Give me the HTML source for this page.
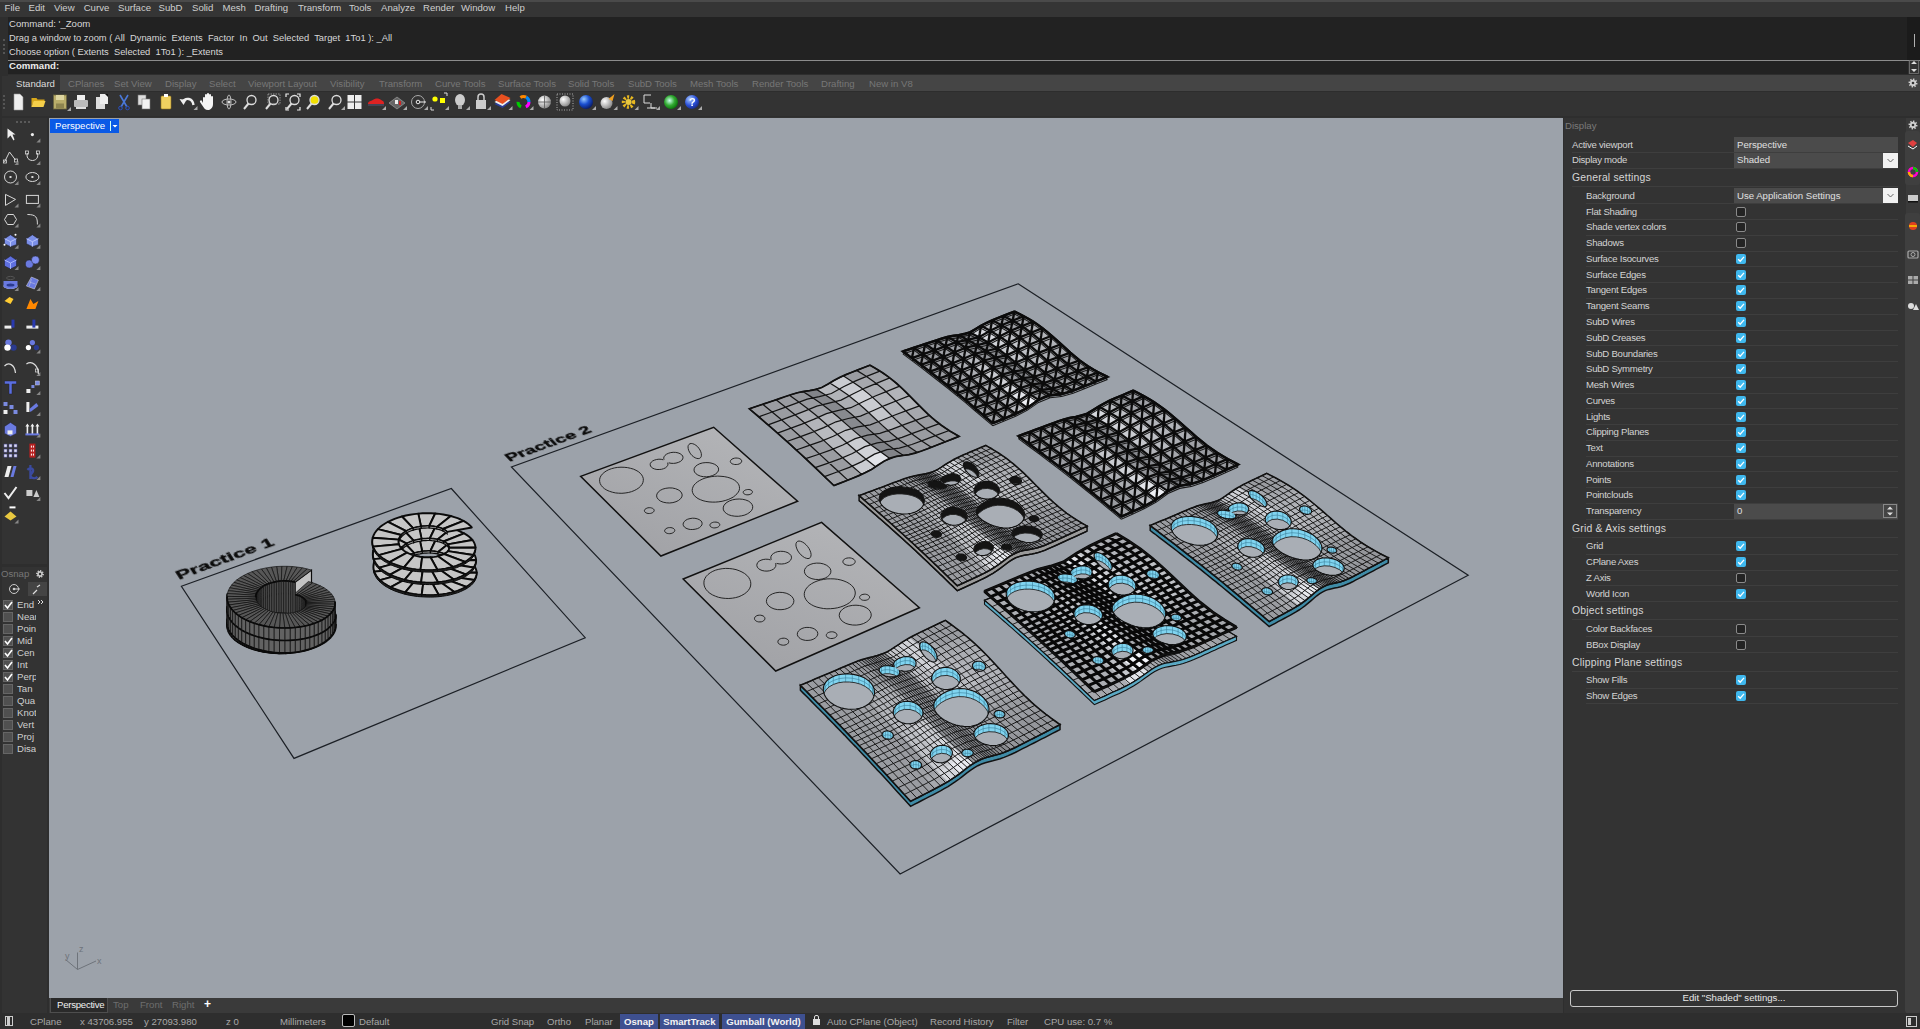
<!DOCTYPE html><html><head><meta charset="utf-8"><style>
*{margin:0;padding:0;box-sizing:border-box}
html,body{width:1920px;height:1029px;overflow:hidden;background:#333;font-family:"Liberation Sans",sans-serif;color:#d8d8d8}
.a{position:absolute}
.t{position:absolute;white-space:nowrap;font-size:9.6px;line-height:12px}
.pl{letter-spacing:-0.25px}
.r{position:absolute;left:1586px;width:312px;height:1px;background:#3e3e3e}
.cb{position:absolute;left:1736px;width:10px;height:10px;border-radius:2px}
.on{background:#3fb8ee}
.off{background:#232323;border:1px solid #8a8a8a}
.vb{position:absolute;left:1734px;width:164px;height:15px;background:#4b4b4b}
.dd{position:absolute;left:1883px;width:15px;height:15px;background:#f2f2f2}
.ock{position:absolute;left:3px;width:10px;height:10px;background:#505050;border:1px solid #666}
.st{position:absolute;top:1014px;height:15px;white-space:nowrap;font-size:9.6px;line-height:15px;color:#a8a8a8}
</style></head><body>
<div class="a" style="left:0;top:0;width:1920px;height:2px;background:#4a4a4a"></div>
<div class="a" style="left:0;top:2px;width:1920px;height:15px;background:#353535"></div>
<div class="t" style="left:4.6px;top:2px;color:#cfcfcf">File</div>
<div class="t" style="left:28.5px;top:2px;color:#cfcfcf">Edit</div>
<div class="t" style="left:54px;top:2px;color:#cfcfcf">View</div>
<div class="t" style="left:83.7px;top:2px;color:#cfcfcf">Curve</div>
<div class="t" style="left:118px;top:2px;color:#cfcfcf">Surface</div>
<div class="t" style="left:158.5px;top:2px;color:#cfcfcf">SubD</div>
<div class="t" style="left:192px;top:2px;color:#cfcfcf">Solid</div>
<div class="t" style="left:222.5px;top:2px;color:#cfcfcf">Mesh</div>
<div class="t" style="left:254.5px;top:2px;color:#cfcfcf">Drafting</div>
<div class="t" style="left:298px;top:2px;color:#cfcfcf">Transform</div>
<div class="t" style="left:349px;top:2px;color:#cfcfcf">Tools</div>
<div class="t" style="left:381px;top:2px;color:#cfcfcf">Analyze</div>
<div class="t" style="left:423px;top:2px;color:#cfcfcf">Render</div>
<div class="t" style="left:461px;top:2px;color:#cfcfcf">Window</div>
<div class="t" style="left:505px;top:2px;color:#cfcfcf">Help</div>
<div class="a" style="left:0;top:17px;width:8px;height:57px;background:#2e2e2e"></div>
<div class="a" style="left:8px;top:17px;width:1900px;height:57px;background:#222"></div>
<div class="a" style="left:1907px;top:17px;width:13px;height:43px;background:#1b1b1b"></div>
<div class="a" style="left:1914px;top:34px;width:1px;height:13px;background:#b0b0b0"></div>
<div class="a" style="left:8px;top:60px;width:1912px;height:1px;background:#8c8c8c"></div>
<div class="t" style="left:9px;top:18px">Command: '_Zoom</div>
<div class="t" style="left:9px;top:32px;font-size:9.35px">Drag a window to zoom ( All&nbsp; Dynamic&nbsp; Extents&nbsp; Factor&nbsp; In&nbsp; Out&nbsp; Selected&nbsp; Target&nbsp; 1To1 ): _All</div>
<div class="t" style="left:9px;top:46px;font-size:9.35px">Choose option ( Extents&nbsp; Selected&nbsp; 1To1 ): _Extents</div>
<div class="t" style="left:9px;top:60px;color:#ececec;font-weight:bold">Command:</div>
<div class="a" style="left:3px;top:39px;width:2px;height:2px;background:#555"></div>
<div class="a" style="left:3px;top:44px;width:2px;height:2px;background:#555"></div>
<div class="a" style="left:3px;top:48px;width:2px;height:2px;background:#555"></div>
<div class="a" style="left:3px;top:52px;width:2px;height:2px;background:#555"></div>
<div class="a" style="left:0;top:74px;width:1920px;height:43px;background:#2e2e2e"></div>
<div class="a" style="left:2px;top:76px;width:1918px;height:40px;background:#333"></div>
<div class="a" style="left:8px;top:75px;width:1912px;height:16px;background:#454545"></div>
<div class="a" style="left:8px;top:91px;width:1912px;height:1px;background:#2d2d2d"></div>
<div class="a" style="left:8px;top:75px;width:52px;height:17px;background:#333"></div>
<div class="t" style="left:16px;top:78px;color:#dcdcdc">Standard</div>
<div class="t" style="left:68px;top:78px;color:#777">CPlanes</div>
<div class="t" style="left:114px;top:78px;color:#777">Set View</div>
<div class="t" style="left:165px;top:78px;color:#777">Display</div>
<div class="t" style="left:209px;top:78px;color:#777">Select</div>
<div class="t" style="left:248px;top:78px;color:#777">Viewport Layout</div>
<div class="t" style="left:330px;top:78px;color:#777">Visibility</div>
<div class="t" style="left:379px;top:78px;color:#777">Transform</div>
<div class="t" style="left:435px;top:78px;color:#777">Curve Tools</div>
<div class="t" style="left:498px;top:78px;color:#777">Surface Tools</div>
<div class="t" style="left:568px;top:78px;color:#777">Solid Tools</div>
<div class="t" style="left:628px;top:78px;color:#777">SubD Tools</div>
<div class="t" style="left:690px;top:78px;color:#777">Mesh Tools</div>
<div class="t" style="left:752px;top:78px;color:#777">Render Tools</div>
<div class="t" style="left:821px;top:78px;color:#777">Drafting</div>
<div class="t" style="left:869px;top:78px;color:#777">New in V8</div>
<div class="a" style="left:3px;top:95px;width:2px;height:2px;background:#555"></div>
<div class="a" style="left:3px;top:99px;width:2px;height:2px;background:#555"></div>
<div class="a" style="left:3px;top:103px;width:2px;height:2px;background:#555"></div>
<div class="a" style="left:3px;top:107px;width:2px;height:2px;background:#555"></div>
<div class="a" style="left:0;top:117px;width:49px;height:896px;background:#2e2e2e"></div>
<div class="a" style="left:2px;top:118px;width:45px;height:446px;background:#333"></div>
<div class="a" style="left:16px;top:121px;width:2px;height:2px;background:#5a5a5a"></div>
<div class="a" style="left:20px;top:121px;width:2px;height:2px;background:#5a5a5a"></div>
<div class="a" style="left:24px;top:121px;width:2px;height:2px;background:#5a5a5a"></div>
<div class="a" style="left:28px;top:121px;width:2px;height:2px;background:#5a5a5a"></div>
<div class="a" style="left:2px;top:567px;width:45px;height:446px;background:#333"></div>
<div class="t" style="left:1px;top:568px;color:#777">Osnap</div>
<div class="a" style="left:28px;top:582px;width:19px;height:14px;background:#444"></div>
<div class="ock" style="top:600px"></div>
<div class="t" style="left:17px;top:599px;color:#d0d0d0;width:19px;overflow:hidden">End</div>
<div class="ock" style="top:612px"></div>
<div class="t" style="left:17px;top:611px;color:#d0d0d0;width:19px;overflow:hidden">Near</div>
<div class="ock" style="top:624px"></div>
<div class="t" style="left:17px;top:623px;color:#d0d0d0;width:19px;overflow:hidden">Poin</div>
<div class="ock" style="top:636px"></div>
<div class="t" style="left:17px;top:635px;color:#d0d0d0;width:19px;overflow:hidden">Mid</div>
<div class="ock" style="top:648px"></div>
<div class="t" style="left:17px;top:647px;color:#d0d0d0;width:19px;overflow:hidden">Cen</div>
<div class="ock" style="top:660px"></div>
<div class="t" style="left:17px;top:659px;color:#d0d0d0;width:19px;overflow:hidden">Int</div>
<div class="ock" style="top:672px"></div>
<div class="t" style="left:17px;top:671px;color:#d0d0d0;width:19px;overflow:hidden">Perp</div>
<div class="ock" style="top:684px"></div>
<div class="t" style="left:17px;top:683px;color:#d0d0d0;width:19px;overflow:hidden">Tan</div>
<div class="ock" style="top:696px"></div>
<div class="t" style="left:17px;top:695px;color:#d0d0d0;width:19px;overflow:hidden">Qua</div>
<div class="ock" style="top:708px"></div>
<div class="t" style="left:17px;top:707px;color:#d0d0d0;width:19px;overflow:hidden">Knot</div>
<div class="ock" style="top:720px"></div>
<div class="t" style="left:17px;top:719px;color:#d0d0d0;width:19px;overflow:hidden">Vert</div>
<div class="ock" style="top:732px"></div>
<div class="t" style="left:17px;top:731px;color:#d0d0d0;width:19px;overflow:hidden">Proj</div>
<div class="ock" style="top:744px"></div>
<div class="t" style="left:17px;top:743px;color:#d0d0d0;width:19px;overflow:hidden">Disa</div>
<div class="a" style="left:1562px;top:117px;width:358px;height:896px;background:#2e2e2e"></div>
<div class="a" style="left:1564px;top:118px;width:342px;height:895px;background:#333"></div>
<div class="a" style="left:1906px;top:118px;width:14px;height:895px;background:#3a3a3a"></div>
<div class="t" style="left:1565px;top:120px;color:#7a7a7a">Display</div>
<div class="t pl" style="left:1572px;top:138.6px;color:#d4d4d4">Active viewport</div>
<div class="r" style="left:1572px;width:326px;top:152.1px"></div>
<div class="vb" style="top:137.1px"></div>
<div class="t" style="left:1737px;top:138.6px;color:#e0e0e0">Perspective</div>
<div class="t pl" style="left:1572px;top:154.4px;color:#d4d4d4">Display mode</div>
<div class="r" style="left:1572px;width:326px;top:167.9px"></div>
<div class="vb" style="top:152.9px"></div>
<div class="t" style="left:1737px;top:154.4px;color:#e0e0e0">Shaded</div>
<div class="dd" style="top:152.9px"></div>
<svg class="a" style="left:1883px;top:152.9px" width="15" height="15"><path d="M4.5,6L7.5,9L10.5,6" stroke="#666" stroke-width="1" fill="none"/></svg>
<div class="t" style="left:1572px;top:171.4px;font-size:10.4px;line-height:14px;color:#d6d6d6;letter-spacing:0.2px">General settings</div>
<div class="r" style="left:1572px;width:326px;top:186.4px"></div>
<div class="t pl" style="left:1586px;top:189.5px;color:#d4d4d4">Background</div>
<div class="r" style="left:1586px;width:312px;top:203.0px"></div>
<div class="vb" style="top:188.0px"></div>
<div class="t" style="left:1737px;top:189.5px;color:#e0e0e0">Use Application Settings</div>
<div class="dd" style="top:188.0px"></div>
<svg class="a" style="left:1883px;top:188.0px" width="15" height="15"><path d="M4.5,6L7.5,9L10.5,6" stroke="#666" stroke-width="1" fill="none"/></svg>
<div class="t pl" style="left:1586px;top:205.5px;color:#d4d4d4">Flat Shading</div>
<div class="r" style="left:1586px;width:312px;top:219.0px"></div>
<div class="cb off" style="top:206.5px"></div>
<div class="t pl" style="left:1586px;top:221.3px;color:#d4d4d4">Shade vertex colors</div>
<div class="r" style="left:1586px;width:312px;top:234.8px"></div>
<div class="cb off" style="top:222.3px"></div>
<div class="t pl" style="left:1586px;top:237.1px;color:#d4d4d4">Shadows</div>
<div class="r" style="left:1586px;width:312px;top:250.6px"></div>
<div class="cb off" style="top:238.1px"></div>
<div class="t pl" style="left:1586px;top:252.9px;color:#d4d4d4">Surface Isocurves</div>
<div class="r" style="left:1586px;width:312px;top:266.4px"></div>
<div class="cb on" style="top:253.9px"></div>
<svg class="a" style="left:1736px;top:253.9px" width="10" height="10"><path d="M2.2,5.2L4.2,7.2L8,2.8" stroke="#fff" stroke-width="1.3" fill="none"/></svg>
<div class="t pl" style="left:1586px;top:268.7px;color:#d4d4d4">Surface Edges</div>
<div class="r" style="left:1586px;width:312px;top:282.2px"></div>
<div class="cb on" style="top:269.7px"></div>
<svg class="a" style="left:1736px;top:269.7px" width="10" height="10"><path d="M2.2,5.2L4.2,7.2L8,2.8" stroke="#fff" stroke-width="1.3" fill="none"/></svg>
<div class="t pl" style="left:1586px;top:284.4px;color:#d4d4d4">Tangent Edges</div>
<div class="r" style="left:1586px;width:312px;top:297.9px"></div>
<div class="cb on" style="top:285.4px"></div>
<svg class="a" style="left:1736px;top:285.4px" width="10" height="10"><path d="M2.2,5.2L4.2,7.2L8,2.8" stroke="#fff" stroke-width="1.3" fill="none"/></svg>
<div class="t pl" style="left:1586px;top:300.2px;color:#d4d4d4">Tangent Seams</div>
<div class="r" style="left:1586px;width:312px;top:313.7px"></div>
<div class="cb on" style="top:301.2px"></div>
<svg class="a" style="left:1736px;top:301.2px" width="10" height="10"><path d="M2.2,5.2L4.2,7.2L8,2.8" stroke="#fff" stroke-width="1.3" fill="none"/></svg>
<div class="t pl" style="left:1586px;top:316.0px;color:#d4d4d4">SubD Wires</div>
<div class="r" style="left:1586px;width:312px;top:329.5px"></div>
<div class="cb on" style="top:317.0px"></div>
<svg class="a" style="left:1736px;top:317.0px" width="10" height="10"><path d="M2.2,5.2L4.2,7.2L8,2.8" stroke="#fff" stroke-width="1.3" fill="none"/></svg>
<div class="t pl" style="left:1586px;top:331.7px;color:#d4d4d4">SubD Creases</div>
<div class="r" style="left:1586px;width:312px;top:345.2px"></div>
<div class="cb on" style="top:332.7px"></div>
<svg class="a" style="left:1736px;top:332.7px" width="10" height="10"><path d="M2.2,5.2L4.2,7.2L8,2.8" stroke="#fff" stroke-width="1.3" fill="none"/></svg>
<div class="t pl" style="left:1586px;top:347.5px;color:#d4d4d4">SubD Boundaries</div>
<div class="r" style="left:1586px;width:312px;top:361.0px"></div>
<div class="cb on" style="top:348.5px"></div>
<svg class="a" style="left:1736px;top:348.5px" width="10" height="10"><path d="M2.2,5.2L4.2,7.2L8,2.8" stroke="#fff" stroke-width="1.3" fill="none"/></svg>
<div class="t pl" style="left:1586px;top:363.3px;color:#d4d4d4">SubD Symmetry</div>
<div class="r" style="left:1586px;width:312px;top:376.8px"></div>
<div class="cb on" style="top:364.3px"></div>
<svg class="a" style="left:1736px;top:364.3px" width="10" height="10"><path d="M2.2,5.2L4.2,7.2L8,2.8" stroke="#fff" stroke-width="1.3" fill="none"/></svg>
<div class="t pl" style="left:1586px;top:379.0px;color:#d4d4d4">Mesh Wires</div>
<div class="r" style="left:1586px;width:312px;top:392.5px"></div>
<div class="cb on" style="top:380.0px"></div>
<svg class="a" style="left:1736px;top:380.0px" width="10" height="10"><path d="M2.2,5.2L4.2,7.2L8,2.8" stroke="#fff" stroke-width="1.3" fill="none"/></svg>
<div class="t pl" style="left:1586px;top:394.8px;color:#d4d4d4">Curves</div>
<div class="r" style="left:1586px;width:312px;top:408.3px"></div>
<div class="cb on" style="top:395.8px"></div>
<svg class="a" style="left:1736px;top:395.8px" width="10" height="10"><path d="M2.2,5.2L4.2,7.2L8,2.8" stroke="#fff" stroke-width="1.3" fill="none"/></svg>
<div class="t pl" style="left:1586px;top:410.6px;color:#d4d4d4">Lights</div>
<div class="r" style="left:1586px;width:312px;top:424.1px"></div>
<div class="cb on" style="top:411.6px"></div>
<svg class="a" style="left:1736px;top:411.6px" width="10" height="10"><path d="M2.2,5.2L4.2,7.2L8,2.8" stroke="#fff" stroke-width="1.3" fill="none"/></svg>
<div class="t pl" style="left:1586px;top:426.4px;color:#d4d4d4">Clipping Planes</div>
<div class="r" style="left:1586px;width:312px;top:439.9px"></div>
<div class="cb on" style="top:427.4px"></div>
<svg class="a" style="left:1736px;top:427.4px" width="10" height="10"><path d="M2.2,5.2L4.2,7.2L8,2.8" stroke="#fff" stroke-width="1.3" fill="none"/></svg>
<div class="t pl" style="left:1586px;top:442.1px;color:#d4d4d4">Text</div>
<div class="r" style="left:1586px;width:312px;top:455.6px"></div>
<div class="cb on" style="top:443.1px"></div>
<svg class="a" style="left:1736px;top:443.1px" width="10" height="10"><path d="M2.2,5.2L4.2,7.2L8,2.8" stroke="#fff" stroke-width="1.3" fill="none"/></svg>
<div class="t pl" style="left:1586px;top:457.9px;color:#d4d4d4">Annotations</div>
<div class="r" style="left:1586px;width:312px;top:471.4px"></div>
<div class="cb on" style="top:458.9px"></div>
<svg class="a" style="left:1736px;top:458.9px" width="10" height="10"><path d="M2.2,5.2L4.2,7.2L8,2.8" stroke="#fff" stroke-width="1.3" fill="none"/></svg>
<div class="t pl" style="left:1586px;top:473.7px;color:#d4d4d4">Points</div>
<div class="r" style="left:1586px;width:312px;top:487.2px"></div>
<div class="cb on" style="top:474.7px"></div>
<svg class="a" style="left:1736px;top:474.7px" width="10" height="10"><path d="M2.2,5.2L4.2,7.2L8,2.8" stroke="#fff" stroke-width="1.3" fill="none"/></svg>
<div class="t pl" style="left:1586px;top:489.4px;color:#d4d4d4">Pointclouds</div>
<div class="r" style="left:1586px;width:312px;top:502.9px"></div>
<div class="cb on" style="top:490.4px"></div>
<svg class="a" style="left:1736px;top:490.4px" width="10" height="10"><path d="M2.2,5.2L4.2,7.2L8,2.8" stroke="#fff" stroke-width="1.3" fill="none"/></svg>
<div class="t pl" style="left:1586px;top:505.2px;color:#d4d4d4">Transparency</div>
<div class="r" style="left:1586px;width:312px;top:518.7px"></div>
<div class="vb" style="top:503.7px"></div>
<div class="t" style="left:1737px;top:505.2px;color:#e0e0e0">0</div>
<div class="a" style="left:1883px;top:504.2px;width:14px;height:14px;border:1px solid #888;background:#444"></div>
<svg class="a" style="left:1883px;top:504.2px" width="14" height="14"><path d="M4,5.5L7,2.5L10,5.5ZM4,8.5L7,11.5L10,8.5Z" fill="#ddd"/></svg>
<div class="t" style="left:1572px;top:522.0px;font-size:10.4px;line-height:14px;color:#d6d6d6;letter-spacing:0.2px">Grid &amp; Axis settings</div>
<div class="r" style="left:1572px;width:326px;top:537.0px"></div>
<div class="t pl" style="left:1586px;top:540.3px;color:#d4d4d4">Grid</div>
<div class="r" style="left:1586px;width:312px;top:553.8px"></div>
<div class="cb on" style="top:541.3px"></div>
<svg class="a" style="left:1736px;top:541.3px" width="10" height="10"><path d="M2.2,5.2L4.2,7.2L8,2.8" stroke="#fff" stroke-width="1.3" fill="none"/></svg>
<div class="t pl" style="left:1586px;top:556.0px;color:#d4d4d4">CPlane Axes</div>
<div class="r" style="left:1586px;width:312px;top:569.5px"></div>
<div class="cb on" style="top:557.0px"></div>
<svg class="a" style="left:1736px;top:557.0px" width="10" height="10"><path d="M2.2,5.2L4.2,7.2L8,2.8" stroke="#fff" stroke-width="1.3" fill="none"/></svg>
<div class="t pl" style="left:1586px;top:571.8px;color:#d4d4d4">Z Axis</div>
<div class="r" style="left:1586px;width:312px;top:585.3px"></div>
<div class="cb off" style="top:572.8px"></div>
<div class="t pl" style="left:1586px;top:587.6px;color:#d4d4d4">World Icon</div>
<div class="r" style="left:1586px;width:312px;top:601.1px"></div>
<div class="cb on" style="top:588.6px"></div>
<svg class="a" style="left:1736px;top:588.6px" width="10" height="10"><path d="M2.2,5.2L4.2,7.2L8,2.8" stroke="#fff" stroke-width="1.3" fill="none"/></svg>
<div class="t" style="left:1572px;top:604.2px;font-size:10.4px;line-height:14px;color:#d6d6d6;letter-spacing:0.2px">Object settings</div>
<div class="r" style="left:1572px;width:326px;top:619.2px"></div>
<div class="t pl" style="left:1586px;top:622.8px;color:#d4d4d4">Color Backfaces</div>
<div class="r" style="left:1586px;width:312px;top:636.3px"></div>
<div class="cb off" style="top:623.8px"></div>
<div class="t pl" style="left:1586px;top:638.5px;color:#d4d4d4">BBox Display</div>
<div class="r" style="left:1586px;width:312px;top:652.0px"></div>
<div class="cb off" style="top:639.5px"></div>
<div class="t" style="left:1572px;top:655.5px;font-size:10.4px;line-height:14px;color:#d6d6d6;letter-spacing:0.2px">Clipping Plane settings</div>
<div class="r" style="left:1572px;width:326px;top:670.5px"></div>
<div class="t pl" style="left:1586px;top:674.0px;color:#d4d4d4">Show Fills</div>
<div class="r" style="left:1586px;width:312px;top:687.5px"></div>
<div class="cb on" style="top:675.0px"></div>
<svg class="a" style="left:1736px;top:675.0px" width="10" height="10"><path d="M2.2,5.2L4.2,7.2L8,2.8" stroke="#fff" stroke-width="1.3" fill="none"/></svg>
<div class="t pl" style="left:1586px;top:689.8px;color:#d4d4d4">Show Edges</div>
<div class="r" style="left:1586px;width:312px;top:703.3px"></div>
<div class="cb on" style="top:690.8px"></div>
<svg class="a" style="left:1736px;top:690.8px" width="10" height="10"><path d="M2.2,5.2L4.2,7.2L8,2.8" stroke="#fff" stroke-width="1.3" fill="none"/></svg>
<div class="a" style="left:1570px;top:990px;width:328px;height:17px;border:1.5px solid #c8c8c8;border-radius:3px"></div>
<div class="t" style="left:1570px;top:992px;width:328px;text-align:center;color:#e8e8e8">Edit "Shaded" settings...</div>
<div class="a" style="left:49px;top:118px;width:1514px;height:880px;background:#9ca2aa;overflow:hidden">
<svg width="1920" height="1029" style="position:absolute;left:-49px;top:-118px" viewBox="0 0 1920 1029"><polygon points="451.3,488.5 585.2,637.7 294.0,758.4 181.4,586.3" fill="none" stroke="#1c2026" stroke-width="1.2"/><polygon points="1018.1,283.8 1468.2,575.3 900.1,874.0 511.4,467.0" fill="none" stroke="#1c2026" stroke-width="1.2"/><linearGradient id="g1" gradientUnits="userSpaceOnUse" x1="660.9" y1="556.0" x2="713.7" y2="427.3"><stop offset="0" stop-color="#a2a3a7"/><stop offset="1" stop-color="#b2b3b6"/></linearGradient><polygon points="580.6,476.4 713.7,427.3 797.6,501.3 660.9,556" fill="url(#g1)" stroke="#111" stroke-width="1.5" stroke-linejoin="miter"/><path d="M640.2,473.2 641.7,474.9 642.7,476.7 643.3,478.6 643.3,480.5 642.9,482.5 642,484.4 640.7,486.1 638.9,487.8 636.7,489.3 634.2,490.6 631.4,491.7 628.3,492.5 625.1,493 621.9,493.3 618.6,493.2 615.4,492.9 612.3,492.2 609.5,491.3 606.9,490.2 604.6,488.8 602.7,487.2 601.3,485.5 600.2,483.6 599.7,481.7 599.6,479.7 600,477.8 600.9,475.9 602.3,474.1 604.1,472.5 606.2,471 608.7,469.7 611.5,468.7 614.5,467.9 617.7,467.4 621,467.2 624.2,467.3 627.4,467.6 630.5,468.3 633.4,469.1 636,470.3 638.3,471.6 640.2,473.2 M667.6,462.7 668,464.1 667.7,465.4 666.8,466.7 665.5,467.8 663.6,468.7 661.5,469.3 659.2,469.5 656.9,469.5 654.7,469 652.9,468.3 651.4,467.2 650.5,466 650.2,464.7 650.4,463.3 651.3,462.1 652.6,461 654.5,460.1 656.6,459.5 658.9,459.2 661.2,459.3 663.3,459.8 M681.7,454.8 682.7,456 683,457.4 682.7,458.9 681.8,460.3 680.3,461.5 678.3,462.4 676,463.1 673.5,463.4 671,463.3 668.7,462.8 M664.1,459.6 663.7,458.2 664,456.8 665,455.4 666.5,454.2 668.4,453.3 670.7,452.6 673.2,452.3 675.7,452.4 678.1,452.9 680.1,453.7 681.7,454.8 M700,450 700.8,451.8 701.3,453.6 701.4,455.2 701.2,456.6 700.5,457.7 699.5,458.4 698.2,458.6 696.8,458.4 695.2,457.8 693.6,456.8 692,455.5 690.6,453.9 689.5,452.1 688.6,450.2 688.2,448.5 688,446.8 688.3,445.4 689,444.4 690,443.7 691.2,443.5 692.7,443.7 694.3,444.3 695.9,445.3 697.5,446.6 698.8,448.2 700,450 M740.9,459.4 741.5,460.2 741.7,461 741.6,461.9 741.1,462.7 740.2,463.4 739.1,464 737.7,464.4 736.2,464.5 734.7,464.5 733.4,464.2 732.1,463.8 731.2,463.1 730.6,462.4 730.3,461.5 730.5,460.7 731,459.9 731.9,459.2 733,458.6 734.4,458.2 735.9,458 737.3,458.1 738.7,458.3 739.9,458.8 740.9,459.4 M716.8,465.7 718.1,467.3 718.6,469.1 718.3,471 717.1,472.7 715.2,474.3 712.7,475.5 709.8,476.4 706.6,476.8 703.4,476.7 700.4,476.1 697.8,475 695.8,473.6 694.5,472 694,470.1 694.3,468.3 695.4,466.5 697.3,465 699.8,463.7 702.7,462.9 705.9,462.6 709.1,462.7 712.1,463.3 714.7,464.3 716.8,465.7 M738.9,484.9 739.4,486.7 739.5,488.5 739.2,490.3 738.3,492.1 737,493.8 735.3,495.4 733.3,497 730.9,498.3 728.2,499.5 725.2,500.5 722.1,501.3 718.8,501.8 715.5,502.1 712.2,502.1 709,501.9 705.9,501.4 703,500.7 700.4,499.7 698,498.6 696.1,497.2 694.4,495.7 693.3,494.1 692.5,492.3 692.2,490.5 692.4,488.7 693,486.9 694,485.1 695.5,483.5 697.4,481.9 699.6,480.5 702.2,479.2 705,478.1 708,477.3 711.2,476.7 714.4,476.3 717.7,476.1 721,476.3 724.2,476.6 727.2,477.2 730,478 732.5,479.1 734.7,480.3 736.5,481.7 737.9,483.3 738.9,484.9 M680.3,491.2 681.6,493 682.2,494.9 681.8,496.9 680.6,498.7 678.6,500.4 676,501.7 672.9,502.6 669.6,503 666.3,502.8 663.2,502.2 660.5,501.1 658.5,499.6 657.1,497.8 656.6,495.9 657,493.9 658.2,492.1 660.2,490.4 662.8,489.1 665.8,488.3 669.1,487.9 672.4,488 675.5,488.7 678.2,489.8 680.3,491.2 M751.8,490.6 752.3,491.2 752.4,491.9 752.3,492.6 751.9,493.3 751.2,493.9 750.2,494.3 749.1,494.7 748,494.8 746.8,494.8 745.6,494.6 744.7,494.2 743.9,493.7 743.4,493.1 743.2,492.4 743.3,491.7 743.8,491 744.5,490.5 745.4,490 746.5,489.7 747.7,489.5 748.9,489.5 750,489.7 751,490.1 751.8,490.6 M750.6,502.6 752,504.4 752.7,506.3 752.6,508.3 751.7,510.3 750,512.1 747.7,513.7 744.9,515 741.7,515.8 738.3,516.3 734.8,516.2 731.6,515.7 728.7,514.8 726.3,513.4 724.5,511.8 723.4,509.9 723.2,507.9 723.7,505.9 725,504 727,502.3 729.5,500.9 732.6,499.8 735.9,499.2 739.3,499 742.7,499.3 745.8,500 748.5,501.1 750.6,502.6 M653.5,509 654,509.7 654.2,510.4 654,511.2 653.5,511.9 652.8,512.5 651.8,513 650.6,513.4 649.3,513.5 648.1,513.5 646.9,513.2 645.9,512.8 645.1,512.2 644.6,511.5 644.4,510.8 644.5,510 645,509.3 645.8,508.7 646.8,508.2 647.9,507.8 649.2,507.7 650.5,507.7 651.6,508 652.7,508.4 653.5,509 M700.8,520.7 701.8,522 702.1,523.4 701.9,524.9 700.9,526.3 699.5,527.6 697.5,528.6 695.2,529.2 692.8,529.5 690.3,529.5 688,529 686,528.2 684.5,527.1 683.5,525.8 683.1,524.3 683.4,522.9 684.3,521.5 685.8,520.2 687.7,519.2 690,518.6 692.5,518.2 694.9,518.3 697.2,518.8 699.2,519.6 700.8,520.7 M719.1,523.3 719.6,524 719.8,524.7 719.6,525.5 719.1,526.2 718.4,526.8 717.4,527.4 716.2,527.7 714.9,527.9 713.6,527.9 712.4,527.6 711.4,527.2 710.6,526.7 710.1,526 709.9,525.2 710,524.5 710.5,523.7 711.3,523.1 712.3,522.6 713.5,522.2 714.7,522.1 716,522.1 717.2,522.3 718.3,522.7 719.1,523.3 M674,528.9 674.6,529.6 674.8,530.4 674.6,531.2 674.1,531.9 673.3,532.6 672.3,533.1 671.1,533.5 669.8,533.7 668.4,533.6 667.2,533.4 666.2,532.9 665.3,532.3 664.8,531.6 664.6,530.8 664.8,530 665.3,529.3 666.1,528.6 667.1,528.1 668.3,527.7 669.6,527.6 670.9,527.6 672.2,527.9 673.2,528.3 674,528.9" fill="none" stroke="#1e1e1e" stroke-width="0.95"/><path d="M749.3,408.8 762.7,404.3 772.2,412 758.7,416.8ZM758.7,416.8 772.2,412 781.6,419.9 768.1,424.9ZM777.5,433.1 791.1,428.1 800.5,436.6 786.9,441.5ZM786.9,441.5 800.5,436.6 810,445.2 796.3,450ZM796.3,450 810,445.2 819.4,454 805.7,458.7ZM805.7,458.7 819.4,454 828.9,462.8 815.1,467.6ZM815.1,467.6 828.9,462.8 838.4,471.5 824.5,476.6ZM762.7,404.3 776.1,399.8 785.6,407.2 772.2,412ZM772.2,412 785.6,407.2 795.1,414.9 781.6,419.9ZM810,445.2 823.7,440.3 833.2,449.1 819.4,454ZM819.4,454 833.2,449.1 842.7,457.8 828.9,462.8ZM828.9,462.8 842.7,457.8 852.2,466.2 838.4,471.5ZM776.1,399.8 789.5,395.2 799.1,402.1 785.6,407.2ZM799.1,402.1 812.6,397.7 822.2,404.4 808.7,409.4ZM855.1,417.5 868.7,412.6 878.4,421.8 864.7,426ZM897.9,438.8 911.7,433.7 921.5,440.9 907.6,445.9ZM907.6,445.9 921.5,440.9 931.3,447.3 917.4,452.5ZM843.2,375.8 856.6,370.4 866.4,376.4 853,382ZM901.9,425.3 915.7,420.4 925.5,428.7 911.7,433.7ZM911.7,433.7 925.5,428.7 935.3,435.7 921.5,440.9ZM921.5,440.9 935.3,435.7 945.2,441.9 931.3,447.3ZM856.6,370.4 870,365.2 879.9,371.1 866.4,376.4ZM915.7,420.4 929.4,415.4 939.3,423.7 925.5,428.7ZM925.5,428.7 939.3,423.7 949.2,430.5 935.3,435.7ZM935.3,435.7 949.2,430.5 959.1,436.4 945.2,441.9Z" fill="#9a9ca1" stroke="#9a9ca1" stroke-width="0.8"/><path d="M768.1,424.9 781.6,419.9 791.1,428.1 777.5,433.1ZM824.5,476.6 838.4,471.5 847.8,480.1 833.9,485.6ZM781.6,419.9 795.1,414.9 804.7,423 791.1,428.1ZM791.1,428.1 804.7,423 814.2,431.5 800.5,436.6ZM800.5,436.6 814.2,431.5 823.7,440.3 810,445.2ZM838.4,471.5 852.2,466.2 861.7,474.4 847.8,480.1ZM785.6,407.2 799.1,402.1 808.7,409.4 795.1,414.9ZM808.7,409.4 822.2,404.4 831.8,411.8 818.2,417.3ZM888.2,430.7 901.9,425.3 911.7,433.7 897.9,438.8ZM866.4,376.4 879.9,371.1 889.8,377.9 876.3,383.4Z" fill="#a0a2a7" stroke="#a0a2a7" stroke-width="0.8"/><path d="M795.1,414.9 808.7,409.4 818.2,417.3 804.7,423ZM835.7,401.9 849.2,396 859,403.9 845.4,409.3ZM862.8,389 876.3,383.4 886.1,391.6 872.5,397.2ZM876.3,383.4 889.8,377.9 899.7,386.2 886.1,391.6Z" fill="#acaeb3" stroke="#acaeb3" stroke-width="0.8"/><path d="M804.7,423 818.2,417.3 827.8,425.6 814.2,431.5ZM818.2,417.3 831.8,411.8 841.4,419.9 827.8,425.6ZM826,395.4 839.5,389.2 849.2,396 835.7,401.9ZM878.4,421.8 892.1,416.1 901.9,425.3 888.2,430.7ZM872.5,397.2 886.1,391.6 896,401 882.3,406.4ZM882.3,406.4 896,401 905.8,410.9 892.1,416.1ZM886.1,391.6 899.7,386.2 909.6,395.7 896,401ZM896,401 909.6,395.7 919.5,405.9 905.8,410.9Z" fill="#b2b4b9" stroke="#b2b4b9" stroke-width="0.8"/><path d="M814.2,431.5 827.8,425.6 837.4,434.3 823.7,440.3ZM823.7,440.3 837.4,434.3 846.9,442.9 833.2,449.1ZM833.2,449.1 846.9,442.9 856.5,451.2 842.7,457.8ZM827.8,425.6 841.4,419.9 851.1,428.3 837.4,434.3ZM816.4,389.4 829.8,383 839.5,389.2 826,395.4Z" fill="#b8babf" stroke="#b8babf" stroke-width="0.8"/><path d="M842.7,457.8 856.5,451.2 866.1,459.1 852.2,466.2ZM837.4,434.3 851.1,428.3 860.7,436.5 846.9,442.9Z" fill="#bec0c5" stroke="#bec0c5" stroke-width="0.8"/><path d="M852.2,466.2 866.1,459.1 875.6,466.7 861.7,474.4ZM846.9,442.9 860.7,436.5 870.3,444.3 856.5,451.2ZM829.8,383 843.2,375.8 853,382 839.5,389.2ZM839.5,389.2 853,382 862.8,389 849.2,396ZM859,403.9 872.5,397.2 882.3,406.4 868.7,412.6Z" fill="#caccd1" stroke="#caccd1" stroke-width="0.8"/><path d="M789.5,395.2 802.9,391.5 812.6,397.7 799.1,402.1ZM864.7,426 878.4,421.8 888.2,430.7 874.4,434.4ZM874.4,434.4 888.2,430.7 897.9,438.8 884.1,442.1Z" fill="#94969b" stroke="#94969b" stroke-width="0.8"/><path d="M856.5,451.2 870.3,444.3 879.9,451.5 866.1,459.1ZM849.2,396 862.8,389 872.5,397.2 859,403.9Z" fill="#d0d2d7" stroke="#d0d2d7" stroke-width="0.8"/><path d="M866.1,459.1 879.9,451.5 889.5,458.2 875.6,466.7Z" fill="#e2e4e9" stroke="#e2e4e9" stroke-width="0.8"/><path d="M802.9,391.5 816.4,389.4 826,395.4 812.6,397.7ZM860.7,436.5 874.4,434.4 884.1,442.1 870.3,444.3ZM870.3,444.3 884.1,442.1 893.8,449 879.9,451.5ZM879.9,451.5 893.8,449 903.5,455.4 889.5,458.2Z" fill="#828489" stroke="#828489" stroke-width="0.8"/><path d="M812.6,397.7 826,395.4 835.7,401.9 822.2,404.4ZM822.2,404.4 835.7,401.9 845.4,409.3 831.8,411.8ZM831.8,411.8 845.4,409.3 855.1,417.5 841.4,419.9ZM841.4,419.9 855.1,417.5 864.7,426 851.1,428.3ZM851.1,428.3 864.7,426 874.4,434.4 860.7,436.5ZM893.8,449 907.6,445.9 917.4,452.5 903.5,455.4Z" fill="#888a8f" stroke="#888a8f" stroke-width="0.8"/><path d="M845.4,409.3 859,403.9 868.7,412.6 855.1,417.5ZM853,382 866.4,376.4 876.3,383.4 862.8,389ZM892.1,416.1 905.8,410.9 915.7,420.4 901.9,425.3ZM905.8,410.9 919.5,405.9 929.4,415.4 915.7,420.4Z" fill="#a6a8ad" stroke="#a6a8ad" stroke-width="0.8"/><path d="M884.1,442.1 897.9,438.8 907.6,445.9 893.8,449Z" fill="#8e9095" stroke="#8e9095" stroke-width="0.8"/><path d="M868.7,412.6 882.3,406.4 892.1,416.1 878.4,421.8Z" fill="#c4c6cb" stroke="#c4c6cb" stroke-width="0.8"/><path d="M749.3,408.8 757.8,416 766.2,423.3 774.7,430.6 783.1,438.1 791.6,445.7 800.1,453.5 808.5,461.3 817,469.4 825.4,477.5 833.9,485.6 M762.7,404.3 771.2,411.3 779.7,418.3 788.2,425.6 796.8,433.2 805.3,440.9 813.8,448.7 822.3,456.6 830.8,464.5 839.3,472.3 847.8,480.1 M776.1,399.8 784.7,406.4 793.2,413.3 801.8,420.5 810.4,428.1 818.9,435.9 827.5,443.9 836,451.7 844.6,459.5 853.2,467 861.7,474.4 M789.5,395.2 798.1,401.4 806.8,407.9 815.4,414.8 824,422.2 832.6,430 841.2,437.8 849.8,445.5 858.4,452.9 867,459.9 875.6,466.7 M802.9,391.5 811.6,397.1 820.3,403 828.9,409.5 837.6,416.6 846.2,424.1 854.9,431.6 863.6,438.9 872.2,445.8 880.9,452.1 889.5,458.2 M816.4,389.4 825.1,394.8 833.8,400.5 842.5,407 851.2,414.1 859.9,421.7 868.6,429.4 877.3,436.8 886,443.5 894.7,449.7 903.5,455.4 M829.8,383 838.5,388.5 847.3,394.5 856,401.4 864.8,409 873.6,417.2 882.3,425.4 891.1,433.2 899.8,440.3 908.6,446.6 917.4,452.5 M843.2,375.8 852,381.4 860.8,387.5 869.6,394.6 878.4,402.6 887.2,411.2 896,419.9 904.8,428 913.7,435.2 922.5,441.5 931.3,447.3 M856.6,370.4 865.4,375.8 874.3,381.9 883.2,389 892,397.2 900.9,406 909.7,414.8 918.6,423 927.5,430.2 936.3,436.3 945.2,441.9 M870,365.2 878.9,370.4 887.8,376.4 896.7,383.5 905.6,391.8 914.5,400.8 923.5,409.8 932.4,418.1 941.3,425.2 950.2,431.2 959.1,436.4 M749.3,408.8 761.4,404.7 773.4,400.7 785.5,396.5 797.6,392.7 809.6,390.6 821.7,387.5 833.8,380.6 845.9,374.6 857.9,369.9 870,365.2 M758.7,416.8 770.8,412.5 782.9,408.2 795.1,403.7 807.2,399.2 819.3,396.6 831.4,393.5 843.5,386.8 855.7,380.9 867.8,375.9 879.9,371.1 M768.1,424.9 780.3,420.4 792.4,415.9 804.6,411.1 816.8,406.1 829,403.1 841.1,400.1 853.3,393.7 865.5,387.8 877.6,382.8 889.8,377.9 M777.5,433.1 789.7,428.6 801.9,424.1 814.2,419.1 826.4,413.7 838.6,410.4 850.8,407.7 863,401.7 875.3,396 887.5,391.1 899.7,386.2 M786.9,441.5 799.2,437.1 811.4,432.6 823.7,427.6 836,421.8 848.2,418.5 860.5,416.1 872.8,410.7 885.1,405.3 897.3,400.5 909.6,395.7 M796.3,450 808.6,445.7 820.9,441.3 833.3,436.3 845.6,430.3 857.9,426.9 870.2,424.9 882.5,420 894.9,415 907.2,410.4 919.5,405.9 M805.7,458.7 818.1,454.5 830.4,450.2 842.8,445 855.2,438.7 867.5,435.1 879.9,433.4 892.3,429.1 904.7,424.3 917,419.9 929.4,415.4 M815.1,467.6 827.5,463.3 839.9,458.8 852.4,453.5 864.8,446.6 877.2,442.8 889.6,441.2 902,437.3 914.5,432.7 926.9,428.2 939.3,423.7 M824.5,476.6 837,472 849.4,467.3 861.9,461.6 874.4,454.1 886.9,449.7 899.3,448.2 911.8,444.5 924.3,439.8 936.7,435.2 949.2,430.5 M833.9,485.6 846.4,480.7 858.9,475.6 871.5,469.4 884,461.2 896.5,456.3 909,454.6 921.5,451 934.1,446.2 946.6,441.3 959.1,436.4" fill="none" stroke="#141414" stroke-width="1.25"/><path d="M749.3,408.8 755.3,406.8 761.4,404.7 767.4,402.7 773.4,400.7 779.5,398.6 785.5,396.5 791.5,394.5 797.6,392.7 803.6,391.4 809.6,390.6 815.7,389.6 821.7,387.5 827.8,384.2 833.8,380.6 839.8,377.3 845.9,374.6 851.9,372.2 857.9,369.9 864,367.5 870,365.2 874.5,367.8 878.9,370.4 883.4,373.3 887.8,376.4 892.3,379.8 896.7,383.5 901.2,387.5 905.6,391.8 910.1,396.3 914.5,400.8 919,405.3 923.5,409.8 927.9,414.1 932.4,418.1 936.8,421.8 941.3,425.2 945.7,428.3 950.2,431.2 954.6,433.8 959.1,436.4 952.8,438.9 946.6,441.3 940.3,443.8 934.1,446.2 927.8,448.7 921.5,451 915.3,453.1 909,454.6 902.8,455.5 896.5,456.3 890.2,458 884,461.2 877.7,465.3 871.5,469.4 865.2,472.8 858.9,475.6 852.7,478.2 846.4,480.7 840.2,483.1 833.9,485.6 829.7,481.5 825.4,477.5 821.2,473.4 817,469.4 812.8,465.3 808.5,461.3 804.3,457.4 800.1,453.5 795.8,449.6 791.6,445.7 787.4,441.9 783.1,438.1 778.9,434.3 774.7,430.6 770.4,426.9 766.2,423.3 762,419.6 757.8,416 753.5,412.4Z" fill="none" stroke="#111" stroke-width="1.7"/><path d="M902.9,351.4 914.1,347.7 923.1,354.2 911.9,358.1ZM911.9,358.1 923.1,354.2 932.1,360.8 920.9,364.9ZM920.9,364.9 932.1,360.8 941.1,367.6 929.8,371.7ZM929.8,371.7 941.1,367.6 950.1,374.6 938.8,378.7ZM938.8,378.7 950.1,374.6 959.1,381.8 947.8,385.8ZM947.8,385.8 959.1,381.8 968.1,389.1 956.8,393.1ZM956.8,393.1 968.1,389.1 977.1,396.5 965.8,400.4ZM965.8,400.4 977.1,396.5 986.2,403.9 974.7,408ZM974.7,408 986.2,403.9 995.2,411.3 983.7,415.6ZM914.1,347.7 925.2,344 934.3,350.3 923.1,354.2ZM923.1,354.2 934.3,350.3 943.3,356.7 932.1,360.8ZM959.1,381.8 970.4,377.7 979.5,385.1 968.1,389.1ZM968.1,389.1 979.5,385.1 988.5,392.5 977.1,396.5ZM977.1,396.5 988.5,392.5 997.6,399.8 986.2,403.9ZM986.2,403.9 997.6,399.8 1006.6,406.8 995.2,411.3ZM925.2,344 936.4,340.3 945.5,346.2 934.3,350.3ZM936.4,340.3 947.5,336.9 956.6,342.1 945.5,346.2ZM1029.5,394.1 1041,390 1050.1,395.3 1038.6,399.9ZM1034.1,376.8 1045.4,373 1054.7,379.6 1043.2,383.1ZM1045.4,373 1056.8,368.6 1066.1,375.2 1054.7,379.6ZM1054.7,379.6 1066.1,375.2 1075.3,381 1063.9,385.3ZM1063.9,385.3 1075.3,381 1084.5,386.2 1073.1,390.7ZM992.2,320.3 1003.3,315.9 1012.6,320.7 1001.4,325.3ZM1056.8,368.6 1068.2,364.5 1077.5,371.1 1066.1,375.2ZM1066.1,375.2 1077.5,371.1 1086.8,376.6 1075.3,381ZM1075.3,381 1086.8,376.6 1096,381.5 1084.5,386.2ZM1003.3,315.9 1014.5,311.6 1023.8,316.2 1012.6,320.7ZM1068.2,364.5 1079.6,360.4 1088.9,366.9 1077.5,371.1ZM1077.5,371.1 1088.9,366.9 1098.2,372.3 1086.8,376.6ZM1086.8,376.6 1098.2,372.3 1107.5,376.9 1096,381.5Z" fill="#9a9ca1" stroke="#9a9ca1" stroke-width="0.8"/><path d="M983.7,415.6 995.2,411.3 1004.2,418.6 992.7,423.2ZM932.1,360.8 943.3,356.7 952.4,363.4 941.1,367.6ZM941.1,367.6 952.4,363.4 961.4,370.4 950.1,374.6ZM950.1,374.6 961.4,370.4 970.4,377.7 959.1,381.8ZM995.2,411.3 1006.6,406.8 1015.7,413.8 1004.2,418.6ZM934.3,350.3 945.5,346.2 954.5,352.3 943.3,356.7ZM945.5,346.2 956.6,342.1 965.8,347.7 954.5,352.3ZM1024.9,369.9 1036.2,365.6 1045.4,373 1034.1,376.8ZM1001.4,325.3 1012.6,320.7 1021.9,326.2 1010.7,330.8ZM1047.6,361 1058.9,356.8 1068.2,364.5 1056.8,368.6ZM1012.6,320.7 1023.8,316.2 1033.1,321.6 1021.9,326.2ZM1058.9,356.8 1070.3,352.7 1079.6,360.4 1068.2,364.5Z" fill="#a0a2a7" stroke="#a0a2a7" stroke-width="0.8"/><path d="M943.3,356.7 954.5,352.3 963.6,358.8 952.4,363.4ZM1036.2,365.6 1047.6,361 1056.8,368.6 1045.4,373Z" fill="#a6a8ad" stroke="#a6a8ad" stroke-width="0.8"/><path d="M952.4,363.4 963.6,358.8 972.7,365.8 961.4,370.4ZM961.4,370.4 972.7,365.8 981.8,373 970.4,377.7ZM970.4,377.7 981.8,373 990.8,380.4 979.5,385.1ZM979.5,385.1 990.8,380.4 999.9,387.6 988.5,392.5ZM988.5,392.5 999.9,387.6 1009,394.6 997.6,399.8ZM954.5,352.3 965.8,347.7 974.9,353.8 963.6,358.8ZM1010.7,330.8 1021.9,326.2 1031.1,332.7 1019.9,337.4ZM1038.4,352.9 1049.7,348.6 1058.9,356.8 1047.6,361ZM1021.9,326.2 1033.1,321.6 1042.4,328.1 1031.1,332.7ZM1049.7,348.6 1061,344.2 1070.3,352.7 1058.9,356.8Z" fill="#acaeb3" stroke="#acaeb3" stroke-width="0.8"/><path d="M997.6,399.8 1009,394.6 1018.1,401.3 1006.6,406.8ZM1015.7,362.6 1027,357.8 1036.2,365.6 1024.9,369.9ZM1019.9,337.4 1031.1,332.7 1040.4,340.3 1029.1,344.8ZM1029.1,344.8 1040.4,340.3 1049.7,348.6 1038.4,352.9ZM1031.1,332.7 1042.4,328.1 1051.7,335.8 1040.4,340.3ZM1040.4,340.3 1051.7,335.8 1061,344.2 1049.7,348.6Z" fill="#b2b4b9" stroke="#b2b4b9" stroke-width="0.8"/><path d="M1006.6,406.8 1018.1,401.3 1027.1,407.9 1015.7,413.8ZM963.6,358.8 974.9,353.8 984,360.5 972.7,365.8ZM981,325.8 992.2,320.3 1001.4,325.3 990.2,330.8ZM1027,357.8 1038.4,352.9 1047.6,361 1036.2,365.6Z" fill="#b8babf" stroke="#b8babf" stroke-width="0.8"/><path d="M972.7,365.8 984,360.5 993.1,367.5 981.8,373ZM1006.5,355.3 1017.8,350 1027,357.8 1015.7,362.6ZM1008.6,342.8 1019.9,337.4 1029.1,344.8 1017.8,350Z" fill="#c4c6cb" stroke="#c4c6cb" stroke-width="0.8"/><path d="M981.8,373 993.1,367.5 1002.2,374.6 990.8,380.4ZM997.4,348.5 1008.6,342.8 1017.8,350 1006.5,355.3Z" fill="#caccd1" stroke="#caccd1" stroke-width="0.8"/><path d="M990.8,380.4 1002.2,374.6 1011.3,381.5 999.9,387.6ZM988.2,342.5 999.4,336.4 1008.6,342.8 997.4,348.5Z" fill="#d0d2d7" stroke="#d0d2d7" stroke-width="0.8"/><path d="M999.9,387.6 1011.3,381.5 1020.4,388 1009,394.6ZM969.9,332.4 981,325.8 990.2,330.8 979,337.2ZM979,337.2 990.2,330.8 999.4,336.4 988.2,342.5Z" fill="#d6d8dd" stroke="#d6d8dd" stroke-width="0.8"/><path d="M1009,394.6 1020.4,388 1029.5,394.1 1018.1,401.3Z" fill="#e2e4e9" stroke="#e2e4e9" stroke-width="0.8"/><path d="M1018.1,401.3 1029.5,394.1 1038.6,399.9 1027.1,407.9Z" fill="#eef0f5" stroke="#eef0f5" stroke-width="0.8"/><path d="M947.5,336.9 958.7,335.1 967.8,339.9 956.6,342.1ZM1004.4,364.4 1015.7,362.6 1024.9,369.9 1013.5,371.4ZM1013.5,371.4 1024.9,369.9 1034.1,376.8 1022.7,378.1Z" fill="#888a8f" stroke="#888a8f" stroke-width="0.8"/><path d="M956.6,342.1 967.8,339.9 977,345.2 965.8,347.7ZM965.8,347.7 977,345.2 986.1,351 974.9,353.8ZM958.7,335.1 969.9,332.4 979,337.2 967.8,339.9ZM967.8,339.9 979,337.2 988.2,342.5 977,345.2ZM977,345.2 988.2,342.5 997.4,348.5 986.1,351ZM986.1,351 997.4,348.5 1006.5,355.3 995.3,357.5ZM995.3,357.5 1006.5,355.3 1015.7,362.6 1004.4,364.4ZM1052.4,388.7 1063.9,385.3 1073.1,390.7 1061.6,394Z" fill="#8e9095" stroke="#8e9095" stroke-width="0.8"/><path d="M974.9,353.8 986.1,351 995.3,357.5 984,360.5ZM984,360.5 995.3,357.5 1004.4,364.4 993.1,367.5ZM993.1,367.5 1004.4,364.4 1013.5,371.4 1002.2,374.6ZM1002.2,374.6 1013.5,371.4 1022.7,378.1 1011.3,381.5ZM1011.3,381.5 1022.7,378.1 1031.8,384.3 1020.4,388ZM1020.4,388 1031.8,384.3 1041,390 1029.5,394.1ZM1043.2,383.1 1054.7,379.6 1063.9,385.3 1052.4,388.7Z" fill="#94969b" stroke="#94969b" stroke-width="0.8"/><path d="M1022.7,378.1 1034.1,376.8 1043.2,383.1 1031.8,384.3ZM1031.8,384.3 1043.2,383.1 1052.4,388.7 1041,390Z" fill="#828489" stroke="#828489" stroke-width="0.8"/><path d="M1041,390 1052.4,388.7 1061.6,394 1050.1,395.3Z" fill="#7c7e83" stroke="#7c7e83" stroke-width="0.8"/><path d="M990.2,330.8 1001.4,325.3 1010.7,330.8 999.4,336.4ZM999.4,336.4 1010.7,330.8 1019.9,337.4 1008.6,342.8ZM1017.8,350 1029.1,344.8 1038.4,352.9 1027,357.8Z" fill="#bec0c5" stroke="#bec0c5" stroke-width="0.8"/><path d="M902.9,353.9 911.9,360.6 920.9,367.4 929.8,374.2 938.8,381.2 947.8,388.3 956.8,395.6 965.8,402.9 974.7,410.5 983.7,418.1 992.7,425.7 M914.1,350.2 923.1,356.7 932.1,363.3 941.1,370.1 950.1,377.1 959.1,384.3 968.1,391.6 977.1,399 986.2,406.4 995.2,413.8 1004.2,421.1 M925.2,346.5 934.3,352.8 943.3,359.2 952.4,365.9 961.4,372.9 970.4,380.2 979.5,387.6 988.5,395 997.6,402.3 1006.6,409.3 1015.7,416.3 M936.4,342.8 945.5,348.7 954.5,354.8 963.6,361.3 972.7,368.3 981.8,375.5 990.8,382.9 999.9,390.1 1009,397.1 1018.1,403.8 1027.1,410.4 M947.5,339.4 956.6,344.6 965.8,350.2 974.9,356.3 984,363 993.1,370 1002.2,377.1 1011.3,384 1020.4,390.5 1029.5,396.6 1038.6,402.4 M958.7,337.6 967.8,342.4 977,347.7 986.1,353.5 995.3,360 1004.4,366.9 1013.5,373.9 1022.7,380.6 1031.8,386.8 1041,392.5 1050.1,397.8 M969.9,334.9 979,339.7 988.2,345 997.4,351 1006.5,357.8 1015.7,365.1 1024.9,372.4 1034.1,379.3 1043.2,385.6 1052.4,391.2 1061.6,396.5 M981,328.3 990.2,333.3 999.4,338.9 1008.6,345.3 1017.8,352.5 1027,360.3 1036.2,368.1 1045.4,375.5 1054.7,382.1 1063.9,387.8 1073.1,393.2 M992.2,322.8 1001.4,327.8 1010.7,333.3 1019.9,339.9 1029.1,347.3 1038.4,355.4 1047.6,363.5 1056.8,371.1 1066.1,377.7 1075.3,383.5 1084.5,388.7 M1003.3,318.4 1012.6,323.2 1021.9,328.7 1031.1,335.2 1040.4,342.8 1049.7,351.1 1058.9,359.3 1068.2,367 1077.5,373.6 1086.8,379.1 1096,384 M1014.5,314.1 1023.8,318.7 1033.1,324.1 1042.4,330.6 1051.7,338.3 1061,346.8 1070.3,355.2 1079.6,362.9 1088.9,369.4 1098.2,374.8 1107.5,379.4 M902.9,353.9 914.1,350.2 925.2,346.5 936.4,342.8 947.5,339.4 958.7,337.6 969.9,334.9 981,328.3 992.2,322.8 1003.3,318.4 1014.5,314.1 M911.9,360.6 923.1,356.7 934.3,352.8 945.5,348.7 956.6,344.6 967.8,342.4 979,339.7 990.2,333.3 1001.4,327.8 1012.6,323.2 1023.8,318.7 M920.9,367.4 932.1,363.3 943.3,359.2 954.5,354.8 965.8,350.2 977,347.7 988.2,345 999.4,338.9 1010.7,333.3 1021.9,328.7 1033.1,324.1 M929.8,374.2 941.1,370.1 952.4,365.9 963.6,361.3 974.9,356.3 986.1,353.5 997.4,351 1008.6,345.3 1019.9,339.9 1031.1,335.2 1042.4,330.6 M938.8,381.2 950.1,377.1 961.4,372.9 972.7,368.3 984,363 995.3,360 1006.5,357.8 1017.8,352.5 1029.1,347.3 1040.4,342.8 1051.7,338.3 M947.8,388.3 959.1,384.3 970.4,380.2 981.8,375.5 993.1,370 1004.4,366.9 1015.7,365.1 1027,360.3 1038.4,355.4 1049.7,351.1 1061,346.8 M956.8,395.6 968.1,391.6 979.5,387.6 990.8,382.9 1002.2,377.1 1013.5,373.9 1024.9,372.4 1036.2,368.1 1047.6,363.5 1058.9,359.3 1070.3,355.2 M965.8,402.9 977.1,399 988.5,395 999.9,390.1 1011.3,384 1022.7,380.6 1034.1,379.3 1045.4,375.5 1056.8,371.1 1068.2,367 1079.6,362.9 M974.7,410.5 986.2,406.4 997.6,402.3 1009,397.1 1020.4,390.5 1031.8,386.8 1043.2,385.6 1054.7,382.1 1066.1,377.7 1077.5,373.6 1088.9,369.4 M983.7,418.1 995.2,413.8 1006.6,409.3 1018.1,403.8 1029.5,396.6 1041,392.5 1052.4,391.2 1063.9,387.8 1075.3,383.5 1086.8,379.1 1098.2,374.8 M992.7,425.7 1004.2,421.1 1015.7,416.3 1027.1,410.4 1038.6,402.4 1050.1,397.8 1061.6,396.5 1073.1,393.2 1084.5,388.7 1096,384 1107.5,379.4" fill="none" stroke="#1a1a1a" stroke-width="1.1"/><path d="M902.9,351.4 911.9,358.1 920.9,364.9 929.8,371.7 938.8,378.7 947.8,385.8 956.8,393.1 965.8,400.4 974.7,408 983.7,415.6 992.7,423.2 M914.1,347.7 923.1,354.2 932.1,360.8 941.1,367.6 950.1,374.6 959.1,381.8 968.1,389.1 977.1,396.5 986.2,403.9 995.2,411.3 1004.2,418.6 M925.2,344 934.3,350.3 943.3,356.7 952.4,363.4 961.4,370.4 970.4,377.7 979.5,385.1 988.5,392.5 997.6,399.8 1006.6,406.8 1015.7,413.8 M936.4,340.3 945.5,346.2 954.5,352.3 963.6,358.8 972.7,365.8 981.8,373 990.8,380.4 999.9,387.6 1009,394.6 1018.1,401.3 1027.1,407.9 M947.5,336.9 956.6,342.1 965.8,347.7 974.9,353.8 984,360.5 993.1,367.5 1002.2,374.6 1011.3,381.5 1020.4,388 1029.5,394.1 1038.6,399.9 M958.7,335.1 967.8,339.9 977,345.2 986.1,351 995.3,357.5 1004.4,364.4 1013.5,371.4 1022.7,378.1 1031.8,384.3 1041,390 1050.1,395.3 M969.9,332.4 979,337.2 988.2,342.5 997.4,348.5 1006.5,355.3 1015.7,362.6 1024.9,369.9 1034.1,376.8 1043.2,383.1 1052.4,388.7 1061.6,394 M981,325.8 990.2,330.8 999.4,336.4 1008.6,342.8 1017.8,350 1027,357.8 1036.2,365.6 1045.4,373 1054.7,379.6 1063.9,385.3 1073.1,390.7 M992.2,320.3 1001.4,325.3 1010.7,330.8 1019.9,337.4 1029.1,344.8 1038.4,352.9 1047.6,361 1056.8,368.6 1066.1,375.2 1075.3,381 1084.5,386.2 M1003.3,315.9 1012.6,320.7 1021.9,326.2 1031.1,332.7 1040.4,340.3 1049.7,348.6 1058.9,356.8 1068.2,364.5 1077.5,371.1 1086.8,376.6 1096,381.5 M1014.5,311.6 1023.8,316.2 1033.1,321.6 1042.4,328.1 1051.7,335.8 1061,344.2 1070.3,352.7 1079.6,360.4 1088.9,366.9 1098.2,372.3 1107.5,376.9 M902.9,351.4 914.1,347.7 925.2,344 936.4,340.3 947.5,336.9 958.7,335.1 969.9,332.4 981,325.8 992.2,320.3 1003.3,315.9 1014.5,311.6 M911.9,358.1 923.1,354.2 934.3,350.3 945.5,346.2 956.6,342.1 967.8,339.9 979,337.2 990.2,330.8 1001.4,325.3 1012.6,320.7 1023.8,316.2 M920.9,364.9 932.1,360.8 943.3,356.7 954.5,352.3 965.8,347.7 977,345.2 988.2,342.5 999.4,336.4 1010.7,330.8 1021.9,326.2 1033.1,321.6 M929.8,371.7 941.1,367.6 952.4,363.4 963.6,358.8 974.9,353.8 986.1,351 997.4,348.5 1008.6,342.8 1019.9,337.4 1031.1,332.7 1042.4,328.1 M938.8,378.7 950.1,374.6 961.4,370.4 972.7,365.8 984,360.5 995.3,357.5 1006.5,355.3 1017.8,350 1029.1,344.8 1040.4,340.3 1051.7,335.8 M947.8,385.8 959.1,381.8 970.4,377.7 981.8,373 993.1,367.5 1004.4,364.4 1015.7,362.6 1027,357.8 1038.4,352.9 1049.7,348.6 1061,344.2 M956.8,393.1 968.1,389.1 979.5,385.1 990.8,380.4 1002.2,374.6 1013.5,371.4 1024.9,369.9 1036.2,365.6 1047.6,361 1058.9,356.8 1070.3,352.7 M965.8,400.4 977.1,396.5 988.5,392.5 999.9,387.6 1011.3,381.5 1022.7,378.1 1034.1,376.8 1045.4,373 1056.8,368.6 1068.2,364.5 1079.6,360.4 M974.7,408 986.2,403.9 997.6,399.8 1009,394.6 1020.4,388 1031.8,384.3 1043.2,383.1 1054.7,379.6 1066.1,375.2 1077.5,371.1 1088.9,366.9 M983.7,415.6 995.2,411.3 1006.6,406.8 1018.1,401.3 1029.5,394.1 1041,390 1052.4,388.7 1063.9,385.3 1075.3,381 1086.8,376.6 1098.2,372.3 M992.7,423.2 1004.2,418.6 1015.7,413.8 1027.1,407.9 1038.6,399.9 1050.1,395.3 1061.6,394 1073.1,390.7 1084.5,386.2 1096,381.5 1107.5,376.9 M911.9,358.1 912.2,356.8 912.4,355.5 912.7,354.2 913,352.9 913.2,351.6 913.5,350.3 913.8,349 914.1,347.7 M920.9,364.9 921.1,363.5 921.4,362.2 921.7,360.8 922,359.5 922.3,358.2 922.5,356.8 922.8,355.5 923.1,354.2 923.3,352.9 923.6,351.6 923.9,350.3 924.2,349.1 924.4,347.8 924.7,346.5 925,345.3 925.2,344 M929.8,371.7 930.1,370.3 930.4,369 930.7,367.6 931,366.2 931.2,364.9 931.5,363.5 931.8,362.1 932.1,360.8 932.4,359.5 932.6,358.1 932.9,356.8 933.2,355.5 933.5,354.2 933.7,352.8 934,351.5 934.3,350.3 934.5,349 934.8,347.7 935.1,346.4 935.3,345.2 935.6,343.9 935.9,342.7 936.1,341.5 936.4,340.3 M938.8,378.7 939.1,377.3 939.4,375.9 939.7,374.5 940,373.1 940.3,371.7 940.5,370.4 940.8,369 941.1,367.6 941.4,366.2 941.7,364.8 941.9,363.5 942.2,362.1 942.5,360.7 942.8,359.4 943,358 943.3,356.7 943.6,355.3 943.9,354 944.1,352.7 944.4,351.3 944.7,350 944.9,348.7 945.2,347.4 945.5,346.2 945.7,344.9 946,343.6 946.2,342.4 946.5,341.2 946.8,340.1 947,339 947.3,337.9 947.5,336.9 M947.8,385.8 948.1,384.4 948.4,383 948.7,381.6 949,380.2 949.2,378.8 949.5,377.4 949.8,376 950.1,374.6 950.4,373.2 950.7,371.8 951,370.4 951.2,369 951.5,367.6 951.8,366.2 952.1,364.8 952.4,363.4 952.6,362 952.9,360.6 953.2,359.2 953.4,357.8 953.7,356.4 954,355 954.3,353.6 954.5,352.3 954.8,350.9 955.1,349.6 955.3,348.2 955.6,346.9 955.9,345.7 956.1,344.4 956.4,343.3 956.6,342.1 956.9,341.1 957.2,340 957.4,339.1 957.7,338.2 957.9,337.4 958.2,336.6 958.4,335.8 958.7,335.1 M956.8,393.1 957.1,391.6 957.4,390.2 957.7,388.8 958,387.4 958.2,386 958.5,384.6 958.8,383.2 959.1,381.8 959.4,380.4 959.7,379 960,377.6 960.3,376.1 960.6,374.7 960.8,373.3 961.1,371.9 961.4,370.4 961.7,369 962,367.5 962.2,366.1 962.5,364.6 962.8,363.2 963.1,361.7 963.3,360.3 963.6,358.8 963.9,357.3 964.2,355.9 964.4,354.4 964.7,353 965,351.6 965.2,350.3 965.5,349 965.8,347.7 966,346.5 966.3,345.4 966.5,344.3 966.8,343.3 967.1,342.4 967.3,341.5 967.6,340.7 967.8,339.9 968.1,339.1 968.4,338.3 968.6,337.5 968.9,336.6 969.1,335.7 969.4,334.7 969.6,333.6 969.9,332.4 M965.8,400.4 966.1,399 966.4,397.6 966.7,396.2 967,394.8 967.2,393.4 967.5,392 967.8,390.5 968.1,389.1 968.4,387.7 968.7,386.3 969,384.9 969.3,383.5 969.6,382 969.9,380.6 970.2,379.2 970.4,377.7 970.7,376.3 971,374.8 971.3,373.3 971.6,371.8 971.9,370.3 972.1,368.8 972.4,367.3 972.7,365.8 973,364.2 973.2,362.7 973.5,361.1 973.8,359.6 974.1,358.1 974.3,356.6 974.6,355.2 974.9,353.8 975.1,352.5 975.4,351.3 975.7,350.1 975.9,349 976.2,347.9 976.5,347 976.7,346 977,345.2 977.2,344.3 977.5,343.4 977.8,342.5 978,341.6 978.3,340.6 978.5,339.5 978.8,338.4 979,337.2 979.3,335.9 979.5,334.6 979.8,333.2 980,331.7 980.3,330.2 980.5,328.8 980.8,327.3 981,325.8 M974.7,408 975,406.5 975.3,405.1 975.6,403.6 976,402.2 976.2,400.8 976.5,399.4 976.8,397.9 977.1,396.5 977.4,395.1 977.7,393.7 978,392.3 978.3,390.9 978.6,389.4 978.9,388 979.2,386.6 979.5,385.1 979.8,383.7 980.1,382.2 980.3,380.7 980.6,379.2 980.9,377.7 981.2,376.2 981.5,374.6 981.8,373 982,371.4 982.3,369.8 982.6,368.2 982.9,366.6 983.1,365 983.4,363.5 983.7,362 984,360.5 984.2,359.1 984.5,357.7 984.8,356.4 985.1,355.2 985.3,354.1 985.6,353 985.9,352 986.1,351 986.4,350.1 986.6,349.1 986.9,348.1 987.2,347.1 987.4,346.1 987.7,345 987.9,343.8 988.2,342.5 988.5,341.2 988.7,339.8 989,338.3 989.2,336.8 989.5,335.3 989.7,333.8 990,332.3 990.2,330.8 990.5,329.4 990.7,328 991,326.6 991.2,325.3 991.5,324 991.7,322.7 991.9,321.5 992.2,320.3 M983.7,415.6 984,414.1 984.3,412.6 984.6,411.1 984.9,409.7 985.2,408.2 985.6,406.8 985.9,405.3 986.2,403.9 986.5,402.5 986.8,401.1 987.1,399.6 987.4,398.2 987.6,396.8 987.9,395.4 988.2,393.9 988.5,392.5 988.8,391.1 989.1,389.6 989.4,388.1 989.7,386.6 990,385.1 990.3,383.6 990.6,382 990.8,380.4 991.1,378.8 991.4,377.1 991.7,375.5 992,373.9 992.2,372.2 992.5,370.6 992.8,369 993.1,367.5 993.4,366 993.6,364.6 993.9,363.2 994.2,362 994.4,360.8 994.7,359.6 995,358.5 995.3,357.5 995.5,356.5 995.8,355.5 996.1,354.4 996.3,353.4 996.6,352.3 996.9,351.1 997.1,349.8 997.4,348.5 997.6,347.1 997.9,345.7 998.2,344.2 998.4,342.6 998.7,341.1 998.9,339.5 999.2,337.9 999.4,336.4 999.7,334.9 999.9,333.4 1000.2,331.9 1000.4,330.5 1000.7,329.2 1000.9,327.8 1001.2,326.5 1001.4,325.3 1001.7,324 1001.9,322.8 1002.1,321.6 1002.4,320.5 1002.6,319.3 1002.9,318.2 1003.1,317 1003.3,315.9 M992.7,423.2 993,421.7 993.3,420.2 993.6,418.6 993.9,417.1 994.2,415.7 994.6,414.2 994.9,412.7 995.2,411.3 995.5,409.8 995.8,408.4 996.1,406.9 996.4,405.5 996.7,404.1 997,402.6 997.3,401.2 997.6,399.8 997.9,398.3 998.2,396.8 998.5,395.4 998.8,393.9 999,392.4 999.3,390.8 999.6,389.2 999.9,387.6 1000.2,386 1000.5,384.4 1000.8,382.7 1001.1,381.1 1001.3,379.4 1001.6,377.8 1001.9,376.2 1002.2,374.6 1002.5,373.1 1002.7,371.6 1003,370.3 1003.3,369 1003.6,367.8 1003.9,366.6 1004.1,365.5 1004.4,364.4 1004.7,363.4 1004.9,362.4 1005.2,361.3 1005.5,360.2 1005.8,359.1 1006,357.9 1006.3,356.6 1006.5,355.3 1006.8,353.9 1007.1,352.4 1007.3,350.9 1007.6,349.3 1007.9,347.7 1008.1,346 1008.4,344.4 1008.6,342.8 1008.9,341.2 1009.1,339.6 1009.4,338.1 1009.7,336.5 1009.9,335.1 1010.2,333.6 1010.4,332.2 1010.7,330.8 1010.9,329.5 1011.1,328.2 1011.4,326.9 1011.6,325.6 1011.9,324.4 1012.1,323.1 1012.4,321.9 1012.6,320.7 1012.8,319.5 1013.1,318.4 1013.3,317.2 1013.6,316.1 1013.8,314.9 1014,313.8 1014.3,312.7 1014.5,311.6 M1004.2,418.6 1004.5,417.1 1004.8,415.6 1005.1,414.1 1005.4,412.7 1005.7,411.2 1006,409.7 1006.3,408.3 1006.6,406.8 1006.9,405.4 1007.2,403.9 1007.5,402.4 1007.8,400.9 1008.1,399.4 1008.4,397.8 1008.7,396.2 1009,394.6 1009.3,393 1009.6,391.4 1009.9,389.7 1010.2,388 1010.4,386.3 1010.7,384.7 1011,383.1 1011.3,381.5 1011.6,380 1011.9,378.5 1012.1,377.2 1012.4,375.9 1012.7,374.7 1013,373.5 1013.3,372.5 1013.5,371.4 1013.8,370.4 1014.1,369.4 1014.4,368.4 1014.6,367.4 1014.9,366.3 1015.2,365.1 1015.5,363.9 1015.7,362.6 1016,361.2 1016.3,359.7 1016.5,358.2 1016.8,356.6 1017,355 1017.3,353.3 1017.6,351.7 1017.8,350 1018.1,348.4 1018.4,346.7 1018.6,345.1 1018.9,343.5 1019.1,341.9 1019.4,340.4 1019.6,338.9 1019.9,337.4 1020.1,335.9 1020.4,334.5 1020.6,333 1020.9,331.6 1021.1,330.2 1021.4,328.9 1021.6,327.5 1021.9,326.2 1022.1,324.9 1022.4,323.6 1022.6,322.3 1022.8,321.1 1023.1,319.8 1023.3,318.6 1023.6,317.4 1023.8,316.2 M1015.7,413.8 1016,412.3 1016.3,410.8 1016.6,409.3 1016.9,407.7 1017.2,406.2 1017.5,404.6 1017.8,403 1018.1,401.3 1018.4,399.7 1018.7,398 1018.9,396.3 1019.2,394.6 1019.5,392.9 1019.8,391.2 1020.1,389.6 1020.4,388 1020.7,386.5 1021,385.1 1021.3,383.7 1021.5,382.4 1021.8,381.3 1022.1,380.2 1022.4,379.1 1022.7,378.1 1023,377.2 1023.2,376.3 1023.5,375.3 1023.8,374.4 1024.1,373.3 1024.3,372.3 1024.6,371.1 1024.9,369.9 1025.2,368.6 1025.4,367.2 1025.7,365.7 1026,364.2 1026.2,362.7 1026.5,361.1 1026.8,359.4 1027,357.8 1027.3,356.1 1027.6,354.5 1027.8,352.9 1028.1,351.2 1028.3,349.6 1028.6,348 1028.9,346.4 1029.1,344.8 1029.4,343.3 1029.6,341.7 1029.9,340.2 1030.1,338.7 1030.4,337.2 1030.6,335.7 1030.9,334.2 1031.1,332.7 1031.4,331.3 1031.6,329.8 1031.9,328.4 1032.1,327 1032.4,325.6 1032.6,324.3 1032.9,322.9 1033.1,321.6 M1027.1,407.9 1027.4,406.1 1027.7,404.4 1028,402.6 1028.3,400.9 1028.6,399.1 1028.9,397.4 1029.2,395.7 1029.5,394.1 1029.8,392.6 1030.1,391.1 1030.4,389.7 1030.7,388.5 1031,387.3 1031.2,386.3 1031.5,385.3 1031.8,384.3 1032.1,383.5 1032.4,382.6 1032.7,381.7 1033,380.9 1033.2,379.9 1033.5,379 1033.8,377.9 1034.1,376.8 1034.3,375.6 1034.6,374.4 1034.9,373 1035.2,371.6 1035.4,370.2 1035.7,368.7 1036,367.2 1036.2,365.6 1036.5,364 1036.8,362.5 1037,360.9 1037.3,359.3 1037.6,357.7 1037.8,356.1 1038.1,354.5 1038.4,352.9 1038.6,351.3 1038.9,349.8 1039.1,348.2 1039.4,346.6 1039.7,345 1039.9,343.4 1040.2,341.9 1040.4,340.3 1040.7,338.8 1040.9,337.2 1041.2,335.7 1041.4,334.1 1041.7,332.6 1041.9,331.1 1042.2,329.6 1042.4,328.1 M1038.6,399.9 1038.9,398.3 1039.2,396.8 1039.5,395.4 1039.8,394.1 1040.1,392.9 1040.4,391.9 1040.7,390.9 1041,390 1041.2,389.1 1041.5,388.3 1041.8,387.5 1042.1,386.7 1042.4,385.9 1042.7,385 1043,384.1 1043.2,383.1 1043.5,382.1 1043.8,380.9 1044.1,379.7 1044.3,378.5 1044.6,377.2 1044.9,375.8 1045.2,374.4 1045.4,373 1045.7,371.5 1046,370.1 1046.3,368.6 1046.5,367.1 1046.8,365.6 1047.1,364.1 1047.3,362.6 1047.6,361 1047.9,359.5 1048.1,358 1048.4,356.4 1048.6,354.9 1048.9,353.3 1049.2,351.7 1049.4,350.1 1049.7,348.6 1049.9,347 1050.2,345.4 1050.4,343.8 1050.7,342.2 1051,340.6 1051.2,339 1051.5,337.4 1051.7,335.8 M1050.1,395.3 1050.4,394.5 1050.7,393.7 1051,392.9 1051.3,392.1 1051.6,391.3 1051.8,390.5 1052.1,389.7 1052.4,388.7 1052.7,387.8 1053,386.8 1053.3,385.7 1053.5,384.5 1053.8,383.3 1054.1,382.1 1054.4,380.8 1054.7,379.6 1054.9,378.2 1055.2,376.9 1055.5,375.5 1055.8,374.2 1056,372.8 1056.3,371.4 1056.6,370 1056.8,368.6 1057.1,367.2 1057.4,365.7 1057.6,364.3 1057.9,362.8 1058.2,361.3 1058.4,359.8 1058.7,358.3 1058.9,356.8 1059.2,355.3 1059.5,353.7 1059.7,352.2 1060,350.6 1060.2,349 1060.5,347.5 1060.7,345.9 1061,344.2 M1061.6,394 1061.9,393 1062.2,392.1 1062.4,391.1 1062.7,390 1063,388.9 1063.3,387.7 1063.6,386.6 1063.9,385.3 1064.1,384.1 1064.4,382.9 1064.7,381.6 1065,380.4 1065.2,379.1 1065.5,377.8 1065.8,376.5 1066.1,375.2 1066.3,373.9 1066.6,372.6 1066.9,371.3 1067.2,370 1067.4,368.6 1067.7,367.2 1068,365.9 1068.2,364.5 1068.5,363 1068.7,361.6 1069,360.2 1069.3,358.7 1069.5,357.2 1069.8,355.7 1070,354.2 1070.3,352.7 M1073.1,390.7 1073.3,389.5 1073.6,388.3 1073.9,387.1 1074.2,385.8 1074.5,384.6 1074.7,383.4 1075,382.2 1075.3,381 1075.6,379.8 1075.9,378.5 1076.1,377.3 1076.4,376.1 1076.7,374.8 1076.9,373.6 1077.2,372.3 1077.5,371.1 1077.8,369.8 1078,368.5 1078.3,367.2 1078.6,365.8 1078.8,364.5 1079.1,363.1 1079.3,361.8 1079.6,360.4 M1084.5,386.2 1084.8,384.9 1085.1,383.7 1085.4,382.6 1085.7,381.4 1085.9,380.2 1086.2,379 1086.5,377.8 1086.8,376.6 1087,375.4 1087.3,374.2 1087.6,373 1087.8,371.8 1088.1,370.6 1088.4,369.4 1088.6,368.1 1088.9,366.9 M1096,381.5 1096.3,380.4 1096.6,379.2 1096.8,378 1097.1,376.9 1097.4,375.7 1097.7,374.6 1097.9,373.4 1098.2,372.3" fill="none" stroke="#0b0b0b" stroke-width="2.3"/><path d="M902.9,351.4 908.5,349.6 914.1,347.7 919.6,345.9 925.2,344 930.8,342.2 936.4,340.3 942,338.5 947.5,336.9 953.1,335.7 958.7,335.1 964.3,334.3 969.9,332.4 975.4,329.3 981,325.8 986.6,322.8 992.2,320.3 997.8,318 1003.3,315.9 1008.9,313.7 1014.5,311.6 1019.1,313.9 1023.8,316.2 1028.4,318.8 1033.1,321.6 1037.8,324.7 1042.4,328.1 1047.1,331.9 1051.7,335.8 1056.3,340 1061,344.2 1065.7,348.5 1070.3,352.7 1075,356.6 1079.6,360.4 1084.2,363.8 1088.9,366.9 1093.5,369.7 1098.2,372.3 1102.9,374.6 1107.5,376.9 1101.8,379.2 1096,381.5 1090.3,383.8 1084.5,386.2 1078.8,388.4 1073.1,390.7 1067.3,392.6 1061.6,394 1055.8,394.7 1050.1,395.3 1044.4,396.9 1038.6,399.9 1032.9,404 1027.1,407.9 1021.4,411.1 1015.7,413.8 1009.9,416.2 1004.2,418.6 998.4,420.9 992.7,423.2 988.2,419.4 983.7,415.6 979.2,411.7 974.7,408 970.3,404.2 965.8,400.4 961.3,396.7 956.8,393.1 952.3,389.4 947.8,385.8 943.3,382.2 938.8,378.7 934.3,375.2 929.8,371.7 925.3,368.3 920.9,364.9 916.4,361.5 911.9,358.1 907.4,354.8Z" fill="none" stroke="#0b0b0b" stroke-width="2.4"/><linearGradient id="g2" gradientUnits="userSpaceOnUse" x1="775.7" y1="671.0" x2="821.6" y2="522.4"><stop offset="0" stop-color="#a2a3a7"/><stop offset="1" stop-color="#b2b3b6"/></linearGradient><polygon points="683.2,579 821.6,522.4 919.4,607.8 775.7,671" fill="url(#g2)" stroke="#111" stroke-width="1.5" stroke-linejoin="miter"/><path d="M746.8,575.3 748.6,577.3 749.8,579.4 750.6,581.6 750.8,583.8 750.6,586 749.8,588.2 748.4,590.3 746.7,592.2 744.4,593.9 741.8,595.4 738.9,596.7 735.7,597.6 732.3,598.2 728.8,598.5 725.3,598.4 721.9,598 718.5,597.3 715.4,596.2 712.5,594.9 709.9,593.3 707.8,591.5 706.1,589.5 704.8,587.3 704.1,585.1 703.9,582.9 704.1,580.6 704.9,578.5 706.2,576.4 708,574.5 710.2,572.8 712.8,571.3 715.7,570.1 718.8,569.3 722.2,568.7 725.7,568.4 729.2,568.5 732.6,568.9 736,569.6 739.1,570.7 742,572 744.6,573.5 746.8,575.3 M775.4,563.3 775.9,564.8 775.7,566.4 774.9,567.8 773.5,569.1 771.6,570.1 769.4,570.8 767,571.1 764.5,571 762.1,570.5 760,569.6 758.4,568.5 757.3,567.1 756.8,565.5 757,564 757.7,562.5 759.1,561.2 761,560.2 763.2,559.5 765.7,559.2 768.2,559.3 770.5,559.9 M789.8,554.1 791,555.5 791.5,557.2 791.3,558.8 790.4,560.4 788.9,561.8 786.9,562.9 784.4,563.7 781.8,564 779.1,563.9 776.5,563.4 M771.3,559.7 770.8,558.1 771,556.4 771.9,554.8 773.4,553.5 775.4,552.4 777.8,551.6 780.5,551.3 783.2,551.4 785.7,551.9 788,552.8 789.8,554.1 M809.1,548.6 810.1,550.7 810.8,552.7 811.1,554.6 810.9,556.2 810.3,557.5 809.3,558.3 808,558.6 806.4,558.3 804.6,557.6 802.8,556.4 801,554.9 799.3,553 797.9,551 796.9,548.9 796.2,546.8 795.9,544.9 796.1,543.3 796.7,542.1 797.7,541.3 799,541 800.6,541.3 802.4,542 804.2,543.1 806,544.7 807.6,546.5 809.1,548.6 M854.1,559.5 854.8,560.4 855.2,561.3 855.1,562.3 854.6,563.2 853.7,564.1 852.5,564.7 851.1,565.2 849.5,565.4 847.9,565.3 846.4,565 845,564.5 844,563.8 843.2,562.9 842.9,561.9 843,560.9 843.5,560 844.3,559.2 845.5,558.5 846.9,558.1 848.5,557.9 850.1,557.9 851.6,558.2 853,558.8 854.1,559.5 M828.6,566.7 830.2,568.6 830.9,570.7 830.7,572.8 829.6,574.8 827.7,576.6 825.2,578.1 822.1,579 818.7,579.5 815.2,579.4 811.9,578.7 809,577.5 806.7,575.9 805.1,573.9 804.4,571.8 804.6,569.7 805.7,567.7 807.6,565.9 810.1,564.5 813.2,563.5 816.6,563.1 820.1,563.2 823.4,563.9 826.3,565.1 828.6,566.7 M854.3,588.9 855,590.9 855.3,593 855,595.1 854.3,597.1 853,599.1 851.4,601 849.3,602.8 846.8,604.4 843.9,605.8 840.8,606.9 837.5,607.8 834.1,608.4 830.5,608.7 826.9,608.8 823.4,608.5 820.1,607.9 816.9,607.1 813.9,606 811.3,604.6 809,603.1 807.2,601.3 805.8,599.4 804.8,597.4 804.3,595.4 804.3,593.3 804.8,591.2 805.8,589.2 807.3,587.2 809.2,585.4 811.4,583.8 814.1,582.3 817,581.1 820.2,580.1 823.6,579.4 827.1,578.9 830.6,578.8 834.1,578.9 837.6,579.3 840.9,580 844,581 846.8,582.2 849.3,583.6 851.4,585.2 853.1,587 854.3,588.9 M791.5,596.2 793.1,598.2 793.9,600.4 793.6,602.7 792.5,604.9 790.5,606.8 787.8,608.3 784.6,609.3 781,609.7 777.4,609.6 774,608.9 771.1,607.6 768.7,605.9 767.1,603.8 766.4,601.6 766.7,599.3 767.8,597.1 769.8,595.3 772.5,593.8 775.7,592.8 779.2,592.3 782.8,592.5 786.2,593.2 789.2,594.5 791.5,596.2 M868.7,595.5 869.3,596.2 869.6,597 869.5,597.8 869.1,598.5 868.4,599.2 867.4,599.8 866.2,600.2 865,600.3 863.7,600.3 862.4,600.1 861.3,599.6 860.5,599 859.9,598.3 859.6,597.5 859.7,596.7 860.1,596 860.8,595.3 861.8,594.7 862.9,594.4 864.2,594.2 865.5,594.2 866.8,594.5 867.8,594.9 868.7,595.5 M868.5,609.3 870.2,611.4 871.1,613.6 871.2,615.9 870.3,618.2 868.7,620.3 866.3,622.1 863.4,623.6 860,624.6 856.3,625.1 852.6,625 849,624.4 845.8,623.4 843.1,621.8 841,619.9 839.7,617.7 839.2,615.4 839.6,613.1 840.9,610.9 842.9,608.9 845.5,607.3 848.7,606.1 852.3,605.4 856,605.2 859.6,605.5 863.1,606.3 866.1,607.6 868.5,609.3 M764.1,616.7 764.7,617.5 764.9,618.3 764.8,619.2 764.4,620 763.6,620.8 762.6,621.4 761.4,621.8 760,621.9 758.6,621.9 757.4,621.6 756.2,621.1 755.3,620.4 754.7,619.6 754.5,618.8 754.6,617.9 755,617 755.8,616.3 756.8,615.7 758,615.3 759.4,615.2 760.7,615.2 762,615.5 763.2,616 764.1,616.7 M816.1,630.2 817.3,631.7 817.8,633.4 817.6,635.1 816.7,636.7 815.2,638.1 813.2,639.3 810.8,640.1 808.1,640.4 805.5,640.4 802.9,639.8 800.7,638.9 799,637.6 797.8,636.1 797.3,634.4 797.5,632.7 798.4,631.1 799.9,629.7 801.9,628.5 804.3,627.7 806.9,627.4 809.6,627.5 812.1,628 814.3,628.9 816.1,630.2 M836.1,633.2 836.7,634 837,634.9 836.9,635.7 836.4,636.6 835.6,637.3 834.6,637.9 833.3,638.3 832,638.5 830.6,638.5 829.3,638.2 828.1,637.7 827.2,637.1 826.6,636.3 826.3,635.5 826.4,634.6 826.9,633.7 827.6,633 828.7,632.4 829.9,632 831.3,631.8 832.7,631.8 834,632.1 835.2,632.6 836.1,633.2 M787.9,639.7 788.5,640.5 788.7,641.4 788.6,642.3 788.2,643.2 787.4,644 786.3,644.6 785,645 783.6,645.2 782.2,645.1 780.8,644.8 779.7,644.3 778.7,643.7 778.1,642.8 777.9,641.9 778,641 778.4,640.1 779.2,639.4 780.3,638.8 781.6,638.4 783,638.2 784.4,638.2 785.8,638.5 786.9,639 787.9,639.7" fill="none" stroke="#1e1e1e" stroke-width="0.95"/><path d="M859.1,495.6 861.6,497.7 864,499.8 866.5,502 868.9,504.1 871.4,506.2 873.8,508.4 876.3,510.5 878.7,512.7 881.2,514.8 883.7,517 886.1,519.1 888.6,521.3 891,523.5 893.5,525.7 895.9,527.9 898.4,530.1 900.8,532.3 903.3,534.5 905.7,536.8 908.2,539 910.7,541.3 913.1,543.5 915.6,545.8 918,548.1 920.5,550.4 922.9,552.7 925.4,555 927.8,557.3 930.3,559.7 932.7,562 935.2,564.4 937.7,566.7 940.1,569.1 942.6,571.4 945,573.8 947.5,576.2 949.9,578.6 952.4,580.9 954.8,583.3 957.3,585.7 960.5,584.2 963.8,582.7 967,581.2 970.3,579.7 973.5,578.2 976.8,576.7 980,575.2 983.3,573.6 986.5,572 989.7,570.2 993,568.3 996.2,566.2 999.5,563.9 1002.7,561.5 1006,559 1009.2,556.6 1012.5,554.5 1015.7,552.8 1019,551.6 1022.2,550.7 1025.4,550.1 1028.7,549.6 1031.9,549 1035.2,548.3 1038.4,547.5 1041.7,546.4 1044.9,545.2 1048.2,543.8 1051.4,542.4 1054.6,541 1057.9,539.5 1061.1,538 1064.4,536.5 1067.6,535 1070.9,533.5 1074.1,532.1 1077.4,530.6 1080.6,529.1 1083.9,527.6 1087.1,526.1 1087.1,531.1 1083.9,532.6 1080.6,534.1 1077.4,535.6 1074.1,537.1 1070.9,538.5 1067.6,540 1064.4,541.5 1061.1,543 1057.9,544.5 1054.6,546 1051.4,547.4 1048.2,548.8 1044.9,550.2 1041.7,551.4 1038.4,552.5 1035.2,553.3 1031.9,554 1028.7,554.6 1025.4,555.1 1022.2,555.7 1019,556.6 1015.7,557.8 1012.5,559.5 1009.2,561.6 1006,564 1002.7,566.5 999.5,568.9 996.2,571.2 993,573.3 989.7,575.2 986.5,577 983.3,578.6 980,580.2 976.8,581.7 973.5,583.2 970.3,584.7 967,586.2 963.8,587.7 960.5,589.2 957.3,590.7 954.8,588.3 952.4,585.9 949.9,583.6 947.5,581.2 945,578.8 942.6,576.4 940.1,574.1 937.7,571.7 935.2,569.4 932.7,567 930.3,564.7 927.8,562.3 925.4,560 922.9,557.7 920.5,555.4 918,553.1 915.6,550.8 913.1,548.5 910.7,546.3 908.2,544 905.7,541.8 903.3,539.5 900.8,537.3 898.4,535.1 895.9,532.9 893.5,530.7 891,528.5 888.6,526.3 886.1,524.1 883.7,522 881.2,519.8 878.7,517.7 876.3,515.5 873.8,513.4 871.4,511.2 868.9,509.1 866.5,507 864,504.8 861.6,502.7 859.1,500.6Z" fill="#9a9a9a" stroke="#111" stroke-width="1.5"/><path d="M859.1,500.6 861.6,502.7 864,504.8 866.5,507 868.9,509.1 871.4,511.2 873.8,513.4 876.3,515.5 878.7,517.7 881.2,519.8 883.7,522 886.1,524.1 888.6,526.3 891,528.5 893.5,530.7 895.9,532.9 898.4,535.1 900.8,537.3 903.3,539.5 905.7,541.8 908.2,544 910.7,546.3 913.1,548.5 915.6,550.8 918,553.1 920.5,555.4 922.9,557.7 925.4,560 927.8,562.3 930.3,564.7 932.7,567 935.2,569.4 937.7,571.7 940.1,574.1 942.6,576.4 945,578.8 947.5,581.2 949.9,583.6 952.4,585.9 954.8,588.3 957.3,590.7 960.5,589.2 963.8,587.7 967,586.2 970.3,584.7 973.5,583.2 976.8,581.7 980,580.2 983.3,578.6 986.5,577 989.7,575.2 993,573.3 996.2,571.2 999.5,568.9 1002.7,566.5 1006,564 1009.2,561.6 1012.5,559.5 1015.7,557.8 1019,556.6 1022.2,555.7 1025.4,555.1 1028.7,554.6 1031.9,554 1035.2,553.3 1038.4,552.5 1041.7,551.4 1044.9,550.2 1048.2,548.8 1051.4,547.4 1054.6,546 1057.9,544.5 1061.1,543 1064.4,541.5 1067.6,540 1070.9,538.5 1074.1,537.1 1077.4,535.6 1080.6,534.1 1083.9,532.6 1087.1,531.1" fill="none" stroke="#111" stroke-width="1.2"/><clipPath id="c4"><path d="M919.6,492.3 922.2,494.9 923.8,497.9 924.3,501.1 923.7,504.3 922,507.2 919.2,509.8 915.6,511.9 911.3,513.2 906.5,513.9 901.4,513.9 896.4,513.1 891.7,511.7 887.5,509.8 883.9,507.3 881.3,504.5 879.7,501.5 879.2,498.5 879.9,495.5 881.6,492.9 884.3,490.6 887.9,488.8 892.2,487.6 897,486.9 902,486.9 907,487.4 911.8,488.5 916,490.1Z"/></clipPath><path d="M919.6,492.3 922.2,494.9 923.8,497.9 924.3,501.1 923.7,504.3 922,507.2 919.2,509.8 915.6,511.9 911.3,513.2 906.5,513.9 901.4,513.9 896.4,513.1 891.7,511.7 887.5,509.8 883.9,507.3 881.3,504.5 879.7,501.5 879.2,498.5 879.9,495.5 881.6,492.9 884.3,490.6 887.9,488.8 892.2,487.6 897,486.9 902,486.9 907,487.4 911.8,488.5 916,490.1Z" fill="#141414"/><path clip-path="url(#c4)" d="M919.6,499.3 922.2,501.9 923.8,504.9 924.3,508.1 923.7,511.3 922,514.2 919.2,516.8 915.6,518.9 911.3,520.2 906.5,520.9 901.4,520.9 896.4,520.1 891.7,518.7 887.5,516.8 883.9,514.3 881.3,511.5 879.7,508.5 879.2,505.5 879.9,502.5 881.6,499.9 884.3,497.6 887.9,495.8 892.2,494.6 897,493.9 902,493.9 907,494.4 911.8,495.5 916,497.1Z" fill="#a9aeb5" stroke="#222" stroke-width="0.9"/><clipPath id="c5"><path d="M944.4,483.3 946.2,485.2 946.1,487 944.3,488.3 941,488.9 937,488.8 933.1,488 929.9,486.5 928.2,484.6 928.3,482.7 930.1,481.4 933.4,480.9 937.3,481.1 941.3,481.9Z"/></clipPath><path d="M944.4,483.3 946.2,485.2 946.1,487 944.3,488.3 941,488.9 937,488.8 933.1,488 929.9,486.5 928.2,484.6 928.3,482.7 930.1,481.4 933.4,480.9 937.3,481.1 941.3,481.9Z" fill="#141414"/><path clip-path="url(#c5)" d="M944.4,490.3 946.2,492.2 946.1,494 944.3,495.3 941,495.9 937,495.8 933.1,495 929.9,493.5 928.2,491.6 928.3,489.7 930.1,488.4 933.4,487.9 937.3,488.1 941.3,488.9Z" fill="#a9aeb5" stroke="#222" stroke-width="0.9"/><clipPath id="c6"><path d="M958.5,475.2 960.3,477.5 960.2,480.4 958.2,483 954.7,484.8 950.4,485.1 946.1,484.3 942.7,482.8 940.9,480.8 941,478.8 943,476.8 946.5,475 950.8,473.9 955.1,473.9Z"/></clipPath><path d="M958.5,475.2 960.3,477.5 960.2,480.4 958.2,483 954.7,484.8 950.4,485.1 946.1,484.3 942.7,482.8 940.9,480.8 941,478.8 943,476.8 946.5,475 950.8,473.9 955.1,473.9Z" fill="#141414"/><path clip-path="url(#c6)" d="M958.5,482.2 960.3,484.5 960.2,487.4 958.2,490 954.7,491.8 950.4,492.1 946.1,491.3 942.7,489.8 940.9,487.8 941,485.8 943,483.8 946.5,482 950.8,480.9 955.1,480.9Z" fill="#a9aeb5" stroke="#222" stroke-width="0.9"/><clipPath id="c7"><path d="M976.3,467.7 978.1,470.5 978.9,473.3 978.7,475.5 977.4,476.9 975.3,477.3 972.7,476.5 969.8,474.8 967.1,472.3 965,469.5 963.7,466.8 963.4,464.4 964.1,462.7 965.8,461.9 968.3,462.1 971.1,463.2 973.9,465.1Z"/></clipPath><path d="M976.3,467.7 978.1,470.5 978.9,473.3 978.7,475.5 977.4,476.9 975.3,477.3 972.7,476.5 969.8,474.8 967.1,472.3 965,469.5 963.7,466.8 963.4,464.4 964.1,462.7 965.8,461.9 968.3,462.1 971.1,463.2 973.9,465.1Z" fill="#141414"/><path clip-path="url(#c7)" d="M976.3,474.7 978.1,477.5 978.9,480.3 978.7,482.5 977.4,483.9 975.3,484.3 972.7,483.5 969.8,481.8 967.1,479.3 965,476.5 963.7,473.8 963.4,471.4 964.1,469.7 965.8,468.9 968.3,469.1 971.1,470.2 973.9,472.1Z" fill="#a9aeb5" stroke="#222" stroke-width="0.9"/><clipPath id="c8"><path d="M1020.3,478.4 1021.4,480.2 1021.4,482 1020.2,483.5 1018.2,484.4 1015.6,484.5 1013.1,483.8 1011.1,482.5 1009.9,480.8 1010,479 1011.1,477.5 1013.2,476.6 1015.7,476.5 1018.2,477.1Z"/></clipPath><path d="M1020.3,478.4 1021.4,480.2 1021.4,482 1020.2,483.5 1018.2,484.4 1015.6,484.5 1013.1,483.8 1011.1,482.5 1009.9,480.8 1010,479 1011.1,477.5 1013.2,476.6 1015.7,476.5 1018.2,477.1Z" fill="#141414"/><path clip-path="url(#c8)" d="M1020.3,485.4 1021.4,487.2 1021.4,489 1020.2,490.5 1018.2,491.4 1015.6,491.5 1013.1,490.8 1011.1,489.5 1009.9,487.8 1010,486 1011.1,484.5 1013.2,483.6 1015.7,483.5 1018.2,484.1Z" fill="#a9aeb5" stroke="#222" stroke-width="0.9"/><clipPath id="c9"><path d="M996.7,485 999.1,488.4 999.3,492.1 997.3,495.4 993.5,497.9 988.6,499.1 983.3,498.7 978.6,496.9 975.4,494.1 974.1,490.6 975,487 977.9,483.8 982.4,481.8 987.6,481.4 992.7,482.5Z"/></clipPath><path d="M996.7,485 999.1,488.4 999.3,492.1 997.3,495.4 993.5,497.9 988.6,499.1 983.3,498.7 978.6,496.9 975.4,494.1 974.1,490.6 975,487 977.9,483.8 982.4,481.8 987.6,481.4 992.7,482.5Z" fill="#141414"/><path clip-path="url(#c9)" d="M996.7,492 999.1,495.4 999.3,499.1 997.3,502.4 993.5,504.9 988.6,506.1 983.3,505.7 978.6,503.9 975.4,501.1 974.1,497.6 975,494 977.9,490.8 982.4,488.8 987.6,488.4 992.7,489.5Z" fill="#a9aeb5" stroke="#222" stroke-width="0.9"/><clipPath id="c10"><path d="M1023.4,510 1024.6,513.4 1024.6,516.7 1023.5,519.9 1021.1,522.8 1017.7,525.2 1013.5,527 1008.6,528 1003.3,527.9 997.8,527 992.6,525.4 987.7,523.3 983.4,520.9 980,518.2 977.7,515.4 976.5,512.6 976.4,510 977.6,507.6 980,505.2 983.3,502.8 987.5,500.7 992.4,499 997.7,498.2 1003.1,498.4 1008.4,499.5 1013.3,501.3 1017.6,503.8 1021,506.8Z"/></clipPath><path d="M1023.4,510 1024.6,513.4 1024.6,516.7 1023.5,519.9 1021.1,522.8 1017.7,525.2 1013.5,527 1008.6,528 1003.3,527.9 997.8,527 992.6,525.4 987.7,523.3 983.4,520.9 980,518.2 977.7,515.4 976.5,512.6 976.4,510 977.6,507.6 980,505.2 983.3,502.8 987.5,500.7 992.4,499 997.7,498.2 1003.1,498.4 1008.4,499.5 1013.3,501.3 1017.6,503.8 1021,506.8Z" fill="#141414"/><path clip-path="url(#c10)" d="M1023.4,517 1024.6,520.4 1024.6,523.7 1023.5,526.9 1021.1,529.8 1017.7,532.2 1013.5,534 1008.6,535 1003.3,534.9 997.8,534 992.6,532.4 987.7,530.3 983.4,527.9 980,525.2 977.7,522.4 976.5,519.6 976.4,517 977.6,514.6 980,512.2 983.3,509.8 987.5,507.7 992.4,506 997.7,505.2 1003.1,505.4 1008.4,506.5 1013.3,508.3 1017.6,510.8 1021,513.8Z" fill="#a9aeb5" stroke="#222" stroke-width="0.9"/><clipPath id="c11"><path d="M964.4,511.5 966.7,514.4 967.1,517.5 965.4,520.6 962.1,523.2 957.5,524.9 952.4,525.2 947.5,524 943.6,521.5 941.4,518.3 941,514.8 942.6,511.5 946,508.9 950.6,507.5 955.7,507.5 960.5,509Z"/></clipPath><path d="M964.4,511.5 966.7,514.4 967.1,517.5 965.4,520.6 962.1,523.2 957.5,524.9 952.4,525.2 947.5,524 943.6,521.5 941.4,518.3 941,514.8 942.6,511.5 946,508.9 950.6,507.5 955.7,507.5 960.5,509Z" fill="#141414"/><path clip-path="url(#c11)" d="M964.4,518.5 966.7,521.4 967.1,524.5 965.4,527.6 962.1,530.2 957.5,531.9 952.4,532.2 947.5,531 943.6,528.5 941.4,525.3 941,521.8 942.6,518.5 946,515.9 950.6,514.5 955.7,514.5 960.5,516Z" fill="#a9aeb5" stroke="#222" stroke-width="0.9"/><clipPath id="c12"><path d="M1037.8,517.1 1038.7,518.3 1038.6,519.6 1037.7,520.7 1036,521.4 1034,521.6 1031.9,521.2 1030.3,520.3 1029.4,519.1 1029.4,517.7 1030.4,516.6 1032,515.9 1034.1,515.8 1036.1,516.2Z"/></clipPath><path d="M1037.8,517.1 1038.7,518.3 1038.6,519.6 1037.7,520.7 1036,521.4 1034,521.6 1031.9,521.2 1030.3,520.3 1029.4,519.1 1029.4,517.7 1030.4,516.6 1032,515.9 1034.1,515.8 1036.1,516.2Z" fill="#141414"/><path clip-path="url(#c12)" d="M1037.8,524.1 1038.7,525.3 1038.6,526.6 1037.7,527.7 1036,528.4 1034,528.6 1031.9,528.2 1030.3,527.3 1029.4,526.1 1029.4,524.7 1030.4,523.6 1032,522.9 1034.1,522.8 1036.1,523.2Z" fill="#a9aeb5" stroke="#222" stroke-width="0.9"/><clipPath id="c13"><path d="M1039,529.6 1041.5,532.3 1042.2,535.2 1041.1,538 1038.2,540.4 1034,542 1029,542.5 1023.7,541.9 1018.8,540.3 1014.9,538.2 1012.5,535.7 1011.8,533.2 1012.9,530.7 1015.7,528.5 1019.9,526.8 1024.9,526 1030.2,526.3 1035.1,527.6Z"/></clipPath><path d="M1039,529.6 1041.5,532.3 1042.2,535.2 1041.1,538 1038.2,540.4 1034,542 1029,542.5 1023.7,541.9 1018.8,540.3 1014.9,538.2 1012.5,535.7 1011.8,533.2 1012.9,530.7 1015.7,528.5 1019.9,526.8 1024.9,526 1030.2,526.3 1035.1,527.6Z" fill="#141414"/><path clip-path="url(#c13)" d="M1039,536.6 1041.5,539.3 1042.2,542.2 1041.1,545 1038.2,547.4 1034,549 1029,549.5 1023.7,548.9 1018.8,547.3 1014.9,545.2 1012.5,542.7 1011.8,540.2 1012.9,537.7 1015.7,535.5 1019.9,533.8 1024.9,533 1030.2,533.3 1035.1,534.6Z" fill="#a9aeb5" stroke="#222" stroke-width="0.9"/><clipPath id="c14"><path d="M940.4,532.4 941.3,533.8 941.3,535.3 940.3,536.5 938.5,537.2 936.3,537.3 934.1,536.8 932.4,535.7 931.5,534.3 931.5,532.9 932.5,531.7 934.3,530.9 936.5,530.8 938.6,531.3Z"/></clipPath><path d="M940.4,532.4 941.3,533.8 941.3,535.3 940.3,536.5 938.5,537.2 936.3,537.3 934.1,536.8 932.4,535.7 931.5,534.3 931.5,532.9 932.5,531.7 934.3,530.9 936.5,530.8 938.6,531.3Z" fill="#141414"/><path clip-path="url(#c14)" d="M940.4,539.4 941.3,540.8 941.3,542.3 940.3,543.5 938.5,544.2 936.3,544.3 934.1,543.8 932.4,542.7 931.5,541.3 931.5,539.9 932.5,538.7 934.3,537.9 936.5,537.8 938.6,538.3Z" fill="#a9aeb5" stroke="#222" stroke-width="0.9"/><clipPath id="c15"><path d="M991.3,543.6 993.2,546.1 993.1,549.2 991.1,552.2 987.7,554.6 983.4,555.6 979.2,555.1 975.8,553.3 974,550.7 974.1,547.7 976,544.8 979.5,542.7 983.7,541.6 988,542Z"/></clipPath><path d="M991.3,543.6 993.2,546.1 993.1,549.2 991.1,552.2 987.7,554.6 983.4,555.6 979.2,555.1 975.8,553.3 974,550.7 974.1,547.7 976,544.8 979.5,542.7 983.7,541.6 988,542Z" fill="#141414"/><path clip-path="url(#c15)" d="M991.3,550.6 993.2,553.1 993.1,556.2 991.1,559.2 987.7,561.6 983.4,562.6 979.2,562.1 975.8,560.3 974,557.7 974.1,554.7 976,551.8 979.5,549.7 983.7,548.6 988,549Z" fill="#a9aeb5" stroke="#222" stroke-width="0.9"/><clipPath id="c16"><path d="M1010.6,545.5 1011.6,546.6 1011.5,547.7 1010.5,548.7 1008.7,549.6 1006.5,550 1004.3,549.8 1002.6,549.1 1001.7,547.8 1001.7,546.4 1002.7,545.2 1004.5,544.4 1006.7,544.3 1008.9,544.7Z"/></clipPath><path d="M1010.6,545.5 1011.6,546.6 1011.5,547.7 1010.5,548.7 1008.7,549.6 1006.5,550 1004.3,549.8 1002.6,549.1 1001.7,547.8 1001.7,546.4 1002.7,545.2 1004.5,544.4 1006.7,544.3 1008.9,544.7Z" fill="#141414"/><path clip-path="url(#c16)" d="M1010.6,552.5 1011.6,553.6 1011.5,554.7 1010.5,555.7 1008.7,556.6 1006.5,557 1004.3,556.8 1002.6,556.1 1001.7,554.8 1001.7,553.4 1002.7,552.2 1004.5,551.4 1006.7,551.3 1008.9,551.7Z" fill="#a9aeb5" stroke="#222" stroke-width="0.9"/><clipPath id="c17"><path d="M965.5,555.6 966.4,557 966.4,558.5 965.3,559.8 963.5,560.6 961.2,560.7 959,560.2 957.2,559.1 956.2,557.7 956.3,556.2 957.3,554.9 959.2,554.2 961.4,554 963.7,554.5Z"/></clipPath><path d="M965.5,555.6 966.4,557 966.4,558.5 965.3,559.8 963.5,560.6 961.2,560.7 959,560.2 957.2,559.1 956.2,557.7 956.3,556.2 957.3,554.9 959.2,554.2 961.4,554 963.7,554.5Z" fill="#141414"/><path clip-path="url(#c17)" d="M965.5,562.6 966.4,564 966.4,565.5 965.3,566.8 963.5,567.6 961.2,567.7 959,567.2 957.2,566.1 956.2,564.7 956.3,563.2 957.3,561.9 959.2,561.2 961.4,561 963.7,561.5Z" fill="#a9aeb5" stroke="#222" stroke-width="0.9"/><mask id="m3" maskUnits="userSpaceOnUse" x="0" y="0" width="1920" height="1029"><rect x="0" y="0" width="1920" height="1029" fill="#fff"/><path d="M919.6,492.3 922.2,494.9 923.8,497.9 924.3,501.1 923.7,504.3 922,507.2 919.2,509.8 915.6,511.9 911.3,513.2 906.5,513.9 901.4,513.9 896.4,513.1 891.7,511.7 887.5,509.8 883.9,507.3 881.3,504.5 879.7,501.5 879.2,498.5 879.9,495.5 881.6,492.9 884.3,490.6 887.9,488.8 892.2,487.6 897,486.9 902,486.9 907,487.4 911.8,488.5 916,490.1ZM944.4,483.3 946.2,485.2 946.1,487 944.3,488.3 941,488.9 937,488.8 933.1,488 929.9,486.5 928.2,484.6 928.3,482.7 930.1,481.4 933.4,480.9 937.3,481.1 941.3,481.9ZM958.5,475.2 960.3,477.5 960.2,480.4 958.2,483 954.7,484.8 950.4,485.1 946.1,484.3 942.7,482.8 940.9,480.8 941,478.8 943,476.8 946.5,475 950.8,473.9 955.1,473.9ZM976.3,467.7 978.1,470.5 978.9,473.3 978.7,475.5 977.4,476.9 975.3,477.3 972.7,476.5 969.8,474.8 967.1,472.3 965,469.5 963.7,466.8 963.4,464.4 964.1,462.7 965.8,461.9 968.3,462.1 971.1,463.2 973.9,465.1ZM1020.3,478.4 1021.4,480.2 1021.4,482 1020.2,483.5 1018.2,484.4 1015.6,484.5 1013.1,483.8 1011.1,482.5 1009.9,480.8 1010,479 1011.1,477.5 1013.2,476.6 1015.7,476.5 1018.2,477.1ZM996.7,485 999.1,488.4 999.3,492.1 997.3,495.4 993.5,497.9 988.6,499.1 983.3,498.7 978.6,496.9 975.4,494.1 974.1,490.6 975,487 977.9,483.8 982.4,481.8 987.6,481.4 992.7,482.5ZM1023.4,510 1024.6,513.4 1024.6,516.7 1023.5,519.9 1021.1,522.8 1017.7,525.2 1013.5,527 1008.6,528 1003.3,527.9 997.8,527 992.6,525.4 987.7,523.3 983.4,520.9 980,518.2 977.7,515.4 976.5,512.6 976.4,510 977.6,507.6 980,505.2 983.3,502.8 987.5,500.7 992.4,499 997.7,498.2 1003.1,498.4 1008.4,499.5 1013.3,501.3 1017.6,503.8 1021,506.8ZM964.4,511.5 966.7,514.4 967.1,517.5 965.4,520.6 962.1,523.2 957.5,524.9 952.4,525.2 947.5,524 943.6,521.5 941.4,518.3 941,514.8 942.6,511.5 946,508.9 950.6,507.5 955.7,507.5 960.5,509ZM1037.8,517.1 1038.7,518.3 1038.6,519.6 1037.7,520.7 1036,521.4 1034,521.6 1031.9,521.2 1030.3,520.3 1029.4,519.1 1029.4,517.7 1030.4,516.6 1032,515.9 1034.1,515.8 1036.1,516.2ZM1039,529.6 1041.5,532.3 1042.2,535.2 1041.1,538 1038.2,540.4 1034,542 1029,542.5 1023.7,541.9 1018.8,540.3 1014.9,538.2 1012.5,535.7 1011.8,533.2 1012.9,530.7 1015.7,528.5 1019.9,526.8 1024.9,526 1030.2,526.3 1035.1,527.6ZM940.4,532.4 941.3,533.8 941.3,535.3 940.3,536.5 938.5,537.2 936.3,537.3 934.1,536.8 932.4,535.7 931.5,534.3 931.5,532.9 932.5,531.7 934.3,530.9 936.5,530.8 938.6,531.3ZM991.3,543.6 993.2,546.1 993.1,549.2 991.1,552.2 987.7,554.6 983.4,555.6 979.2,555.1 975.8,553.3 974,550.7 974.1,547.7 976,544.8 979.5,542.7 983.7,541.6 988,542ZM1010.6,545.5 1011.6,546.6 1011.5,547.7 1010.5,548.7 1008.7,549.6 1006.5,550 1004.3,549.8 1002.6,549.1 1001.7,547.8 1001.7,546.4 1002.7,545.2 1004.5,544.4 1006.7,544.3 1008.9,544.7ZM965.5,555.6 966.4,557 966.4,558.5 965.3,559.8 963.5,560.6 961.2,560.7 959,560.2 957.2,559.1 956.2,557.7 956.3,556.2 957.3,554.9 959.2,554.2 961.4,554 963.7,554.5Z" fill="#000"/></mask><g mask="url(#m3)"><path d="M859.1,495.6 869.7,491.7 877.9,498.6 867.3,502.7ZM867.3,502.7 877.9,498.6 886.1,505.5 875.5,509.8ZM875.5,509.8 886.1,505.5 894.3,512.6 883.7,517ZM883.7,517 894.3,512.6 902.5,519.8 891.8,524.2ZM891.8,524.2 902.5,519.8 910.7,527.2 900,531.5ZM900,531.5 910.7,527.2 918.9,534.7 908.2,539ZM908.2,539 918.9,534.7 927.1,542.3 916.4,546.6ZM916.4,546.6 927.1,542.3 935.3,550 924.6,554.2ZM924.6,554.2 935.3,550 943.5,557.7 932.7,562ZM932.7,562 943.5,557.7 951.7,565.4 940.9,569.9ZM940.9,569.9 951.7,565.4 959.9,573.1 949.1,577.8ZM949.1,577.8 959.9,573.1 968.1,580.7 957.3,585.7ZM869.7,491.7 880.2,487.8 888.4,494.5 877.9,498.6ZM877.9,498.6 888.4,494.5 896.7,501.2 886.1,505.5ZM886.1,505.5 896.7,501.2 904.9,508.2 894.3,512.6ZM894.3,512.6 904.9,508.2 913.1,515.4 902.5,519.8ZM902.5,519.8 913.1,515.4 921.3,522.8 910.7,527.2ZM910.7,527.2 921.3,522.8 929.6,530.4 918.9,534.7ZM918.9,534.7 929.6,530.4 937.8,538 927.1,542.3ZM927.1,542.3 937.8,538 946,545.7 935.3,550ZM935.3,550 946,545.7 954.3,553.3 943.5,557.7ZM943.5,557.7 954.3,553.3 962.5,560.9 951.7,565.4ZM951.7,565.4 962.5,560.9 970.7,568.3 959.9,573.1ZM959.9,573.1 970.7,568.3 978.9,575.7 968.1,580.7ZM880.2,487.8 890.8,483.8 899,490.3 888.4,494.5ZM888.4,494.5 899,490.3 907.3,496.8 896.7,501.2ZM896.7,501.2 907.3,496.8 915.5,503.7 904.9,508.2ZM937.8,538 948.5,533.5 956.8,541.1 946,545.7ZM946,545.7 956.8,541.1 965,548.6 954.3,553.3ZM954.3,553.3 965,548.6 973.3,556 962.5,560.9ZM890.8,483.8 901.3,479.9 909.6,485.9 899,490.3ZM899,490.3 909.6,485.9 917.9,492.2 907.3,496.8ZM909.6,485.9 920.2,482 928.5,487.8 917.9,492.2ZM917.9,492.2 928.5,487.8 936.8,494 926.1,498.7ZM991.3,517.1 1002.1,512.9 1010.4,520.5 999.7,524.3ZM1018.8,527.6 1029.5,522.9 1037.9,529.4 1027.1,534ZM1021.1,515.7 1031.9,511.1 1040.3,518.4 1029.5,522.9ZM1029.5,522.9 1040.3,518.4 1048.7,524.8 1037.9,529.4ZM1037.9,529.4 1048.7,524.8 1057.1,530.6 1046.3,535.4ZM964.7,454.4 975.2,449.9 983.7,455 973.1,459.6ZM973.1,459.6 983.7,455 992.1,460.5 981.5,465.3ZM1031.9,511.1 1042.6,506.7 1051,513.9 1040.3,518.4ZM1040.3,518.4 1051,513.9 1059.4,520.3 1048.7,524.8ZM975.2,449.9 985.8,445.4 994.2,450.4 983.7,455ZM983.7,455 994.2,450.4 1002.7,455.8 992.1,460.5ZM1042.6,506.7 1053.3,502.2 1061.8,509.4 1051,513.9ZM1051,513.9 1061.8,509.4 1070.2,515.7 1059.4,520.3Z" fill="#9a9ca1" stroke="#9a9ca1" stroke-width="0.8"/><path d="M904.9,508.2 915.5,503.7 923.8,510.8 913.1,515.4ZM913.1,515.4 923.8,510.8 932,518.2 921.3,522.8ZM921.3,522.8 932,518.2 940.3,525.8 929.6,530.4ZM929.6,530.4 940.3,525.8 948.5,533.5 937.8,538ZM962.5,560.9 973.3,556 981.5,563.2 970.7,568.3ZM983,509.6 993.7,505.1 1002.1,512.9 991.3,517.1ZM1010.4,520.5 1021.1,515.7 1029.5,522.9 1018.8,527.6ZM954.1,459.3 964.7,454.4 973.1,459.6 962.5,464.7ZM1023.5,503.2 1034.2,498.7 1042.6,506.7 1031.9,511.1Z" fill="#a0a2a7" stroke="#a0a2a7" stroke-width="0.8"/><path d="M970.7,568.3 981.5,563.2 989.7,570.2 978.9,575.7ZM907.3,496.8 917.9,492.2 926.1,498.7 915.5,503.7ZM962.5,464.7 973.1,459.6 981.5,465.3 970.9,470.4ZM1012.8,507.9 1023.5,503.2 1031.9,511.1 1021.1,515.7ZM981.5,465.3 992.1,460.5 1000.5,466.8 989.9,471.7ZM992.1,460.5 1002.7,455.8 1011.1,462.1 1000.5,466.8ZM1034.2,498.7 1044.9,494.2 1053.3,502.2 1042.6,506.7Z" fill="#a6a8ad" stroke="#a6a8ad" stroke-width="0.8"/><path d="M915.5,503.7 926.1,498.7 934.4,505.7 923.8,510.8ZM926.1,498.7 936.8,494 945.1,500.6 934.4,505.7ZM974.7,502.2 985.3,497.3 993.7,505.1 983,509.6ZM1002.1,512.9 1012.8,507.9 1021.1,515.7 1010.4,520.5ZM970.9,470.4 981.5,465.3 989.9,471.7 979.3,476.8ZM1004.4,499.7 1015.1,494.9 1023.5,503.2 1012.8,507.9ZM989.9,471.7 1000.5,466.8 1008.9,474 998.3,478.8ZM1015.1,494.9 1025.8,490.3 1034.2,498.7 1023.5,503.2ZM1000.5,466.8 1011.1,462.1 1019.6,469.3 1008.9,474ZM1025.8,490.3 1036.4,485.8 1044.9,494.2 1034.2,498.7Z" fill="#acaeb3" stroke="#acaeb3" stroke-width="0.8"/><path d="M923.8,510.8 934.4,505.7 942.7,512.9 932,518.2ZM934.4,505.7 945.1,500.6 953.3,507.6 942.7,512.9ZM979.3,476.8 989.9,471.7 998.3,478.8 987.6,483.9ZM998.3,478.8 1008.9,474 1017.3,482 1006.7,486.7ZM1006.7,486.7 1017.3,482 1025.8,490.3 1015.1,494.9ZM1008.9,474 1019.6,469.3 1028,477.3 1017.3,482ZM1017.3,482 1028,477.3 1036.4,485.8 1025.8,490.3Z" fill="#b2b4b9" stroke="#b2b4b9" stroke-width="0.8"/><path d="M932,518.2 942.7,512.9 951,520.4 940.3,525.8ZM940.3,525.8 951,520.4 959.2,528 948.5,533.5ZM966.3,495.1 977,489.8 985.3,497.3 974.7,502.2ZM987.6,483.9 998.3,478.8 1006.7,486.7 996,491.6ZM996,491.6 1006.7,486.7 1015.1,494.9 1004.4,499.7Z" fill="#b8babf" stroke="#b8babf" stroke-width="0.8"/><path d="M948.5,533.5 959.2,528 967.5,535.4 956.8,541.1ZM956.8,541.1 967.5,535.4 975.8,542.7 965,548.6ZM942.7,512.9 953.3,507.6 961.6,514.9 951,520.4ZM941.3,477 951.9,471 960.3,476.7 949.7,482.5ZM949.7,482.5 960.3,476.7 968.6,482.9 958,488.5ZM958,488.5 968.6,482.9 977,489.8 966.3,495.1ZM993.7,505.1 1004.4,499.7 1012.8,507.9 1002.1,512.9Z" fill="#bec0c5" stroke="#bec0c5" stroke-width="0.8"/><path d="M965,548.6 975.8,542.7 984,549.7 973.3,556ZM951,520.4 961.6,514.9 969.9,522.2 959.2,528ZM933,471.8 943.6,465.7 951.9,471 941.3,477Z" fill="#c4c6cb" stroke="#c4c6cb" stroke-width="0.8"/><path d="M973.3,556 984,549.7 992.3,556.5 981.5,563.2ZM959.2,528 969.9,522.2 978.2,529.4 967.5,535.4ZM967.5,535.4 978.2,529.4 986.5,536.3 975.8,542.7ZM985.3,497.3 996,491.6 1004.4,499.7 993.7,505.1Z" fill="#caccd1" stroke="#caccd1" stroke-width="0.8"/><path d="M981.5,563.2 992.3,556.5 1000.6,563.1 989.7,570.2ZM975.8,542.7 986.5,536.3 994.8,542.9 984,549.7Z" fill="#d6d8dd" stroke="#d6d8dd" stroke-width="0.8"/><path d="M901.3,479.9 911.9,476.4 920.2,482 909.6,485.9ZM1003.1,549.1 1013.9,545 1022.2,550.7 1011.4,555.2ZM999.7,524.3 1010.4,520.5 1018.8,527.6 1008,531.1ZM1027.1,534 1037.9,529.4 1046.3,535.4 1035.5,540ZM1035.5,540 1046.3,535.4 1054.6,541 1043.8,545.6ZM1046.3,535.4 1057.1,530.6 1065.5,536 1054.6,541ZM1048.7,524.8 1059.4,520.3 1067.9,525.9 1057.1,530.6ZM1057.1,530.6 1067.9,525.9 1076.3,531.1 1065.5,536ZM1059.4,520.3 1070.2,515.7 1078.7,521.1 1067.9,525.9ZM1067.9,525.9 1078.7,521.1 1087.1,526.1 1076.3,531.1Z" fill="#94969b" stroke="#94969b" stroke-width="0.8"/><path d="M984,549.7 994.8,542.9 1003.1,549.1 992.3,556.5Z" fill="#dcdee3" stroke="#dcdee3" stroke-width="0.8"/><path d="M992.3,556.5 1003.1,549.1 1011.4,555.2 1000.6,563.1Z" fill="#e8eaef" stroke="#e8eaef" stroke-width="0.8"/><path d="M911.9,476.4 922.5,474.4 930.8,479.7 920.2,482ZM980.6,519 991.3,517.1 999.7,524.3 988.9,526.1ZM988.9,526.1 999.7,524.3 1008,531.1 997.3,532.8Z" fill="#828489" stroke="#828489" stroke-width="0.8"/><path d="M920.2,482 930.8,479.7 939.1,485.2 928.5,487.8ZM928.5,487.8 939.1,485.2 947.4,491.1 936.8,494ZM922.5,474.4 933,471.8 941.3,477 930.8,479.7ZM930.8,479.7 941.3,477 949.7,482.5 939.1,485.2ZM939.1,485.2 949.7,482.5 958,488.5 947.4,491.1ZM947.4,491.1 958,488.5 966.3,495.1 955.7,497.6ZM955.7,497.6 966.3,495.1 974.7,502.2 964,504.5ZM964,504.5 974.7,502.2 983,509.6 972.3,511.7ZM972.3,511.7 983,509.6 991.3,517.1 980.6,519ZM1024.7,543.2 1035.5,540 1043.8,545.6 1033,548.8Z" fill="#888a8f" stroke="#888a8f" stroke-width="0.8"/><path d="M936.8,494 947.4,491.1 955.7,497.6 945.1,500.6ZM945.1,500.6 955.7,497.6 964,504.5 953.3,507.6ZM953.3,507.6 964,504.5 972.3,511.7 961.6,514.9ZM961.6,514.9 972.3,511.7 980.6,519 969.9,522.2ZM969.9,522.2 980.6,519 988.9,526.1 978.2,529.4ZM978.2,529.4 988.9,526.1 997.3,532.8 986.5,536.3ZM986.5,536.3 997.3,532.8 1005.6,539.1 994.8,542.9ZM994.8,542.9 1005.6,539.1 1013.9,545 1003.1,549.1ZM1008,531.1 1018.8,527.6 1027.1,534 1016.3,537.4ZM1016.3,537.4 1027.1,534 1035.5,540 1024.7,543.2Z" fill="#8e9095" stroke="#8e9095" stroke-width="0.8"/><path d="M997.3,532.8 1008,531.1 1016.3,537.4 1005.6,539.1ZM1005.6,539.1 1016.3,537.4 1024.7,543.2 1013.9,545ZM1013.9,545 1024.7,543.2 1033,548.8 1022.2,550.7Z" fill="#7c7e83" stroke="#7c7e83" stroke-width="0.8"/><path d="M943.6,465.7 954.1,459.3 962.5,464.7 951.9,471ZM951.9,471 962.5,464.7 970.9,470.4 960.3,476.7ZM960.3,476.7 970.9,470.4 979.3,476.8 968.6,482.9ZM968.6,482.9 979.3,476.8 987.6,483.9 977,489.8ZM977,489.8 987.6,483.9 996,491.6 985.3,497.3Z" fill="#d0d2d7" stroke="#d0d2d7" stroke-width="0.8"/><path d="M859.1,495.6 868.9,504.1 878.7,512.7 888.6,521.3 898.4,530.1 908.2,539 918,548.1 927.8,557.3 937.7,566.7 947.5,576.2 957.3,585.7 M864.1,493.8 873.9,502.1 883.8,510.6 893.6,519.2 903.4,528 913.3,537 923.1,546.1 932.9,555.3 942.8,564.6 952.6,574 962.4,583.4 M869,491.9 878.9,500.2 888.7,508.6 898.6,517.2 908.4,526 918.3,535 928.1,544.1 938,553.3 947.8,562.6 957.6,571.8 967.5,581 M873.9,490.1 883.8,498.3 893.6,506.6 903.5,515.1 913.3,523.9 923.2,533 933,542.1 942.9,551.4 952.8,560.5 962.6,569.7 972.5,578.7 M878.6,488.4 888.5,496.4 898.4,504.7 908.2,513.2 918.1,522 928,531 937.8,540.2 947.7,549.4 957.6,558.6 967.4,567.6 977.3,576.5 M883.2,486.7 893.1,494.6 902.9,502.8 912.8,511.2 922.7,520 932.6,529.1 942.5,538.3 952.3,547.5 962.2,556.6 972.1,565.5 982,574.3 M887.5,485 897.4,492.9 907.3,500.9 917.2,509.3 927.1,518.2 937,527.3 946.9,536.5 956.8,545.6 966.7,554.6 976.6,563.4 986.4,572 M891.7,483.5 901.6,491.2 911.5,499.2 921.4,507.5 931.3,516.3 941.2,525.4 951.1,534.6 961,543.7 970.9,552.6 980.8,561.2 990.7,569.7 M895.5,482 905.5,489.6 915.4,497.4 925.3,505.7 935.2,514.4 945.1,523.5 955,532.7 964.9,541.7 974.8,550.5 984.7,559 994.6,567.3 M899.2,480.7 909.1,488.1 919,495.8 928.9,503.9 938.8,512.6 948.7,521.6 958.7,530.7 968.6,539.7 978.5,548.3 988.4,556.7 998.3,564.8 M902.5,479.5 912.4,486.7 922.3,494.2 932.3,502.3 942.2,510.8 952.1,519.8 962,528.8 972,537.7 981.9,546.2 991.8,554.3 1001.8,562.2 M905.6,478.4 915.5,485.5 925.4,492.8 935.4,500.8 945.3,509.2 955.2,518.1 965.2,527 975.1,535.8 985,544.2 995,552.1 1004.9,559.8 M908.3,477.5 918.3,484.4 928.2,491.6 938.2,499.4 948.1,507.8 958,516.6 968,525.4 977.9,534.1 987.9,542.4 997.8,550.2 1007.7,557.7 M910.9,476.7 920.8,483.5 930.8,490.6 940.7,498.3 950.7,506.6 960.6,515.3 970.6,524.1 980.5,532.7 990.5,540.8 1000.4,548.5 1010.4,555.9 M913.2,476.1 923.1,482.8 933.1,489.8 943.1,497.4 953,505.6 963,514.3 972.9,523.1 982.9,531.6 992.8,539.6 1002.8,547.2 1012.7,554.4 M915.3,475.6 925.3,482.2 935.2,489.1 945.2,496.7 955.1,504.9 965.1,513.5 975.1,522.2 985,530.7 995,538.7 1004.9,546.1 1014.9,553.2 M917.2,475.2 927.2,481.7 937.2,488.6 947.1,496.1 957.1,504.3 967.1,512.9 977,521.6 987,530 996.9,537.9 1006.9,545.3 1016.9,552.3 M919.1,474.9 929,481.4 939,488.2 949,495.7 958.9,503.8 968.9,512.4 978.9,521.1 988.8,529.5 998.8,537.4 1008.8,544.7 1018.7,551.6 M920.8,474.7 930.7,481 940.7,487.8 950.7,495.3 960.7,503.4 970.6,512 980.6,520.7 990.6,529.1 1000.5,536.9 1010.5,544.2 1020.5,551.1 M922.5,474.4 932.4,480.8 942.4,487.5 952.4,495 962.4,503.1 972.3,511.7 982.3,520.4 992.3,528.8 1002.2,536.6 1012.2,543.8 1022.2,550.7 M924.1,474.2 934.1,480.5 944.1,487.2 954.1,494.6 964,502.8 974,511.4 984,520.2 994,528.6 1004,536.3 1013.9,543.5 1023.9,550.3 M925.8,473.9 935.8,480.2 945.8,486.9 955.8,494.3 965.8,502.5 975.8,511.2 985.7,519.9 995.7,528.3 1005.7,536.1 1015.7,543.3 1025.7,550 M927.7,473.5 937.6,479.8 947.6,486.5 957.6,493.9 967.6,502.2 977.6,510.9 987.6,519.6 997.6,528.1 1007.6,535.9 1017.5,543 1027.5,549.7 M929.6,473 939.6,479.3 949.6,486 959.6,493.5 969.6,501.7 979.6,510.5 989.5,519.3 999.5,527.8 1009.5,535.6 1019.5,542.7 1029.5,549.4 M931.7,472.3 941.7,478.6 951.7,485.3 961.7,492.8 971.7,501.1 981.7,510 991.7,518.9 1001.7,527.4 1011.7,535.2 1021.7,542.4 1031.7,549.1 M934,471.3 944,477.6 954,484.4 964,492 974,500.4 984,509.3 994,518.3 1004,526.9 1014,534.7 1024,541.9 1034,548.6 M936.6,470.1 946.6,476.4 956.6,483.2 966.6,490.9 976.6,499.3 986.6,508.4 996.6,517.5 1006.6,526.1 1016.6,534.1 1026.6,541.2 1036.7,548 M939.3,468.4 949.4,474.8 959.4,481.7 969.4,489.4 979.4,498 989.4,507.2 999.4,516.4 1009.5,525.1 1019.5,533.1 1029.5,540.4 1039.5,547.1 M942.4,466.5 952.4,472.9 962.5,479.8 972.5,487.7 982.5,496.4 992.5,505.7 1002.6,515 1012.6,523.9 1022.6,532 1032.6,539.3 1042.6,546 M945.7,464.3 955.8,470.7 965.8,477.8 975.8,485.7 985.9,494.5 995.9,504 1005.9,513.5 1016,522.4 1026,530.6 1036,537.9 1046.1,544.7 M949.4,462 959.4,468.5 969.4,475.6 979.5,483.6 989.5,492.5 999.6,502.1 1009.6,511.7 1019.6,520.8 1029.7,529 1039.7,536.4 1049.8,543.1 M953.2,459.8 963.3,466.3 973.3,473.4 983.4,481.4 993.4,490.5 1003.5,500.2 1013.5,509.9 1023.6,519.1 1033.6,527.3 1043.7,534.6 1053.7,541.4 M957.4,457.7 967.4,464.2 977.5,471.2 987.5,479.3 997.6,488.4 1007.7,498.2 1017.7,508 1027.8,517.2 1037.8,525.5 1047.9,532.8 1058,539.5 M961.7,455.7 971.8,462.1 981.9,469.1 991.9,477.2 1002,486.4 1012.1,496.2 1022.1,506.1 1032.2,515.4 1042.3,523.6 1052.4,530.8 1062.4,537.4 M966.3,453.7 976.4,460 986.4,467 996.5,475.1 1006.6,484.3 1016.7,494.2 1026.8,504.2 1036.8,513.4 1046.9,521.6 1057,528.8 1067.1,535.3 M971,451.7 981.1,457.9 991.2,464.9 1001.3,473 1011.4,482.2 1021.5,492.2 1031.6,502.1 1041.7,511.4 1051.7,519.6 1061.8,526.7 1071.9,533.1 M975.9,449.6 986,455.8 996.1,462.7 1006.2,470.8 1016.3,480 1026.4,490.1 1036.5,500.1 1046.6,509.4 1056.7,517.6 1066.8,524.5 1076.9,530.8 M980.8,447.5 990.9,453.6 1001,460.4 1011.2,468.5 1021.3,477.8 1031.4,487.9 1041.5,498 1051.6,507.3 1061.7,515.4 1071.9,522.3 1082,528.4 M985.8,445.4 995.9,451.4 1006.1,458.2 1016.2,466.3 1026.3,475.6 1036.4,485.8 1046.6,495.9 1056.7,505.2 1066.8,513.3 1077,520.1 1087.1,526.1 M859.1,495.6 871.8,490.9 884.4,486.2 897.1,481.4 909.8,477 922.5,474.4 935.1,470.8 947.8,463 960.5,456.2 973.1,450.8 985.8,445.4 M864.2,500 876.9,495.2 889.6,490.3 902.3,485.3 914.9,480.6 927.6,477.7 940.3,474.1 953,466.3 965.7,459.5 978.4,453.9 991.1,448.5 M869.2,504.4 881.9,499.4 894.6,494.4 907.3,489.2 920,484.1 932.7,481 945.4,477.3 958.2,469.7 970.9,462.9 983.6,457.2 996.3,451.6 M874.1,508.6 886.9,503.5 899.6,498.4 912.3,493 925,487.6 937.7,484.3 950.4,480.6 963.2,473.1 975.9,466.3 988.6,460.5 1001.3,454.9 M878.9,512.7 891.6,507.6 904.3,502.3 917,496.8 929.8,491.1 942.5,487.6 955.2,484 968,476.6 980.7,469.8 993.4,464 1006.2,458.3 M883.3,516.7 896.1,511.4 908.8,506.2 921.6,500.5 934.3,494.6 947.1,490.9 959.8,487.4 972.6,480.1 985.3,473.4 998.1,467.5 1010.8,461.8 M887.6,520.4 900.3,515.1 913.1,509.8 925.8,504.1 938.6,498 951.4,494.2 964.1,490.7 976.9,483.6 989.6,476.9 1002.4,471.1 1015.2,465.4 M891.5,523.9 904.3,518.7 917.1,513.3 929.8,507.5 942.6,501.2 955.4,497.3 968.1,494 980.9,487.1 993.7,480.5 1006.5,474.7 1019.2,469 M895.2,527.2 908,522 920.8,516.6 933.6,510.8 946.4,504.4 959.1,500.4 971.9,497.2 984.7,490.4 997.5,483.9 1010.3,478.2 1023.1,472.5 M898.7,530.3 911.5,525.1 924.3,519.8 937.1,513.9 949.9,507.4 962.7,503.4 975.5,500.2 988.3,493.7 1001,487.3 1013.8,481.6 1026.6,475.9 M902,533.3 914.8,528.1 927.6,522.8 940.4,516.9 953.2,510.3 966,506.2 978.8,503.2 991.6,496.8 1004.4,490.5 1017.2,484.9 1030,479.3 M905.1,536.2 917.9,531 930.8,525.7 943.6,519.8 956.4,513.1 969.2,509 982,506.1 994.8,499.9 1007.6,493.7 1020.5,488.1 1033.3,482.5 M908.2,539 921,533.8 933.9,528.6 946.7,522.7 959.5,515.8 972.3,511.7 985.1,508.9 998,502.9 1010.8,496.8 1023.6,491.2 1036.4,485.8 M911.3,541.8 924.1,536.7 936.9,531.5 949.8,525.6 962.6,518.6 975.5,514.5 988.3,511.8 1001.1,505.9 1014,499.9 1026.8,494.4 1039.6,489 M914.4,544.7 927.3,539.6 940.1,534.4 953,528.5 965.8,521.5 978.7,517.3 991.5,514.7 1004.3,509 1017.2,503.1 1030,497.6 1042.9,492.2 M917.7,547.8 930.6,542.7 943.4,537.5 956.3,531.5 969.1,524.4 982,520.2 994.8,517.7 1007.7,512.2 1020.6,506.3 1033.4,500.9 1046.3,495.6 M921.2,551.1 934,546 946.9,540.8 959.8,534.8 972.6,527.5 985.5,523.2 998.4,520.8 1011.2,515.5 1024.1,509.7 1037,504.3 1049.8,499 M924.9,554.5 937.8,549.4 950.6,544.3 963.5,538.2 976.4,530.7 989.3,526.3 1002.2,524 1015,518.9 1027.9,513.2 1040.8,507.9 1053.7,502.5 M928.8,558.3 941.7,553.2 954.6,547.9 967.5,541.8 980.4,534.2 993.3,529.6 1006.2,527.4 1019.1,522.4 1032,516.8 1044.9,511.4 1057.7,506.1 M933.1,562.3 946,557.1 958.9,551.8 971.8,545.6 984.7,537.7 997.6,533 1010.5,530.9 1023.4,526 1036.3,520.4 1049.2,515.1 1062.1,509.7 M937.5,566.6 950.5,561.3 963.4,555.9 976.3,549.5 989.2,541.4 1002.1,536.5 1015.1,534.4 1028,529.6 1040.9,524.1 1053.8,518.6 1066.7,513.2 M942.3,571.1 955.2,565.7 968.1,560.2 981.1,553.6 994,545.1 1006.9,540.1 1019.9,537.9 1032.8,533.2 1045.7,527.7 1058.7,522.1 1071.6,516.6 M947.2,575.9 960.1,570.3 973.1,564.6 986,557.7 999,549 1011.9,543.6 1024.9,541.4 1037.8,536.8 1050.7,531.2 1063.7,525.5 1076.6,519.9 M952.2,580.7 965.2,575 978.1,569.1 991.1,562 1004.1,552.8 1017,547.1 1030,544.9 1042.9,540.3 1055.9,534.6 1068.9,528.8 1081.8,523 M957.3,585.7 970.3,579.7 983.3,573.6 996.2,566.2 1009.2,556.6 1022.2,550.7 1035.2,548.3 1048.2,543.8 1061.1,538 1074.1,532.1 1087.1,526.1" fill="none" stroke="#141414" stroke-width="0.95"/></g><path d="M919.6,492.3 921.4,494 922.9,495.9 923.8,497.9 924.3,500 924.3,502.1 923.7,504.3 922.7,506.3 921.2,508.2 919.2,509.8 916.9,511.2 914.2,512.4 911.3,513.2 908.1,513.8 904.8,514 901.4,513.9 898.1,513.5 894.8,512.7 891.7,511.7 888.8,510.5 886.2,509 883.9,507.3 882.1,505.5 880.7,503.5 879.7,501.5 879.3,499.5 879.3,497.5 879.9,495.5 880.9,493.7 882.4,492.1 884.3,490.6 886.6,489.4 889.3,488.4 892.2,487.6 895.4,487.1 898.7,486.8 902,486.9 905.4,487.2 908.7,487.7 911.8,488.5 914.7,489.5 917.3,490.8 919.6,492.3 M945.6,484.4 946.3,485.5 946.3,486.6 945.7,487.5 944.5,488.2 942.8,488.7 940.7,488.9 938.4,488.9 936,488.7 933.7,488.1 931.6,487.4 929.9,486.5 928.7,485.4 928.1,484.2 928.1,483.2 928.7,482.2 929.9,481.5 931.6,481.1 933.7,480.9 936,480.9 938.4,481.2 940.7,481.7 M958.5,475.2 959.8,476.5 960.4,478 960.4,479.7 959.7,481.3 958.4,482.9 956.6,484.1 954.3,484.8 951.8,485.2 949.3,485 946.8,484.5 M941.4,481.7 940.8,480.5 940.8,479.3 941.5,478.2 942.8,477 944.6,475.9 946.8,474.9 949.3,474.2 951.9,473.8 954.4,473.8 956.6,474.3 958.5,475.2 M976.3,467.7 977.6,469.5 978.4,471.4 978.9,473.2 978.9,474.8 978.4,476 977.5,476.9 976.3,477.3 974.7,477.2 973,476.6 971.1,475.7 969.3,474.3 967.5,472.7 966,470.9 964.7,469.1 963.9,467.3 963.4,465.6 963.4,464.2 963.9,463 964.8,462.3 966,461.9 967.6,461.9 969.3,462.4 971.2,463.3 973,464.5 974.8,466 976.3,467.7 M1020.3,478.4 1021.1,479.4 1021.5,480.5 1021.5,481.5 1021.1,482.5 1020.4,483.4 1019.3,484 1018,484.4 1016.5,484.5 1015,484.4 1013.5,484 1012.2,483.3 1011.1,482.5 1010.3,481.5 1009.9,480.5 1009.8,479.4 1010.2,478.5 1011,477.6 1012,477 1013.4,476.6 1014.8,476.4 1016.4,476.6 1017.8,476.9 1019.2,477.6 1020.3,478.4 M996.7,485 998.4,487.1 999.3,489.3 999.4,491.7 998.5,493.9 996.9,495.8 994.6,497.4 991.7,498.5 988.6,499.1 985.2,499 982,498.4 979.2,497.2 976.8,495.6 975.1,493.6 974.2,491.5 974.2,489.2 975,487 976.6,484.9 978.9,483.2 981.8,482 985,481.4 988.3,481.4 991.5,482.1 994.4,483.3 996.7,485 M1023.4,510 1024.3,512.1 1024.7,514.2 1024.7,516.3 1024.2,518.3 1023.3,520.2 1021.8,522.1 1020,523.7 1017.8,525.2 1015.3,526.4 1012.4,527.3 1009.4,527.9 1006.1,528.1 1002.8,527.9 999.4,527.3 996.1,526.5 992.8,525.5 989.7,524.2 986.8,522.8 984.1,521.3 981.8,519.7 979.8,518 978.3,516.3 977.2,514.5 976.5,512.8 976.3,511.1 976.6,509.6 977.3,508 978.5,506.6 980.1,505.1 982.1,503.6 984.5,502.2 987.1,500.8 990.1,499.7 993.2,498.8 996.5,498.3 999.9,498.2 1003.2,498.4 1006.6,499 1009.8,499.9 1012.8,501.1 1015.6,502.5 1018.1,504.2 1020.3,506 1022,508 1023.4,510 M964.4,511.5 966.1,513.4 967,515.5 967.1,517.5 966.2,519.6 964.5,521.6 962.1,523.2 959.1,524.5 955.8,525.2 952.4,525.2 949,524.5 946.1,523.3 943.6,521.5 941.9,519.4 941,517.2 941,514.8 941.9,512.5 943.6,510.5 946,508.9 948.9,507.8 952.2,507.3 955.7,507.5 959,508.4 962,509.7 964.4,511.5 M1037.8,517.1 1038.4,517.8 1038.7,518.6 1038.7,519.3 1038.4,520 1037.8,520.6 1036.9,521.1 1035.9,521.4 1034.7,521.6 1033.4,521.5 1032.2,521.3 1031.2,520.9 1030.3,520.3 1029.7,519.6 1029.3,518.8 1029.3,518.1 1029.6,517.3 1030.2,516.7 1031.1,516.2 1032.2,515.9 1033.4,515.8 1034.6,515.8 1035.8,516.1 1036.9,516.6 1037.8,517.1 M1039,529.6 1040.8,531.3 1041.9,533.2 1042.2,535.2 1041.6,537.1 1040.3,538.8 1038.2,540.4 1035.6,541.5 1032.4,542.3 1029,542.5 1025.5,542.2 1022,541.4 1018.8,540.3 1016.1,539 1013.9,537.4 1012.5,535.7 1011.8,534.1 1011.9,532.4 1012.9,530.7 1014.6,529.2 1017,527.8 1019.9,526.8 1023.2,526.1 1026.6,526 1030.2,526.3 1033.5,527 1036.5,528.2 1039,529.6 M940.4,532.4 941,533.2 941.4,534.1 941.4,534.9 941,535.7 940.4,536.4 939.4,536.9 938.3,537.3 937,537.4 935.7,537.2 934.5,536.9 933.3,536.4 932.4,535.7 931.7,534.9 931.4,534.1 931.4,533.2 931.7,532.4 932.4,531.7 933.3,531.2 934.5,530.9 935.7,530.8 937,530.9 938.3,531.2 939.4,531.7 940.4,532.4 M991.3,543.6 992.6,545 993.3,546.6 993.3,548.4 992.6,550.2 991.3,552 989.5,553.5 987.3,554.7 984.8,555.4 982.3,555.6 979.8,555.3 977.6,554.5 975.8,553.3 974.5,551.9 973.9,550.2 973.9,548.4 974.5,546.7 975.8,545 977.6,543.6 979.8,542.5 982.3,541.8 984.8,541.6 987.3,541.9 989.5,542.5 991.3,543.6 M1010.6,545.5 1011.3,546.1 1011.6,546.8 1011.7,547.4 1011.3,548.1 1010.6,548.7 1009.7,549.2 1008.6,549.6 1007.3,549.9 1006,550 1004.7,549.9 1003.5,549.6 1002.6,549.1 1001.9,548.4 1001.6,547.6 1001.6,546.8 1001.9,546 1002.6,545.3 1003.5,544.7 1004.7,544.4 1006,544.3 1007.3,544.3 1008.6,544.6 1009.7,545 1010.6,545.5 M965.5,555.6 966.1,556.4 966.5,557.2 966.5,558.1 966.1,558.9 965.5,559.7 964.5,560.2 963.3,560.6 962,560.7 960.6,560.6 959.3,560.3 958.2,559.8 957.2,559.1 956.5,558.3 956.2,557.4 956.2,556.5 956.5,555.7 957.2,555 958.2,554.5 959.4,554.1 960.7,554 962,554.1 963.3,554.4 964.5,554.9 965.5,555.6" fill="none" stroke="#111" stroke-width="1.1"/><path d="M859.1,495.6 862.3,494.4 865.4,493.3 868.6,492.1 871.8,490.9 874.9,489.7 878.1,488.6 881.3,487.4 884.4,486.2 887.6,485 890.8,483.8 893.9,482.6 897.1,481.4 900.3,480.3 903.4,479.1 906.6,478 909.8,477 912.9,476.2 916.1,475.5 919.3,474.9 922.5,474.4 925.6,473.9 928.8,473.2 932,472.2 935.1,470.8 938.3,469.1 941.5,467.1 944.6,465 947.8,463 951,461.1 954.1,459.3 957.3,457.7 960.5,456.2 963.6,454.8 966.8,453.5 970,452.1 973.1,450.8 976.3,449.4 979.5,448.1 982.6,446.7 985.8,445.4 988.3,446.9 990.9,448.3 993.4,449.9 995.9,451.4 998.5,453 1001,454.7 1003.5,456.4 1006.1,458.2 1008.6,460.1 1011.1,462.1 1013.7,464.1 1016.2,466.3 1018.7,468.5 1021.3,470.8 1023.8,473.2 1026.3,475.6 1028.9,478.1 1031.4,480.6 1033.9,483.2 1036.4,485.8 1039,488.3 1041.5,490.9 1044,493.4 1046.6,495.9 1049.1,498.3 1051.6,500.7 1054.2,503 1056.7,505.2 1059.2,507.4 1061.8,509.4 1064.3,511.4 1066.8,513.3 1069.4,515.1 1071.9,516.8 1074.4,518.5 1077,520.1 1079.5,521.6 1082,523.2 1084.6,524.6 1087.1,526.1 1083.9,527.6 1080.6,529.1 1077.4,530.6 1074.1,532.1 1070.9,533.5 1067.6,535 1064.4,536.5 1061.1,538 1057.9,539.5 1054.6,541 1051.4,542.4 1048.2,543.8 1044.9,545.2 1041.7,546.4 1038.4,547.5 1035.2,548.3 1031.9,549 1028.7,549.6 1025.4,550.1 1022.2,550.7 1019,551.6 1015.7,552.8 1012.5,554.5 1009.2,556.6 1006,559 1002.7,561.5 999.5,563.9 996.2,566.2 993,568.3 989.7,570.2 986.5,572 983.3,573.6 980,575.2 976.8,576.7 973.5,578.2 970.3,579.7 967,581.2 963.8,582.7 960.5,584.2 957.3,585.7 954.8,583.3 952.4,580.9 949.9,578.6 947.5,576.2 945,573.8 942.6,571.4 940.1,569.1 937.7,566.7 935.2,564.4 932.7,562 930.3,559.7 927.8,557.3 925.4,555 922.9,552.7 920.5,550.4 918,548.1 915.6,545.8 913.1,543.5 910.7,541.3 908.2,539 905.7,536.8 903.3,534.5 900.8,532.3 898.4,530.1 895.9,527.9 893.5,525.7 891,523.5 888.6,521.3 886.1,519.1 883.7,517 881.2,514.8 878.7,512.7 876.3,510.5 873.8,508.4 871.4,506.2 868.9,504.1 866.5,502 864,499.8 861.6,497.7Z" fill="none" stroke="#111" stroke-width="1.6"/><path d="M1018.4,436.1 1029.9,431.9 1040.2,439.2 1028.7,443.7ZM1028.7,443.7 1040.2,439.2 1050.5,446.7 1039,451.3ZM1039,451.3 1050.5,446.7 1060.8,454.3 1049.2,459.1ZM1049.2,459.1 1060.8,454.3 1071.1,462.2 1059.5,466.9ZM1059.5,466.9 1071.1,462.2 1081.4,470.3 1069.8,474.9ZM1069.8,474.9 1081.4,470.3 1091.7,478.5 1080.1,483ZM1080.1,483 1091.7,478.5 1102,486.8 1090.4,491.3ZM1090.4,491.3 1102,486.8 1112.3,495.1 1100.6,499.7ZM1100.6,499.7 1112.3,495.1 1122.6,503.3 1110.9,508.2ZM1029.9,431.9 1041.4,427.6 1051.7,434.7 1040.2,439.2ZM1040.2,439.2 1051.7,434.7 1062,442 1050.5,446.7ZM1081.4,470.3 1093,465.7 1103.3,473.9 1091.7,478.5ZM1091.7,478.5 1103.3,473.9 1113.6,482.2 1102,486.8ZM1102,486.8 1113.6,482.2 1124,490.3 1112.3,495.1ZM1112.3,495.1 1124,490.3 1134.3,498.3 1122.6,503.3ZM1041.4,427.6 1052.8,423.3 1063.2,430 1051.7,434.7ZM1052.8,423.3 1064.3,419.3 1074.7,425.4 1063.2,430ZM1157.6,484.4 1169.3,479.7 1179.7,485.9 1168,491.1ZM1160.2,464.2 1171.8,459.7 1182.2,467.2 1170.6,471.3ZM1171.8,459.7 1183.4,454.8 1193.9,462.3 1182.2,467.2ZM1182.2,467.2 1193.9,462.3 1204.3,468.9 1192.7,473.9ZM1192.7,473.9 1204.3,468.9 1214.8,474.9 1203.1,480ZM1110.2,400.4 1121.7,395.5 1132.2,401.1 1120.7,406.3ZM1183.4,454.8 1195.1,450.1 1205.5,457.5 1193.9,462.3ZM1193.9,462.3 1205.5,457.5 1216,463.9 1204.3,468.9ZM1204.3,468.9 1216,463.9 1226.5,469.7 1214.8,474.9ZM1121.7,395.5 1133.2,390.6 1143.7,396.1 1132.2,401.1ZM1195.1,450.1 1206.7,445.4 1217.2,452.8 1205.5,457.5ZM1205.5,457.5 1217.2,452.8 1227.7,459 1216,463.9ZM1216,463.9 1227.7,459 1238.2,464.5 1226.5,469.7Z" fill="#9a9ca1" stroke="#9a9ca1" stroke-width="0.8"/><path d="M1110.9,508.2 1122.6,503.3 1132.9,511.5 1121.2,516.7ZM1050.5,446.7 1062,442 1072.3,449.6 1060.8,454.3ZM1060.8,454.3 1072.3,449.6 1082.7,457.5 1071.1,462.2ZM1071.1,462.2 1082.7,457.5 1093,465.7 1081.4,470.3ZM1122.6,503.3 1134.3,498.3 1144.6,506.1 1132.9,511.5ZM1051.7,434.7 1063.2,430 1073.5,437 1062,442ZM1063.2,430 1074.7,425.4 1085.1,431.9 1073.5,437ZM1149.8,456.4 1161.4,451.5 1171.8,459.7 1160.2,464.2ZM1120.7,406.3 1132.2,401.1 1142.7,407.5 1131.2,412.7ZM1173,446.4 1184.6,441.6 1195.1,450.1 1183.4,454.8ZM1132.2,401.1 1143.7,396.1 1154.2,402.3 1142.7,407.5ZM1184.6,441.6 1196.2,436.8 1206.7,445.4 1195.1,450.1Z" fill="#a0a2a7" stroke="#a0a2a7" stroke-width="0.8"/><path d="M1062,442 1073.5,437 1083.9,444.4 1072.3,449.6ZM1161.4,451.5 1173,446.4 1183.4,454.8 1171.8,459.7Z" fill="#a6a8ad" stroke="#a6a8ad" stroke-width="0.8"/><path d="M1072.3,449.6 1083.9,444.4 1094.2,452.2 1082.7,457.5ZM1082.7,457.5 1094.2,452.2 1104.6,460.4 1093,465.7ZM1093,465.7 1104.6,460.4 1114.9,468.6 1103.3,473.9ZM1103.3,473.9 1114.9,468.6 1125.3,476.8 1113.6,482.2ZM1113.6,482.2 1125.3,476.8 1135.6,484.6 1124,490.3ZM1073.5,437 1085.1,431.9 1095.4,438.9 1083.9,444.4ZM1131.2,412.7 1142.7,407.5 1153.2,414.9 1141.6,420.1ZM1162.5,437.4 1174.1,432.4 1184.6,441.6 1173,446.4ZM1142.7,407.5 1154.2,402.3 1164.7,409.7 1153.2,414.9ZM1174.1,432.4 1185.7,427.6 1196.2,436.8 1184.6,441.6Z" fill="#acaeb3" stroke="#acaeb3" stroke-width="0.8"/><path d="M1124,490.3 1135.6,484.6 1146,492.2 1134.3,498.3ZM1139.3,448.2 1150.9,442.8 1161.4,451.5 1149.8,456.4ZM1141.6,420.1 1153.2,414.9 1163.6,423.3 1152.1,428.4ZM1152.1,428.4 1163.6,423.3 1174.1,432.4 1162.5,437.4ZM1153.2,414.9 1164.7,409.7 1175.2,418.3 1163.6,423.3ZM1163.6,423.3 1175.2,418.3 1185.7,427.6 1174.1,432.4Z" fill="#b2b4b9" stroke="#b2b4b9" stroke-width="0.8"/><path d="M1134.3,498.3 1146,492.2 1156.3,499.6 1144.6,506.1ZM1083.9,444.4 1095.4,438.9 1105.8,446.4 1094.2,452.2ZM1098.8,406.5 1110.2,400.4 1120.7,406.3 1109.2,412.4ZM1150.9,442.8 1162.5,437.4 1173,446.4 1161.4,451.5Z" fill="#b8babf" stroke="#b8babf" stroke-width="0.8"/><path d="M1094.2,452.2 1105.8,446.4 1116.2,454.3 1104.6,460.4ZM1128.9,440.1 1140.5,434.2 1150.9,442.8 1139.3,448.2ZM1130.1,426.1 1141.6,420.1 1152.1,428.4 1140.5,434.2Z" fill="#c4c6cb" stroke="#c4c6cb" stroke-width="0.8"/><path d="M1104.6,460.4 1116.2,454.3 1126.5,462.3 1114.9,468.6ZM1118.5,432.4 1130.1,426.1 1140.5,434.2 1128.9,440.1Z" fill="#caccd1" stroke="#caccd1" stroke-width="0.8"/><path d="M1114.9,468.6 1126.5,462.3 1136.9,470 1125.3,476.8ZM1108.1,425.5 1119.6,418.8 1130.1,426.1 1118.5,432.4Z" fill="#d0d2d7" stroke="#d0d2d7" stroke-width="0.8"/><path d="M1125.3,476.8 1136.9,470 1147.3,477.4 1135.6,484.6ZM1087.3,413.6 1098.8,406.5 1109.2,412.4 1097.7,419.4ZM1097.7,419.4 1109.2,412.4 1119.6,418.8 1108.1,425.5Z" fill="#d6d8dd" stroke="#d6d8dd" stroke-width="0.8"/><path d="M1135.6,484.6 1147.3,477.4 1157.6,484.4 1146,492.2Z" fill="#e2e4e9" stroke="#e2e4e9" stroke-width="0.8"/><path d="M1146,492.2 1157.6,484.4 1168,491.1 1156.3,499.6Z" fill="#eef0f5" stroke="#eef0f5" stroke-width="0.8"/><path d="M1064.3,419.3 1075.8,416.9 1086.2,422.6 1074.7,425.4ZM1127.8,450.6 1139.3,448.2 1149.8,456.4 1138.1,458.5ZM1138.1,458.5 1149.8,456.4 1160.2,464.2 1148.5,466.1Z" fill="#888a8f" stroke="#888a8f" stroke-width="0.8"/><path d="M1074.7,425.4 1086.2,422.6 1096.6,428.7 1085.1,431.9ZM1085.1,431.9 1096.6,428.7 1107,435.5 1095.4,438.9ZM1075.8,416.9 1087.3,413.6 1097.7,419.4 1086.2,422.6ZM1086.2,422.6 1097.7,419.4 1108.1,425.5 1096.6,428.7ZM1096.6,428.7 1108.1,425.5 1118.5,432.4 1107,435.5ZM1107,435.5 1118.5,432.4 1128.9,440.1 1117.4,442.8ZM1117.4,442.8 1128.9,440.1 1139.3,448.2 1127.8,450.6ZM1181,477.8 1192.7,473.9 1203.1,480 1191.4,483.9Z" fill="#8e9095" stroke="#8e9095" stroke-width="0.8"/><path d="M1095.4,438.9 1107,435.5 1117.4,442.8 1105.8,446.4ZM1105.8,446.4 1117.4,442.8 1127.8,450.6 1116.2,454.3ZM1116.2,454.3 1127.8,450.6 1138.1,458.5 1126.5,462.3ZM1126.5,462.3 1138.1,458.5 1148.5,466.1 1136.9,470ZM1136.9,470 1148.5,466.1 1158.9,473.1 1147.3,477.4ZM1147.3,477.4 1158.9,473.1 1169.3,479.7 1157.6,484.4ZM1170.6,471.3 1182.2,467.2 1192.7,473.9 1181,477.8Z" fill="#94969b" stroke="#94969b" stroke-width="0.8"/><path d="M1148.5,466.1 1160.2,464.2 1170.6,471.3 1158.9,473.1ZM1158.9,473.1 1170.6,471.3 1181,477.8 1169.3,479.7Z" fill="#828489" stroke="#828489" stroke-width="0.8"/><path d="M1169.3,479.7 1181,477.8 1191.4,483.9 1179.7,485.9Z" fill="#7c7e83" stroke="#7c7e83" stroke-width="0.8"/><path d="M1109.2,412.4 1120.7,406.3 1131.2,412.7 1119.6,418.8ZM1119.6,418.8 1131.2,412.7 1141.6,420.1 1130.1,426.1ZM1140.5,434.2 1152.1,428.4 1162.5,437.4 1150.9,442.8Z" fill="#bec0c5" stroke="#bec0c5" stroke-width="0.8"/><path d="M1018.4,438.6 1028.7,446.2 1039,453.8 1049.2,461.6 1059.5,469.4 1069.8,477.4 1080.1,485.5 1090.4,493.8 1100.6,502.2 1110.9,510.7 1121.2,519.2 M1029.9,434.4 1040.2,441.7 1050.5,449.2 1060.8,456.8 1071.1,464.7 1081.4,472.8 1091.7,481 1102,489.3 1112.3,497.6 1122.6,505.8 1132.9,514 M1041.4,430.1 1051.7,437.2 1062,444.5 1072.3,452.1 1082.7,460 1093,468.2 1103.3,476.4 1113.6,484.7 1124,492.8 1134.3,500.8 1144.6,508.6 M1052.8,425.8 1063.2,432.5 1073.5,439.5 1083.9,446.9 1094.2,454.7 1104.6,462.9 1114.9,471.1 1125.3,479.3 1135.6,487.1 1146,494.7 1156.3,502.1 M1064.3,421.8 1074.7,427.9 1085.1,434.4 1095.4,441.4 1105.8,448.9 1116.2,456.8 1126.5,464.8 1136.9,472.5 1147.3,479.9 1157.6,486.9 1168,493.6 M1075.8,419.4 1086.2,425.1 1096.6,431.2 1107,438 1117.4,445.3 1127.8,453.1 1138.1,461 1148.5,468.6 1158.9,475.6 1169.3,482.2 1179.7,488.4 M1087.3,416.1 1097.7,421.9 1108.1,428 1118.5,434.9 1128.9,442.6 1139.3,450.7 1149.8,458.9 1160.2,466.7 1170.6,473.8 1181,480.3 1191.4,486.4 M1098.8,409 1109.2,414.9 1119.6,421.3 1130.1,428.6 1140.5,436.7 1150.9,445.3 1161.4,454 1171.8,462.2 1182.2,469.7 1192.7,476.4 1203.1,482.5 M1110.2,402.9 1120.7,408.8 1131.2,415.2 1141.6,422.6 1152.1,430.9 1162.5,439.9 1173,448.9 1183.4,457.3 1193.9,464.8 1204.3,471.4 1214.8,477.4 M1121.7,398 1132.2,403.6 1142.7,410 1153.2,417.4 1163.6,425.8 1174.1,434.9 1184.6,444.1 1195.1,452.6 1205.5,460 1216,466.4 1226.5,472.2 M1133.2,393.1 1143.7,398.6 1154.2,404.8 1164.7,412.2 1175.2,420.8 1185.7,430.1 1196.2,439.3 1206.7,447.9 1217.2,455.3 1227.7,461.5 1238.2,467 M1018.4,438.6 1029.9,434.4 1041.4,430.1 1052.8,425.8 1064.3,421.8 1075.8,419.4 1087.3,416.1 1098.8,409 1110.2,402.9 1121.7,398 1133.2,393.1 M1028.7,446.2 1040.2,441.7 1051.7,437.2 1063.2,432.5 1074.7,427.9 1086.2,425.1 1097.7,421.9 1109.2,414.9 1120.7,408.8 1132.2,403.6 1143.7,398.6 M1039,453.8 1050.5,449.2 1062,444.5 1073.5,439.5 1085.1,434.4 1096.6,431.2 1108.1,428 1119.6,421.3 1131.2,415.2 1142.7,410 1154.2,404.8 M1049.2,461.6 1060.8,456.8 1072.3,452.1 1083.9,446.9 1095.4,441.4 1107,438 1118.5,434.9 1130.1,428.6 1141.6,422.6 1153.2,417.4 1164.7,412.2 M1059.5,469.4 1071.1,464.7 1082.7,460 1094.2,454.7 1105.8,448.9 1117.4,445.3 1128.9,442.6 1140.5,436.7 1152.1,430.9 1163.6,425.8 1175.2,420.8 M1069.8,477.4 1081.4,472.8 1093,468.2 1104.6,462.9 1116.2,456.8 1127.8,453.1 1139.3,450.7 1150.9,445.3 1162.5,439.9 1174.1,434.9 1185.7,430.1 M1080.1,485.5 1091.7,481 1103.3,476.4 1114.9,471.1 1126.5,464.8 1138.1,461 1149.8,458.9 1161.4,454 1173,448.9 1184.6,444.1 1196.2,439.3 M1090.4,493.8 1102,489.3 1113.6,484.7 1125.3,479.3 1136.9,472.5 1148.5,468.6 1160.2,466.7 1171.8,462.2 1183.4,457.3 1195.1,452.6 1206.7,447.9 M1100.6,502.2 1112.3,497.6 1124,492.8 1135.6,487.1 1147.3,479.9 1158.9,475.6 1170.6,473.8 1182.2,469.7 1193.9,464.8 1205.5,460 1217.2,455.3 M1110.9,510.7 1122.6,505.8 1134.3,500.8 1146,494.7 1157.6,486.9 1169.3,482.2 1181,480.3 1192.7,476.4 1204.3,471.4 1216,466.4 1227.7,461.5 M1121.2,519.2 1132.9,514 1144.6,508.6 1156.3,502.1 1168,493.6 1179.7,488.4 1191.4,486.4 1203.1,482.5 1214.8,477.4 1226.5,472.2 1238.2,467" fill="none" stroke="#1a1a1a" stroke-width="1.1"/><path d="M1018.4,436.1 1028.7,443.7 1039,451.3 1049.2,459.1 1059.5,466.9 1069.8,474.9 1080.1,483 1090.4,491.3 1100.6,499.7 1110.9,508.2 1121.2,516.7 M1029.9,431.9 1040.2,439.2 1050.5,446.7 1060.8,454.3 1071.1,462.2 1081.4,470.3 1091.7,478.5 1102,486.8 1112.3,495.1 1122.6,503.3 1132.9,511.5 M1041.4,427.6 1051.7,434.7 1062,442 1072.3,449.6 1082.7,457.5 1093,465.7 1103.3,473.9 1113.6,482.2 1124,490.3 1134.3,498.3 1144.6,506.1 M1052.8,423.3 1063.2,430 1073.5,437 1083.9,444.4 1094.2,452.2 1104.6,460.4 1114.9,468.6 1125.3,476.8 1135.6,484.6 1146,492.2 1156.3,499.6 M1064.3,419.3 1074.7,425.4 1085.1,431.9 1095.4,438.9 1105.8,446.4 1116.2,454.3 1126.5,462.3 1136.9,470 1147.3,477.4 1157.6,484.4 1168,491.1 M1075.8,416.9 1086.2,422.6 1096.6,428.7 1107,435.5 1117.4,442.8 1127.8,450.6 1138.1,458.5 1148.5,466.1 1158.9,473.1 1169.3,479.7 1179.7,485.9 M1087.3,413.6 1097.7,419.4 1108.1,425.5 1118.5,432.4 1128.9,440.1 1139.3,448.2 1149.8,456.4 1160.2,464.2 1170.6,471.3 1181,477.8 1191.4,483.9 M1098.8,406.5 1109.2,412.4 1119.6,418.8 1130.1,426.1 1140.5,434.2 1150.9,442.8 1161.4,451.5 1171.8,459.7 1182.2,467.2 1192.7,473.9 1203.1,480 M1110.2,400.4 1120.7,406.3 1131.2,412.7 1141.6,420.1 1152.1,428.4 1162.5,437.4 1173,446.4 1183.4,454.8 1193.9,462.3 1204.3,468.9 1214.8,474.9 M1121.7,395.5 1132.2,401.1 1142.7,407.5 1153.2,414.9 1163.6,423.3 1174.1,432.4 1184.6,441.6 1195.1,450.1 1205.5,457.5 1216,463.9 1226.5,469.7 M1133.2,390.6 1143.7,396.1 1154.2,402.3 1164.7,409.7 1175.2,418.3 1185.7,427.6 1196.2,436.8 1206.7,445.4 1217.2,452.8 1227.7,459 1238.2,464.5 M1018.4,436.1 1029.9,431.9 1041.4,427.6 1052.8,423.3 1064.3,419.3 1075.8,416.9 1087.3,413.6 1098.8,406.5 1110.2,400.4 1121.7,395.5 1133.2,390.6 M1028.7,443.7 1040.2,439.2 1051.7,434.7 1063.2,430 1074.7,425.4 1086.2,422.6 1097.7,419.4 1109.2,412.4 1120.7,406.3 1132.2,401.1 1143.7,396.1 M1039,451.3 1050.5,446.7 1062,442 1073.5,437 1085.1,431.9 1096.6,428.7 1108.1,425.5 1119.6,418.8 1131.2,412.7 1142.7,407.5 1154.2,402.3 M1049.2,459.1 1060.8,454.3 1072.3,449.6 1083.9,444.4 1095.4,438.9 1107,435.5 1118.5,432.4 1130.1,426.1 1141.6,420.1 1153.2,414.9 1164.7,409.7 M1059.5,466.9 1071.1,462.2 1082.7,457.5 1094.2,452.2 1105.8,446.4 1117.4,442.8 1128.9,440.1 1140.5,434.2 1152.1,428.4 1163.6,423.3 1175.2,418.3 M1069.8,474.9 1081.4,470.3 1093,465.7 1104.6,460.4 1116.2,454.3 1127.8,450.6 1139.3,448.2 1150.9,442.8 1162.5,437.4 1174.1,432.4 1185.7,427.6 M1080.1,483 1091.7,478.5 1103.3,473.9 1114.9,468.6 1126.5,462.3 1138.1,458.5 1149.8,456.4 1161.4,451.5 1173,446.4 1184.6,441.6 1196.2,436.8 M1090.4,491.3 1102,486.8 1113.6,482.2 1125.3,476.8 1136.9,470 1148.5,466.1 1160.2,464.2 1171.8,459.7 1183.4,454.8 1195.1,450.1 1206.7,445.4 M1100.6,499.7 1112.3,495.1 1124,490.3 1135.6,484.6 1147.3,477.4 1158.9,473.1 1170.6,471.3 1182.2,467.2 1193.9,462.3 1205.5,457.5 1217.2,452.8 M1110.9,508.2 1122.6,503.3 1134.3,498.3 1146,492.2 1157.6,484.4 1169.3,479.7 1181,477.8 1192.7,473.9 1204.3,468.9 1216,463.9 1227.7,459 M1121.2,516.7 1132.9,511.5 1144.6,506.1 1156.3,499.6 1168,491.1 1179.7,485.9 1191.4,483.9 1203.1,480 1214.8,474.9 1226.5,469.7 1238.2,464.5 M1028.7,443.7 1028.8,442.2 1029,440.7 1029.1,439.2 1029.3,437.7 1029.4,436.2 1029.6,434.8 1029.7,433.3 1029.9,431.9 M1039,451.3 1039.1,449.8 1039.3,448.3 1039.4,446.7 1039.6,445.2 1039.7,443.7 1039.9,442.2 1040,440.7 1040.2,439.2 1040.3,437.7 1040.5,436.3 1040.6,434.8 1040.8,433.3 1040.9,431.9 1041.1,430.4 1041.2,429 1041.4,427.6 M1049.2,459.1 1049.4,457.5 1049.6,455.9 1049.7,454.4 1049.9,452.8 1050,451.3 1050.2,449.8 1050.3,448.2 1050.5,446.7 1050.6,445.2 1050.8,443.6 1050.9,442.1 1051.1,440.6 1051.2,439.1 1051.4,437.6 1051.5,436.2 1051.7,434.7 1051.8,433.2 1052,431.8 1052.1,430.3 1052.3,428.9 1052.4,427.5 1052.6,426.1 1052.7,424.7 1052.8,423.3 M1059.5,466.9 1059.7,465.3 1059.8,463.8 1060,462.2 1060.2,460.6 1060.3,459 1060.5,457.5 1060.6,455.9 1060.8,454.3 1060.9,452.8 1061.1,451.2 1061.2,449.7 1061.4,448.1 1061.6,446.6 1061.7,445 1061.9,443.5 1062,442 1062.2,440.5 1062.3,438.9 1062.5,437.4 1062.6,435.9 1062.7,434.4 1062.9,433 1063,431.5 1063.2,430 1063.3,428.6 1063.5,427.2 1063.6,425.8 1063.8,424.4 1063.9,423 1064,421.7 1064.2,420.5 1064.3,419.3 M1069.8,474.9 1070,473.3 1070.1,471.7 1070.3,470.2 1070.4,468.6 1070.6,467 1070.8,465.4 1070.9,463.8 1071.1,462.2 1071.2,460.6 1071.4,459.1 1071.6,457.5 1071.7,455.9 1071.9,454.3 1072,452.7 1072.2,451.1 1072.3,449.6 1072.5,448 1072.6,446.4 1072.8,444.8 1072.9,443.3 1073.1,441.7 1073.2,440.1 1073.4,438.6 1073.5,437 1073.7,435.5 1073.8,433.9 1074,432.4 1074.1,431 1074.3,429.5 1074.4,428.1 1074.5,426.7 1074.7,425.4 1074.8,424.2 1075,423 1075.1,421.8 1075.2,420.8 1075.4,419.7 1075.5,418.8 1075.7,417.8 1075.8,416.9 M1080.1,483 1080.2,481.4 1080.4,479.9 1080.6,478.3 1080.7,476.7 1080.9,475.1 1081.1,473.5 1081.2,471.9 1081.4,470.3 1081.6,468.7 1081.7,467.1 1081.9,465.5 1082,463.9 1082.2,462.3 1082.3,460.7 1082.5,459.1 1082.7,457.5 1082.8,455.9 1083,454.2 1083.1,452.6 1083.3,451 1083.4,449.3 1083.6,447.7 1083.7,446.1 1083.9,444.4 1084,442.8 1084.2,441.1 1084.3,439.5 1084.5,437.9 1084.6,436.3 1084.8,434.8 1084.9,433.3 1085.1,431.9 1085.2,430.5 1085.3,429.2 1085.5,428 1085.6,426.8 1085.8,425.7 1085.9,424.6 1086.1,423.6 1086.2,422.6 1086.3,421.7 1086.5,420.7 1086.6,419.7 1086.7,418.6 1086.9,417.5 1087,416.3 1087.1,415 1087.3,413.6 M1090.4,491.3 1090.5,489.7 1090.7,488.1 1090.9,486.5 1091,484.9 1091.2,483.3 1091.4,481.7 1091.5,480.1 1091.7,478.5 1091.9,476.9 1092,475.3 1092.2,473.7 1092.3,472.1 1092.5,470.5 1092.7,468.9 1092.8,467.3 1093,465.7 1093.1,464 1093.3,462.4 1093.5,460.7 1093.6,459 1093.8,457.4 1093.9,455.7 1094.1,454 1094.2,452.2 1094.4,450.5 1094.5,448.8 1094.7,447.1 1094.8,445.4 1095,443.7 1095.1,442 1095.3,440.4 1095.4,438.9 1095.6,437.4 1095.7,435.9 1095.9,434.6 1096,433.3 1096.2,432.1 1096.3,430.9 1096.4,429.8 1096.6,428.7 1096.7,427.7 1096.9,426.6 1097,425.6 1097.1,424.5 1097.3,423.3 1097.4,422.1 1097.6,420.7 1097.7,419.4 1097.8,417.9 1098,416.4 1098.1,414.8 1098.2,413.1 1098.4,411.5 1098.5,409.8 1098.6,408.2 1098.8,406.5 M1100.6,499.7 1100.8,498.1 1101,496.4 1101.2,494.8 1101.3,493.2 1101.5,491.6 1101.7,490 1101.8,488.4 1102,486.8 1102.2,485.2 1102.3,483.6 1102.5,482 1102.7,480.4 1102.8,478.8 1103,477.2 1103.1,475.6 1103.3,473.9 1103.5,472.3 1103.6,470.7 1103.8,469 1103.9,467.3 1104.1,465.6 1104.3,463.9 1104.4,462.1 1104.6,460.4 1104.7,458.6 1104.9,456.8 1105,455 1105.2,453.3 1105.3,451.5 1105.5,449.7 1105.6,448 1105.8,446.4 1105.9,444.8 1106.1,443.3 1106.2,441.8 1106.4,440.4 1106.5,439.1 1106.7,437.8 1106.8,436.6 1107,435.5 1107.1,434.3 1107.3,433.2 1107.4,432 1107.5,430.9 1107.7,429.6 1107.8,428.3 1108,427 1108.1,425.5 1108.2,424 1108.4,422.4 1108.5,420.8 1108.7,419.1 1108.8,417.5 1108.9,415.8 1109.1,414.1 1109.2,412.4 1109.3,410.8 1109.5,409.2 1109.6,407.6 1109.7,406.1 1109.9,404.7 1110,403.2 1110.1,401.8 1110.2,400.4 M1110.9,508.2 1111.1,506.5 1111.3,504.8 1111.4,503.2 1111.6,501.6 1111.8,499.9 1112,498.3 1112.1,496.7 1112.3,495.1 1112.5,493.5 1112.6,491.8 1112.8,490.2 1113,488.6 1113.1,487 1113.3,485.4 1113.5,483.8 1113.6,482.2 1113.8,480.6 1114,478.9 1114.1,477.3 1114.3,475.6 1114.4,473.9 1114.6,472.2 1114.8,470.4 1114.9,468.6 1115.1,466.8 1115.2,465 1115.4,463.2 1115.5,461.4 1115.7,459.6 1115.9,457.8 1116,456 1116.2,454.3 1116.3,452.6 1116.5,451 1116.6,449.5 1116.8,448 1116.9,446.6 1117.1,445.3 1117.2,444.1 1117.4,442.8 1117.5,441.6 1117.7,440.4 1117.8,439.2 1117.9,438 1118.1,436.7 1118.2,435.3 1118.4,433.9 1118.5,432.4 1118.7,430.8 1118.8,429.2 1118.9,427.5 1119.1,425.8 1119.2,424.1 1119.4,422.3 1119.5,420.6 1119.6,418.8 1119.8,417.1 1119.9,415.5 1120,413.8 1120.2,412.3 1120.3,410.7 1120.4,409.2 1120.6,407.7 1120.7,406.3 1120.8,404.9 1121,403.5 1121.1,402.1 1121.2,400.7 1121.3,399.4 1121.5,398.1 1121.6,396.8 1121.7,395.5 M1121.2,516.7 1121.4,515 1121.6,513.3 1121.7,511.6 1121.9,509.9 1122.1,508.2 1122.3,506.6 1122.4,504.9 1122.6,503.3 1122.8,501.7 1122.9,500 1123.1,498.4 1123.3,496.8 1123.4,495.2 1123.6,493.6 1123.8,491.9 1124,490.3 1124.1,488.7 1124.3,487 1124.4,485.4 1124.6,483.7 1124.8,482 1124.9,480.3 1125.1,478.5 1125.3,476.8 1125.4,475 1125.6,473.1 1125.7,471.3 1125.9,469.4 1126.1,467.6 1126.2,465.8 1126.4,464 1126.5,462.3 1126.7,460.6 1126.8,458.9 1127,457.4 1127.1,455.9 1127.3,454.5 1127.4,453.2 1127.6,451.9 1127.8,450.6 1127.9,449.4 1128,448.2 1128.2,447 1128.3,445.7 1128.5,444.4 1128.6,443 1128.8,441.6 1128.9,440.1 1129.1,438.5 1129.2,436.8 1129.4,435.1 1129.5,433.3 1129.6,431.5 1129.8,429.7 1129.9,427.9 1130.1,426.1 1130.2,424.3 1130.3,422.5 1130.5,420.8 1130.6,419.1 1130.7,417.5 1130.9,415.9 1131,414.3 1131.2,412.7 1131.3,411.2 1131.4,409.7 1131.5,408.2 1131.7,406.8 1131.8,405.3 1131.9,403.9 1132.1,402.5 1132.2,401.1 1132.3,399.8 1132.5,398.4 1132.6,397.1 1132.7,395.8 1132.8,394.5 1133,393.2 1133.1,391.9 1133.2,390.6 M1132.9,511.5 1133.1,509.8 1133.2,508.1 1133.4,506.5 1133.6,504.8 1133.8,503.2 1133.9,501.6 1134.1,499.9 1134.3,498.3 1134.4,496.6 1134.6,495 1134.8,493.3 1134.9,491.6 1135.1,489.9 1135.3,488.2 1135.4,486.4 1135.6,484.6 1135.8,482.8 1135.9,481 1136.1,479.1 1136.3,477.3 1136.4,475.4 1136.6,473.6 1136.7,471.8 1136.9,470 1137.1,468.3 1137.2,466.7 1137.4,465.2 1137.5,463.7 1137.7,462.3 1137.8,461 1138,459.7 1138.1,458.5 1138.3,457.3 1138.4,456.1 1138.6,454.9 1138.7,453.7 1138.9,452.4 1139,451.1 1139.2,449.7 1139.3,448.2 1139.5,446.6 1139.6,445 1139.8,443.3 1139.9,441.5 1140.1,439.7 1140.2,437.9 1140.4,436 1140.5,434.2 1140.6,432.3 1140.8,430.5 1140.9,428.7 1141.1,427 1141.2,425.2 1141.3,423.5 1141.5,421.8 1141.6,420.1 1141.7,418.5 1141.9,416.8 1142,415.2 1142.1,413.6 1142.3,412.1 1142.4,410.5 1142.5,409 1142.7,407.5 1142.8,406 1142.9,404.5 1143.1,403.1 1143.2,401.6 1143.3,400.2 1143.4,398.8 1143.6,397.5 1143.7,396.1 M1144.6,506.1 1144.8,504.4 1144.9,502.7 1145.1,501 1145.3,499.3 1145.5,497.6 1145.6,495.8 1145.8,494 1146,492.2 1146.1,490.4 1146.3,488.5 1146.5,486.6 1146.6,484.7 1146.8,482.8 1146.9,481 1147.1,479.2 1147.3,477.4 1147.4,475.7 1147.6,474.1 1147.7,472.5 1147.9,471.1 1148.1,469.7 1148.2,468.5 1148.4,467.2 1148.5,466.1 1148.7,465 1148.8,463.8 1149,462.7 1149.1,461.6 1149.3,460.4 1149.5,459.1 1149.6,457.8 1149.8,456.4 1149.9,454.9 1150.1,453.3 1150.2,451.7 1150.3,450 1150.5,448.2 1150.6,446.5 1150.8,444.6 1150.9,442.8 1151.1,441 1151.2,439.2 1151.4,437.4 1151.5,435.5 1151.6,433.7 1151.8,432 1151.9,430.2 1152.1,428.4 1152.2,426.7 1152.3,425 1152.5,423.3 1152.6,421.6 1152.8,419.9 1152.9,418.2 1153,416.5 1153.2,414.9 1153.3,413.2 1153.4,411.6 1153.6,410 1153.7,408.5 1153.8,406.9 1153.9,405.4 1154.1,403.8 1154.2,402.3 M1156.3,499.6 1156.5,497.7 1156.6,495.8 1156.8,493.8 1157,491.9 1157.1,489.9 1157.3,488 1157.5,486.2 1157.6,484.4 1157.8,482.6 1158,481 1158.1,479.5 1158.3,478 1158.4,476.7 1158.6,475.4 1158.8,474.3 1158.9,473.1 1159.1,472.1 1159.2,471 1159.4,470 1159.5,468.9 1159.7,467.8 1159.9,466.7 1160,465.5 1160.2,464.2 1160.3,462.8 1160.5,461.4 1160.6,459.9 1160.8,458.3 1160.9,456.6 1161.1,455 1161.2,453.3 1161.4,451.5 1161.5,449.8 1161.7,448 1161.8,446.2 1161.9,444.5 1162.1,442.7 1162.2,440.9 1162.4,439.1 1162.5,437.4 1162.7,435.6 1162.8,433.9 1162.9,432.1 1163.1,430.3 1163.2,428.6 1163.4,426.8 1163.5,425.1 1163.6,423.3 1163.8,421.6 1163.9,419.9 1164,418.1 1164.2,416.4 1164.3,414.7 1164.4,413.1 1164.6,411.4 1164.7,409.7 M1168,491.1 1168.2,489.3 1168.3,487.6 1168.5,486 1168.7,484.5 1168.8,483.2 1169,481.9 1169.1,480.8 1169.3,479.7 1169.5,478.6 1169.6,477.7 1169.8,476.7 1169.9,475.7 1170.1,474.7 1170.3,473.6 1170.4,472.5 1170.6,471.3 1170.7,470.1 1170.9,468.8 1171,467.4 1171.2,466 1171.3,464.5 1171.5,462.9 1171.6,461.4 1171.8,459.7 1171.9,458.1 1172.1,456.5 1172.2,454.8 1172.4,453.1 1172.5,451.4 1172.7,449.8 1172.8,448.1 1173,446.4 1173.1,444.6 1173.3,442.9 1173.4,441.2 1173.5,439.5 1173.7,437.7 1173.8,436 1174,434.2 1174.1,432.4 1174.2,430.7 1174.4,428.9 1174.5,427.1 1174.7,425.4 1174.8,423.6 1174.9,421.8 1175.1,420 1175.2,418.3 M1179.7,485.9 1179.9,484.8 1180,483.8 1180.2,482.9 1180.3,481.9 1180.5,481 1180.7,480 1180.8,478.9 1181,477.8 1181.1,476.7 1181.3,475.5 1181.5,474.2 1181.6,472.9 1181.8,471.5 1181.9,470.1 1182.1,468.7 1182.2,467.2 1182.4,465.7 1182.5,464.2 1182.7,462.6 1182.8,461.1 1183,459.5 1183.1,458 1183.3,456.4 1183.4,454.8 1183.6,453.2 1183.7,451.6 1183.9,449.9 1184,448.3 1184.2,446.6 1184.3,445 1184.4,443.3 1184.6,441.6 1184.7,439.9 1184.9,438.1 1185,436.4 1185.1,434.6 1185.3,432.9 1185.4,431.1 1185.6,429.3 1185.7,427.6 M1191.4,483.9 1191.6,482.8 1191.7,481.7 1191.9,480.5 1192,479.2 1192.2,477.9 1192.4,476.6 1192.5,475.2 1192.7,473.9 1192.8,472.4 1193,471 1193.1,469.6 1193.3,468.1 1193.4,466.7 1193.6,465.2 1193.7,463.8 1193.9,462.3 1194,460.8 1194.2,459.3 1194.3,457.8 1194.5,456.3 1194.6,454.8 1194.8,453.2 1194.9,451.6 1195.1,450.1 1195.2,448.5 1195.4,446.9 1195.5,445.2 1195.6,443.6 1195.8,441.9 1195.9,440.2 1196.1,438.5 1196.2,436.8 M1203.1,480 1203.3,478.7 1203.4,477.3 1203.6,475.9 1203.7,474.5 1203.9,473.1 1204,471.7 1204.2,470.3 1204.3,468.9 1204.5,467.5 1204.6,466.1 1204.8,464.7 1204.9,463.3 1205.1,461.8 1205.2,460.4 1205.4,459 1205.5,457.5 1205.7,456.1 1205.8,454.6 1206,453.1 1206.1,451.6 1206.3,450.1 1206.4,448.5 1206.6,447 1206.7,445.4 M1214.8,474.9 1215,473.5 1215.1,472.2 1215.3,470.8 1215.4,469.4 1215.6,468 1215.7,466.7 1215.9,465.3 1216,463.9 1216.2,462.6 1216.3,461.2 1216.5,459.8 1216.6,458.4 1216.8,457 1216.9,455.6 1217.1,454.2 1217.2,452.8 M1226.5,469.7 1226.7,468.4 1226.8,467 1227,465.7 1227.1,464.3 1227.3,463 1227.4,461.7 1227.6,460.3 1227.7,459" fill="none" stroke="#0b0b0b" stroke-width="2.3"/><path d="M1018.4,436.1 1024.1,434 1029.9,431.9 1035.6,429.7 1041.4,427.6 1047.1,425.4 1052.8,423.3 1058.6,421.2 1064.3,419.3 1070.1,417.8 1075.8,416.9 1081.5,415.8 1087.3,413.6 1093,410.3 1098.8,406.5 1104.5,403.2 1110.2,400.4 1116,397.9 1121.7,395.5 1127.5,393 1133.2,390.6 1138.5,393.3 1143.7,396.1 1149,399.1 1154.2,402.3 1159.5,405.9 1164.7,409.7 1170,413.9 1175.2,418.3 1180.5,422.9 1185.7,427.6 1191,432.2 1196.2,436.8 1201.5,441.2 1206.7,445.4 1212,449.2 1217.2,452.8 1222.5,456 1227.7,459 1233,461.8 1238.2,464.5 1232.3,467.1 1226.5,469.7 1220.7,472.3 1214.8,474.9 1209,477.5 1203.1,480 1197.2,482.3 1191.4,483.9 1185.6,484.9 1179.7,485.9 1173.8,487.7 1168,491.1 1162.2,495.4 1156.3,499.6 1150.5,503.1 1144.6,506.1 1138.8,508.8 1132.9,511.5 1127.1,514.1 1121.2,516.7 1116.1,512.4 1110.9,508.2 1105.8,503.9 1100.6,499.7 1095.5,495.5 1090.4,491.3 1085.2,487.2 1080.1,483 1074.9,478.9 1069.8,474.9 1064.7,470.9 1059.5,466.9 1054.4,463 1049.2,459.1 1044.1,455.2 1039,451.3 1033.8,447.5 1028.7,443.7 1023.5,439.9Z" fill="none" stroke="#0b0b0b" stroke-width="2.4"/><path d="M1150.2,525.5 1153.2,527.8 1156.2,530 1159.1,532.3 1162.1,534.6 1165.1,536.9 1168,539.2 1171,541.4 1174,543.7 1177,546 1180,548.3 1182.9,550.6 1185.9,553 1188.9,555.3 1191.9,557.6 1194.8,560 1197.8,562.3 1200.8,564.7 1203.8,567.1 1206.7,569.5 1209.7,571.9 1212.7,574.3 1215.7,576.7 1218.6,579.1 1221.6,581.5 1224.6,584 1227.5,586.4 1230.5,588.9 1233.5,591.4 1236.5,593.8 1239.5,596.3 1242.4,598.8 1245.4,601.3 1248.4,603.8 1251.3,606.4 1254.3,608.9 1257.3,611.4 1260.3,613.9 1263.2,616.4 1266.2,619 1269.2,621.5 1272.2,619.9 1275.2,618.3 1278.1,616.7 1281.1,615.1 1284.1,613.5 1287.1,611.9 1290,610.3 1293,608.6 1296,606.9 1299,605 1302,603 1304.9,600.8 1307.9,598.4 1310.9,595.9 1313.9,593.3 1316.8,590.8 1319.8,588.6 1322.8,586.8 1325.8,585.4 1328.8,584.4 1331.7,583.7 1334.7,583.1 1337.7,582.5 1340.7,581.7 1343.6,580.7 1346.6,579.5 1349.6,578.2 1352.6,576.8 1355.5,575.2 1358.5,573.7 1361.5,572.1 1364.5,570.5 1367.5,568.9 1370.4,567.4 1373.4,565.8 1376.4,564.2 1379.4,562.6 1382.3,561 1385.3,559.4 1388.3,557.8 1388.3,562.8 1385.3,564.4 1382.3,566 1379.4,567.6 1376.4,569.2 1373.4,570.8 1370.4,572.4 1367.5,573.9 1364.5,575.5 1361.5,577.1 1358.5,578.7 1355.5,580.2 1352.6,581.8 1349.6,583.2 1346.6,584.5 1343.6,585.7 1340.7,586.7 1337.7,587.5 1334.7,588.1 1331.7,588.7 1328.8,589.4 1325.8,590.4 1322.8,591.8 1319.8,593.6 1316.8,595.8 1313.9,598.3 1310.9,600.9 1307.9,603.4 1304.9,605.8 1302,608 1299,610 1296,611.9 1293,613.6 1290,615.3 1287.1,616.9 1284.1,618.5 1281.1,620.1 1278.1,621.7 1275.2,623.3 1272.2,624.9 1269.2,626.5 1266.2,624 1263.2,621.4 1260.3,618.9 1257.3,616.4 1254.3,613.9 1251.3,611.4 1248.4,608.8 1245.4,606.3 1242.4,603.8 1239.5,601.3 1236.5,598.8 1233.5,596.4 1230.5,593.9 1227.5,591.4 1224.6,589 1221.6,586.5 1218.6,584.1 1215.7,581.7 1212.7,579.3 1209.7,576.9 1206.7,574.5 1203.8,572.1 1200.8,569.7 1197.8,567.3 1194.8,565 1191.9,562.6 1188.9,560.3 1185.9,558 1182.9,555.6 1180,553.3 1177,551 1174,548.7 1171,546.4 1168,544.2 1165.1,541.9 1162.1,539.6 1159.1,537.3 1156.2,535 1153.2,532.8 1150.2,530.5Z" fill="#3f8ba6" stroke="#111" stroke-width="1.5"/><clipPath id="c19"><path d="M1210.8,522.4 1214.1,525.2 1216.4,528.4 1217.7,531.7 1217.7,535.1 1216.6,538.2 1214.4,540.9 1211.1,543.1 1207.1,544.5 1202.4,545.2 1197.3,545.2 1192,544.3 1186.9,542.8 1182.2,540.7 1178,538.1 1174.7,535.1 1172.4,531.9 1171.2,528.7 1171.1,525.6 1172.3,522.8 1174.5,520.4 1177.7,518.5 1181.7,517.2 1186.4,516.6 1191.5,516.5 1196.8,517.1 1201.9,518.3 1206.6,520.1Z"/></clipPath><path d="M1210.8,522.4 1214.1,525.2 1216.4,528.4 1217.7,531.7 1217.7,535.1 1216.6,538.2 1214.4,540.9 1211.1,543.1 1207.1,544.5 1202.4,545.2 1197.3,545.2 1192,544.3 1186.9,542.8 1182.2,540.7 1178,538.1 1174.7,535.1 1172.4,531.9 1171.2,528.7 1171.1,525.6 1172.3,522.8 1174.5,520.4 1177.7,518.5 1181.7,517.2 1186.4,516.6 1191.5,516.5 1196.8,517.1 1201.9,518.3 1206.6,520.1Z" fill="#80d4f0"/><path clip-path="url(#c19)" d="M1210.8,522.4L1210.8,530.4M1214.6,525.7L1214.6,533.7M1217,529.5L1217,537.5M1217.8,533.4L1217.8,541.4M1217.1,537.2L1217.1,545.2M1214.8,540.5L1214.8,548.5M1211.1,543.1L1211.1,551.1M1206.3,544.7L1206.3,552.7M1200.7,545.3L1200.7,553.3M1194.6,544.8L1194.6,552.8M1188.6,543.4L1188.6,551.4M1182.9,541.1L1182.9,549.1M1178,538.1L1178,546.1M1174.3,534.6L1174.3,542.6M1171.9,530.8L1171.9,538.8M1171,527.1L1171,535.1M1171.8,523.7L1171.8,531.7M1174,520.8L1174,528.8M1177.7,518.5L1177.7,526.5M1182.5,517.1L1182.5,525.1M1188.1,516.5L1188.1,524.5M1194.1,516.8L1194.1,524.8M1200.2,517.9L1200.2,525.9M1205.9,519.8L1205.9,527.8M1210.8,526.4 1214.6,529.7 1217,533.5 1217.8,537.4 1217.1,541.2 1214.8,544.5 1211.1,547.1 1206.3,548.7 1200.7,549.3 1194.6,548.8 1188.6,547.4 1182.9,545.1 1178,542.1 1174.3,538.6 1171.9,534.8 1171,531.1 1171.8,527.7 1174,524.8 1177.7,522.5 1182.5,521.1 1188.1,520.5 1194.1,520.8 1200.2,521.9 1205.9,523.8Z" fill="none" stroke="#3a7f9a" stroke-width="0.6"/><path clip-path="url(#c19)" d="M1210.8,530.4 1214.1,533.2 1216.4,536.4 1217.7,539.7 1217.7,543.1 1216.6,546.2 1214.4,548.9 1211.1,551.1 1207.1,552.5 1202.4,553.2 1197.3,553.2 1192,552.3 1186.9,550.8 1182.2,548.7 1178,546.1 1174.7,543.1 1172.4,539.9 1171.2,536.7 1171.1,533.6 1172.3,530.8 1174.5,528.4 1177.7,526.5 1181.7,525.2 1186.4,524.6 1191.5,524.5 1196.8,525.1 1201.9,526.3 1206.6,528.1Z" fill="#a9aeb5" stroke="#222" stroke-width="0.9"/><clipPath id="c20"><path d="M1233.2,512.9 1235.5,514.9 1235.9,516.8 1234.6,518.2 1231.6,518.9 1227.6,518.8 1223.4,517.9 1219.9,516.3 1217.6,514.2 1217.1,512.3 1218.5,510.9 1221.4,510.3 1225.4,510.4 1229.6,511.3Z"/></clipPath><path d="M1233.2,512.9 1235.5,514.9 1235.9,516.8 1234.6,518.2 1231.6,518.9 1227.6,518.8 1223.4,517.9 1219.9,516.3 1217.6,514.2 1217.1,512.3 1218.5,510.9 1221.4,510.3 1225.4,510.4 1229.6,511.3Z" fill="#80d4f0"/><path clip-path="url(#c20)" d="M1233.2,512.9L1233.2,520.9M1235.5,514.9L1235.5,522.9M1235.9,516.8L1235.9,524.8M1234.6,518.2L1234.6,526.2M1231.6,518.9L1231.6,526.9M1227.6,518.8L1227.6,526.8M1223.4,517.9L1223.4,525.9M1219.9,516.3L1219.9,524.3M1217.6,514.2L1217.6,522.2M1217.1,512.3L1217.1,520.3M1218.5,510.9L1218.5,518.9M1221.4,510.3L1221.4,518.3M1225.4,510.4L1225.4,518.4M1229.6,511.3L1229.6,519.3M1233.2,516.9 1235.5,518.9 1235.9,520.8 1234.6,522.2 1231.6,522.9 1227.6,522.8 1223.4,521.9 1219.9,520.3 1217.6,518.2 1217.1,516.3 1218.5,514.9 1221.4,514.3 1225.4,514.4 1229.6,515.3Z" fill="none" stroke="#3a7f9a" stroke-width="0.6"/><path clip-path="url(#c20)" d="M1233.2,520.9 1235.5,522.9 1235.9,524.8 1234.6,526.2 1231.6,526.9 1227.6,526.8 1223.4,525.9 1219.9,524.3 1217.6,522.2 1217.1,520.3 1218.5,518.9 1221.4,518.3 1225.4,518.4 1229.6,519.3Z" fill="#a9aeb5" stroke="#222" stroke-width="0.9"/><clipPath id="c21"><path d="M1245.8,504.4 1248.2,506.9 1248.7,509.9 1247.2,512.7 1244,514.4 1239.7,514.8 1235.1,513.9 1231.3,512.3 1228.9,510.2 1228.4,508.1 1229.9,506 1233.1,504.1 1237.4,503 1241.9,503.1Z"/></clipPath><path d="M1245.8,504.4 1248.2,506.9 1248.7,509.9 1247.2,512.7 1244,514.4 1239.7,514.8 1235.1,513.9 1231.3,512.3 1228.9,510.2 1228.4,508.1 1229.9,506 1233.1,504.1 1237.4,503 1241.9,503.1Z" fill="#80d4f0"/><path clip-path="url(#c21)" d="M1245.8,504.4L1245.8,512.4M1248.2,506.9L1248.2,514.9M1248.7,509.9L1248.7,517.9M1247.2,512.7L1247.2,520.7M1244,514.4L1244,522.4M1239.7,514.8L1239.7,522.8M1235.1,513.9L1235.1,521.9M1231.3,512.3L1231.3,520.3M1228.9,510.2L1228.9,518.2M1228.4,508.1L1228.4,516.1M1229.9,506L1229.9,514M1233.1,504.1L1233.1,512.1M1237.4,503L1237.4,511M1241.9,503.1L1241.9,511.1M1245.8,508.4 1248.2,510.9 1248.7,513.9 1247.2,516.7 1244,518.4 1239.7,518.8 1235.1,517.9 1231.3,516.3 1228.9,514.2 1228.4,512.1 1229.9,510 1233.1,508.1 1237.4,507 1241.9,507.1Z" fill="none" stroke="#3a7f9a" stroke-width="0.6"/><path clip-path="url(#c21)" d="M1245.8,512.4 1248.2,514.9 1248.7,517.9 1247.2,520.7 1244,522.4 1239.7,522.8 1235.1,521.9 1231.3,520.3 1228.9,518.2 1228.4,516.1 1229.9,514 1233.1,512.1 1237.4,511 1241.9,511.1Z" fill="#a9aeb5" stroke="#222" stroke-width="0.9"/><clipPath id="c22"><path d="M1262.8,496.7 1265.2,499.7 1266.7,502.6 1266.9,505 1265.9,506.4 1263.8,506.8 1260.9,505.9 1257.6,504.1 1254.2,501.5 1251.4,498.6 1249.4,495.6 1248.5,493.1 1248.9,491.4 1250.5,490.6 1253,490.8 1256.2,492 1259.6,494Z"/></clipPath><path d="M1262.8,496.7 1265.2,499.7 1266.7,502.6 1266.9,505 1265.9,506.4 1263.8,506.8 1260.9,505.9 1257.6,504.1 1254.2,501.5 1251.4,498.6 1249.4,495.6 1248.5,493.1 1248.9,491.4 1250.5,490.6 1253,490.8 1256.2,492 1259.6,494Z" fill="#80d4f0"/><path clip-path="url(#c22)" d="M1262.8,496.7L1262.8,504.7M1265.2,499.7L1265.2,507.7M1266.7,502.6L1266.7,510.6M1266.9,505L1266.9,513M1265.9,506.4L1265.9,514.4M1263.8,506.8L1263.8,514.8M1260.9,505.9L1260.9,513.9M1257.6,504.1L1257.6,512.1M1254.2,501.5L1254.2,509.5M1251.4,498.6L1251.4,506.6M1249.4,495.6L1249.4,503.6M1248.5,493.1L1248.5,501.1M1248.9,491.4L1248.9,499.4M1250.5,490.6L1250.5,498.6M1253,490.8L1253,498.8M1256.2,492L1256.2,500M1259.6,494L1259.6,502M1262.8,500.7 1265.2,503.7 1266.7,506.6 1266.9,509 1265.9,510.4 1263.8,510.8 1260.9,509.9 1257.6,508.1 1254.2,505.5 1251.4,502.6 1249.4,499.6 1248.5,497.1 1248.9,495.4 1250.5,494.6 1253,494.8 1256.2,496 1259.6,498Z" fill="none" stroke="#3a7f9a" stroke-width="0.6"/><path clip-path="url(#c22)" d="M1262.8,504.7 1265.2,507.7 1266.7,510.6 1266.9,513 1265.9,514.4 1263.8,514.8 1260.9,513.9 1257.6,512.1 1254.2,509.5 1251.4,506.6 1249.4,503.6 1248.5,501.1 1248.9,499.4 1250.5,498.6 1253,498.8 1256.2,500 1259.6,502Z" fill="#a9aeb5" stroke="#222" stroke-width="0.9"/><clipPath id="c23"><path d="M1309.8,508 1311.3,509.8 1311.6,511.7 1310.8,513.3 1308.9,514.2 1306.4,514.3 1303.7,513.6 1301.4,512.3 1299.9,510.5 1299.5,508.6 1300.4,507.1 1302.3,506.1 1304.8,506 1307.5,506.6Z"/></clipPath><path d="M1309.8,508 1311.3,509.8 1311.6,511.7 1310.8,513.3 1308.9,514.2 1306.4,514.3 1303.7,513.6 1301.4,512.3 1299.9,510.5 1299.5,508.6 1300.4,507.1 1302.3,506.1 1304.8,506 1307.5,506.6Z" fill="#80d4f0"/><path clip-path="url(#c23)" d="M1309.8,508L1309.8,516M1311.3,509.8L1311.3,517.8M1311.6,511.7L1311.6,519.7M1310.8,513.3L1310.8,521.3M1308.9,514.2L1308.9,522.2M1306.4,514.3L1306.4,522.3M1303.7,513.6L1303.7,521.6M1301.4,512.3L1301.4,520.3M1299.9,510.5L1299.9,518.5M1299.5,508.6L1299.5,516.6M1300.4,507.1L1300.4,515.1M1302.3,506.1L1302.3,514.1M1304.8,506L1304.8,514M1307.5,506.6L1307.5,514.6M1309.8,512 1311.3,513.8 1311.6,515.7 1310.8,517.3 1308.9,518.2 1306.4,518.3 1303.7,517.6 1301.4,516.3 1299.9,514.5 1299.5,512.6 1300.4,511.1 1302.3,510.1 1304.8,510 1307.5,510.6Z" fill="none" stroke="#3a7f9a" stroke-width="0.6"/><path clip-path="url(#c23)" d="M1309.8,516 1311.3,517.8 1311.6,519.7 1310.8,521.3 1308.9,522.2 1306.4,522.3 1303.7,521.6 1301.4,520.3 1299.9,518.5 1299.5,516.6 1300.4,515.1 1302.3,514.1 1304.8,514 1307.5,514.6Z" fill="#a9aeb5" stroke="#222" stroke-width="0.9"/><clipPath id="c24"><path d="M1287.4,514.9 1290.4,518.5 1291.4,522.3 1290,525.8 1286.6,528.4 1281.8,529.6 1276.3,529.2 1271.2,527.3 1267.3,524.3 1265.3,520.7 1265.5,516.9 1267.9,513.6 1272.1,511.5 1277.3,511.1 1282.8,512.3Z"/></clipPath><path d="M1287.4,514.9 1290.4,518.5 1291.4,522.3 1290,525.8 1286.6,528.4 1281.8,529.6 1276.3,529.2 1271.2,527.3 1267.3,524.3 1265.3,520.7 1265.5,516.9 1267.9,513.6 1272.1,511.5 1277.3,511.1 1282.8,512.3Z" fill="#80d4f0"/><path clip-path="url(#c24)" d="M1287.4,514.9L1287.4,522.9M1290.4,518.5L1290.4,526.5M1291.4,522.3L1291.4,530.3M1290,525.8L1290,533.8M1286.6,528.4L1286.6,536.4M1281.8,529.6L1281.8,537.6M1276.3,529.2L1276.3,537.2M1271.2,527.3L1271.2,535.3M1267.3,524.3L1267.3,532.3M1265.3,520.7L1265.3,528.7M1265.5,516.9L1265.5,524.9M1267.9,513.6L1267.9,521.6M1272.1,511.5L1272.1,519.5M1277.3,511.1L1277.3,519.1M1282.8,512.3L1282.8,520.3M1287.4,518.9 1290.4,522.5 1291.4,526.3 1290,529.8 1286.6,532.4 1281.8,533.6 1276.3,533.2 1271.2,531.3 1267.3,528.3 1265.3,524.7 1265.5,520.9 1267.9,517.6 1272.1,515.5 1277.3,515.1 1282.8,516.3Z" fill="none" stroke="#3a7f9a" stroke-width="0.6"/><path clip-path="url(#c24)" d="M1287.4,522.9 1290.4,526.5 1291.4,530.3 1290,533.8 1286.6,536.4 1281.8,537.6 1276.3,537.2 1271.2,535.3 1267.3,532.3 1265.3,528.7 1265.5,524.9 1267.9,521.6 1272.1,519.5 1277.3,519.1 1282.8,520.3Z" fill="#a9aeb5" stroke="#222" stroke-width="0.9"/><clipPath id="c25"><path d="M1319.3,541 1321.2,544.6 1322,548.1 1321.5,551.4 1319.7,554.4 1316.8,557 1312.9,559 1308.3,560 1303,560 1297.5,559.1 1291.9,557.4 1286.6,555.2 1281.8,552.7 1277.8,549.9 1274.8,546.9 1272.8,544 1272.1,541.2 1272.6,538.6 1274.3,536 1277.2,533.5 1281.1,531.3 1285.7,529.6 1291,528.7 1296.5,528.9 1302.1,530 1307.4,531.9 1312.2,534.5 1316.2,537.6Z"/></clipPath><path d="M1319.3,541 1321.2,544.6 1322,548.1 1321.5,551.4 1319.7,554.4 1316.8,557 1312.9,559 1308.3,560 1303,560 1297.5,559.1 1291.9,557.4 1286.6,555.2 1281.8,552.7 1277.8,549.9 1274.8,546.9 1272.8,544 1272.1,541.2 1272.6,538.6 1274.3,536 1277.2,533.5 1281.1,531.3 1285.7,529.6 1291,528.7 1296.5,528.9 1302.1,530 1307.4,531.9 1312.2,534.5 1316.2,537.6Z" fill="#80d4f0"/><path clip-path="url(#c25)" d="M1319.3,541L1319.3,549M1321.5,545.1L1321.5,553.1M1321.9,549.2L1321.9,557.2M1320.7,553L1320.7,561M1317.9,556.2L1317.9,564.2M1313.6,558.7L1313.6,566.7M1308.3,560L1308.3,568M1302.1,559.9L1302.1,567.9M1295.6,558.6L1295.6,566.6M1289.2,556.4L1289.2,564.4M1283.3,553.6L1283.3,561.6M1278.4,550.4L1278.4,558.4M1274.8,546.9L1274.8,554.9M1272.6,543.5L1272.6,551.5M1272.1,540.3L1272.1,548.3M1273.3,537.3L1273.3,545.3M1276.1,534.4L1276.1,542.4M1280.4,531.6L1280.4,539.6M1285.7,529.6L1285.7,537.6M1291.9,528.7L1291.9,536.7M1298.4,529.2L1298.4,537.2M1304.8,530.9L1304.8,538.9M1310.6,533.6L1310.6,541.6M1315.6,537.1L1315.6,545.1M1319.3,545 1321.5,549.1 1321.9,553.2 1320.7,557 1317.9,560.2 1313.6,562.7 1308.3,564 1302.1,563.9 1295.6,562.6 1289.2,560.4 1283.3,557.6 1278.4,554.4 1274.8,550.9 1272.6,547.5 1272.1,544.3 1273.3,541.3 1276.1,538.4 1280.4,535.6 1285.7,533.6 1291.9,532.7 1298.4,533.2 1304.8,534.9 1310.6,537.6 1315.6,541.1Z" fill="none" stroke="#3a7f9a" stroke-width="0.6"/><path clip-path="url(#c25)" d="M1319.3,549 1321.2,552.6 1322,556.1 1321.5,559.4 1319.7,562.4 1316.8,565 1312.9,567 1308.3,568 1303,568 1297.5,567.1 1291.9,565.4 1286.6,563.2 1281.8,560.7 1277.8,557.9 1274.8,554.9 1272.8,552 1272.1,549.2 1272.6,546.6 1274.3,544 1277.2,541.5 1281.1,539.3 1285.7,537.6 1291,536.7 1296.5,536.9 1302.1,538 1307.4,539.9 1312.2,542.5 1316.2,545.6Z" fill="#a9aeb5" stroke="#222" stroke-width="0.9"/><clipPath id="c26"><path d="M1260.8,542.8 1263.8,546 1264.9,549.3 1263.9,552.5 1261,555.3 1256.6,557 1251.4,557.3 1246.1,556 1241.7,553.4 1238.7,550 1237.6,546.3 1238.6,542.8 1241.5,540.1 1245.9,538.6 1251.1,538.7 1256.3,540.3Z"/></clipPath><path d="M1260.8,542.8 1263.8,546 1264.9,549.3 1263.9,552.5 1261,555.3 1256.6,557 1251.4,557.3 1246.1,556 1241.7,553.4 1238.7,550 1237.6,546.3 1238.6,542.8 1241.5,540.1 1245.9,538.6 1251.1,538.7 1256.3,540.3Z" fill="#80d4f0"/><path clip-path="url(#c26)" d="M1260.8,542.8L1260.8,550.8M1263.8,546L1263.8,554M1264.9,549.3L1264.9,557.3M1263.9,552.5L1263.9,560.5M1261,555.3L1261,563.3M1256.6,557L1256.6,565M1251.4,557.3L1251.4,565.3M1246.1,556L1246.1,564M1241.7,553.4L1241.7,561.4M1238.7,550L1238.7,558M1237.6,546.3L1237.6,554.3M1238.6,542.8L1238.6,550.8M1241.5,540.1L1241.5,548.1M1245.9,538.6L1245.9,546.6M1251.1,538.7L1251.1,546.7M1256.3,540.3L1256.3,548.3M1260.8,546.8 1263.8,550 1264.9,553.3 1263.9,556.5 1261,559.3 1256.6,561 1251.4,561.3 1246.1,560 1241.7,557.4 1238.7,554 1237.6,550.3 1238.6,546.8 1241.5,544.1 1245.9,542.6 1251.1,542.7 1256.3,544.3Z" fill="none" stroke="#3a7f9a" stroke-width="0.6"/><path clip-path="url(#c26)" d="M1260.8,550.8 1263.8,554 1264.9,557.3 1263.9,560.5 1261,563.3 1256.6,565 1251.4,565.3 1246.1,564 1241.7,561.4 1238.7,558 1237.6,554.3 1238.6,550.8 1241.5,548.1 1245.9,546.6 1251.1,546.7 1256.3,548.3Z" fill="#a9aeb5" stroke="#222" stroke-width="0.9"/><clipPath id="c27"><path d="M1335.3,548.4 1336.5,549.7 1336.8,551 1336.1,552.2 1334.6,552.9 1332.5,553.1 1330.3,552.7 1328.5,551.8 1327.3,550.5 1327,549.1 1327.7,547.9 1329.3,547.2 1331.3,547 1333.5,547.5Z"/></clipPath><path d="M1335.3,548.4 1336.5,549.7 1336.8,551 1336.1,552.2 1334.6,552.9 1332.5,553.1 1330.3,552.7 1328.5,551.8 1327.3,550.5 1327,549.1 1327.7,547.9 1329.3,547.2 1331.3,547 1333.5,547.5Z" fill="#80d4f0"/><path clip-path="url(#c27)" d="M1335.3,548.4L1335.3,556.4M1336.5,549.7L1336.5,557.7M1336.8,551L1336.8,559M1336.1,552.2L1336.1,560.2M1334.6,552.9L1334.6,560.9M1332.5,553.1L1332.5,561.1M1330.3,552.7L1330.3,560.7M1328.5,551.8L1328.5,559.8M1327.3,550.5L1327.3,558.5M1327,549.1L1327,557.1M1327.7,547.9L1327.7,555.9M1329.3,547.2L1329.3,555.2M1331.3,547L1331.3,555M1333.5,547.5L1333.5,555.5M1335.3,552.4 1336.5,553.7 1336.8,555 1336.1,556.2 1334.6,556.9 1332.5,557.1 1330.3,556.7 1328.5,555.8 1327.3,554.5 1327,553.1 1327.7,551.9 1329.3,551.2 1331.3,551 1333.5,551.5Z" fill="none" stroke="#3a7f9a" stroke-width="0.6"/><path clip-path="url(#c27)" d="M1335.3,556.4 1336.5,557.7 1336.8,559 1336.1,560.2 1334.6,560.9 1332.5,561.1 1330.3,560.7 1328.5,559.8 1327.3,558.5 1327,557.1 1327.7,555.9 1329.3,555.2 1331.3,555 1333.5,555.5Z" fill="#a9aeb5" stroke="#222" stroke-width="0.9"/><clipPath id="c28"><path d="M1339.5,561.7 1342.7,564.4 1344.2,567.5 1343.7,570.5 1341.5,573.1 1337.6,574.8 1332.7,575.4 1327.2,574.8 1322,573.2 1317.5,570.9 1314.3,568.3 1312.8,565.6 1313.3,562.9 1315.5,560.5 1319.3,558.7 1324.3,557.8 1329.7,558.1 1335,559.5Z"/></clipPath><path d="M1339.5,561.7 1342.7,564.4 1344.2,567.5 1343.7,570.5 1341.5,573.1 1337.6,574.8 1332.7,575.4 1327.2,574.8 1322,573.2 1317.5,570.9 1314.3,568.3 1312.8,565.6 1313.3,562.9 1315.5,560.5 1319.3,558.7 1324.3,557.8 1329.7,558.1 1335,559.5Z" fill="#80d4f0"/><path clip-path="url(#c28)" d="M1339.5,561.7L1339.5,569.7M1342.7,564.4L1342.7,572.4M1344.2,567.5L1344.2,575.5M1343.7,570.5L1343.7,578.5M1341.5,573.1L1341.5,581.1M1337.6,574.8L1337.6,582.8M1332.7,575.4L1332.7,583.4M1327.2,574.8L1327.2,582.8M1322,573.2L1322,581.2M1317.5,570.9L1317.5,578.9M1314.3,568.3L1314.3,576.3M1312.8,565.6L1312.8,573.6M1313.3,562.9L1313.3,570.9M1315.5,560.5L1315.5,568.5M1319.3,558.7L1319.3,566.7M1324.3,557.8L1324.3,565.8M1329.7,558.1L1329.7,566.1M1335,559.5L1335,567.5M1339.5,565.7 1342.7,568.4 1344.2,571.5 1343.7,574.5 1341.5,577.1 1337.6,578.8 1332.7,579.4 1327.2,578.8 1322,577.2 1317.5,574.9 1314.3,572.3 1312.8,569.6 1313.3,566.9 1315.5,564.5 1319.3,562.7 1324.3,561.8 1329.7,562.1 1335,563.5Z" fill="none" stroke="#3a7f9a" stroke-width="0.6"/><path clip-path="url(#c28)" d="M1339.5,569.7 1342.7,572.4 1344.2,575.5 1343.7,578.5 1341.5,581.1 1337.6,582.8 1332.7,583.4 1327.2,582.8 1322,581.2 1317.5,578.9 1314.3,576.3 1312.8,573.6 1313.3,570.9 1315.5,568.5 1319.3,566.7 1324.3,565.8 1329.7,566.1 1335,567.5Z" fill="#a9aeb5" stroke="#222" stroke-width="0.9"/><clipPath id="c29"><path d="M1240.6,564.9 1241.9,566.4 1242.2,567.9 1241.4,569.2 1239.8,570 1237.6,570.1 1235.3,569.5 1233.3,568.4 1232.1,566.9 1231.8,565.3 1232.6,564.1 1234.2,563.3 1236.4,563.2 1238.7,563.7Z"/></clipPath><path d="M1240.6,564.9 1241.9,566.4 1242.2,567.9 1241.4,569.2 1239.8,570 1237.6,570.1 1235.3,569.5 1233.3,568.4 1232.1,566.9 1231.8,565.3 1232.6,564.1 1234.2,563.3 1236.4,563.2 1238.7,563.7Z" fill="#80d4f0"/><path clip-path="url(#c29)" d="M1240.6,564.9L1240.6,572.9M1241.9,566.4L1241.9,574.4M1242.2,567.9L1242.2,575.9M1241.4,569.2L1241.4,577.2M1239.8,570L1239.8,578M1237.6,570.1L1237.6,578.1M1235.3,569.5L1235.3,577.5M1233.3,568.4L1233.3,576.4M1232.1,566.9L1232.1,574.9M1231.8,565.3L1231.8,573.3M1232.6,564.1L1232.6,572.1M1234.2,563.3L1234.2,571.3M1236.4,563.2L1236.4,571.2M1238.7,563.7L1238.7,571.7M1240.6,568.9 1241.9,570.4 1242.2,571.9 1241.4,573.2 1239.8,574 1237.6,574.1 1235.3,573.5 1233.3,572.4 1232.1,570.9 1231.8,569.3 1232.6,568.1 1234.2,567.3 1236.4,567.2 1238.7,567.7Z" fill="none" stroke="#3a7f9a" stroke-width="0.6"/><path clip-path="url(#c29)" d="M1240.6,572.9 1241.9,574.4 1242.2,575.9 1241.4,577.2 1239.8,578 1237.6,578.1 1235.3,577.5 1233.3,576.4 1232.1,574.9 1231.8,573.3 1232.6,572.1 1234.2,571.3 1236.4,571.2 1238.7,571.7Z" fill="#a9aeb5" stroke="#222" stroke-width="0.9"/><clipPath id="c30"><path d="M1295.4,576.9 1297.8,579.5 1298.3,582.8 1296.8,586 1293.7,588.4 1289.4,589.5 1284.9,589 1281.1,587.1 1278.7,584.2 1278.2,581 1279.6,578.1 1282.8,575.8 1287,574.8 1291.5,575.2Z"/></clipPath><path d="M1295.4,576.9 1297.8,579.5 1298.3,582.8 1296.8,586 1293.7,588.4 1289.4,589.5 1284.9,589 1281.1,587.1 1278.7,584.2 1278.2,581 1279.6,578.1 1282.8,575.8 1287,574.8 1291.5,575.2Z" fill="#80d4f0"/><path clip-path="url(#c30)" d="M1295.4,576.9L1295.4,584.9M1297.8,579.5L1297.8,587.5M1298.3,582.8L1298.3,590.8M1296.8,586L1296.8,594M1293.7,588.4L1293.7,596.4M1289.4,589.5L1289.4,597.5M1284.9,589L1284.9,597M1281.1,587.1L1281.1,595.1M1278.7,584.2L1278.7,592.2M1278.2,581L1278.2,589M1279.6,578.1L1279.6,586.1M1282.8,575.8L1282.8,583.8M1287,574.8L1287,582.8M1291.5,575.2L1291.5,583.2M1295.4,580.9 1297.8,583.5 1298.3,586.8 1296.8,590 1293.7,592.4 1289.4,593.5 1284.9,593 1281.1,591.1 1278.7,588.2 1278.2,585 1279.6,582.1 1282.8,579.8 1287,578.8 1291.5,579.2Z" fill="none" stroke="#3a7f9a" stroke-width="0.6"/><path clip-path="url(#c30)" d="M1295.4,584.9 1297.8,587.5 1298.3,590.8 1296.8,594 1293.7,596.4 1289.4,597.5 1284.9,597 1281.1,595.1 1278.7,592.2 1278.2,589 1279.6,586.1 1282.8,583.8 1287,582.8 1291.5,583.2Z" fill="#a9aeb5" stroke="#222" stroke-width="0.9"/><clipPath id="c31"><path d="M1315.7,578.9 1316.9,580.1 1317.2,581.3 1316.4,582.4 1314.8,583.3 1312.6,583.7 1310.3,583.5 1308.3,582.7 1307,581.4 1306.8,579.9 1307.5,578.6 1309.2,577.8 1311.4,577.6 1313.7,578.1Z"/></clipPath><path d="M1315.7,578.9 1316.9,580.1 1317.2,581.3 1316.4,582.4 1314.8,583.3 1312.6,583.7 1310.3,583.5 1308.3,582.7 1307,581.4 1306.8,579.9 1307.5,578.6 1309.2,577.8 1311.4,577.6 1313.7,578.1Z" fill="#80d4f0"/><path clip-path="url(#c31)" d="M1315.7,578.9L1315.7,586.9M1316.9,580.1L1316.9,588.1M1317.2,581.3L1317.2,589.3M1316.4,582.4L1316.4,590.4M1314.8,583.3L1314.8,591.3M1312.6,583.7L1312.6,591.7M1310.3,583.5L1310.3,591.5M1308.3,582.7L1308.3,590.7M1307,581.4L1307,589.4M1306.8,579.9L1306.8,587.9M1307.5,578.6L1307.5,586.6M1309.2,577.8L1309.2,585.8M1311.4,577.6L1311.4,585.6M1313.7,578.1L1313.7,586.1M1315.7,582.9 1316.9,584.1 1317.2,585.3 1316.4,586.4 1314.8,587.3 1312.6,587.7 1310.3,587.5 1308.3,586.7 1307,585.4 1306.8,583.9 1307.5,582.6 1309.2,581.8 1311.4,581.6 1313.7,582.1Z" fill="none" stroke="#3a7f9a" stroke-width="0.6"/><path clip-path="url(#c31)" d="M1315.7,586.9 1316.9,588.1 1317.2,589.3 1316.4,590.4 1314.8,591.3 1312.6,591.7 1310.3,591.5 1308.3,590.7 1307,589.4 1306.8,587.9 1307.5,586.6 1309.2,585.8 1311.4,585.6 1313.7,586.1Z" fill="#a9aeb5" stroke="#222" stroke-width="0.9"/><clipPath id="c32"><path d="M1271,589.4 1272.3,590.9 1272.6,592.5 1271.8,593.9 1270.1,594.7 1267.8,594.9 1265.5,594.3 1263.4,593.2 1262.1,591.7 1261.9,590.1 1262.7,588.8 1264.3,587.9 1266.6,587.8 1269,588.3Z"/></clipPath><path d="M1271,589.4 1272.3,590.9 1272.6,592.5 1271.8,593.9 1270.1,594.7 1267.8,594.9 1265.5,594.3 1263.4,593.2 1262.1,591.7 1261.9,590.1 1262.7,588.8 1264.3,587.9 1266.6,587.8 1269,588.3Z" fill="#80d4f0"/><path clip-path="url(#c32)" d="M1271,589.4L1271,597.4M1272.3,590.9L1272.3,598.9M1272.6,592.5L1272.6,600.5M1271.8,593.9L1271.8,601.9M1270.1,594.7L1270.1,602.7M1267.8,594.9L1267.8,602.9M1265.5,594.3L1265.5,602.3M1263.4,593.2L1263.4,601.2M1262.1,591.7L1262.1,599.7M1261.9,590.1L1261.9,598.1M1262.7,588.8L1262.7,596.8M1264.3,587.9L1264.3,595.9M1266.6,587.8L1266.6,595.8M1269,588.3L1269,596.3M1271,593.4 1272.3,594.9 1272.6,596.5 1271.8,597.9 1270.1,598.7 1267.8,598.9 1265.5,598.3 1263.4,597.2 1262.1,595.7 1261.9,594.1 1262.7,592.8 1264.3,591.9 1266.6,591.8 1269,592.3Z" fill="none" stroke="#3a7f9a" stroke-width="0.6"/><path clip-path="url(#c32)" d="M1271,597.4 1272.3,598.9 1272.6,600.5 1271.8,601.9 1270.1,602.7 1267.8,602.9 1265.5,602.3 1263.4,601.2 1262.1,599.7 1261.9,598.1 1262.7,596.8 1264.3,595.9 1266.6,595.8 1269,596.3Z" fill="#a9aeb5" stroke="#222" stroke-width="0.9"/><mask id="m18" maskUnits="userSpaceOnUse" x="0" y="0" width="1920" height="1029"><rect x="0" y="0" width="1920" height="1029" fill="#fff"/><path d="M1210.8,522.4 1214.1,525.2 1216.4,528.4 1217.7,531.7 1217.7,535.1 1216.6,538.2 1214.4,540.9 1211.1,543.1 1207.1,544.5 1202.4,545.2 1197.3,545.2 1192,544.3 1186.9,542.8 1182.2,540.7 1178,538.1 1174.7,535.1 1172.4,531.9 1171.2,528.7 1171.1,525.6 1172.3,522.8 1174.5,520.4 1177.7,518.5 1181.7,517.2 1186.4,516.6 1191.5,516.5 1196.8,517.1 1201.9,518.3 1206.6,520.1ZM1233.2,512.9 1235.5,514.9 1235.9,516.8 1234.6,518.2 1231.6,518.9 1227.6,518.8 1223.4,517.9 1219.9,516.3 1217.6,514.2 1217.1,512.3 1218.5,510.9 1221.4,510.3 1225.4,510.4 1229.6,511.3ZM1245.8,504.4 1248.2,506.9 1248.7,509.9 1247.2,512.7 1244,514.4 1239.7,514.8 1235.1,513.9 1231.3,512.3 1228.9,510.2 1228.4,508.1 1229.9,506 1233.1,504.1 1237.4,503 1241.9,503.1ZM1262.8,496.7 1265.2,499.7 1266.7,502.6 1266.9,505 1265.9,506.4 1263.8,506.8 1260.9,505.9 1257.6,504.1 1254.2,501.5 1251.4,498.6 1249.4,495.6 1248.5,493.1 1248.9,491.4 1250.5,490.6 1253,490.8 1256.2,492 1259.6,494ZM1309.8,508 1311.3,509.8 1311.6,511.7 1310.8,513.3 1308.9,514.2 1306.4,514.3 1303.7,513.6 1301.4,512.3 1299.9,510.5 1299.5,508.6 1300.4,507.1 1302.3,506.1 1304.8,506 1307.5,506.6ZM1287.4,514.9 1290.4,518.5 1291.4,522.3 1290,525.8 1286.6,528.4 1281.8,529.6 1276.3,529.2 1271.2,527.3 1267.3,524.3 1265.3,520.7 1265.5,516.9 1267.9,513.6 1272.1,511.5 1277.3,511.1 1282.8,512.3ZM1319.3,541 1321.2,544.6 1322,548.1 1321.5,551.4 1319.7,554.4 1316.8,557 1312.9,559 1308.3,560 1303,560 1297.5,559.1 1291.9,557.4 1286.6,555.2 1281.8,552.7 1277.8,549.9 1274.8,546.9 1272.8,544 1272.1,541.2 1272.6,538.6 1274.3,536 1277.2,533.5 1281.1,531.3 1285.7,529.6 1291,528.7 1296.5,528.9 1302.1,530 1307.4,531.9 1312.2,534.5 1316.2,537.6ZM1260.8,542.8 1263.8,546 1264.9,549.3 1263.9,552.5 1261,555.3 1256.6,557 1251.4,557.3 1246.1,556 1241.7,553.4 1238.7,550 1237.6,546.3 1238.6,542.8 1241.5,540.1 1245.9,538.6 1251.1,538.7 1256.3,540.3ZM1335.3,548.4 1336.5,549.7 1336.8,551 1336.1,552.2 1334.6,552.9 1332.5,553.1 1330.3,552.7 1328.5,551.8 1327.3,550.5 1327,549.1 1327.7,547.9 1329.3,547.2 1331.3,547 1333.5,547.5ZM1339.5,561.7 1342.7,564.4 1344.2,567.5 1343.7,570.5 1341.5,573.1 1337.6,574.8 1332.7,575.4 1327.2,574.8 1322,573.2 1317.5,570.9 1314.3,568.3 1312.8,565.6 1313.3,562.9 1315.5,560.5 1319.3,558.7 1324.3,557.8 1329.7,558.1 1335,559.5ZM1240.6,564.9 1241.9,566.4 1242.2,567.9 1241.4,569.2 1239.8,570 1237.6,570.1 1235.3,569.5 1233.3,568.4 1232.1,566.9 1231.8,565.3 1232.6,564.1 1234.2,563.3 1236.4,563.2 1238.7,563.7ZM1295.4,576.9 1297.8,579.5 1298.3,582.8 1296.8,586 1293.7,588.4 1289.4,589.5 1284.9,589 1281.1,587.1 1278.7,584.2 1278.2,581 1279.6,578.1 1282.8,575.8 1287,574.8 1291.5,575.2ZM1315.7,578.9 1316.9,580.1 1317.2,581.3 1316.4,582.4 1314.8,583.3 1312.6,583.7 1310.3,583.5 1308.3,582.7 1307,581.4 1306.8,579.9 1307.5,578.6 1309.2,577.8 1311.4,577.6 1313.7,578.1ZM1271,589.4 1272.3,590.9 1272.6,592.5 1271.8,593.9 1270.1,594.7 1267.8,594.9 1265.5,594.3 1263.4,593.2 1262.1,591.7 1261.9,590.1 1262.7,588.8 1264.3,587.9 1266.6,587.8 1269,588.3Z" fill="#000"/></mask><g mask="url(#m18)"><path d="M1150.2,525.5 1159.9,521.4 1169.8,528.8 1160.1,533.1ZM1160.1,533.1 1169.8,528.8 1179.8,536.2 1170,540.7ZM1170,540.7 1179.8,536.2 1189.7,543.8 1180,548.3ZM1180,548.3 1189.7,543.8 1199.6,551.5 1189.9,556.1ZM1189.9,556.1 1199.6,551.5 1209.6,559.3 1199.8,563.9ZM1199.8,563.9 1209.6,559.3 1219.5,567.3 1209.7,571.9ZM1209.7,571.9 1219.5,567.3 1229.5,575.4 1219.6,579.9ZM1219.6,579.9 1229.5,575.4 1239.4,583.5 1229.5,588.1ZM1229.5,588.1 1239.4,583.5 1249.3,591.7 1239.5,596.3ZM1239.5,596.3 1249.3,591.7 1259.3,599.9 1249.4,604.7ZM1249.4,604.7 1259.3,599.9 1269.2,608 1259.3,613.1ZM1259.3,613.1 1269.2,608 1279.1,616.2 1269.2,621.5ZM1159.9,521.4 1169.6,517.4 1179.6,524.5 1169.8,528.8ZM1169.8,528.8 1179.6,524.5 1189.5,531.7 1179.8,536.2ZM1179.8,536.2 1189.5,531.7 1199.5,539.2 1189.7,543.8ZM1189.7,543.8 1199.5,539.2 1209.4,546.8 1199.6,551.5ZM1199.6,551.5 1209.4,546.8 1219.4,554.7 1209.6,559.3ZM1209.6,559.3 1219.4,554.7 1229.3,562.7 1219.5,567.3ZM1219.5,567.3 1229.3,562.7 1239.3,570.8 1229.5,575.4ZM1229.5,575.4 1239.3,570.8 1249.2,579 1239.4,583.5ZM1239.4,583.5 1249.2,579 1259.2,587.1 1249.3,591.7ZM1249.3,591.7 1259.2,587.1 1269.1,595.1 1259.3,599.9ZM1259.3,599.9 1269.1,595.1 1279.1,603 1269.2,608ZM1269.2,608 1279.1,603 1289.1,610.8 1279.1,616.2ZM1169.6,517.4 1179.3,513.2 1189.3,520.1 1179.6,524.5ZM1179.6,524.5 1189.3,520.1 1199.3,527.1 1189.5,531.7ZM1189.5,531.7 1199.3,527.1 1209.2,534.4 1199.5,539.2ZM1239.3,570.8 1249.1,566 1259.1,574.1 1249.2,579ZM1249.2,579 1259.1,574.1 1269.1,582.1 1259.2,587.1ZM1259.2,587.1 1269.1,582.1 1279,589.9 1269.1,595.1ZM1179.3,513.2 1189,509.1 1199,515.6 1189.3,520.1ZM1189.3,520.1 1199,515.6 1209,522.3 1199.3,527.1ZM1199,515.6 1208.7,511.5 1218.8,517.7 1209,522.3ZM1209,522.3 1218.8,517.7 1228.8,524.3 1219,529.3ZM1288.5,548.5 1298.3,544.1 1308.4,552.1 1298.5,556.2ZM1318.4,559.5 1328.3,554.5 1338.4,561.4 1328.5,566.3ZM1318.2,547 1328.1,542.1 1338.2,549.7 1328.3,554.5ZM1328.3,554.5 1338.2,549.7 1348.3,556.5 1338.4,561.4ZM1338.4,561.4 1348.3,556.5 1358.4,562.7 1348.4,567.7ZM1247.3,482.6 1257,477.9 1267.1,483.4 1257.4,488.2ZM1257.4,488.2 1267.1,483.4 1277.2,489.3 1267.5,494.2ZM1328.1,542.1 1337.9,537.4 1348,544.9 1338.2,549.7ZM1338.2,549.7 1348,544.9 1358.1,551.6 1348.3,556.5ZM1257,477.9 1266.7,473.3 1276.8,478.6 1267.1,483.4ZM1267.1,483.4 1276.8,478.6 1287,484.3 1277.2,489.3ZM1337.9,537.4 1347.8,532.7 1357.9,540.2 1348,544.9ZM1348,544.9 1357.9,540.2 1368,546.8 1358.1,551.6Z" fill="#9a9ca1" stroke="#9a9ca1" stroke-width="0.8"/><path d="M1199.5,539.2 1209.2,534.4 1219.2,542 1209.4,546.8ZM1209.4,546.8 1219.2,542 1229.2,549.8 1219.4,554.7ZM1219.4,554.7 1229.2,549.8 1239.2,557.9 1229.3,562.7ZM1229.3,562.7 1239.2,557.9 1249.1,566 1239.3,570.8ZM1269.1,595.1 1279,589.9 1289,597.5 1279.1,603ZM1278.4,540.7 1288.2,535.9 1298.3,544.1 1288.5,548.5ZM1308.4,552.1 1318.2,547 1328.3,554.5 1318.4,559.5ZM1237.6,487.7 1247.3,482.6 1257.4,488.2 1247.7,493.5ZM1318,533.9 1327.8,529.1 1337.9,537.4 1328.1,542.1Z" fill="#a0a2a7" stroke="#a0a2a7" stroke-width="0.8"/><path d="M1279.1,603 1289,597.5 1299,605 1289.1,610.8ZM1199.3,527.1 1209,522.3 1219,529.3 1209.2,534.4ZM1247.7,493.5 1257.4,488.2 1267.5,494.2 1257.7,499.6ZM1308.1,538.8 1318,533.9 1328.1,542.1 1318.2,547ZM1267.5,494.2 1277.2,489.3 1287.3,495.9 1277.6,500.9ZM1277.2,489.3 1287,484.3 1297.1,490.9 1287.3,495.9ZM1327.8,529.1 1337.6,524.4 1347.8,532.7 1337.9,537.4Z" fill="#a6a8ad" stroke="#a6a8ad" stroke-width="0.8"/><path d="M1209.2,534.4 1219,529.3 1229,536.6 1219.2,542ZM1219,529.3 1228.8,524.3 1238.8,531.3 1229,536.6ZM1268.4,532.9 1278.2,527.7 1288.2,535.9 1278.4,540.7ZM1298.3,544.1 1308.1,538.8 1318.2,547 1308.4,552.1ZM1257.7,499.6 1267.5,494.2 1277.6,500.9 1267.8,506.3ZM1298,530.3 1307.9,525.2 1318,533.9 1308.1,538.8ZM1277.6,500.9 1287.3,495.9 1297.5,503.4 1287.7,508.4ZM1307.9,525.2 1317.7,520.4 1327.8,529.1 1318,533.9ZM1287.3,495.9 1297.1,490.9 1307.2,498.4 1297.5,503.4ZM1317.7,520.4 1327.5,515.5 1337.6,524.4 1327.8,529.1Z" fill="#acaeb3" stroke="#acaeb3" stroke-width="0.8"/><path d="M1219.2,542 1229,536.6 1239,544.3 1229.2,549.8ZM1229,536.6 1238.8,531.3 1248.8,538.8 1239,544.3ZM1267.8,506.3 1277.6,500.9 1287.7,508.4 1277.9,513.7ZM1287.7,508.4 1297.5,503.4 1307.6,511.7 1297.8,516.6ZM1297.8,516.6 1307.6,511.7 1317.7,520.4 1307.9,525.2ZM1297.5,503.4 1307.2,498.4 1317.4,506.7 1307.6,511.7ZM1307.6,511.7 1317.4,506.7 1327.5,515.5 1317.7,520.4Z" fill="#b2b4b9" stroke="#b2b4b9" stroke-width="0.8"/><path d="M1229.2,549.8 1239,544.3 1249,552.2 1239.2,557.9ZM1239.2,557.9 1249,552.2 1259,560.2 1249.1,566ZM1258.3,525.4 1268.1,519.9 1278.2,527.7 1268.4,532.9ZM1277.9,513.7 1287.7,508.4 1297.8,516.6 1288,521.8ZM1288,521.8 1297.8,516.6 1307.9,525.2 1298,530.3Z" fill="#b8babf" stroke="#b8babf" stroke-width="0.8"/><path d="M1249.1,566 1259,560.2 1268.9,568.1 1259.1,574.1ZM1259.1,574.1 1268.9,568.1 1278.9,575.8 1269.1,582.1ZM1239,544.3 1248.8,538.8 1258.8,546.4 1249,552.2ZM1228.2,506.1 1237.9,500 1248,506 1238.2,512ZM1238.2,512 1248,506 1258.1,512.6 1248.3,518.4ZM1248.3,518.4 1258.1,512.6 1268.1,519.9 1258.3,525.4ZM1288.2,535.9 1298,530.3 1308.1,538.8 1298.3,544.1Z" fill="#bec0c5" stroke="#bec0c5" stroke-width="0.8"/><path d="M1269.1,582.1 1278.9,575.8 1288.9,583.3 1279,589.9ZM1249,552.2 1258.8,546.4 1268.8,554.2 1259,560.2ZM1218.2,500.5 1227.9,494.3 1237.9,500 1228.2,506.1Z" fill="#c4c6cb" stroke="#c4c6cb" stroke-width="0.8"/><path d="M1279,589.9 1288.9,583.3 1298.9,590.5 1289,597.5ZM1259,560.2 1268.8,554.2 1278.8,561.8 1268.9,568.1ZM1268.9,568.1 1278.8,561.8 1288.8,569.1 1278.9,575.8ZM1278.2,527.7 1288,521.8 1298,530.3 1288.2,535.9Z" fill="#caccd1" stroke="#caccd1" stroke-width="0.8"/><path d="M1289,597.5 1298.9,590.5 1308.9,597.6 1299,605ZM1278.9,575.8 1288.8,569.1 1298.8,576.1 1288.9,583.3Z" fill="#d6d8dd" stroke="#d6d8dd" stroke-width="0.8"/><path d="M1189,509.1 1198.7,505.5 1208.7,511.5 1199,515.6ZM1308.8,582.8 1318.7,578.3 1328.8,584.4 1318.8,589.3ZM1298.5,556.2 1308.4,552.1 1318.4,559.5 1308.5,563.4ZM1328.5,566.3 1338.4,561.4 1348.4,567.7 1338.5,572.7ZM1338.5,572.7 1348.4,567.7 1358.5,573.7 1348.6,578.7ZM1348.4,567.7 1358.4,562.7 1368.5,568.4 1358.5,573.7ZM1348.3,556.5 1358.1,551.6 1368.3,557.6 1358.4,562.7ZM1358.4,562.7 1368.3,557.6 1378.4,563.1 1368.5,568.4ZM1358.1,551.6 1368,546.8 1378.2,552.5 1368.3,557.6ZM1368.3,557.6 1378.2,552.5 1388.3,557.8 1378.4,563.1Z" fill="#94969b" stroke="#94969b" stroke-width="0.8"/><path d="M1288.9,583.3 1298.8,576.1 1308.8,582.8 1298.9,590.5Z" fill="#dcdee3" stroke="#dcdee3" stroke-width="0.8"/><path d="M1298.9,590.5 1308.8,582.8 1318.8,589.3 1308.9,597.6Z" fill="#e8eaef" stroke="#e8eaef" stroke-width="0.8"/><path d="M1198.7,505.5 1208.5,503.3 1218.5,509 1208.7,511.5ZM1278.6,550.7 1288.5,548.5 1298.5,556.2 1288.7,558.2ZM1288.7,558.2 1298.5,556.2 1308.5,563.4 1298.7,565.3Z" fill="#828489" stroke="#828489" stroke-width="0.8"/><path d="M1208.7,511.5 1218.5,509 1228.5,514.9 1218.8,517.7ZM1218.8,517.7 1228.5,514.9 1238.5,521.3 1228.8,524.3ZM1208.5,503.3 1218.2,500.5 1228.2,506.1 1218.5,509ZM1218.5,509 1228.2,506.1 1238.2,512 1228.5,514.9ZM1228.5,514.9 1238.2,512 1248.3,518.4 1238.5,521.3ZM1238.5,521.3 1248.3,518.4 1258.3,525.4 1248.6,528.1ZM1248.6,528.1 1258.3,525.4 1268.4,532.9 1258.6,535.4ZM1258.6,535.4 1268.4,532.9 1278.4,540.7 1268.6,543.1ZM1268.6,543.1 1278.4,540.7 1288.5,548.5 1278.6,550.7ZM1328.6,576.3 1338.5,572.7 1348.6,578.7 1338.7,582.2Z" fill="#888a8f" stroke="#888a8f" stroke-width="0.8"/><path d="M1228.8,524.3 1238.5,521.3 1248.6,528.1 1238.8,531.3ZM1238.8,531.3 1248.6,528.1 1258.6,535.4 1248.8,538.8ZM1248.8,538.8 1258.6,535.4 1268.6,543.1 1258.8,546.4ZM1258.8,546.4 1268.6,543.1 1278.6,550.7 1268.8,554.2ZM1268.8,554.2 1278.6,550.7 1288.7,558.2 1278.8,561.8ZM1278.8,561.8 1288.7,558.2 1298.7,565.3 1288.8,569.1ZM1288.8,569.1 1298.7,565.3 1308.7,572 1298.8,576.1ZM1298.8,576.1 1308.7,572 1318.7,578.3 1308.8,582.8ZM1308.5,563.4 1318.4,559.5 1328.5,566.3 1318.6,570ZM1318.6,570 1328.5,566.3 1338.5,572.7 1328.6,576.3Z" fill="#8e9095" stroke="#8e9095" stroke-width="0.8"/><path d="M1298.7,565.3 1308.5,563.4 1318.6,570 1308.7,572ZM1308.7,572 1318.6,570 1328.6,576.3 1318.7,578.3ZM1318.7,578.3 1328.6,576.3 1338.7,582.2 1328.8,584.4Z" fill="#7c7e83" stroke="#7c7e83" stroke-width="0.8"/><path d="M1227.9,494.3 1237.6,487.7 1247.7,493.5 1237.9,500ZM1237.9,500 1247.7,493.5 1257.7,499.6 1248,506ZM1248,506 1257.7,499.6 1267.8,506.3 1258.1,512.6ZM1258.1,512.6 1267.8,506.3 1277.9,513.7 1268.1,519.9ZM1268.1,519.9 1277.9,513.7 1288,521.8 1278.2,527.7Z" fill="#d0d2d7" stroke="#d0d2d7" stroke-width="0.8"/><path d="M1150.2,525.5 1162.1,534.6 1174,543.7 1185.9,553 1197.8,562.3 1209.7,571.9 1221.6,581.5 1233.5,591.4 1245.4,601.3 1257.3,611.4 1269.2,621.5 M1155,523.5 1167,532.4 1178.9,541.5 1190.8,550.7 1202.7,560 1214.6,569.6 1226.5,579.3 1238.4,589.1 1250.3,599 1262.2,608.9 1274.2,618.9 M1159.8,521.5 1171.8,530.3 1183.7,539.2 1195.6,548.4 1207.5,557.8 1219.5,567.3 1231.4,577.1 1243.3,586.8 1255.2,596.7 1267.1,606.5 1279.1,616.2 M1164.5,519.5 1176.5,528.2 1188.4,537.1 1200.3,546.2 1212.3,555.5 1224.2,565.1 1236.1,574.9 1248.1,584.6 1260,594.4 1271.9,604 1283.9,613.6 M1169.1,517.6 1181,526.2 1193,534.9 1204.9,544 1216.9,553.3 1228.8,563 1240.8,572.7 1252.7,582.5 1264.6,592.1 1276.6,601.7 1288.5,611.1 M1173.5,515.7 1185.4,524.2 1197.4,532.9 1209.3,541.8 1221.3,551.2 1233.2,560.8 1245.2,570.6 1257.1,580.3 1269.1,589.9 1281.1,599.3 1293,608.6 M1177.6,513.9 1189.6,522.3 1201.6,530.8 1213.5,539.8 1225.5,549.1 1237.5,558.8 1249.4,568.5 1261.4,578.2 1273.3,587.7 1285.3,597 1297.3,606.1 M1181.6,512.3 1193.5,520.5 1205.5,528.9 1217.5,537.8 1229.4,547.1 1241.4,556.7 1253.4,566.4 1265.4,576 1277.3,585.4 1289.3,594.5 1301.3,603.5 M1185.2,510.7 1197.2,518.7 1209.2,527 1221.2,535.8 1233.1,545 1245.1,554.6 1257.1,564.3 1269.1,573.8 1281,583.1 1293,592 1305,600.7 M1188.6,509.3 1200.6,517.1 1212.6,525.3 1224.6,533.9 1236.5,543 1248.5,552.5 1260.5,562.1 1272.5,571.6 1284.5,580.7 1296.5,589.4 1308.5,597.9 M1191.7,508 1203.7,515.7 1215.7,523.7 1227.7,532.1 1239.7,541.2 1251.7,550.6 1263.6,560.1 1275.6,569.4 1287.6,578.4 1299.6,586.9 1311.6,595.2 M1194.5,506.9 1206.5,514.4 1218.5,522.2 1230.5,530.6 1242.5,539.5 1254.5,548.8 1266.5,558.2 1278.5,567.4 1290.5,576.2 1302.5,584.6 1314.5,592.7 M1197.1,506 1209.1,513.4 1221.1,521 1233.1,529.3 1245.1,538.1 1257.1,547.3 1269.1,556.7 1281.1,565.8 1293.1,574.4 1305.1,582.7 1317.1,590.6 M1199.4,505.3 1211.4,512.5 1223.4,520 1235.4,528.2 1247.4,536.9 1259.4,546.1 1271.4,555.4 1283.4,564.4 1295.4,573 1307.5,581.1 1319.5,588.8 M1201.5,504.7 1213.5,511.8 1225.5,519.3 1237.5,527.3 1249.5,536 1261.5,545.2 1273.6,554.4 1285.6,563.4 1297.6,571.8 1309.6,579.8 1321.6,587.5 M1203.4,504.3 1215.4,511.3 1227.4,518.7 1239.4,526.7 1251.5,535.3 1263.5,544.4 1275.5,553.6 1287.5,562.6 1299.5,571 1311.5,578.8 1323.6,586.4 M1205.1,503.9 1217.2,510.8 1229.2,518.2 1241.2,526.1 1253.2,534.8 1265.3,543.9 1277.3,553.1 1289.3,562 1301.3,570.3 1313.4,578.1 1325.4,585.6 M1206.8,503.6 1218.9,510.5 1230.9,517.8 1242.9,525.7 1254.9,534.3 1267,543.4 1279,552.6 1291,561.5 1303,569.8 1315.1,577.5 1327.1,584.9 M1208.5,503.3 1220.5,510.1 1232.5,517.4 1244.5,525.3 1256.6,533.9 1268.6,543.1 1280.6,552.2 1292.7,561.1 1304.7,569.4 1316.7,577.1 1328.8,584.4 M1210.1,503 1222.1,509.8 1234.1,517 1246.2,524.9 1258.2,533.6 1270.2,542.7 1282.3,551.9 1294.3,560.8 1306.3,569.1 1318.4,576.7 1330.4,584 M1211.8,502.7 1223.8,509.4 1235.8,516.6 1247.9,524.6 1259.9,533.2 1271.9,542.4 1284,551.6 1296,560.5 1308.1,568.8 1320.1,576.4 1332.1,583.6 M1213.5,502.2 1225.6,509 1237.6,516.2 1249.6,524.1 1261.7,532.8 1273.7,542 1285.8,551.3 1297.8,560.2 1309.9,568.4 1321.9,576.1 1333.9,583.3 M1215.4,501.6 1227.5,508.4 1239.5,515.6 1251.6,523.5 1263.6,532.3 1275.7,541.5 1287.7,550.8 1299.8,559.8 1311.8,568.1 1323.8,575.7 1335.9,582.9 M1217.5,500.8 1229.6,507.5 1241.6,514.8 1253.7,522.8 1265.7,531.6 1277.8,540.9 1289.8,550.3 1301.9,559.3 1313.9,567.6 1326,575.2 1338,582.4 M1219.8,499.7 1231.9,506.4 1243.9,513.7 1256,521.7 1268.1,530.6 1280.1,540 1292.2,549.5 1304.2,558.6 1316.3,566.9 1328.3,574.6 1340.4,581.8 M1222.4,498.1 1234.5,504.9 1246.5,512.2 1258.6,520.4 1270.6,529.4 1282.7,538.9 1294.8,548.5 1306.8,557.7 1318.9,566.1 1330.9,573.7 1343,580.9 M1225.2,496.2 1237.3,503 1249.3,510.4 1261.4,518.7 1273.5,527.8 1285.5,537.4 1297.6,547.2 1309.7,556.4 1321.7,564.9 1333.8,572.6 1345.9,579.8 M1228.3,493.9 1240.4,500.8 1252.5,508.3 1264.5,516.6 1276.6,525.8 1288.7,535.7 1300.8,545.5 1312.8,554.9 1324.9,563.5 1337,571.2 1349,578.5 M1231.7,491.5 1243.8,498.4 1255.8,505.9 1267.9,514.4 1280,523.7 1292.1,533.7 1304.2,543.7 1316.3,553.2 1328.3,561.8 1340.4,569.6 1352.5,576.8 M1235.3,489.1 1247.4,496 1259.5,503.5 1271.6,512 1283.7,521.5 1295.8,531.5 1307.9,541.7 1320,551.2 1332.1,559.9 1344.1,567.7 1356.2,574.9 M1239.3,486.8 1251.4,493.7 1263.5,501.2 1275.6,509.7 1287.6,519.2 1299.7,529.4 1311.8,539.6 1323.9,549.2 1336,557.9 1348.1,565.6 1360.2,572.8 M1243.4,484.5 1255.5,491.4 1267.6,498.9 1279.7,507.4 1291.8,517 1304,527.2 1316.1,537.5 1328.2,547.1 1340.3,555.8 1352.4,563.5 1364.5,570.5 M1247.8,482.4 1259.9,489.1 1272,496.5 1284.1,505.1 1296.3,514.7 1308.4,525 1320.5,535.3 1332.6,545 1344.7,553.6 1356.9,561.2 1369,568.1 M1252.4,480.2 1264.5,486.8 1276.6,494.2 1288.7,502.7 1300.9,512.3 1313,522.7 1325.1,533.1 1337.3,542.8 1349.4,551.4 1361.5,558.8 1373.6,565.6 M1257.1,477.9 1269.2,484.5 1281.3,491.8 1293.5,500.3 1305.6,509.9 1317.7,520.4 1329.9,530.8 1342,540.5 1354.2,549 1366.3,556.4 1378.4,563.1 M1261.9,475.6 1274,482.1 1286.2,489.3 1298.3,497.8 1310.5,507.5 1322.6,518 1334.7,528.4 1346.9,538.2 1359,546.7 1371.2,553.9 1383.3,560.4 M1266.7,473.3 1278.9,479.7 1291,486.9 1303.2,495.3 1315.3,505 1327.5,515.5 1339.7,526.1 1351.8,535.8 1364,544.2 1376.1,551.4 1388.3,557.8 M1150.2,525.5 1161.9,520.6 1173.5,515.7 1185.2,510.7 1196.8,506.1 1208.5,503.3 1220.1,499.5 1231.8,491.5 1243.4,484.5 1255,478.9 1266.7,473.3 M1156.9,530.6 1168.6,525.6 1180.3,520.5 1191.9,515.3 1203.6,510.3 1215.3,507.2 1226.9,503.3 1238.6,495.4 1250.3,488.4 1261.9,482.6 1273.6,476.9 M1163.6,535.7 1175.3,530.5 1186.9,525.2 1198.6,519.8 1210.3,514.4 1222,511 1233.7,507.1 1245.3,499.3 1257,492.3 1268.7,486.3 1280.4,480.5 M1170,540.7 1181.7,535.3 1193.4,529.9 1205.1,524.2 1216.8,518.5 1228.5,514.9 1240.2,511 1251.9,503.3 1263.6,496.3 1275.2,490.2 1286.9,484.3 M1176.1,545.4 1187.9,539.9 1199.6,534.4 1211.3,528.6 1223,522.6 1234.7,518.8 1246.4,514.9 1258.1,507.3 1269.8,500.3 1281.5,494.3 1293.2,488.3 M1181.9,549.9 1193.7,544.4 1205.4,538.8 1217.1,532.9 1228.8,526.6 1240.5,522.6 1252.2,518.8 1264,511.4 1275.7,504.4 1287.4,498.3 1299.1,492.3 M1187.3,554.1 1199.1,548.6 1210.8,543 1222.5,536.9 1234.3,530.4 1246,526.3 1257.7,522.7 1269.5,515.4 1281.2,508.5 1292.9,502.4 1304.7,496.4 M1192.4,558 1204.1,552.5 1215.9,546.9 1227.6,540.8 1239.3,534.1 1251.1,529.9 1262.8,526.4 1274.6,519.3 1286.3,512.5 1298,506.4 1309.8,500.5 M1197.1,561.7 1208.8,556.2 1220.6,550.6 1232.3,544.5 1244.1,537.7 1255.8,533.4 1267.6,529.9 1279.3,523.1 1291.1,516.3 1302.8,510.3 1314.6,504.4 M1201.4,565.2 1213.2,559.7 1225,554.1 1236.7,547.9 1248.5,541 1260.3,536.7 1272,533.4 1283.8,526.7 1295.5,520.1 1307.3,514.1 1319.1,508.2 M1205.6,568.6 1217.4,563.1 1229.2,557.5 1240.9,551.3 1252.7,544.3 1264.5,539.9 1276.3,536.7 1288,530.2 1299.8,523.7 1311.6,517.8 1323.3,511.9 M1209.7,571.9 1221.5,566.4 1233.3,560.8 1245,554.6 1256.8,547.5 1268.6,543.1 1280.4,539.9 1292.2,533.6 1303.9,527.2 1315.7,521.4 1327.5,515.5 M1213.8,575.1 1225.6,569.7 1237.4,564.2 1249.1,557.9 1260.9,550.7 1272.7,546.2 1284.5,543.2 1296.3,537.1 1308.1,530.8 1319.9,525 1331.7,519.2 M1218,578.6 1229.8,573.1 1241.6,567.6 1253.4,561.3 1265.2,554 1276.9,549.4 1288.7,546.5 1300.5,540.6 1312.3,534.4 1324.1,528.6 1335.9,522.9 M1222.3,582.1 1234.2,576.7 1246,571.2 1257.8,564.9 1269.6,557.4 1281.4,552.8 1293.2,550 1305,544.2 1316.8,538.1 1328.6,532.4 1340.4,526.7 M1227,586 1238.8,580.6 1250.7,575.1 1262.5,568.7 1274.3,561 1286.1,556.3 1297.9,553.6 1309.8,548 1321.6,542 1333.4,536.3 1345.2,530.6 M1232.1,590.2 1243.9,584.7 1255.7,579.2 1267.5,572.7 1279.4,564.9 1291.2,560.1 1303,557.4 1314.9,552 1326.7,546 1338.5,540.3 1350.3,534.7 M1237.5,594.7 1249.3,589.2 1261.1,583.6 1273,577 1284.8,568.9 1296.7,563.9 1308.5,561.4 1320.4,556.1 1332.2,550.2 1344,544.5 1355.9,538.8 M1243.3,599.5 1255.1,593.9 1267,588.2 1278.8,581.5 1290.7,573.1 1302.5,568 1314.4,565.4 1326.2,560.3 1338.1,554.3 1349.9,548.6 1361.8,542.8 M1249.4,604.7 1261.3,599 1273.1,593.1 1285,586.1 1296.9,577.4 1308.7,572 1320.6,569.5 1332.5,564.4 1344.3,558.5 1356.2,552.6 1368.1,546.8 M1255.8,610.1 1267.7,604.2 1279.6,598.2 1291.5,591 1303.3,581.9 1315.2,576.2 1327.1,573.6 1339,568.6 1350.9,562.6 1362.7,556.6 1374.6,550.6 M1262.5,615.8 1274.4,609.6 1286.2,603.4 1298.1,595.9 1310,586.3 1321.9,580.3 1333.8,577.6 1345.7,572.7 1357.6,566.6 1369.5,560.4 1381.4,554.2 M1269.2,621.5 1281.1,615.1 1293,608.6 1304.9,600.8 1316.8,590.8 1328.8,584.4 1340.7,581.7 1352.6,576.8 1364.5,570.5 1376.4,564.2 1388.3,557.8" fill="none" stroke="#141414" stroke-width="0.95"/></g><path d="M1210.8,522.4 1213.1,524.2 1215,526.2 1216.4,528.4 1217.4,530.6 1217.8,532.8 1217.7,535.1 1217.1,537.2 1216,539.2 1214.4,540.9 1212.3,542.4 1209.9,543.6 1207.1,544.5 1204,545.1 1200.7,545.3 1197.3,545.2 1193.8,544.7 1190.3,543.9 1186.9,542.8 1183.7,541.5 1180.7,539.9 1178,538.1 1175.7,536.1 1173.8,534 1172.4,531.9 1171.5,529.7 1171.1,527.6 1171.1,525.6 1171.8,523.7 1172.9,521.9 1174.5,520.4 1176.5,519.1 1178.9,518 1181.7,517.2 1184.8,516.7 1188.1,516.5 1191.5,516.5 1195,516.9 1198.5,517.5 1201.9,518.3 1205.1,519.5 1208.1,520.8 1210.8,522.4 M1234.7,514 1235.7,515.2 1236,516.3 1235.7,517.3 1234.8,518.1 1233.3,518.7 1231.3,518.9 1229,518.9 1226.6,518.6 1224.1,518.1 1221.8,517.3 1219.9,516.3 1218.3,515.1 1217.4,513.9 1217.1,512.7 1217.4,511.7 1218.3,511 1219.8,510.5 1221.7,510.3 1224,510.3 1226.5,510.6 1228.9,511.1 M1245.8,504.4 1247.4,505.8 1248.4,507.4 1248.8,509.1 1248.4,510.9 1247.4,512.5 1245.8,513.7 1243.6,514.5 1241.2,514.8 1238.5,514.7 1235.9,514.2 M1229.7,511.1 1228.6,509.8 1228.3,508.6 1228.6,507.4 1229.7,506.1 1231.3,505 1233.4,504 1235.9,503.2 1238.5,502.9 1241.2,502.9 1243.6,503.5 1245.8,504.4 M1262.8,496.7 1264.5,498.7 1265.8,500.6 1266.6,502.5 1267,504.1 1266.8,505.5 1266.1,506.3 1264.8,506.8 1263.2,506.7 1261.3,506.1 1259.1,505 1256.9,503.6 1254.7,501.9 1252.7,500 1251,498.1 1249.7,496.2 1248.8,494.4 1248.5,492.9 1248.7,491.7 1249.4,490.9 1250.6,490.5 1252.2,490.6 1254.2,491.1 1256.3,492 1258.6,493.3 1260.7,494.9 1262.8,496.7 M1309.8,508 1310.8,509 1311.4,510.1 1311.7,511.2 1311.5,512.3 1310.9,513.1 1310,513.8 1308.7,514.2 1307.3,514.4 1305.7,514.2 1304.1,513.8 1302.6,513.1 1301.4,512.3 1300.4,511.2 1299.7,510.2 1299.5,509.1 1299.7,508.1 1300.3,507.2 1301.2,506.5 1302.5,506.1 1303.9,505.9 1305.5,506 1307.1,506.4 1308.5,507.1 1309.8,508 M1287.4,514.9 1289.5,517.1 1290.9,519.4 1291.4,521.9 1291,524.2 1289.7,526.2 1287.7,527.9 1285,529 1281.8,529.6 1278.4,529.5 1275,528.9 1271.8,527.6 1269.1,525.9 1266.9,523.9 1265.6,521.6 1265.1,519.2 1265.5,516.9 1266.8,514.7 1268.8,513 1271.5,511.7 1274.6,511.1 1278,511.1 1281.4,511.8 1284.6,513.1 1287.4,514.9 M1319.3,541 1320.6,543.2 1321.5,545.4 1322,547.6 1321.9,549.7 1321.3,551.8 1320.3,553.7 1318.8,555.4 1316.9,557 1314.6,558.3 1312,559.3 1309,559.9 1305.9,560.1 1302.5,559.9 1299.1,559.4 1295.6,558.6 1292.1,557.5 1288.8,556.2 1285.6,554.8 1282.6,553.2 1279.9,551.5 1277.6,549.7 1275.6,547.8 1274,546 1272.9,544.1 1272.3,542.4 1272.1,540.7 1272.4,539.1 1273.2,537.5 1274.4,535.9 1276.1,534.4 1278.2,532.8 1280.7,531.4 1283.5,530.3 1286.5,529.4 1289.8,528.8 1293.2,528.7 1296.6,528.9 1300.1,529.5 1303.5,530.4 1306.8,531.7 1309.9,533.2 1312.8,534.9 1315.3,536.8 1317.5,538.9 1319.3,541 M1260.8,542.8 1263,544.9 1264.4,547.1 1264.9,549.3 1264.4,551.5 1263.1,553.5 1261,555.3 1258.2,556.6 1254.9,557.3 1251.4,557.3 1247.8,556.6 1244.5,555.2 1241.7,553.4 1239.5,551.2 1238.1,548.8 1237.6,546.3 1238.1,543.9 1239.4,541.8 1241.5,540.1 1244.3,538.9 1247.6,538.5 1251.1,538.7 1254.6,539.6 1257.9,541 1260.8,542.8 M1335.3,548.4 1336.1,549.1 1336.6,549.9 1336.8,550.7 1336.7,551.5 1336.2,552.1 1335.4,552.6 1334.4,553 1333.2,553.1 1332,553.1 1330.7,552.8 1329.5,552.4 1328.5,551.8 1327.7,551.1 1327.2,550.3 1327,549.4 1327.2,548.7 1327.6,548 1328.4,547.5 1329.4,547.1 1330.6,547 1331.9,547.1 1333.1,547.4 1334.3,547.8 1335.3,548.4 M1339.5,561.7 1341.8,563.5 1343.4,565.4 1344.2,567.5 1344.1,569.5 1343.2,571.4 1341.5,573.1 1339.1,574.4 1336.1,575.1 1332.7,575.4 1329.1,575.1 1325.4,574.3 1322,573.2 1318.8,571.7 1316.2,570.1 1314.3,568.3 1313.1,566.5 1312.8,564.7 1313.3,562.9 1314.6,561.3 1316.6,559.8 1319.3,558.7 1322.5,558 1326.1,557.8 1329.7,558.1 1333.3,558.9 1336.6,560.1 1339.5,561.7 M1240.6,564.9 1241.5,565.7 1242,566.6 1242.2,567.5 1242,568.4 1241.5,569.1 1240.7,569.7 1239.6,570 1238.4,570.1 1237,570 1235.7,569.6 1234.4,569.1 1233.3,568.4 1232.5,567.5 1232,566.6 1231.8,565.7 1232,564.9 1232.5,564.2 1233.3,563.6 1234.4,563.3 1235.6,563.1 1237,563.3 1238.3,563.6 1239.6,564.1 1240.6,564.9 M1295.4,576.9 1297,578.3 1298,580.1 1298.4,581.9 1298,583.9 1297,585.7 1295.4,587.4 1293.3,588.6 1290.9,589.3 1288.3,589.5 1285.7,589.2 1283.2,588.3 1281.1,587.1 1279.5,585.5 1278.5,583.7 1278.1,581.8 1278.5,580 1279.5,578.3 1281,576.8 1283.1,575.7 1285.6,575 1288.2,574.7 1290.8,575 1293.3,575.7 1295.4,576.9 M1315.7,578.9 1316.5,579.6 1317,580.3 1317.2,581 1317.1,581.7 1316.5,582.3 1315.7,582.9 1314.6,583.3 1313.4,583.6 1312,583.7 1310.7,583.6 1309.4,583.3 1308.3,582.7 1307.5,582 1306.9,581.2 1306.7,580.3 1306.9,579.4 1307.4,578.7 1308.3,578.1 1309.3,577.7 1310.6,577.6 1312,577.7 1313.3,577.9 1314.6,578.4 1315.7,578.9 M1271,589.4 1271.9,590.3 1272.4,591.2 1272.6,592.1 1272.4,593 1271.9,593.8 1271,594.4 1269.9,594.8 1268.6,594.9 1267.2,594.8 1265.8,594.5 1264.5,593.9 1263.4,593.2 1262.6,592.3 1262,591.4 1261.8,590.5 1262,589.6 1262.5,588.9 1263.4,588.3 1264.5,587.9 1265.8,587.8 1267.2,587.8 1268.6,588.2 1269.9,588.7 1271,589.4" fill="none" stroke="#111" stroke-width="1.1"/><path d="M1150.2,525.5 1153.1,524.3 1156,523.1 1158.9,521.8 1161.9,520.6 1164.8,519.4 1167.7,518.2 1170.6,516.9 1173.5,515.7 1176.4,514.5 1179.3,513.2 1182.2,512 1185.2,510.7 1188.1,509.5 1191,508.3 1193.9,507.2 1196.8,506.1 1199.7,505.2 1202.6,504.5 1205.5,503.8 1208.5,503.3 1211.4,502.8 1214.3,502 1217.2,500.9 1220.1,499.5 1223,497.7 1225.9,495.7 1228.8,493.6 1231.8,491.5 1234.7,489.5 1237.6,487.7 1240.5,486.1 1243.4,484.5 1246.3,483.1 1249.2,481.7 1252.1,480.3 1255,478.9 1258,477.5 1260.9,476.1 1263.8,474.7 1266.7,473.3 1269.7,474.9 1272.8,476.4 1275.8,478 1278.9,479.7 1281.9,481.4 1284.9,483.1 1288,485 1291,486.9 1294.1,488.8 1297.1,490.9 1300.1,493.1 1303.2,495.3 1306.2,497.6 1309.3,500 1312.3,502.5 1315.3,505 1318.4,507.6 1321.4,510.2 1324.5,512.9 1327.5,515.5 1330.5,518.2 1333.6,520.9 1336.6,523.5 1339.7,526.1 1342.7,528.6 1345.7,531.1 1348.8,533.5 1351.8,535.8 1354.9,538 1357.9,540.2 1360.9,542.3 1364,544.2 1367,546.1 1370.1,548 1373.1,549.7 1376.1,551.4 1379.2,553.1 1382.2,554.7 1385.3,556.2 1388.3,557.8 1385.3,559.4 1382.3,561 1379.4,562.6 1376.4,564.2 1373.4,565.8 1370.4,567.4 1367.5,568.9 1364.5,570.5 1361.5,572.1 1358.5,573.7 1355.5,575.2 1352.6,576.8 1349.6,578.2 1346.6,579.5 1343.6,580.7 1340.7,581.7 1337.7,582.5 1334.7,583.1 1331.7,583.7 1328.8,584.4 1325.8,585.4 1322.8,586.8 1319.8,588.6 1316.8,590.8 1313.9,593.3 1310.9,595.9 1307.9,598.4 1304.9,600.8 1302,603 1299,605 1296,606.9 1293,608.6 1290,610.3 1287.1,611.9 1284.1,613.5 1281.1,615.1 1278.1,616.7 1275.2,618.3 1272.2,619.9 1269.2,621.5 1266.2,619 1263.2,616.4 1260.3,613.9 1257.3,611.4 1254.3,608.9 1251.3,606.4 1248.4,603.8 1245.4,601.3 1242.4,598.8 1239.5,596.3 1236.5,593.8 1233.5,591.4 1230.5,588.9 1227.5,586.4 1224.6,584 1221.6,581.5 1218.6,579.1 1215.7,576.7 1212.7,574.3 1209.7,571.9 1206.7,569.5 1203.8,567.1 1200.8,564.7 1197.8,562.3 1194.8,560 1191.9,557.6 1188.9,555.3 1185.9,553 1182.9,550.6 1180,548.3 1177,546 1174,543.7 1171,541.4 1168,539.2 1165.1,536.9 1162.1,534.6 1159.1,532.3 1156.2,530 1153.2,527.8Z" fill="none" stroke="#111" stroke-width="1.6"/><path d="M984.5,600.3 1001,593.5 1014.9,605 998.2,612.2ZM998.2,612.2 1014.9,605 1028.8,616.8 1012,624.2ZM1012,624.2 1028.8,616.8 1042.7,629 1025.7,636.4ZM1025.7,636.4 1042.7,629 1056.6,641.6 1039.5,648.9ZM1039.5,648.9 1056.6,641.6 1070.5,654.4 1053.2,661.5ZM1053.2,661.5 1070.5,654.4 1084.4,667.3 1066.9,674.4ZM1066.9,674.4 1084.4,667.3 1098.3,680 1080.7,687.5ZM1080.7,687.5 1098.3,680 1112.2,692.6 1094.4,700.7ZM1001,593.5 1017.4,586.6 1031.5,597.7 1014.9,605ZM1014.9,605 1031.5,597.7 1045.6,609.2 1028.8,616.8ZM1028.8,616.8 1045.6,609.2 1059.6,621.4 1042.7,629ZM1042.7,629 1059.6,621.4 1073.7,634.1 1056.6,641.6ZM1056.6,641.6 1073.7,634.1 1087.7,647 1070.5,654.4ZM1070.5,654.4 1087.7,647 1101.8,659.7 1084.4,667.3ZM1084.4,667.3 1101.8,659.7 1115.9,672 1098.3,680ZM1017.4,586.6 1033.9,579.9 1048.1,590.1 1031.5,597.7ZM1090.8,625 1107.9,618.5 1122.3,630.8 1105,637.6ZM1105,637.6 1122.3,630.8 1136.7,642.5 1119.2,649.7ZM1119.2,649.7 1136.7,642.5 1151.1,653.2 1133.5,661.2ZM1133.5,661.2 1151.1,653.2 1165.5,663.3 1147.7,672.2ZM1154.1,638.6 1171.6,631.2 1186.3,642.3 1168.7,649.5ZM1083.3,558.3 1099.7,550.2 1114.6,559.7 1098,568.1ZM1156.8,618.6 1174.1,611 1189,623.7 1171.6,631.2ZM1171.6,631.2 1189,623.7 1203.9,634.7 1186.3,642.3ZM1186.3,642.3 1203.9,634.7 1218.7,644.3 1201,652.4ZM1099.7,550.2 1116.2,542.5 1131.2,551.7 1114.6,559.7ZM1174.1,611 1191.4,603.6 1206.4,616.4 1189,623.7ZM1189,623.7 1206.4,616.4 1221.5,627.1 1203.9,634.7Z" fill="#a6a8ad" stroke="#a6a8ad" stroke-width="0.8"/><path d="M1098.3,680 1115.9,672 1129.9,684 1112.2,692.6ZM1031.5,597.7 1048.1,590.1 1062.3,600.9 1045.6,609.2ZM1139.6,626.5 1156.8,618.6 1171.6,631.2 1154.1,638.6ZM1114.6,559.7 1131.2,551.7 1146.3,562.4 1129.5,570.5Z" fill="#acaeb3" stroke="#acaeb3" stroke-width="0.8"/><path d="M1045.6,609.2 1062.3,600.9 1076.6,612.6 1059.6,621.4ZM1127.4,591.3 1144.4,583.1 1159.2,597 1142.1,604.9ZM1144.4,583.1 1161.3,575.2 1176.3,589.4 1159.2,597Z" fill="#bec0c5" stroke="#bec0c5" stroke-width="0.8"/><path d="M1059.6,621.4 1076.6,612.6 1090.8,625 1073.7,634.1ZM1125,613.6 1142.1,604.9 1156.8,618.6 1139.6,626.5Z" fill="#c4c6cb" stroke="#c4c6cb" stroke-width="0.8"/><path d="M1073.7,634.1 1090.8,625 1105,637.6 1087.7,647Z" fill="#caccd1" stroke="#caccd1" stroke-width="0.8"/><path d="M1087.7,647 1105,637.6 1119.2,649.7 1101.8,659.7ZM1110.5,600.8 1127.4,591.3 1142.1,604.9 1125,613.6Z" fill="#d0d2d7" stroke="#d0d2d7" stroke-width="0.8"/><path d="M1101.8,659.7 1119.2,649.7 1133.5,661.2 1115.9,672Z" fill="#d6d8dd" stroke="#d6d8dd" stroke-width="0.8"/><path d="M1115.9,672 1133.5,661.2 1147.7,672.2 1129.9,684Z" fill="#e2e4e9" stroke="#e2e4e9" stroke-width="0.8"/><path d="M1033.9,579.9 1050.3,575.3 1064.7,584.8 1048.1,590.1ZM1048.1,590.1 1064.7,584.8 1079.1,595 1062.3,600.9ZM1050.3,575.3 1066.8,569 1081.4,578.5 1064.7,584.8ZM1064.7,584.8 1081.4,578.5 1095.9,589 1079.1,595ZM1079.1,595 1095.9,589 1110.5,600.8 1093.5,606.3ZM1093.5,606.3 1110.5,600.8 1125,613.6 1107.9,618.5ZM1107.9,618.5 1125,613.6 1139.6,626.5 1122.3,630.8Z" fill="#9a9ca1" stroke="#9a9ca1" stroke-width="0.8"/><path d="M1062.3,600.9 1079.1,595 1093.5,606.3 1076.6,612.6ZM1076.6,612.6 1093.5,606.3 1107.9,618.5 1090.8,625ZM1168.7,649.5 1186.3,642.3 1201,652.4 1183.2,659.5ZM1203.9,634.7 1221.5,627.1 1236.5,636.3 1218.7,644.3Z" fill="#a0a2a7" stroke="#a0a2a7" stroke-width="0.8"/><path d="M1122.3,630.8 1139.6,626.5 1154.1,638.6 1136.7,642.5Z" fill="#94969b" stroke="#94969b" stroke-width="0.8"/><path d="M1136.7,642.5 1154.1,638.6 1168.7,649.5 1151.1,653.2ZM1151.1,653.2 1168.7,649.5 1183.2,659.5 1165.5,663.3Z" fill="#8e9095" stroke="#8e9095" stroke-width="0.8"/><path d="M1066.8,569 1083.3,558.3 1098,568.1 1081.4,578.5ZM1081.4,578.5 1098,568.1 1112.7,578.9 1095.9,589ZM1095.9,589 1112.7,578.9 1127.4,591.3 1110.5,600.8Z" fill="#dcdee3" stroke="#dcdee3" stroke-width="0.8"/><path d="M1098,568.1 1114.6,559.7 1129.5,570.5 1112.7,578.9ZM1142.1,604.9 1159.2,597 1174.1,611 1156.8,618.6ZM1159.2,597 1176.3,589.4 1191.4,603.6 1174.1,611Z" fill="#b2b4b9" stroke="#b2b4b9" stroke-width="0.8"/><path d="M1112.7,578.9 1129.5,570.5 1144.4,583.1 1127.4,591.3ZM1129.5,570.5 1146.3,562.4 1161.3,575.2 1144.4,583.1Z" fill="#b8babf" stroke="#b8babf" stroke-width="0.8"/><path d="M984.5,600.3 998.2,612.2 1012,624.2 1025.7,636.4 1039.5,648.9 1053.2,661.5 1066.9,674.4 1080.7,687.5 1094.4,700.7 M990.4,597.9 1004.2,609.6 1018,621.6 1031.8,633.8 1045.6,646.3 1059.4,659 1073.2,671.9 1087,684.8 1100.8,697.8 M996.3,595.4 1010.1,607.1 1024,618.9 1037.8,631.1 1051.7,643.7 1065.5,656.5 1079.4,669.3 1093.2,682.2 1107.1,694.9 M1002,593.1 1015.9,604.6 1029.8,616.4 1043.7,628.6 1057.6,641.2 1071.5,654 1085.4,666.8 1099.4,679.5 1113.3,692.1 M1007.5,590.8 1021.5,602.1 1035.4,613.8 1049.4,626.1 1063.4,638.7 1077.3,651.6 1091.3,664.4 1105.3,677 1119.2,689.4 M1012.8,588.6 1026.8,599.8 1040.8,611.4 1054.9,623.6 1068.9,636.3 1082.9,649.2 1096.9,662 1110.9,674.4 1124.9,686.6 M1017.8,586.5 1031.9,597.5 1045.9,609 1060,621.2 1074.1,633.9 1088.1,646.8 1102.2,659.5 1116.3,671.8 1130.3,683.8 M1022.5,584.5 1036.6,595.4 1050.8,606.7 1064.9,618.8 1079,631.5 1093.1,644.3 1107.2,656.9 1121.3,669 1135.4,680.8 M1026.9,582.7 1041.1,593.3 1055.2,604.5 1069.4,616.5 1083.5,629 1097.7,641.8 1111.9,654.3 1126,666.2 1140.2,677.7 M1031,581 1045.2,591.4 1059.4,602.4 1073.6,614.2 1087.8,626.7 1102,639.3 1116.2,651.6 1130.4,663.3 1144.6,674.5 M1034.8,579.6 1049,589.7 1063.2,600.5 1077.5,612.2 1091.7,624.5 1105.9,637.1 1120.2,649.2 1134.4,660.6 1148.6,671.5 M1038.2,578.3 1052.5,588.3 1066.8,598.9 1081,610.4 1095.3,622.7 1109.6,635.1 1123.8,647.1 1138.1,658.3 1152.4,669 M1041.5,577.3 1055.8,587.1 1070.1,597.5 1084.4,609 1098.7,621.2 1113,633.5 1127.3,645.4 1141.6,656.4 1155.9,666.9 M1044.6,576.5 1058.9,586.2 1073.2,596.5 1087.5,607.9 1101.9,620 1116.2,632.3 1130.5,644.1 1144.9,655 1159.2,665.3 M1047.5,575.9 1061.8,585.4 1076.2,595.7 1090.6,607 1104.9,619.2 1119.3,631.4 1133.6,643.1 1148,654 1162.4,664.1 M1050.3,575.3 1064.7,584.8 1079.1,595 1093.5,606.3 1107.9,618.5 1122.3,630.8 1136.7,642.5 1151.1,653.2 1165.5,663.3 M1053.2,574.7 1067.6,584.1 1082,594.3 1096.5,605.7 1110.9,617.9 1125.3,630.2 1139.7,641.9 1154.1,652.6 1168.5,662.6 M1056.1,574 1070.6,583.3 1085,593.5 1099.5,605 1113.9,617.3 1128.4,629.7 1142.8,641.4 1157.3,652.1 1171.7,662.1 M1059.2,572.9 1073.7,582.3 1088.2,592.6 1102.6,604.1 1117.1,616.5 1131.6,629 1146.1,640.8 1160.5,651.6 1175,661.5 M1062.5,571.5 1077,580.9 1091.5,591.2 1106,602.9 1120.5,615.4 1135,628.1 1149.5,640 1164,650.8 1178.5,660.7 M1065.9,569.6 1080.5,579 1095,589.5 1109.6,601.3 1124.1,614 1138.7,626.9 1153.2,638.9 1167.7,649.8 1182.3,659.7 M1069.7,567.1 1084.3,576.7 1098.9,587.2 1113.4,599.2 1128,612.2 1142.6,625.3 1157.2,637.5 1171.8,648.4 1186.3,658.4 M1073.8,564.3 1088.4,574 1103,584.7 1117.6,596.8 1132.3,610 1146.9,623.3 1161.5,635.7 1176.1,646.7 1190.7,656.8 M1078.2,561.4 1092.8,571.1 1107.5,581.9 1122.2,594.2 1136.8,607.6 1151.5,621.1 1166.1,633.6 1180.8,644.7 1195.5,654.8 M1082.9,558.5 1097.6,568.3 1112.3,579.1 1127,591.6 1141.7,605.1 1156.4,618.8 1171.1,631.4 1185.8,642.5 1200.6,652.6 M1087.9,555.8 1102.7,565.5 1117.4,576.4 1132.2,588.9 1146.9,602.6 1161.7,616.4 1176.4,629.1 1191.2,640.2 1206,650.1 M1093.2,553.2 1108,562.9 1122.8,573.7 1137.6,586.3 1152.4,600.1 1167.2,614 1182.1,626.7 1196.9,637.7 1211.7,647.6 M1098.7,550.6 1113.6,560.2 1128.4,571 1143.3,583.6 1158.2,597.5 1173,611.5 1187.9,624.2 1202.8,635.1 1217.6,644.8 M1104.4,548 1119.4,557.4 1134.3,568.2 1149.2,580.8 1164.1,594.9 1179,608.9 1194,621.6 1208.9,632.5 1223.8,642.1 M1110.3,545.3 1125.3,554.6 1140.2,565.3 1155.2,578 1170.2,592.1 1185.2,606.3 1200.2,619 1215.1,629.8 1230.1,639.2 M1116.2,542.5 1131.2,551.7 1146.3,562.4 1161.3,575.2 1176.3,589.4 1191.4,603.6 1206.4,616.4 1221.5,627.1 1236.5,636.3 M984.5,600.3 1001,593.5 1017.4,586.6 1033.9,579.9 1050.3,575.3 1066.8,569 1083.3,558.3 1099.7,550.2 1116.2,542.5 M991.9,606.7 1008.4,599.7 1025,592.6 1041.5,585.3 1058.1,580.3 1074.6,574.1 1091.2,563.5 1107.7,555.2 1124.3,547.4 M999.1,613 1015.7,605.7 1032.4,598.4 1049,590.7 1065.6,585.4 1082.3,579.1 1098.9,568.7 1115.5,560.3 1132.2,552.3 M1005.9,618.9 1022.7,611.6 1039.4,604.1 1056.1,596.1 1072.8,590.3 1089.5,584.2 1106.2,573.9 1123,565.5 1139.7,557.5 M1012.3,624.5 1029.1,617.1 1045.9,609.5 1062.7,601.2 1079.5,595.2 1096.3,589.3 1113.1,579.2 1129.8,570.8 1146.6,562.7 M1018.1,629.6 1035,622.2 1051.8,614.6 1068.7,606 1085.5,599.9 1102.4,594.1 1119.3,584.3 1136.1,575.9 1153,567.9 M1023.3,634.3 1040.2,626.8 1057.1,619.2 1074.1,610.5 1091,604.2 1107.9,598.6 1124.8,589 1141.7,580.8 1158.7,572.8 M1027.9,638.4 1044.9,631 1061.9,623.4 1078.8,614.6 1095.8,608.2 1112.8,602.8 1129.8,593.5 1146.8,585.3 1163.7,577.4 M1032.1,642.1 1049.1,634.8 1066.1,627.2 1083.1,618.3 1100.2,611.9 1117.2,606.6 1134.2,597.5 1151.2,589.5 1168.3,581.6 M1035.8,645.6 1052.9,638.3 1070,630.7 1087.1,621.7 1104.1,615.2 1121.2,610.2 1138.3,601.3 1155.3,593.3 1172.4,585.6 M1039.5,648.9 1056.6,641.6 1073.7,634.1 1090.8,625 1107.9,618.5 1125,613.6 1142.1,604.9 1159.2,597 1176.3,589.4 M1043.1,652.2 1060.2,645 1077.4,637.5 1094.5,628.3 1111.7,621.7 1128.8,617 1146,608.6 1163.1,600.8 1180.3,593.2 M1046.8,655.6 1064,648.5 1081.2,641 1098.4,631.8 1115.6,625.1 1132.8,620.6 1150,612.3 1167.2,604.6 1184.4,597.2 M1051,659.5 1068.2,652.4 1085.5,644.9 1102.7,635.6 1120,628.8 1137.2,624.5 1154.5,616.4 1171.7,608.8 1189,601.4 M1055.6,663.8 1072.9,656.7 1090.2,649.2 1107.5,639.8 1124.8,632.9 1142.1,628.7 1159.4,620.9 1176.7,613.4 1194,606 M1060.8,668.7 1078.2,661.6 1095.5,654.1 1112.9,644.4 1130.3,637.4 1147.6,633.4 1165,625.8 1182.4,618.3 1199.7,610.9 M1066.6,674.1 1084,667 1101.5,659.4 1118.9,649.4 1136.3,642.2 1153.8,638.3 1171.2,630.9 1188.6,623.5 1206.1,616.1 M1073,680.2 1090.5,672.9 1108,665.1 1125.5,654.9 1143,647.3 1160.5,643.5 1178,636.3 1195.5,628.8 1213,621.3 M1079.8,686.7 1097.4,679.2 1115,671.3 1132.6,660.5 1150.2,652.6 1167.8,648.8 1185.4,641.7 1202.9,634 1220.5,626.5 M1087,693.6 1104.7,685.9 1122.4,677.6 1140,666.3 1157.7,657.9 1175.4,654.2 1193.1,647 1210.7,639.2 1228.4,631.4 M1094.4,700.7 1112.2,692.6 1129.9,684 1147.7,672.2 1165.5,663.3 1183.2,659.5 1201,652.4 1218.7,644.3 1236.5,636.3" fill="none" stroke="#151515" stroke-width="0.9"/><path d="M984.5,600.3 987.8,598.9 991.1,597.6 994.4,596.2 997.7,594.9 1001,593.5 1004.3,592.1 1007.5,590.8 1010.8,589.4 1014.1,588 1017.4,586.6 1020.7,585.2 1024,583.9 1027.3,582.5 1030.6,581.2 1033.9,579.9 1037.2,578.7 1040.5,577.6 1043.8,576.7 1047.1,576 1050.3,575.3 1053.6,574.6 1056.9,573.7 1060.2,572.5 1063.5,570.9 1066.8,569 1070.1,566.8 1073.4,564.6 1076.7,562.3 1080,560.3 1083.3,558.3 1086.6,556.5 1089.9,554.9 1093.2,553.3 1096.4,551.7 1099.7,550.2 1103,548.6 1106.3,547.1 1109.6,545.6 1112.9,544 1116.2,542.5 1119.2,544.3 1122.2,546.1 1125.2,547.9 1128.2,549.8 1131.2,551.7 1134.2,553.7 1137.3,555.8 1140.3,557.9 1143.3,560.1 1146.3,562.4 1149.3,564.8 1152.3,567.3 1155.3,569.8 1158.3,572.5 1161.3,575.2 1164.3,578 1167.3,580.8 1170.3,583.6 1173.3,586.5 1176.3,589.4 1179.4,592.3 1182.4,595.2 1185.4,598 1188.4,600.8 1191.4,603.6 1194.4,606.3 1197.4,609 1200.4,611.5 1203.4,614 1206.4,616.4 1209.4,618.7 1212.4,620.9 1215.4,623 1218.5,625.1 1221.5,627.1 1224.5,629 1227.5,630.9 1230.5,632.7 1233.5,634.5 1236.5,636.3 1232.9,637.9 1229.4,639.5 1225.8,641.1 1222.3,642.7 1218.7,644.3 1215.2,646 1211.6,647.6 1208.1,649.2 1204.5,650.8 1201,652.4 1197.4,653.9 1193.9,655.5 1190.3,656.9 1186.8,658.3 1183.2,659.5 1179.7,660.5 1176.1,661.3 1172.6,661.9 1169,662.6 1165.5,663.3 1161.9,664.3 1158.3,665.7 1154.8,667.5 1151.2,669.7 1147.7,672.2 1144.1,674.8 1140.6,677.4 1137,679.8 1133.5,682 1129.9,684 1126.4,685.9 1122.8,687.7 1119.3,689.4 1115.7,691 1112.2,692.6 1108.6,694.3 1105.1,695.9 1101.5,697.5 1098,699.1 1094.4,700.7 1091.7,698.1 1088.9,695.4 1086.2,692.8 1083.4,690.2 1080.7,687.5 1077.9,684.9 1075.2,682.3 1072.4,679.7 1069.7,677 1066.9,674.4 1064.2,671.8 1061.4,669.2 1058.7,666.7 1055.9,664.1 1053.2,661.5 1050.4,659 1047.7,656.4 1044.9,653.9 1042.2,651.4 1039.5,648.9 1036.7,646.3 1034,643.9 1031.2,641.4 1028.5,638.9 1025.7,636.4 1023,634 1020.2,631.5 1017.5,629.1 1014.7,626.7 1012,624.2 1009.2,621.8 1006.5,619.4 1003.7,617 1001,614.6 998.2,612.2 995.5,609.8 992.7,607.4 990,605.1 987.2,602.7Z" fill="none" stroke="#111" stroke-width="1.3"/><path d="M984.5,600.3 987.2,602.7 990,605.1 992.7,607.4 995.5,609.8 998.2,612.2 1001,614.6 1003.7,617 1006.5,619.4 1009.2,621.8 1012,624.2 1014.7,626.7 1017.5,629.1 1020.2,631.5 1023,634 1025.7,636.4 1028.5,638.9 1031.2,641.4 1034,643.9 1036.7,646.3 1039.5,648.9 1042.2,651.4 1044.9,653.9 1047.7,656.4 1050.4,659 1053.2,661.5 1055.9,664.1 1058.7,666.7 1061.4,669.2 1064.2,671.8 1066.9,674.4 1069.7,677 1072.4,679.7 1075.2,682.3 1077.9,684.9 1080.7,687.5 1083.4,690.2 1086.2,692.8 1088.9,695.4 1091.7,698.1 1094.4,700.7 1098,699.1 1101.5,697.5 1105.1,695.9 1108.6,694.3 1112.2,692.6 1115.7,691 1119.3,689.4 1122.8,687.7 1126.4,685.9 1129.9,684 1133.5,682 1137,679.8 1140.6,677.4 1144.1,674.8 1147.7,672.2 1151.2,669.7 1154.8,667.5 1158.3,665.7 1161.9,664.3 1165.5,663.3 1169,662.6 1172.6,661.9 1176.1,661.3 1179.7,660.5 1183.2,659.5 1186.8,658.3 1190.3,656.9 1193.9,655.5 1197.4,653.9 1201,652.4 1204.5,650.8 1208.1,649.2 1211.6,647.6 1215.2,646 1218.7,644.3 1222.3,642.7 1225.8,641.1 1229.4,639.5 1232.9,637.9 1236.5,636.3 1236.5,640.3 1232.9,641.9 1229.4,643.5 1225.8,645.1 1222.3,646.7 1218.7,648.3 1215.2,650 1211.6,651.6 1208.1,653.2 1204.5,654.8 1201,656.4 1197.4,657.9 1193.9,659.5 1190.3,660.9 1186.8,662.3 1183.2,663.5 1179.7,664.5 1176.1,665.3 1172.6,665.9 1169,666.6 1165.5,667.3 1161.9,668.3 1158.3,669.7 1154.8,671.5 1151.2,673.7 1147.7,676.2 1144.1,678.8 1140.6,681.4 1137,683.8 1133.5,686 1129.9,688 1126.4,689.9 1122.8,691.7 1119.3,693.4 1115.7,695 1112.2,696.6 1108.6,698.3 1105.1,699.9 1101.5,701.5 1098,703.1 1094.4,704.7 1091.7,702.1 1088.9,699.4 1086.2,696.8 1083.4,694.2 1080.7,691.5 1077.9,688.9 1075.2,686.3 1072.4,683.7 1069.7,681 1066.9,678.4 1064.2,675.8 1061.4,673.2 1058.7,670.7 1055.9,668.1 1053.2,665.5 1050.4,663 1047.7,660.4 1044.9,657.9 1042.2,655.4 1039.5,652.9 1036.7,650.3 1034,647.9 1031.2,645.4 1028.5,642.9 1025.7,640.4 1023,638 1020.2,635.5 1017.5,633.1 1014.7,630.7 1012,628.2 1009.2,625.8 1006.5,623.4 1003.7,621 1001,618.6 998.2,616.2 995.5,613.8 992.7,611.4 990,609.1 987.2,606.7 984.5,604.3Z" fill="#5aa9c4" stroke="#111" stroke-width="1.1"/><clipPath id="c34"><path d="M1049.1,587.4 1052.2,590.4 1054.2,593.7 1054.9,597.3 1054.5,600.9 1052.8,604.3 1049.9,607.2 1046.1,609.4 1041.5,611 1036.4,611.8 1031,611.7 1025.5,610.9 1020.3,609.3 1015.7,607.1 1011.8,604.4 1008.8,601.2 1006.9,597.8 1006.2,594.4 1006.6,591.1 1008.3,588 1011.1,585.4 1014.8,583.4 1019.3,581.9 1024.4,581.2 1029.8,581.1 1035.2,581.7 1040.4,583 1045.1,584.9Z"/></clipPath><path d="M1049.1,587.4 1052.2,590.4 1054.2,593.7 1054.9,597.3 1054.5,600.9 1052.8,604.3 1049.9,607.2 1046.1,609.4 1041.5,611 1036.4,611.8 1031,611.7 1025.5,610.9 1020.3,609.3 1015.7,607.1 1011.8,604.4 1008.8,601.2 1006.9,597.8 1006.2,594.4 1006.6,591.1 1008.3,588 1011.1,585.4 1014.8,583.4 1019.3,581.9 1024.4,581.2 1029.8,581.1 1035.2,581.7 1040.4,583 1045.1,584.9Z" fill="#80d4f0"/><path clip-path="url(#c34)" d="M1049.1,587.4L1049.1,595.4M1052.6,590.9L1052.6,598.9M1054.6,594.9L1054.6,602.9M1054.9,599.1L1054.9,607.1M1053.5,603.2L1053.5,611.2M1050.5,606.7L1050.5,614.7M1046.1,609.4L1046.1,617.4M1040.7,611.2L1040.7,619.2M1034.6,611.8L1034.6,619.8M1028.2,611.4L1028.2,619.4M1022,609.9L1022,617.9M1016.4,607.5L1016.4,615.5M1011.8,604.4L1011.8,612.4M1008.4,600.6L1008.4,608.6M1006.5,596.7L1006.5,604.7M1006.3,592.7L1006.3,600.7M1007.6,589L1007.6,597M1010.5,585.8L1010.5,593.8M1014.8,583.4L1014.8,591.4M1020.1,581.8L1020.1,589.8M1026.1,581.1L1026.1,589.1M1032.5,581.3L1032.5,589.3M1038.7,582.5L1038.7,590.5M1044.4,584.5L1044.4,592.5M1049.1,591.4 1052.6,594.9 1054.6,598.9 1054.9,603.1 1053.5,607.2 1050.5,610.7 1046.1,613.4 1040.7,615.2 1034.6,615.8 1028.2,615.4 1022,613.9 1016.4,611.5 1011.8,608.4 1008.4,604.6 1006.5,600.7 1006.3,596.7 1007.6,593 1010.5,589.8 1014.8,587.4 1020.1,585.8 1026.1,585.1 1032.5,585.3 1038.7,586.5 1044.4,588.5Z" fill="none" stroke="#3a7f9a" stroke-width="0.6"/><path clip-path="url(#c34)" d="M1049.1,595.4 1052.2,598.4 1054.2,601.7 1054.9,605.3 1054.5,608.9 1052.8,612.3 1049.9,615.2 1046.1,617.4 1041.5,619 1036.4,619.8 1031,619.7 1025.5,618.9 1020.3,617.3 1015.7,615.1 1011.8,612.4 1008.8,609.2 1006.9,605.8 1006.2,602.4 1006.6,599.1 1008.3,596 1011.1,593.4 1014.8,591.4 1019.3,589.9 1024.4,589.2 1029.8,589.1 1035.2,589.7 1040.4,591 1045.1,592.9Z" fill="#a9aeb5" stroke="#222" stroke-width="0.9"/><clipPath id="c35"><path d="M1075.1,576.7 1077.1,578.9 1077.3,581.1 1075.4,582.7 1072.1,583.5 1067.7,583.4 1063.4,582.4 1059.9,580.7 1057.8,578.5 1057.7,576.3 1059.5,574.7 1062.9,574 1067.2,574.1 1071.5,575Z"/></clipPath><path d="M1075.1,576.7 1077.1,578.9 1077.3,581.1 1075.4,582.7 1072.1,583.5 1067.7,583.4 1063.4,582.4 1059.9,580.7 1057.8,578.5 1057.7,576.3 1059.5,574.7 1062.9,574 1067.2,574.1 1071.5,575Z" fill="#80d4f0"/><path clip-path="url(#c35)" d="M1075.1,576.7L1075.1,584.7M1077.1,578.9L1077.1,586.9M1077.3,581.1L1077.3,589.1M1075.4,582.7L1075.4,590.7M1072.1,583.5L1072.1,591.5M1067.7,583.4L1067.7,591.4M1063.4,582.4L1063.4,590.4M1059.9,580.7L1059.9,588.7M1057.8,578.5L1057.8,586.5M1057.7,576.3L1057.7,584.3M1059.5,574.7L1059.5,582.7M1062.9,574L1062.9,582M1067.2,574.1L1067.2,582.1M1071.5,575L1071.5,583M1075.1,580.7 1077.1,582.9 1077.3,585.1 1075.4,586.7 1072.1,587.5 1067.7,587.4 1063.4,586.4 1059.9,584.7 1057.8,582.5 1057.7,580.3 1059.5,578.7 1062.9,578 1067.2,578.1 1071.5,579Z" fill="none" stroke="#3a7f9a" stroke-width="0.6"/><path clip-path="url(#c35)" d="M1075.1,584.7 1077.1,586.9 1077.3,589.1 1075.4,590.7 1072.1,591.5 1067.7,591.4 1063.4,590.4 1059.9,588.7 1057.8,586.5 1057.7,584.3 1059.5,582.7 1062.9,582 1067.2,582.1 1071.5,583Z" fill="#a9aeb5" stroke="#222" stroke-width="0.9"/><clipPath id="c36"><path d="M1089.7,567.6 1091.9,570.3 1092,573.5 1090,576.5 1086.3,578.4 1081.7,578.8 1077,577.9 1073.1,576.1 1070.9,573.8 1070.8,571.4 1072.8,569.1 1076.4,567.1 1081.1,565.9 1085.8,566.1Z"/></clipPath><path d="M1089.7,567.6 1091.9,570.3 1092,573.5 1090,576.5 1086.3,578.4 1081.7,578.8 1077,577.9 1073.1,576.1 1070.9,573.8 1070.8,571.4 1072.8,569.1 1076.4,567.1 1081.1,565.9 1085.8,566.1Z" fill="#80d4f0"/><path clip-path="url(#c36)" d="M1089.7,567.6L1089.7,575.6M1091.9,570.3L1091.9,578.3M1092,573.5L1092,581.5M1090,576.5L1090,584.5M1086.3,578.4L1086.3,586.4M1081.7,578.8L1081.7,586.8M1077,577.9L1077,585.9M1073.1,576.1L1073.1,584.1M1070.9,573.8L1070.9,581.8M1070.8,571.4L1070.8,579.4M1072.8,569.1L1072.8,577.1M1076.4,567.1L1076.4,575.1M1081.1,565.9L1081.1,573.9M1085.8,566.1L1085.8,574.1M1089.7,571.6 1091.9,574.3 1092,577.5 1090,580.5 1086.3,582.4 1081.7,582.8 1077,581.9 1073.1,580.1 1070.9,577.8 1070.8,575.4 1072.8,573.1 1076.4,571.1 1081.1,569.9 1085.8,570.1Z" fill="none" stroke="#3a7f9a" stroke-width="0.6"/><path clip-path="url(#c36)" d="M1089.7,575.6 1091.9,578.3 1092,581.5 1090,584.5 1086.3,586.4 1081.7,586.8 1077,585.9 1073.1,584.1 1070.9,581.8 1070.8,579.4 1072.8,577.1 1076.4,575.1 1081.1,573.9 1085.8,574.1Z" fill="#a9aeb5" stroke="#222" stroke-width="0.9"/><clipPath id="c37"><path d="M1108.6,559.5 1110.8,562.8 1112,565.9 1111.9,568.5 1110.7,570 1108.4,570.4 1105.4,569.4 1102.1,567.4 1098.9,564.6 1096.3,561.3 1094.6,558.1 1094,555.4 1094.7,553.5 1096.5,552.6 1099.1,552.8 1102.3,554.2 1105.7,556.5Z"/></clipPath><path d="M1108.6,559.5 1110.8,562.8 1112,565.9 1111.9,568.5 1110.7,570 1108.4,570.4 1105.4,569.4 1102.1,567.4 1098.9,564.6 1096.3,561.3 1094.6,558.1 1094,555.4 1094.7,553.5 1096.5,552.6 1099.1,552.8 1102.3,554.2 1105.7,556.5Z" fill="#80d4f0"/><path clip-path="url(#c37)" d="M1108.6,559.5L1108.6,567.5M1110.8,562.8L1110.8,570.8M1112,565.9L1112,573.9M1111.9,568.5L1111.9,576.5M1110.7,570L1110.7,578M1108.4,570.4L1108.4,578.4M1105.4,569.4L1105.4,577.4M1102.1,567.4L1102.1,575.4M1098.9,564.6L1098.9,572.6M1096.3,561.3L1096.3,569.3M1094.6,558.1L1094.6,566.1M1094,555.4L1094,563.4M1094.7,553.5L1094.7,561.5M1096.5,552.6L1096.5,560.6M1099.1,552.8L1099.1,560.8M1102.3,554.2L1102.3,562.2M1105.7,556.5L1105.7,564.5M1108.6,563.5 1110.8,566.8 1112,569.9 1111.9,572.5 1110.7,574 1108.4,574.4 1105.4,573.4 1102.1,571.4 1098.9,568.6 1096.3,565.3 1094.6,562.1 1094,559.4 1094.7,557.5 1096.5,556.6 1099.1,556.8 1102.3,558.2 1105.7,560.5Z" fill="none" stroke="#3a7f9a" stroke-width="0.6"/><path clip-path="url(#c37)" d="M1108.6,567.5 1110.8,570.8 1112,573.9 1111.9,576.5 1110.7,578 1108.4,578.4 1105.4,577.4 1102.1,575.4 1098.9,572.6 1096.3,569.3 1094.6,566.1 1094,563.4 1094.7,561.5 1096.5,560.6 1099.1,560.8 1102.3,562.2 1105.7,564.5Z" fill="#a9aeb5" stroke="#222" stroke-width="0.9"/><clipPath id="c38"><path d="M1157.9,572.1 1159.3,574.1 1159.4,576.1 1158.3,577.8 1156.1,578.8 1153.3,578.9 1150.5,578.1 1148.1,576.6 1146.8,574.7 1146.6,572.7 1147.8,571 1149.9,570 1152.7,569.9 1155.6,570.6Z"/></clipPath><path d="M1157.9,572.1 1159.3,574.1 1159.4,576.1 1158.3,577.8 1156.1,578.8 1153.3,578.9 1150.5,578.1 1148.1,576.6 1146.8,574.7 1146.6,572.7 1147.8,571 1149.9,570 1152.7,569.9 1155.6,570.6Z" fill="#80d4f0"/><path clip-path="url(#c38)" d="M1157.9,572.1L1157.9,580.1M1159.3,574.1L1159.3,582.1M1159.4,576.1L1159.4,584.1M1158.3,577.8L1158.3,585.8M1156.1,578.8L1156.1,586.8M1153.3,578.9L1153.3,586.9M1150.5,578.1L1150.5,586.1M1148.1,576.6L1148.1,584.6M1146.8,574.7L1146.8,582.7M1146.6,572.7L1146.6,580.7M1147.8,571L1147.8,579M1149.9,570L1149.9,578M1152.7,569.9L1152.7,577.9M1155.6,570.6L1155.6,578.6M1157.9,576.1 1159.3,578.1 1159.4,580.1 1158.3,581.8 1156.1,582.8 1153.3,582.9 1150.5,582.1 1148.1,580.6 1146.8,578.7 1146.6,576.7 1147.8,575 1149.9,574 1152.7,573.9 1155.6,574.6Z" fill="none" stroke="#3a7f9a" stroke-width="0.6"/><path clip-path="url(#c38)" d="M1157.9,580.1 1159.3,582.1 1159.4,584.1 1158.3,585.8 1156.1,586.8 1153.3,586.9 1150.5,586.1 1148.1,584.6 1146.8,582.7 1146.6,580.7 1147.8,579 1149.9,578 1152.7,577.9 1155.6,578.6Z" fill="#a9aeb5" stroke="#222" stroke-width="0.9"/><clipPath id="c39"><path d="M1132.6,579.4 1135.4,583.2 1135.9,587.4 1134,591.1 1130,593.8 1124.6,595 1118.8,594.5 1113.6,592.5 1109.8,589.2 1108.1,585.3 1108.8,581.3 1111.8,577.8 1116.6,575.6 1122.3,575.2 1127.9,576.5Z"/></clipPath><path d="M1132.6,579.4 1135.4,583.2 1135.9,587.4 1134,591.1 1130,593.8 1124.6,595 1118.8,594.5 1113.6,592.5 1109.8,589.2 1108.1,585.3 1108.8,581.3 1111.8,577.8 1116.6,575.6 1122.3,575.2 1127.9,576.5Z" fill="#80d4f0"/><path clip-path="url(#c39)" d="M1132.6,579.4L1132.6,587.4M1135.4,583.2L1135.4,591.2M1135.9,587.4L1135.9,595.4M1134,591.1L1134,599.1M1130,593.8L1130,601.8M1124.6,595L1124.6,603M1118.8,594.5L1118.8,602.5M1113.6,592.5L1113.6,600.5M1109.8,589.2L1109.8,597.2M1108.1,585.3L1108.1,593.3M1108.8,581.3L1108.8,589.3M1111.8,577.8L1111.8,585.8M1116.6,575.6L1116.6,583.6M1122.3,575.2L1122.3,583.2M1127.9,576.5L1127.9,584.5M1132.6,583.4 1135.4,587.2 1135.9,591.4 1134,595.1 1130,597.8 1124.6,599 1118.8,598.5 1113.6,596.5 1109.8,593.2 1108.1,589.3 1108.8,585.3 1111.8,581.8 1116.6,579.6 1122.3,579.2 1127.9,580.5Z" fill="none" stroke="#3a7f9a" stroke-width="0.6"/><path clip-path="url(#c39)" d="M1132.6,587.4 1135.4,591.2 1135.9,595.4 1134,599.1 1130,601.8 1124.6,603 1118.8,602.5 1113.6,600.5 1109.8,597.2 1108.1,593.3 1108.8,589.3 1111.8,585.8 1116.6,583.6 1122.3,583.2 1127.9,584.5Z" fill="#a9aeb5" stroke="#222" stroke-width="0.9"/><clipPath id="c40"><path d="M1163.8,607.6 1165.4,611.4 1165.7,615.2 1164.6,618.7 1162.2,622 1158.6,624.7 1154,626.7 1148.7,627.7 1142.9,627.7 1136.8,626.7 1130.9,624.9 1125.5,622.6 1120.7,619.8 1116.8,616.8 1114,613.6 1112.4,610.4 1112.2,607.4 1113.3,604.6 1115.6,601.8 1119.1,599.2 1123.6,596.8 1128.9,595 1134.6,594.2 1140.6,594.4 1146.5,595.7 1152.1,597.8 1157,600.6 1161,604Z"/></clipPath><path d="M1163.8,607.6 1165.4,611.4 1165.7,615.2 1164.6,618.7 1162.2,622 1158.6,624.7 1154,626.7 1148.7,627.7 1142.9,627.7 1136.8,626.7 1130.9,624.9 1125.5,622.6 1120.7,619.8 1116.8,616.8 1114,613.6 1112.4,610.4 1112.2,607.4 1113.3,604.6 1115.6,601.8 1119.1,599.2 1123.6,596.8 1128.9,595 1134.6,594.2 1140.6,594.4 1146.5,595.7 1152.1,597.8 1157,600.6 1161,604Z" fill="#80d4f0"/><path clip-path="url(#c40)" d="M1163.8,607.6L1163.8,615.6M1165.6,612.1L1165.6,620.1M1165.5,616.4L1165.5,624.4M1163.6,620.4L1163.6,628.4M1159.9,623.8L1159.9,631.8M1154.8,626.4L1154.8,634.4M1148.7,627.7L1148.7,635.7M1141.9,627.6L1141.9,635.6M1134.8,626.2L1134.8,634.2M1128.1,623.8L1128.1,631.8M1122.2,620.8L1122.2,628.8M1117.3,617.3L1117.3,625.3M1114,613.6L1114,621.6M1112.3,609.9L1112.3,617.9M1112.4,606.4L1112.4,614.4M1114.3,603.2L1114.3,611.2M1117.9,600L1117.9,608M1122.8,597.1L1122.8,605.1M1128.9,595L1128.9,603M1135.6,594.2L1135.6,602.2M1142.6,594.7L1142.6,602.7M1149.4,596.6L1149.4,604.6M1155.4,599.6L1155.4,607.6M1160.4,603.4L1160.4,611.4M1163.8,611.6 1165.6,616.1 1165.5,620.4 1163.6,624.4 1159.9,627.8 1154.8,630.4 1148.7,631.7 1141.9,631.6 1134.8,630.2 1128.1,627.8 1122.2,624.8 1117.3,621.3 1114,617.6 1112.3,613.9 1112.4,610.4 1114.3,607.2 1117.9,604 1122.8,601.1 1128.9,599 1135.6,598.2 1142.6,598.7 1149.4,600.6 1155.4,603.6 1160.4,607.4Z" fill="none" stroke="#3a7f9a" stroke-width="0.6"/><path clip-path="url(#c40)" d="M1163.8,615.6 1165.4,619.4 1165.7,623.2 1164.6,626.7 1162.2,630 1158.6,632.7 1154,634.7 1148.7,635.7 1142.9,635.7 1136.8,634.7 1130.9,632.9 1125.5,630.6 1120.7,627.8 1116.8,624.8 1114,621.6 1112.4,618.4 1112.2,615.4 1113.3,612.6 1115.6,609.8 1119.1,607.2 1123.6,604.8 1128.9,603 1134.6,602.2 1140.6,602.4 1146.5,603.7 1152.1,605.8 1157,608.6 1161,612Z" fill="#a9aeb5" stroke="#222" stroke-width="0.9"/><clipPath id="c41"><path d="M1099.3,609.3 1102,612.6 1102.6,616.2 1101,619.6 1097.4,622.5 1092.5,624.3 1086.9,624.5 1081.5,623.1 1077.1,620.4 1074.5,616.8 1073.9,612.8 1075.5,609.2 1079,606.3 1083.9,604.7 1089.5,604.9 1094.9,606.5Z"/></clipPath><path d="M1099.3,609.3 1102,612.6 1102.6,616.2 1101,619.6 1097.4,622.5 1092.5,624.3 1086.9,624.5 1081.5,623.1 1077.1,620.4 1074.5,616.8 1073.9,612.8 1075.5,609.2 1079,606.3 1083.9,604.7 1089.5,604.9 1094.9,606.5Z" fill="#80d4f0"/><path clip-path="url(#c41)" d="M1099.3,609.3L1099.3,617.3M1102,612.6L1102,620.6M1102.6,616.2L1102.6,624.2M1101,619.6L1101,627.6M1097.4,622.5L1097.4,630.5M1092.5,624.3L1092.5,632.3M1086.9,624.5L1086.9,632.5M1081.5,623.1L1081.5,631.1M1077.1,620.4L1077.1,628.4M1074.5,616.8L1074.5,624.8M1073.9,612.8L1073.9,620.8M1075.5,609.2L1075.5,617.2M1079,606.3L1079,614.3M1083.9,604.7L1083.9,612.7M1089.5,604.9L1089.5,612.9M1094.9,606.5L1094.9,614.5M1099.3,613.3 1102,616.6 1102.6,620.2 1101,623.6 1097.4,626.5 1092.5,628.3 1086.9,628.5 1081.5,627.1 1077.1,624.4 1074.5,620.8 1073.9,616.8 1075.5,613.2 1079,610.3 1083.9,608.7 1089.5,608.9 1094.9,610.5Z" fill="none" stroke="#3a7f9a" stroke-width="0.6"/><path clip-path="url(#c41)" d="M1099.3,617.3 1102,620.6 1102.6,624.2 1101,627.6 1097.4,630.5 1092.5,632.3 1086.9,632.5 1081.5,631.1 1077.1,628.4 1074.5,624.8 1073.9,620.8 1075.5,617.2 1079,614.3 1083.9,612.7 1089.5,612.9 1094.9,614.5Z" fill="#a9aeb5" stroke="#222" stroke-width="0.9"/><clipPath id="c42"><path d="M1180.3,615.8 1181.4,617.2 1181.5,618.6 1180.5,619.8 1178.7,620.6 1176.4,620.8 1174.1,620.3 1172.2,619.3 1171.1,617.9 1171.1,616.4 1172,615.1 1173.8,614.3 1176.1,614.2 1178.4,614.7Z"/></clipPath><path d="M1180.3,615.8 1181.4,617.2 1181.5,618.6 1180.5,619.8 1178.7,620.6 1176.4,620.8 1174.1,620.3 1172.2,619.3 1171.1,617.9 1171.1,616.4 1172,615.1 1173.8,614.3 1176.1,614.2 1178.4,614.7Z" fill="#80d4f0"/><path clip-path="url(#c42)" d="M1180.3,615.8L1180.3,623.8M1181.4,617.2L1181.4,625.2M1181.5,618.6L1181.5,626.6M1180.5,619.8L1180.5,627.8M1178.7,620.6L1178.7,628.6M1176.4,620.8L1176.4,628.8M1174.1,620.3L1174.1,628.3M1172.2,619.3L1172.2,627.3M1171.1,617.9L1171.1,625.9M1171.1,616.4L1171.1,624.4M1172,615.1L1172,623.1M1173.8,614.3L1173.8,622.3M1176.1,614.2L1176.1,622.2M1178.4,614.7L1178.4,622.7M1180.3,619.8 1181.4,621.2 1181.5,622.6 1180.5,623.8 1178.7,624.6 1176.4,624.8 1174.1,624.3 1172.2,623.3 1171.1,621.9 1171.1,620.4 1172,619.1 1173.8,618.3 1176.1,618.2 1178.4,618.7Z" fill="none" stroke="#3a7f9a" stroke-width="0.6"/><path clip-path="url(#c42)" d="M1180.3,623.8 1181.4,625.2 1181.5,626.6 1180.5,627.8 1178.7,628.6 1176.4,628.8 1174.1,628.3 1172.2,627.3 1171.1,625.9 1171.1,624.4 1172,623.1 1173.8,622.3 1176.1,622.2 1178.4,622.7Z" fill="#a9aeb5" stroke="#222" stroke-width="0.9"/><clipPath id="c43"><path d="M1182.6,630 1185.5,633.1 1186.6,636.4 1185.5,639.6 1182.5,642.3 1177.9,644 1172.4,644.5 1166.5,643.8 1160.9,642 1156.5,639.6 1153.6,636.7 1152.6,633.7 1153.6,630.9 1156.6,628.3 1161.1,626.5 1166.6,625.6 1172.5,626 1178.1,627.6Z"/></clipPath><path d="M1182.6,630 1185.5,633.1 1186.6,636.4 1185.5,639.6 1182.5,642.3 1177.9,644 1172.4,644.5 1166.5,643.8 1160.9,642 1156.5,639.6 1153.6,636.7 1152.6,633.7 1153.6,630.9 1156.6,628.3 1161.1,626.5 1166.6,625.6 1172.5,626 1178.1,627.6Z" fill="#80d4f0"/><path clip-path="url(#c43)" d="M1182.6,630L1182.6,638M1185.5,633.1L1185.5,641.1M1186.6,636.4L1186.6,644.4M1185.5,639.6L1185.5,647.6M1182.5,642.3L1182.5,650.3M1177.9,644L1177.9,652M1172.4,644.5L1172.4,652.5M1166.5,643.8L1166.5,651.8M1160.9,642L1160.9,650M1156.5,639.6L1156.5,647.6M1153.6,636.7L1153.6,644.7M1152.6,633.7L1152.6,641.7M1153.6,630.9L1153.6,638.9M1156.6,628.3L1156.6,636.3M1161.1,626.5L1161.1,634.5M1166.6,625.6L1166.6,633.6M1172.5,626L1172.5,634M1178.1,627.6L1178.1,635.6M1182.6,634 1185.5,637.1 1186.6,640.4 1185.5,643.6 1182.5,646.3 1177.9,648 1172.4,648.5 1166.5,647.8 1160.9,646 1156.5,643.6 1153.6,640.7 1152.6,637.7 1153.6,634.9 1156.6,632.3 1161.1,630.5 1166.6,629.6 1172.5,630 1178.1,631.6Z" fill="none" stroke="#3a7f9a" stroke-width="0.6"/><path clip-path="url(#c43)" d="M1182.6,638 1185.5,641.1 1186.6,644.4 1185.5,647.6 1182.5,650.3 1177.9,652 1172.4,652.5 1166.5,651.8 1160.9,650 1156.5,647.6 1153.6,644.7 1152.6,641.7 1153.6,638.9 1156.6,636.3 1161.1,634.5 1166.6,633.6 1172.5,634 1178.1,635.6Z" fill="#a9aeb5" stroke="#222" stroke-width="0.9"/><clipPath id="c44"><path d="M1074.1,632.5 1075.2,634 1075.2,635.7 1074.2,637 1072.3,637.8 1069.9,637.9 1067.5,637.3 1065.6,636.1 1064.5,634.6 1064.5,633 1065.5,631.6 1067.4,630.8 1069.8,630.7 1072.2,631.3Z"/></clipPath><path d="M1074.1,632.5 1075.2,634 1075.2,635.7 1074.2,637 1072.3,637.8 1069.9,637.9 1067.5,637.3 1065.6,636.1 1064.5,634.6 1064.5,633 1065.5,631.6 1067.4,630.8 1069.8,630.7 1072.2,631.3Z" fill="#80d4f0"/><path clip-path="url(#c44)" d="M1074.1,632.5L1074.1,640.5M1075.2,634L1075.2,642M1075.2,635.7L1075.2,643.7M1074.2,637L1074.2,645M1072.3,637.8L1072.3,645.8M1069.9,637.9L1069.9,645.9M1067.5,637.3L1067.5,645.3M1065.6,636.1L1065.6,644.1M1064.5,634.6L1064.5,642.6M1064.5,633L1064.5,641M1065.5,631.6L1065.5,639.6M1067.4,630.8L1067.4,638.8M1069.8,630.7L1069.8,638.7M1072.2,631.3L1072.2,639.3M1074.1,636.5 1075.2,638 1075.2,639.7 1074.2,641 1072.3,641.8 1069.9,641.9 1067.5,641.3 1065.6,640.1 1064.5,638.6 1064.5,637 1065.5,635.6 1067.4,634.8 1069.8,634.7 1072.2,635.3Z" fill="none" stroke="#3a7f9a" stroke-width="0.6"/><path clip-path="url(#c44)" d="M1074.1,640.5 1075.2,642 1075.2,643.7 1074.2,645 1072.3,645.8 1069.9,645.9 1067.5,645.3 1065.6,644.1 1064.5,642.6 1064.5,641 1065.5,639.6 1067.4,638.8 1069.8,638.7 1072.2,639.3Z" fill="#a9aeb5" stroke="#222" stroke-width="0.9"/><clipPath id="c45"><path d="M1130.7,645.7 1132.9,648.5 1132.9,651.9 1130.8,655.2 1127.1,657.7 1122.4,658.7 1117.7,658.1 1113.9,656.1 1111.8,653.1 1111.8,649.7 1113.8,646.6 1117.6,644.3 1122.2,643.3 1126.9,643.8Z"/></clipPath><path d="M1130.7,645.7 1132.9,648.5 1132.9,651.9 1130.8,655.2 1127.1,657.7 1122.4,658.7 1117.7,658.1 1113.9,656.1 1111.8,653.1 1111.8,649.7 1113.8,646.6 1117.6,644.3 1122.2,643.3 1126.9,643.8Z" fill="#80d4f0"/><path clip-path="url(#c45)" d="M1130.7,645.7L1130.7,653.7M1132.9,648.5L1132.9,656.5M1132.9,651.9L1132.9,659.9M1130.8,655.2L1130.8,663.2M1127.1,657.7L1127.1,665.7M1122.4,658.7L1122.4,666.7M1117.7,658.1L1117.7,666.1M1113.9,656.1L1113.9,664.1M1111.8,653.1L1111.8,661.1M1111.8,649.7L1111.8,657.7M1113.8,646.6L1113.8,654.6M1117.6,644.3L1117.6,652.3M1122.2,643.3L1122.2,651.3M1126.9,643.8L1126.9,651.8M1130.7,649.7 1132.9,652.5 1132.9,655.9 1130.8,659.2 1127.1,661.7 1122.4,662.7 1117.7,662.1 1113.9,660.1 1111.8,657.1 1111.8,653.7 1113.8,650.6 1117.6,648.3 1122.2,647.3 1126.9,647.8Z" fill="none" stroke="#3a7f9a" stroke-width="0.6"/><path clip-path="url(#c45)" d="M1130.7,653.7 1132.9,656.5 1132.9,659.9 1130.8,663.2 1127.1,665.7 1122.4,666.7 1117.7,666.1 1113.9,664.1 1111.8,661.1 1111.8,657.7 1113.8,654.6 1117.6,652.3 1122.2,651.3 1126.9,651.8Z" fill="#a9aeb5" stroke="#222" stroke-width="0.9"/><clipPath id="c46"><path d="M1152.3,648.2 1153.4,649.5 1153.4,650.7 1152.4,651.9 1150.4,652.8 1148,653.2 1145.5,653 1143.5,652.1 1142.4,650.7 1142.4,649.1 1143.5,647.7 1145.4,646.9 1147.9,646.8 1150.3,647.3Z"/></clipPath><path d="M1152.3,648.2 1153.4,649.5 1153.4,650.7 1152.4,651.9 1150.4,652.8 1148,653.2 1145.5,653 1143.5,652.1 1142.4,650.7 1142.4,649.1 1143.5,647.7 1145.4,646.9 1147.9,646.8 1150.3,647.3Z" fill="#80d4f0"/><path clip-path="url(#c46)" d="M1152.3,648.2L1152.3,656.2M1153.4,649.5L1153.4,657.5M1153.4,650.7L1153.4,658.7M1152.4,651.9L1152.4,659.9M1150.4,652.8L1150.4,660.8M1148,653.2L1148,661.2M1145.5,653L1145.5,661M1143.5,652.1L1143.5,660.1M1142.4,650.7L1142.4,658.7M1142.4,649.1L1142.4,657.1M1143.5,647.7L1143.5,655.7M1145.4,646.9L1145.4,654.9M1147.9,646.8L1147.9,654.8M1150.3,647.3L1150.3,655.3M1152.3,652.2 1153.4,653.5 1153.4,654.7 1152.4,655.9 1150.4,656.8 1148,657.2 1145.5,657 1143.5,656.1 1142.4,654.7 1142.4,653.1 1143.5,651.7 1145.4,650.9 1147.9,650.8 1150.3,651.3Z" fill="none" stroke="#3a7f9a" stroke-width="0.6"/><path clip-path="url(#c46)" d="M1152.3,656.2 1153.4,657.5 1153.4,658.7 1152.4,659.9 1150.4,660.8 1148,661.2 1145.5,661 1143.5,660.1 1142.4,658.7 1142.4,657.1 1143.5,655.7 1145.4,654.9 1147.9,654.8 1150.3,655.3Z" fill="#a9aeb5" stroke="#222" stroke-width="0.9"/><clipPath id="c47"><path d="M1102.6,658.4 1103.7,660 1103.7,661.6 1102.6,663.1 1100.6,663.9 1098.1,664.1 1095.6,663.5 1093.6,662.3 1092.5,660.7 1092.5,659 1093.6,657.6 1095.6,656.8 1098.1,656.6 1100.6,657.2Z"/></clipPath><path d="M1102.6,658.4 1103.7,660 1103.7,661.6 1102.6,663.1 1100.6,663.9 1098.1,664.1 1095.6,663.5 1093.6,662.3 1092.5,660.7 1092.5,659 1093.6,657.6 1095.6,656.8 1098.1,656.6 1100.6,657.2Z" fill="#80d4f0"/><path clip-path="url(#c47)" d="M1102.6,658.4L1102.6,666.4M1103.7,660L1103.7,668M1103.7,661.6L1103.7,669.6M1102.6,663.1L1102.6,671.1M1100.6,663.9L1100.6,671.9M1098.1,664.1L1098.1,672.1M1095.6,663.5L1095.6,671.5M1093.6,662.3L1093.6,670.3M1092.5,660.7L1092.5,668.7M1092.5,659L1092.5,667M1093.6,657.6L1093.6,665.6M1095.6,656.8L1095.6,664.8M1098.1,656.6L1098.1,664.6M1100.6,657.2L1100.6,665.2M1102.6,662.4 1103.7,664 1103.7,665.6 1102.6,667.1 1100.6,667.9 1098.1,668.1 1095.6,667.5 1093.6,666.3 1092.5,664.7 1092.5,663 1093.6,661.6 1095.6,660.8 1098.1,660.6 1100.6,661.2Z" fill="none" stroke="#3a7f9a" stroke-width="0.6"/><path clip-path="url(#c47)" d="M1102.6,666.4 1103.7,668 1103.7,669.6 1102.6,671.1 1100.6,671.9 1098.1,672.1 1095.6,671.5 1093.6,670.3 1092.5,668.7 1092.5,667 1093.6,665.6 1095.6,664.8 1098.1,664.6 1100.6,665.2Z" fill="#a9aeb5" stroke="#222" stroke-width="0.9"/><mask id="m33" maskUnits="userSpaceOnUse" x="0" y="0" width="1920" height="1029"><rect x="0" y="0" width="1920" height="1029" fill="#fff"/><path d="M1049.1,587.4 1052.2,590.4 1054.2,593.7 1054.9,597.3 1054.5,600.9 1052.8,604.3 1049.9,607.2 1046.1,609.4 1041.5,611 1036.4,611.8 1031,611.7 1025.5,610.9 1020.3,609.3 1015.7,607.1 1011.8,604.4 1008.8,601.2 1006.9,597.8 1006.2,594.4 1006.6,591.1 1008.3,588 1011.1,585.4 1014.8,583.4 1019.3,581.9 1024.4,581.2 1029.8,581.1 1035.2,581.7 1040.4,583 1045.1,584.9ZM1075.1,576.7 1077.1,578.9 1077.3,581.1 1075.4,582.7 1072.1,583.5 1067.7,583.4 1063.4,582.4 1059.9,580.7 1057.8,578.5 1057.7,576.3 1059.5,574.7 1062.9,574 1067.2,574.1 1071.5,575ZM1089.7,567.6 1091.9,570.3 1092,573.5 1090,576.5 1086.3,578.4 1081.7,578.8 1077,577.9 1073.1,576.1 1070.9,573.8 1070.8,571.4 1072.8,569.1 1076.4,567.1 1081.1,565.9 1085.8,566.1ZM1108.6,559.5 1110.8,562.8 1112,565.9 1111.9,568.5 1110.7,570 1108.4,570.4 1105.4,569.4 1102.1,567.4 1098.9,564.6 1096.3,561.3 1094.6,558.1 1094,555.4 1094.7,553.5 1096.5,552.6 1099.1,552.8 1102.3,554.2 1105.7,556.5ZM1157.9,572.1 1159.3,574.1 1159.4,576.1 1158.3,577.8 1156.1,578.8 1153.3,578.9 1150.5,578.1 1148.1,576.6 1146.8,574.7 1146.6,572.7 1147.8,571 1149.9,570 1152.7,569.9 1155.6,570.6ZM1132.6,579.4 1135.4,583.2 1135.9,587.4 1134,591.1 1130,593.8 1124.6,595 1118.8,594.5 1113.6,592.5 1109.8,589.2 1108.1,585.3 1108.8,581.3 1111.8,577.8 1116.6,575.6 1122.3,575.2 1127.9,576.5ZM1163.8,607.6 1165.4,611.4 1165.7,615.2 1164.6,618.7 1162.2,622 1158.6,624.7 1154,626.7 1148.7,627.7 1142.9,627.7 1136.8,626.7 1130.9,624.9 1125.5,622.6 1120.7,619.8 1116.8,616.8 1114,613.6 1112.4,610.4 1112.2,607.4 1113.3,604.6 1115.6,601.8 1119.1,599.2 1123.6,596.8 1128.9,595 1134.6,594.2 1140.6,594.4 1146.5,595.7 1152.1,597.8 1157,600.6 1161,604ZM1099.3,609.3 1102,612.6 1102.6,616.2 1101,619.6 1097.4,622.5 1092.5,624.3 1086.9,624.5 1081.5,623.1 1077.1,620.4 1074.5,616.8 1073.9,612.8 1075.5,609.2 1079,606.3 1083.9,604.7 1089.5,604.9 1094.9,606.5ZM1180.3,615.8 1181.4,617.2 1181.5,618.6 1180.5,619.8 1178.7,620.6 1176.4,620.8 1174.1,620.3 1172.2,619.3 1171.1,617.9 1171.1,616.4 1172,615.1 1173.8,614.3 1176.1,614.2 1178.4,614.7ZM1182.6,630 1185.5,633.1 1186.6,636.4 1185.5,639.6 1182.5,642.3 1177.9,644 1172.4,644.5 1166.5,643.8 1160.9,642 1156.5,639.6 1153.6,636.7 1152.6,633.7 1153.6,630.9 1156.6,628.3 1161.1,626.5 1166.6,625.6 1172.5,626 1178.1,627.6ZM1074.1,632.5 1075.2,634 1075.2,635.7 1074.2,637 1072.3,637.8 1069.9,637.9 1067.5,637.3 1065.6,636.1 1064.5,634.6 1064.5,633 1065.5,631.6 1067.4,630.8 1069.8,630.7 1072.2,631.3ZM1130.7,645.7 1132.9,648.5 1132.9,651.9 1130.8,655.2 1127.1,657.7 1122.4,658.7 1117.7,658.1 1113.9,656.1 1111.8,653.1 1111.8,649.7 1113.8,646.6 1117.6,644.3 1122.2,643.3 1126.9,643.8ZM1152.3,648.2 1153.4,649.5 1153.4,650.7 1152.4,651.9 1150.4,652.8 1148,653.2 1145.5,653 1143.5,652.1 1142.4,650.7 1142.4,649.1 1143.5,647.7 1145.4,646.9 1147.9,646.8 1150.3,647.3ZM1102.6,658.4 1103.7,660 1103.7,661.6 1102.6,663.1 1100.6,663.9 1098.1,664.1 1095.6,663.5 1093.6,662.3 1092.5,660.7 1092.5,659 1093.6,657.6 1095.6,656.8 1098.1,656.6 1100.6,657.2Z" fill="#000"/></mask><g mask="url(#m33)"><path d="M984.5,591.3 997.7,585.9 1008.8,595.1 995.5,600.8ZM995.5,600.8 1008.8,595.1 1019.9,604.5 1006.5,610.4ZM1006.5,610.4 1019.9,604.5 1031,614.1 1017.5,620.1ZM1017.5,620.1 1031,614.1 1042,624 1028.5,629.9ZM1028.5,629.9 1042,624 1053.1,634.1 1039.5,639.9ZM1039.5,639.9 1053.1,634.1 1064.2,644.3 1050.4,650ZM1050.4,650 1064.2,644.3 1075.3,654.6 1061.4,660.2ZM1061.4,660.2 1075.3,654.6 1086.4,664.8 1072.4,670.7ZM1072.4,670.7 1086.4,664.8 1097.5,675.1 1083.4,681.2ZM1083.4,681.2 1097.5,675.1 1108.6,685.3 1094.4,691.7ZM997.7,585.9 1010.8,580.4 1022,589.4 1008.8,595.1ZM1008.8,595.1 1022,589.4 1033.2,598.6 1019.9,604.5ZM1019.9,604.5 1033.2,598.6 1044.4,608.1 1031,614.1ZM1031,614.1 1044.4,608.1 1055.6,618 1042,624ZM1042,624 1055.6,618 1066.8,628.2 1053.1,634.1ZM1053.1,634.1 1066.8,628.2 1078,638.5 1064.2,644.3ZM1064.2,644.3 1078,638.5 1089.2,648.8 1075.3,654.6ZM1075.3,654.6 1089.2,648.8 1100.4,658.9 1086.4,664.8ZM1086.4,664.8 1100.4,658.9 1111.6,668.8 1097.5,675.1ZM1097.5,675.1 1111.6,668.8 1122.8,678.7 1108.6,685.3ZM1010.8,580.4 1024,574.9 1035.3,583.5 1022,589.4ZM1022,589.4 1035.3,583.5 1046.6,592.4 1033.2,598.6ZM1035.3,583.5 1048.6,577.7 1060,586 1046.6,592.4ZM1133.2,616.3 1147,610.2 1158.7,620.5 1144.8,626.1ZM1158.7,620.5 1172.6,614.3 1184.4,623.8 1170.4,629.9ZM1170.4,629.9 1184.4,623.8 1196.3,632.3 1182.2,638.5ZM1089.9,545.9 1103,539.6 1115,547.1 1101.7,553.5ZM1172.6,614.3 1186.5,608.4 1198.4,617.8 1184.4,623.8ZM1103,539.6 1116.2,533.5 1128.2,540.8 1115,547.1ZM1115,547.1 1128.2,540.8 1140.3,548.9 1126.9,555.3ZM1186.5,608.4 1200.4,602.5 1212.4,611.9 1198.4,617.8Z" fill="#acaeb3" stroke="#acaeb3" stroke-width="0.8"/><path d="M1033.2,598.6 1046.6,592.4 1057.9,601.7 1044.4,608.1ZM1101.7,553.5 1115,547.1 1126.9,555.3 1113.5,561.9ZM1160.8,603.8 1174.6,597.8 1186.5,608.4 1172.6,614.3ZM1174.6,597.8 1188.4,591.8 1200.4,602.5 1186.5,608.4Z" fill="#b2b4b9" stroke="#b2b4b9" stroke-width="0.8"/><path d="M1044.4,608.1 1057.9,601.7 1069.2,611.5 1055.6,618ZM1055.6,618 1069.2,611.5 1080.5,621.7 1066.8,628.2ZM1066.8,628.2 1080.5,621.7 1091.8,631.9 1078,638.5ZM1078,638.5 1091.8,631.9 1103.1,642.1 1089.2,648.8ZM1089.2,648.8 1103.1,642.1 1114.4,651.9 1100.4,658.9ZM1046.6,592.4 1060,586 1071.4,594.9 1057.9,601.7ZM1147,610.2 1160.8,603.8 1172.6,614.3 1158.7,620.5ZM1113.5,561.9 1126.9,555.3 1138.8,564.7 1125.3,571.2ZM1149,592.7 1162.7,586.5 1174.6,597.8 1160.8,603.8ZM1126.9,555.3 1140.3,548.9 1152.3,558.3 1138.8,564.7Z" fill="#b8babf" stroke="#b8babf" stroke-width="0.8"/><path d="M1100.4,658.9 1114.4,651.9 1125.7,661.5 1111.6,668.8ZM1121.6,606 1135.3,599.4 1147,610.2 1133.2,616.3ZM1125.3,571.2 1138.8,564.7 1150.7,575.3 1137.1,581.6ZM1137.1,581.6 1150.7,575.3 1162.7,586.5 1149,592.7ZM1138.8,564.7 1152.3,558.3 1164.3,569 1150.7,575.3ZM1150.7,575.3 1164.3,569 1176.3,580.4 1162.7,586.5ZM1162.7,586.5 1176.3,580.4 1188.4,591.8 1174.6,597.8Z" fill="#bec0c5" stroke="#bec0c5" stroke-width="0.8"/><path d="M1111.6,668.8 1125.7,661.5 1137,670.8 1122.8,678.7ZM1057.9,601.7 1071.4,594.9 1082.8,604.3 1069.2,611.5ZM1076.7,553.3 1089.9,545.9 1101.7,553.5 1088.4,561.1ZM1088.4,561.1 1101.7,553.5 1113.5,561.9 1100.1,569.3ZM1135.3,599.4 1149,592.7 1160.8,603.8 1147,610.2Z" fill="#c4c6cb" stroke="#c4c6cb" stroke-width="0.8"/><path d="M1024,574.9 1037.2,569.7 1048.6,577.7 1035.3,583.5ZM1071.4,594.9 1084.9,590.4 1096.4,599.7 1082.8,604.3ZM1082.8,604.3 1096.4,599.7 1107.9,609.5 1094.2,614.2ZM1094.2,614.2 1107.9,609.5 1119.4,619.3 1105.6,624.2ZM1105.6,624.2 1119.4,619.3 1130.9,628.9 1117,634ZM1117,634 1130.9,628.9 1142.4,637.9 1128.4,643.3ZM1128.4,643.3 1142.4,637.9 1153.9,646.3 1139.8,652.1ZM1139.8,652.1 1153.9,646.3 1165.5,654.3 1151.2,660.7ZM1144.8,626.1 1158.7,620.5 1170.4,629.9 1156.4,635.2ZM1156.4,635.2 1170.4,629.9 1182.2,638.5 1168,643.5ZM1182.2,638.5 1196.3,632.3 1208.1,640.2 1193.9,646.5ZM1184.4,623.8 1198.4,617.8 1210.4,626.1 1196.3,632.3ZM1196.3,632.3 1210.4,626.1 1222.3,633.7 1208.1,640.2ZM1198.4,617.8 1212.4,611.9 1224.5,620 1210.4,626.1ZM1210.4,626.1 1224.5,620 1236.5,627.3 1222.3,633.7Z" fill="#a6a8ad" stroke="#a6a8ad" stroke-width="0.8"/><path d="M1069.2,611.5 1082.8,604.3 1094.2,614.2 1080.5,621.7ZM1111.8,578.5 1125.3,571.2 1137.1,581.6 1123.6,588.7Z" fill="#d0d2d7" stroke="#d0d2d7" stroke-width="0.8"/><path d="M1080.5,621.7 1094.2,614.2 1105.6,624.2 1091.8,631.9ZM1098.4,586.3 1111.8,578.5 1123.6,588.7 1110,595.9Z" fill="#d6d8dd" stroke="#d6d8dd" stroke-width="0.8"/><path d="M1091.8,631.9 1105.6,624.2 1117,634 1103.1,642.1ZM1075.1,569.5 1088.4,561.1 1100.1,569.3 1086.7,577.5ZM1086.7,577.5 1100.1,569.3 1111.8,578.5 1098.4,586.3Z" fill="#dcdee3" stroke="#dcdee3" stroke-width="0.8"/><path d="M1103.1,642.1 1117,634 1128.4,643.3 1114.4,651.9ZM1063.5,561.9 1076.7,553.3 1088.4,561.1 1075.1,569.5Z" fill="#e2e4e9" stroke="#e2e4e9" stroke-width="0.8"/><path d="M1114.4,651.9 1128.4,643.3 1139.8,652.1 1125.7,661.5Z" fill="#e8eaef" stroke="#e8eaef" stroke-width="0.8"/><path d="M1125.7,661.5 1139.8,652.1 1151.2,660.7 1137,670.8Z" fill="#f4f6fb" stroke="#f4f6fb" stroke-width="0.8"/><path d="M1037.2,569.7 1050.3,566.3 1061.9,573.8 1048.6,577.7ZM1107.9,609.5 1121.6,606 1133.2,616.3 1119.4,619.3ZM1119.4,619.3 1133.2,616.3 1144.8,626.1 1130.9,628.9Z" fill="#9a9ca1" stroke="#9a9ca1" stroke-width="0.8"/><path d="M1048.6,577.7 1061.9,573.8 1073.4,581.8 1060,586ZM1060,586 1073.4,581.8 1084.9,590.4 1071.4,594.9ZM1050.3,566.3 1063.5,561.9 1075.1,569.5 1061.9,573.8ZM1061.9,573.8 1075.1,569.5 1086.7,577.5 1073.4,581.8ZM1073.4,581.8 1086.7,577.5 1098.4,586.3 1084.9,590.4ZM1084.9,590.4 1098.4,586.3 1110,595.9 1096.4,599.7ZM1096.4,599.7 1110,595.9 1121.6,606 1107.9,609.5ZM1168,643.5 1182.2,638.5 1193.9,646.5 1179.7,651.5Z" fill="#a0a2a7" stroke="#a0a2a7" stroke-width="0.8"/><path d="M1130.9,628.9 1144.8,626.1 1156.4,635.2 1142.4,637.9ZM1142.4,637.9 1156.4,635.2 1168,643.5 1153.9,646.3Z" fill="#94969b" stroke="#94969b" stroke-width="0.8"/><path d="M1153.9,646.3 1168,643.5 1179.7,651.5 1165.5,654.3Z" fill="#8e9095" stroke="#8e9095" stroke-width="0.8"/><path d="M1110,595.9 1123.6,588.7 1135.3,599.4 1121.6,606ZM1100.1,569.3 1113.5,561.9 1125.3,571.2 1111.8,578.5ZM1123.6,588.7 1137.1,581.6 1149,592.7 1135.3,599.4Z" fill="#caccd1" stroke="#caccd1" stroke-width="0.8"/><path d="M984.5,591.3 995.5,600.8 1006.5,610.4 1017.5,620.1 1028.5,629.9 1039.5,639.9 1050.4,650 1061.4,660.2 1072.4,670.7 1083.4,681.2 1094.4,691.7 M992,588.2 1003.1,597.6 1014.1,607.1 1025.2,616.7 1036.2,626.5 1047.3,636.6 1058.3,646.7 1069.4,657 1080.4,667.3 1091.5,677.7 1102.5,688 M999.4,585.1 1010.5,594.4 1021.6,603.8 1032.7,613.4 1043.8,623.2 1054.9,633.3 1066.1,643.5 1077.2,653.8 1088.3,664.1 1099.4,674.3 1110.5,684.4 M1006.6,582.2 1017.8,591.3 1028.9,600.5 1040.1,610.1 1051.2,620 1062.4,630.1 1073.6,640.4 1084.7,650.7 1095.9,660.9 1107.1,670.9 1118.2,680.8 M1013.5,579.3 1024.7,588.2 1035.9,597.4 1047.1,606.9 1058.4,616.8 1069.6,627 1080.8,637.3 1092,647.6 1103.2,657.6 1114.5,667.5 1125.7,677.3 M1020,576.5 1031.3,585.3 1042.6,594.3 1053.8,603.7 1065.1,613.6 1076.4,623.8 1087.7,634.1 1098.9,644.3 1110.2,654.3 1121.5,663.9 1132.7,673.4 M1026.2,574 1037.5,582.5 1048.9,591.3 1060.2,600.5 1071.5,610.3 1082.8,620.4 1094.1,630.7 1105.5,640.8 1116.8,650.5 1128.1,660 1139.4,669.2 M1032,571.6 1043.4,579.8 1054.8,588.4 1066.1,597.5 1077.5,607.1 1088.9,617.1 1100.2,627.2 1111.6,637.1 1123,646.6 1134.3,655.8 1145.7,664.7 M1037.5,569.6 1048.9,577.5 1060.3,585.8 1071.7,594.7 1083.2,604.2 1094.6,614 1106,624 1117.4,633.8 1128.8,643.1 1140.2,651.9 1151.6,660.5 M1042.8,568 1054.2,575.7 1065.7,583.8 1077.1,592.5 1088.6,601.9 1100,611.7 1111.5,621.5 1122.9,631.2 1134.4,640.3 1145.8,648.9 1157.3,657.2 M1047.8,566.8 1059.3,574.4 1070.8,582.3 1082.3,591 1093.8,600.3 1105.3,610.1 1116.8,619.9 1128.3,629.5 1139.8,638.5 1151.3,646.9 1162.7,655 M1052.9,565.8 1064.4,573.3 1075.9,581.2 1087.5,589.8 1099,599.1 1110.5,609 1122,618.9 1133.6,628.4 1145.1,637.4 1156.6,645.7 1168.2,653.7 M1057.9,564.4 1069.5,571.9 1081.1,579.8 1092.6,588.4 1104.2,597.9 1115.8,607.8 1127.4,617.9 1138.9,627.5 1150.5,636.5 1162.1,644.8 1173.6,652.7 M1063.2,562.1 1074.8,569.6 1086.4,577.6 1098,586.4 1109.6,596 1121.2,606.2 1132.8,616.4 1144.5,626.2 1156.1,635.3 1167.7,643.6 1179.3,651.6 M1068.7,558.8 1080.3,566.4 1092,574.5 1103.6,583.5 1115.3,593.3 1126.9,603.7 1138.6,614.2 1150.3,624.2 1161.9,633.4 1173.6,641.9 1185.2,649.8 M1074.5,554.8 1086.2,562.5 1097.9,570.8 1109.6,579.9 1121.3,590 1133,600.6 1144.7,611.3 1156.4,621.5 1168.1,630.9 1179.8,639.4 1191.5,647.5 M1080.7,550.8 1092.4,558.6 1104.2,566.9 1115.9,576.2 1127.7,586.4 1139.4,597.3 1151.2,608.2 1162.9,618.6 1174.7,628 1186.4,636.6 1198.2,644.6 M1087.2,547.2 1099,554.9 1110.8,563.2 1122.6,572.6 1134.4,582.9 1146.2,594 1158,605 1169.8,615.5 1181.6,625 1193.4,633.5 1205.2,641.5 M1094.1,543.8 1106,551.4 1117.8,559.7 1129.7,569.1 1141.5,579.5 1153.4,590.7 1165.2,601.8 1177.1,612.4 1189,621.9 1200.8,630.3 1212.7,638.1 M1101.3,540.4 1113.2,548 1125.1,556.2 1137,565.6 1148.9,576.1 1160.9,587.3 1172.8,598.6 1184.7,609.2 1196.6,618.6 1208.5,626.9 1220.4,634.6 M1108.7,537 1120.7,544.4 1132.6,552.6 1144.6,562 1156.6,572.5 1168.5,583.9 1180.5,595.2 1192.5,605.9 1204.5,615.3 1216.4,623.5 1228.4,631 M1116.2,533.5 1128.2,540.8 1140.3,548.9 1152.3,558.3 1164.3,569 1176.3,580.4 1188.4,591.8 1200.4,602.5 1212.4,611.9 1224.5,620 1236.5,627.3 M984.5,591.3 997.7,585.9 1010.8,580.4 1024,574.9 1037.2,569.7 1050.3,566.3 1063.5,561.9 1076.7,553.3 1089.9,545.9 1103,539.6 1116.2,533.5 M990.8,596.7 1004,591.1 1017.2,585.5 1030.5,579.8 1043.7,574.2 1056.9,570.6 1070.1,566.2 1083.4,557.7 1096.6,550.2 1109.8,543.8 1123.1,537.6 M996.9,602.1 1010.2,596.4 1023.5,590.6 1036.8,584.6 1050.1,578.7 1063.4,574.8 1076.7,570.5 1090,562.1 1103.2,554.6 1116.5,548.1 1129.8,541.8 M1002.9,607.3 1016.3,601.5 1029.6,595.6 1043,589.5 1056.3,583.2 1069.7,579.1 1083,574.8 1096.3,566.6 1109.7,559.1 1123,552.6 1136.4,546.2 M1008.7,612.3 1022.1,606.4 1035.5,600.5 1048.9,594.2 1062.3,587.7 1075.7,583.4 1089.1,579.2 1102.5,571.1 1115.9,563.6 1129.3,557.1 1142.7,550.7 M1014.2,617.2 1027.6,611.2 1041.1,605.2 1054.5,598.8 1068,592.1 1081.4,587.7 1094.9,583.5 1108.3,575.7 1121.8,568.3 1135.2,561.8 1148.7,555.3 M1019.3,621.7 1032.8,615.8 1046.3,609.8 1059.8,603.3 1073.3,596.4 1086.8,591.9 1100.3,587.8 1113.8,580.2 1127.3,572.9 1140.8,566.4 1154.3,560 M1024.2,626 1037.7,620.1 1051.3,614.1 1064.8,607.6 1078.3,600.6 1091.9,596 1105.4,592 1119,584.6 1132.5,577.4 1146.1,571 1159.6,564.7 M1028.7,630.1 1042.3,624.3 1055.9,618.3 1069.5,611.8 1083.1,604.6 1096.7,599.9 1110.3,596.1 1123.9,589 1137.5,581.9 1151,575.5 1164.6,569.2 M1033.1,634.1 1046.7,628.2 1060.4,622.3 1074,615.8 1087.6,608.5 1101.3,603.8 1114.9,600.1 1128.5,593.2 1142.2,586.3 1155.8,580 1169.4,573.7 M1037.4,637.9 1051,632.1 1064.7,626.3 1078.4,619.7 1092,612.3 1105.7,607.6 1119.4,604.1 1133,597.3 1146.7,590.6 1160.4,584.3 1174.1,578.2 M1041.5,641.8 1055.3,636 1069,630.2 1082.7,623.6 1096.4,616.1 1110.1,611.4 1123.8,608 1137.5,601.5 1151.2,594.8 1164.9,588.7 1178.6,582.6 M1045.8,645.7 1059.5,639.9 1073.3,634.1 1087,627.6 1100.8,620 1114.5,615.2 1128.3,612 1142,605.7 1155.8,599.1 1169.5,593.1 1183.3,587.1 M1050.2,649.7 1063.9,644 1077.7,638.2 1091.5,631.7 1105.3,623.9 1119.1,619.1 1132.9,616 1146.7,609.9 1160.5,603.5 1174.3,597.5 1188.1,591.6 M1054.7,654 1068.6,648.3 1082.4,642.5 1096.2,635.9 1110.1,628.1 1123.9,623.1 1137.7,620.2 1151.6,614.3 1165.4,608 1179.2,602.1 1193.1,596.1 M1059.6,658.5 1073.5,652.8 1087.4,647.1 1101.2,640.4 1115.1,632.3 1129,627.3 1142.9,624.5 1156.8,618.8 1170.6,612.6 1184.5,606.7 1198.4,600.8 M1064.7,663.4 1078.7,657.7 1092.6,651.9 1106.5,645.1 1120.5,636.8 1134.4,631.7 1148.3,628.9 1162.3,623.4 1176.2,617.3 1190.1,611.4 1204,605.5 M1070.2,668.5 1084.2,662.8 1098.2,656.9 1112.2,650 1126.1,641.4 1140.1,636.1 1154.1,633.4 1168.1,628.1 1182.1,622 1196,616 1210,610.1 M1076,674 1090,668.1 1104,662.1 1118.1,655 1132.1,646.2 1146.1,640.6 1160.2,638 1174.2,632.7 1188.2,626.6 1202.3,620.6 1216.3,614.6 M1082,679.8 1096.1,673.7 1110.1,667.5 1124.2,660.2 1138.3,651 1152.4,645.2 1166.5,642.5 1180.6,637.4 1194.7,631.2 1208.8,625.1 1222.9,619 M1088.1,685.7 1102.3,679.4 1116.4,673.1 1130.6,665.5 1144.7,655.9 1158.9,649.7 1173,647 1187.2,641.9 1201.3,635.7 1215.5,629.5 1229.6,623.2 M1094.4,691.7 1108.6,685.3 1122.8,678.7 1137,670.8 1151.2,660.7 1165.5,654.3 1179.7,651.5 1193.9,646.5 1208.1,640.2 1222.3,633.7 1236.5,627.3" fill="none" stroke="#080808" stroke-width="3.0"/></g><path d="M1049.1,587.4 1051.3,589.3 1053,591.5 1054.2,593.7 1054.8,596.1 1054.9,598.5 1054.5,600.9 1053.5,603.2 1052,605.3 1049.9,607.2 1047.5,608.8 1044.7,610 1041.5,611 1038.2,611.6 1034.6,611.8 1031,611.7 1027.3,611.3 1023.8,610.5 1020.3,609.3 1017.2,607.9 1014.3,606.2 1011.8,604.4 1009.7,602.3 1008,600.1 1006.9,597.8 1006.3,595.5 1006.2,593.3 1006.6,591.1 1007.6,589 1009.1,587.1 1011.1,585.4 1013.4,584 1016.2,582.8 1019.3,581.9 1022.6,581.4 1026.1,581.1 1029.8,581.1 1033.4,581.4 1037,582.1 1040.4,583 1043.6,584.2 1046.6,585.7 1049.1,587.4 M1076.5,578 1077.3,579.3 1077.4,580.5 1076.9,581.7 1075.7,582.6 1073.9,583.2 1071.7,583.5 1069.2,583.5 1066.6,583.2 1064.1,582.6 1061.8,581.8 1059.9,580.7 1058.5,579.4 1057.7,578.1 1057.6,576.8 1058.1,575.7 1059.3,574.8 1061,574.2 1063.2,573.9 1065.7,574 1068.3,574.3 1070.8,574.8 M1089.7,567.6 1091.2,569.1 1092,570.8 1092.2,572.7 1091.6,574.6 1090.3,576.3 1088.4,577.6 1086,578.5 1083.3,578.9 1080.5,578.7 1077.7,578.1 M1071.6,574.8 1070.8,573.4 1070.6,572 1071.2,570.6 1072.5,569.3 1074.4,568 1076.8,567 1079.5,566.2 1082.3,565.8 1085,565.9 1087.6,566.6 1089.7,567.6 M1108.6,559.5 1110.2,561.6 1111.3,563.8 1112,565.8 1112.1,567.6 1111.7,569 1110.8,570 1109.5,570.4 1107.8,570.3 1105.8,569.6 1103.6,568.5 1101.5,566.9 1099.4,565 1097.5,563 1096,560.8 1094.9,558.7 1094.2,556.8 1094,555.1 1094.4,553.8 1095.3,553 1096.6,552.6 1098.3,552.6 1100.3,553.2 1102.5,554.2 1104.6,555.7 1106.7,557.4 1108.6,559.5 M1157.9,572.1 1158.9,573.2 1159.4,574.4 1159.5,575.6 1159.2,576.7 1158.4,577.7 1157.3,578.4 1155.9,578.8 1154.3,579 1152.6,578.8 1150.9,578.3 1149.4,577.6 1148.1,576.6 1147.2,575.5 1146.6,574.4 1146.5,573.2 1146.9,572.1 1147.6,571.2 1148.7,570.4 1150.1,570 1151.7,569.8 1153.4,570 1155.1,570.4 1156.6,571.1 1157.9,572.1 M1132.6,579.4 1134.6,581.7 1135.8,584.3 1136,586.9 1135.3,589.3 1133.6,591.5 1131.2,593.2 1128.1,594.4 1124.6,595 1121,594.9 1117.4,594.2 1114.2,592.8 1111.4,591 1109.5,588.8 1108.3,586.3 1108.1,583.8 1108.8,581.3 1110.5,579 1112.9,577.1 1115.9,575.8 1119.4,575.2 1123,575.2 1126.6,576 1129.9,577.4 1132.6,579.4 M1163.8,607.6 1165,610 1165.6,612.3 1165.7,614.7 1165.3,616.9 1164.4,619.1 1163,621.1 1161,623 1158.7,624.6 1156,626 1152.9,627 1149.6,627.6 1146,627.8 1142.3,627.6 1138.6,627 1134.8,626.2 1131.2,625 1127.7,623.6 1124.4,622.1 1121.4,620.4 1118.8,618.5 1116.5,616.6 1114.7,614.6 1113.4,612.6 1112.5,610.6 1112.1,608.7 1112.3,606.9 1113,605.1 1114.1,603.4 1115.8,601.7 1117.9,600 1120.3,598.4 1123.2,597 1126.3,595.7 1129.7,594.8 1133.3,594.3 1137,594.2 1140.8,594.5 1144.5,595.1 1148.1,596.2 1151.5,597.5 1154.7,599.1 1157.6,601 1160.1,603.1 1162.2,605.3 1163.8,607.6 M1099.3,609.3 1101.3,611.5 1102.4,613.8 1102.6,616.2 1101.8,618.5 1100,620.6 1097.4,622.5 1094.2,623.8 1090.6,624.5 1086.9,624.5 1083.2,623.7 1079.9,622.3 1077.1,620.4 1075.2,618 1074,615.5 1073.9,612.8 1074.7,610.3 1076.5,608.1 1079,606.3 1082.2,605.1 1085.7,604.6 1089.5,604.9 1093.2,605.8 1096.5,607.3 1099.3,609.3 M1180.3,615.8 1181,616.6 1181.5,617.4 1181.5,618.3 1181.3,619 1180.6,619.7 1179.7,620.3 1178.5,620.6 1177.2,620.8 1175.8,620.7 1174.5,620.4 1173.2,619.9 1172.2,619.3 1171.5,618.5 1171,617.6 1171,616.7 1171.3,615.9 1171.9,615.2 1172.8,614.7 1174,614.3 1175.3,614.2 1176.7,614.3 1178,614.6 1179.3,615.1 1180.3,615.8 M1182.6,630 1184.8,632 1186.1,634.2 1186.6,636.4 1186.1,638.6 1184.7,640.6 1182.5,642.3 1179.6,643.6 1176.2,644.3 1172.4,644.5 1168.4,644.2 1164.5,643.3 1160.9,642 1157.8,640.4 1155.3,638.6 1153.6,636.7 1152.7,634.7 1152.7,632.8 1153.6,630.9 1155.4,629.1 1157.9,627.6 1161.1,626.5 1164.7,625.8 1168.6,625.6 1172.5,626 1176.3,626.9 1179.7,628.3 1182.6,630 M1074.1,632.5 1074.9,633.4 1075.3,634.3 1075.3,635.3 1075,636.2 1074.3,636.9 1073.3,637.5 1072.1,637.9 1070.7,638 1069.3,637.9 1067.9,637.5 1066.6,636.9 1065.6,636.1 1064.8,635.2 1064.4,634.3 1064.4,633.4 1064.7,632.5 1065.4,631.7 1066.4,631.1 1067.6,630.8 1069,630.6 1070.4,630.8 1071.8,631.1 1073.1,631.7 1074.1,632.5 M1130.7,645.7 1132.2,647.3 1133,649.1 1133.1,651 1132.4,653 1131.1,655 1129.1,656.6 1126.7,657.9 1124,658.6 1121.2,658.7 1118.4,658.3 1116,657.4 1113.9,656.1 1112.4,654.4 1111.7,652.5 1111.6,650.6 1112.2,648.6 1113.6,646.9 1115.5,645.3 1117.9,644.2 1120.6,643.5 1123.4,643.3 1126.2,643.6 1128.7,644.5 1130.7,645.7 M1152.3,648.2 1153.1,648.9 1153.5,649.7 1153.5,650.4 1153.2,651.2 1152.5,651.8 1151.5,652.4 1150.2,652.9 1148.8,653.1 1147.3,653.2 1145.9,653.1 1144.6,652.7 1143.5,652.1 1142.8,651.3 1142.4,650.4 1142.3,649.5 1142.7,648.6 1143.4,647.8 1144.4,647.2 1145.6,646.9 1147,646.7 1148.5,646.8 1149.9,647.1 1151.2,647.6 1152.3,648.2 M1102.6,658.4 1103.4,659.3 1103.8,660.3 1103.8,661.2 1103.4,662.2 1102.7,663 1101.7,663.6 1100.4,664 1099,664.1 1097.5,664 1096,663.6 1094.7,663.1 1093.6,662.3 1092.8,661.4 1092.4,660.4 1092.4,659.4 1092.8,658.5 1093.5,657.7 1094.5,657.1 1095.8,656.8 1097.2,656.6 1098.7,656.7 1100.2,657.1 1101.5,657.6 1102.6,658.4" fill="none" stroke="#111" stroke-width="1.1"/><path d="M984.5,591.3 987.8,589.9 991.1,588.6 994.4,587.2 997.7,585.9 1001,584.5 1004.3,583.1 1007.5,581.8 1010.8,580.4 1014.1,579 1017.4,577.6 1020.7,576.2 1024,574.9 1027.3,573.5 1030.6,572.2 1033.9,570.9 1037.2,569.7 1040.5,568.6 1043.8,567.7 1047.1,567 1050.3,566.3 1053.6,565.6 1056.9,564.7 1060.2,563.5 1063.5,561.9 1066.8,560 1070.1,557.8 1073.4,555.6 1076.7,553.3 1080,551.3 1083.3,549.3 1086.6,547.5 1089.9,545.9 1093.2,544.3 1096.4,542.7 1099.7,541.2 1103,539.6 1106.3,538.1 1109.6,536.6 1112.9,535 1116.2,533.5 1119.2,535.3 1122.2,537.1 1125.2,538.9 1128.2,540.8 1131.2,542.7 1134.2,544.7 1137.3,546.8 1140.3,548.9 1143.3,551.1 1146.3,553.4 1149.3,555.8 1152.3,558.3 1155.3,560.8 1158.3,563.5 1161.3,566.2 1164.3,569 1167.3,571.8 1170.3,574.6 1173.3,577.5 1176.3,580.4 1179.4,583.3 1182.4,586.2 1185.4,589 1188.4,591.8 1191.4,594.6 1194.4,597.3 1197.4,600 1200.4,602.5 1203.4,605 1206.4,607.4 1209.4,609.7 1212.4,611.9 1215.4,614 1218.5,616.1 1221.5,618.1 1224.5,620 1227.5,621.9 1230.5,623.7 1233.5,625.5 1236.5,627.3 1232.9,628.9 1229.4,630.5 1225.8,632.1 1222.3,633.7 1218.7,635.3 1215.2,637 1211.6,638.6 1208.1,640.2 1204.5,641.8 1201,643.4 1197.4,644.9 1193.9,646.5 1190.3,647.9 1186.8,649.3 1183.2,650.5 1179.7,651.5 1176.1,652.3 1172.6,652.9 1169,653.6 1165.5,654.3 1161.9,655.3 1158.3,656.7 1154.8,658.5 1151.2,660.7 1147.7,663.2 1144.1,665.8 1140.6,668.4 1137,670.8 1133.5,673 1129.9,675 1126.4,676.9 1122.8,678.7 1119.3,680.4 1115.7,682 1112.2,683.6 1108.6,685.3 1105.1,686.9 1101.5,688.5 1098,690.1 1094.4,691.7 1091.7,689.1 1088.9,686.4 1086.2,683.8 1083.4,681.2 1080.7,678.5 1077.9,675.9 1075.2,673.3 1072.4,670.7 1069.7,668 1066.9,665.4 1064.2,662.8 1061.4,660.2 1058.7,657.7 1055.9,655.1 1053.2,652.5 1050.4,650 1047.7,647.4 1044.9,644.9 1042.2,642.4 1039.5,639.9 1036.7,637.3 1034,634.9 1031.2,632.4 1028.5,629.9 1025.7,627.4 1023,625 1020.2,622.5 1017.5,620.1 1014.7,617.7 1012,615.2 1009.2,612.8 1006.5,610.4 1003.7,608 1001,605.6 998.2,603.2 995.5,600.8 992.7,598.4 990,596.1 987.2,593.7Z" fill="none" stroke="#111" stroke-width="1.6"/><path d="M800.4,685.3 803.2,688.1 805.9,690.8 808.7,693.6 811.4,696.4 814.2,699.2 816.9,702 819.7,704.7 822.4,707.5 825.2,710.3 827.9,713.1 830.7,715.9 833.5,718.8 836.2,721.6 839,724.4 841.7,727.3 844.5,730.1 847.2,733 850,735.9 852.7,738.8 855.5,741.6 858.3,744.6 861,747.5 863.8,750.4 866.5,753.3 869.3,756.3 872,759.2 874.8,762.2 877.5,765.2 880.3,768.1 883.1,771.1 885.8,774.1 888.6,777.1 891.3,780.1 894.1,783.2 896.8,786.2 899.6,789.2 902.3,792.2 905.1,795.2 907.8,798.3 910.6,801.3 914.3,799.4 918.1,797.5 921.8,795.5 925.5,793.6 929.3,791.7 933,789.8 936.7,787.8 940.5,785.8 944.2,783.7 948,781.6 951.7,779.2 955.4,776.7 959.2,774 962.9,771.1 966.6,768.2 970.4,765.4 974.1,762.9 977.8,760.7 981.6,759 985.3,757.7 989,756.7 992.8,755.8 996.5,754.8 1000.2,753.7 1004,752.4 1007.7,750.9 1011.4,749.2 1015.2,747.5 1018.9,745.6 1022.6,743.7 1026.4,741.8 1030.1,739.9 1033.9,738 1037.6,736.1 1041.3,734.2 1045.1,732.3 1048.8,730.4 1052.5,728.4 1056.3,726.5 1060,724.6 1060,729.6 1056.3,731.5 1052.5,733.4 1048.8,735.4 1045.1,737.3 1041.3,739.2 1037.6,741.1 1033.9,743 1030.1,744.9 1026.4,746.8 1022.6,748.7 1018.9,750.6 1015.2,752.5 1011.4,754.2 1007.7,755.9 1004,757.4 1000.2,758.7 996.5,759.8 992.8,760.8 989,761.7 985.3,762.7 981.6,764 977.8,765.7 974.1,767.9 970.4,770.4 966.6,773.2 962.9,776.1 959.2,779 955.4,781.7 951.7,784.2 948,786.6 944.2,788.7 940.5,790.8 936.7,792.8 933,794.8 929.3,796.7 925.5,798.6 921.8,800.5 918.1,802.5 914.3,804.4 910.6,806.3 907.8,803.3 905.1,800.2 902.3,797.2 899.6,794.2 896.8,791.2 894.1,788.2 891.3,785.1 888.6,782.1 885.8,779.1 883.1,776.1 880.3,773.1 877.5,770.2 874.8,767.2 872,764.2 869.3,761.3 866.5,758.3 863.8,755.4 861,752.5 858.3,749.6 855.5,746.6 852.7,743.8 850,740.9 847.2,738 844.5,735.1 841.7,732.3 839,729.4 836.2,726.6 833.5,723.8 830.7,720.9 827.9,718.1 825.2,715.3 822.4,712.5 819.7,709.7 816.9,707 814.2,704.2 811.4,701.4 808.7,698.6 805.9,695.8 803.2,693.1 800.4,690.3Z" fill="#3f8ba6" stroke="#111" stroke-width="1.5"/><clipPath id="c49"><path d="M869.3,681.4 872.2,684.8 874,688.7 874.6,692.8 873.8,696.9 871.8,700.7 868.6,704 864.4,706.6 859.5,708.3 854,709.2 848.3,709.2 842.6,708.2 837.2,706.4 832.4,703.8 828.5,700.6 825.5,696.9 823.8,693 823.3,689 824,685.2 826,681.8 829.2,678.8 833.3,676.5 838.2,674.8 843.7,674 849.4,674 855.1,674.7 860.5,676.2 865.3,678.5Z"/></clipPath><path d="M869.3,681.4 872.2,684.8 874,688.7 874.6,692.8 873.8,696.9 871.8,700.7 868.6,704 864.4,706.6 859.5,708.3 854,709.2 848.3,709.2 842.6,708.2 837.2,706.4 832.4,703.8 828.5,700.6 825.5,696.9 823.8,693 823.3,689 824,685.2 826,681.8 829.2,678.8 833.3,676.5 838.2,674.8 843.7,674 849.4,674 855.1,674.7 860.5,676.2 865.3,678.5Z" fill="#80d4f0"/><path clip-path="url(#c49)" d="M869.3,681.4L869.3,689.4M872.6,685.4L872.6,693.4M874.4,690L874.4,698M874.3,694.8L874.3,702.8M872.6,699.5L872.6,707.5M869.2,703.5L869.2,711.5M864.4,706.6L864.4,714.6M858.6,708.6L858.6,716.6M852.1,709.3L852.1,717.3M845.4,708.8L845.4,716.8M838.9,707.1L838.9,715.1M833.2,704.3L833.2,712.3M828.5,700.6L828.5,708.6M825.2,696.3L825.2,704.3M823.5,691.7L823.5,699.7M823.5,687.1L823.5,695.1M825.2,682.9L825.2,690.9M828.6,679.2L828.6,687.2M833.3,676.5L833.3,684.5M839.1,674.6L839.1,682.6M845.6,673.9L845.6,681.9M852.3,674.2L852.3,682.2M858.7,675.6L858.7,683.6M864.5,678.1L864.5,686.1M869.3,685.4 872.6,689.4 874.4,694 874.3,698.8 872.6,703.5 869.2,707.5 864.4,710.6 858.6,712.6 852.1,713.3 845.4,712.8 838.9,711.1 833.2,708.3 828.5,704.6 825.2,700.3 823.5,695.7 823.5,691.1 825.2,686.9 828.6,683.2 833.3,680.5 839.1,678.6 845.6,677.9 852.3,678.2 858.7,679.6 864.5,682.1Z" fill="none" stroke="#3a7f9a" stroke-width="0.6"/><path clip-path="url(#c49)" d="M869.3,689.4 872.2,692.8 874,696.7 874.6,700.8 873.8,704.9 871.8,708.7 868.6,712 864.4,714.6 859.5,716.3 854,717.2 848.3,717.2 842.6,716.2 837.2,714.4 832.4,711.8 828.5,708.6 825.5,704.9 823.8,701 823.3,697 824,693.2 826,689.8 829.2,686.8 833.3,684.5 838.2,682.8 843.7,682 849.4,682 855.1,682.7 860.5,684.2 865.3,686.5Z" fill="#a9aeb5" stroke="#222" stroke-width="0.9"/><clipPath id="c50"><path d="M897.8,668.8 899.7,671.4 899.6,673.9 897.5,675.8 893.8,676.8 889.2,676.8 884.7,675.7 881.2,673.7 879.3,671.1 879.4,668.6 881.5,666.6 885.2,665.7 889.7,665.8 894.2,666.9Z"/></clipPath><path d="M897.8,668.8 899.7,671.4 899.6,673.9 897.5,675.8 893.8,676.8 889.2,676.8 884.7,675.7 881.2,673.7 879.3,671.1 879.4,668.6 881.5,666.6 885.2,665.7 889.7,665.8 894.2,666.9Z" fill="#80d4f0"/><path clip-path="url(#c50)" d="M897.8,668.8L897.8,676.8M899.7,671.4L899.7,679.4M899.6,673.9L899.6,681.9M897.5,675.8L897.5,683.8M893.8,676.8L893.8,684.8M889.2,676.8L889.2,684.8M884.7,675.7L884.7,683.7M881.2,673.7L881.2,681.7M879.3,671.1L879.3,679.1M879.4,668.6L879.4,676.6M881.5,666.6L881.5,674.6M885.2,665.7L885.2,673.7M889.7,665.8L889.7,673.8M894.2,666.9L894.2,674.9M897.8,672.8 899.7,675.4 899.6,677.9 897.5,679.8 893.8,680.8 889.2,680.8 884.7,679.7 881.2,677.7 879.3,675.1 879.4,672.6 881.5,670.6 885.2,669.7 889.7,669.8 894.2,670.9Z" fill="none" stroke="#3a7f9a" stroke-width="0.6"/><path clip-path="url(#c50)" d="M897.8,676.8 899.7,679.4 899.6,681.9 897.5,683.8 893.8,684.8 889.2,684.8 884.7,683.7 881.2,681.7 879.3,679.1 879.4,676.6 881.5,674.6 885.2,673.7 889.7,673.8 894.2,674.9Z" fill="#a9aeb5" stroke="#222" stroke-width="0.9"/><clipPath id="c51"><path d="M913.9,658.7 915.9,661.7 915.8,665.3 913.5,668.7 909.5,670.8 904.5,671.2 899.7,670.2 895.8,668.1 893.8,665.4 893.9,662.6 896.3,660 900.3,657.8 905.2,656.6 910.1,656.8Z"/></clipPath><path d="M913.9,658.7 915.9,661.7 915.8,665.3 913.5,668.7 909.5,670.8 904.5,671.2 899.7,670.2 895.8,668.1 893.8,665.4 893.9,662.6 896.3,660 900.3,657.8 905.2,656.6 910.1,656.8Z" fill="#80d4f0"/><path clip-path="url(#c51)" d="M913.9,658.7L913.9,666.7M915.9,661.7L915.9,669.7M915.8,665.3L915.8,673.3M913.5,668.7L913.5,676.7M909.5,670.8L909.5,678.8M904.5,671.2L904.5,679.2M899.7,670.2L899.7,678.2M895.8,668.1L895.8,676.1M893.8,665.4L893.8,673.4M893.9,662.6L893.9,670.6M896.3,660L896.3,668M900.3,657.8L900.3,665.8M905.2,656.6L905.2,664.6M910.1,656.8L910.1,664.8M913.9,662.7 915.9,665.7 915.8,669.3 913.5,672.7 909.5,674.8 904.5,675.2 899.7,674.2 895.8,672.1 893.8,669.4 893.9,666.6 896.3,664 900.3,661.8 905.2,660.6 910.1,660.8Z" fill="none" stroke="#3a7f9a" stroke-width="0.6"/><path clip-path="url(#c51)" d="M913.9,666.7 915.9,669.7 915.8,673.3 913.5,676.7 909.5,678.8 904.5,679.2 899.7,678.2 895.8,676.1 893.8,673.4 893.9,670.6 896.3,668 900.3,665.8 905.2,664.6 910.1,664.8Z" fill="#a9aeb5" stroke="#222" stroke-width="0.9"/><clipPath id="c52"><path d="M934.3,649.7 936.3,653.5 937.2,657 936.9,659.9 935.4,661.6 933,662 930,660.9 926.8,658.6 923.8,655.4 921.4,651.7 919.9,648.1 919.6,645 920.5,642.9 922.5,641.9 925.2,642.2 928.4,643.7 931.6,646.3Z"/></clipPath><path d="M934.3,649.7 936.3,653.5 937.2,657 936.9,659.9 935.4,661.6 933,662 930,660.9 926.8,658.6 923.8,655.4 921.4,651.7 919.9,648.1 919.6,645 920.5,642.9 922.5,641.9 925.2,642.2 928.4,643.7 931.6,646.3Z" fill="#80d4f0"/><path clip-path="url(#c52)" d="M934.3,649.7L934.3,657.7M936.3,653.5L936.3,661.5M937.2,657L937.2,665M936.9,659.9L936.9,667.9M935.4,661.6L935.4,669.6M933,662L933,670M930,660.9L930,668.9M926.8,658.6L926.8,666.6M923.8,655.4L923.8,663.4M921.4,651.7L921.4,659.7M919.9,648.1L919.9,656.1M919.6,645L919.6,653M920.5,642.9L920.5,650.9M922.5,641.9L922.5,649.9M925.2,642.2L925.2,650.2M928.4,643.7L928.4,651.7M931.6,646.3L931.6,654.3M934.3,653.7 936.3,657.5 937.2,661 936.9,663.9 935.4,665.6 933,666 930,664.9 926.8,662.6 923.8,659.4 921.4,655.7 919.9,652.1 919.6,649 920.5,646.9 922.5,645.9 925.2,646.2 928.4,647.7 931.6,650.3Z" fill="none" stroke="#3a7f9a" stroke-width="0.6"/><path clip-path="url(#c52)" d="M934.3,657.7 936.3,661.5 937.2,665 936.9,667.9 935.4,669.6 933,670 930,668.9 926.8,666.6 923.8,663.4 921.4,659.7 919.9,656.1 919.6,653 920.5,650.9 922.5,649.9 925.2,650.2 928.4,651.7 931.6,654.3Z" fill="#a9aeb5" stroke="#222" stroke-width="0.9"/><clipPath id="c53"><path d="M984.3,663.6 985.6,665.8 985.5,668 984.2,669.9 981.9,671.1 978.9,671.2 976,670.4 973.7,668.8 972.5,666.7 972.5,664.4 973.8,662.6 976.2,661.4 979.1,661.2 982,662Z"/></clipPath><path d="M984.3,663.6 985.6,665.8 985.5,668 984.2,669.9 981.9,671.1 978.9,671.2 976,670.4 973.7,668.8 972.5,666.7 972.5,664.4 973.8,662.6 976.2,661.4 979.1,661.2 982,662Z" fill="#80d4f0"/><path clip-path="url(#c53)" d="M984.3,663.6L984.3,671.6M985.6,665.8L985.6,673.8M985.5,668L985.5,676M984.2,669.9L984.2,677.9M981.9,671.1L981.9,679.1M978.9,671.2L978.9,679.2M976,670.4L976,678.4M973.7,668.8L973.7,676.8M972.5,666.7L972.5,674.7M972.5,664.4L972.5,672.4M973.8,662.6L973.8,670.6M976.2,661.4L976.2,669.4M979.1,661.2L979.1,669.2M982,662L982,670M984.3,667.6 985.6,669.8 985.5,672 984.2,673.9 981.9,675.1 978.9,675.2 976,674.4 973.7,672.8 972.5,670.7 972.5,668.4 973.8,666.6 976.2,665.4 979.1,665.2 982,666Z" fill="none" stroke="#3a7f9a" stroke-width="0.6"/><path clip-path="url(#c53)" d="M984.3,671.6 985.6,673.8 985.5,676 984.2,677.9 981.9,679.1 978.9,679.2 976,678.4 973.7,676.8 972.5,674.7 972.5,672.4 973.8,670.6 976.2,669.4 979.1,669.2 982,670Z" fill="#a9aeb5" stroke="#222" stroke-width="0.9"/><clipPath id="c54"><path d="M957.4,672.1 960,676.3 960.1,681 957.9,685.1 953.5,688.2 947.8,689.6 941.8,689.1 936.6,686.7 932.9,683.1 931.5,678.7 932.6,674.2 935.9,670.3 941,667.9 947,667.4 952.8,668.9Z"/></clipPath><path d="M957.4,672.1 960,676.3 960.1,681 957.9,685.1 953.5,688.2 947.8,689.6 941.8,689.1 936.6,686.7 932.9,683.1 931.5,678.7 932.6,674.2 935.9,670.3 941,667.9 947,667.4 952.8,668.9Z" fill="#80d4f0"/><path clip-path="url(#c54)" d="M957.4,672.1L957.4,680.1M960,676.3L960,684.3M960.1,681L960.1,689M957.9,685.1L957.9,693.1M953.5,688.2L953.5,696.2M947.8,689.6L947.8,697.6M941.8,689.1L941.8,697.1M936.6,686.7L936.6,694.7M932.9,683.1L932.9,691.1M931.5,678.7L931.5,686.7M932.6,674.2L932.6,682.2M935.9,670.3L935.9,678.3M941,667.9L941,675.9M947,667.4L947,675.4M952.8,668.9L952.8,676.9M957.4,676.1 960,680.3 960.1,685 957.9,689.1 953.5,692.2 947.8,693.6 941.8,693.1 936.6,690.7 932.9,687.1 931.5,682.7 932.6,678.2 935.9,674.3 941,671.9 947,671.4 952.8,672.9Z" fill="none" stroke="#3a7f9a" stroke-width="0.6"/><path clip-path="url(#c54)" d="M957.4,680.1 960,684.3 960.1,689 957.9,693.1 953.5,696.2 947.8,697.6 941.8,697.1 936.6,694.7 932.9,691.1 931.5,686.7 932.6,682.2 935.9,678.3 941,675.9 947,675.4 952.8,676.9Z" fill="#a9aeb5" stroke="#222" stroke-width="0.9"/><clipPath id="c55"><path d="M987.5,703.2 988.8,707.5 988.8,711.7 987.4,715.8 984.7,719.5 980.8,722.7 975.9,725 970.3,726.4 964.2,726.5 958,725.5 952,723.7 946.4,721.2 941.6,718.1 937.8,714.7 935.1,711 933.8,707.4 933.8,703.8 935.2,700.5 937.9,697.3 941.8,694.3 946.7,691.6 952.2,689.6 958.3,688.6 964.5,688.8 970.5,690.1 976.1,692.4 980.9,695.5 984.8,699.2Z"/></clipPath><path d="M987.5,703.2 988.8,707.5 988.8,711.7 987.4,715.8 984.7,719.5 980.8,722.7 975.9,725 970.3,726.4 964.2,726.5 958,725.5 952,723.7 946.4,721.2 941.6,718.1 937.8,714.7 935.1,711 933.8,707.4 933.8,703.8 935.2,700.5 937.9,697.3 941.8,694.3 946.7,691.6 952.2,689.6 958.3,688.6 964.5,688.8 970.5,690.1 976.1,692.4 980.9,695.5 984.8,699.2Z" fill="#80d4f0"/><path clip-path="url(#c55)" d="M987.5,703.2L987.5,711.2M988.9,708.2L988.9,716.2M988.5,713.1L988.5,721.1M986.2,717.7L986.2,725.7M982.2,721.7L982.2,729.7M976.8,724.7L976.8,732.7M970.3,726.4L970.3,734.4M963.2,726.4L963.2,734.4M956,725L956,733M949.1,722.5L949.1,730.5M943.1,719.2L943.1,727.2M938.3,715.3L938.3,723.3M935.1,711L935.1,719M933.7,706.8L933.7,714.8M934.2,702.7L934.2,710.7M936.4,698.9L936.4,706.9M940.4,695.3L940.4,703.3M945.8,692L945.8,700M952.2,689.6L952.2,697.6M959.3,688.6L959.3,696.6M966.5,689.1L966.5,697.1M973.4,691.1L973.4,699.1M979.4,694.4L979.4,702.4M984.2,698.5L984.2,706.5M987.5,707.2 988.9,712.2 988.5,717.1 986.2,721.7 982.2,725.7 976.8,728.7 970.3,730.4 963.2,730.4 956,729 949.1,726.5 943.1,723.2 938.3,719.3 935.1,715 933.7,710.8 934.2,706.7 936.4,702.9 940.4,699.3 945.8,696 952.2,693.6 959.3,692.6 966.5,693.1 973.4,695.1 979.4,698.4 984.2,702.5Z" fill="none" stroke="#3a7f9a" stroke-width="0.6"/><path clip-path="url(#c55)" d="M987.5,711.2 988.8,715.5 988.8,719.7 987.4,723.8 984.7,727.5 980.8,730.7 975.9,733 970.3,734.4 964.2,734.5 958,733.5 952,731.7 946.4,729.2 941.6,726.1 937.8,722.7 935.1,719 933.8,715.4 933.8,711.8 935.2,708.5 937.9,705.3 941.8,702.3 946.7,699.6 952.2,697.6 958.3,696.6 964.5,696.8 970.5,698.1 976.1,700.4 980.9,703.5 984.8,707.2Z" fill="#a9aeb5" stroke="#222" stroke-width="0.9"/><clipPath id="c56"><path d="M920,706.4 922.6,710.3 923,714.3 921.1,718.2 917.2,721.5 911.9,723.6 906.1,723.8 900.6,722.2 896.2,719.1 893.7,715 893.3,710.5 895.2,706.3 899.1,703.1 904.3,701.4 910.1,701.5 915.7,703.3Z"/></clipPath><path d="M920,706.4 922.6,710.3 923,714.3 921.1,718.2 917.2,721.5 911.9,723.6 906.1,723.8 900.6,722.2 896.2,719.1 893.7,715 893.3,710.5 895.2,706.3 899.1,703.1 904.3,701.4 910.1,701.5 915.7,703.3Z" fill="#80d4f0"/><path clip-path="url(#c56)" d="M920,706.4L920,714.4M922.6,710.3L922.6,718.3M923,714.3L923,722.3M921.1,718.2L921.1,726.2M917.2,721.5L917.2,729.5M911.9,723.6L911.9,731.6M906.1,723.8L906.1,731.8M900.6,722.2L900.6,730.2M896.2,719.1L896.2,727.1M893.7,715L893.7,723M893.3,710.5L893.3,718.5M895.2,706.3L895.2,714.3M899.1,703.1L899.1,711.1M904.3,701.4L904.3,709.4M910.1,701.5L910.1,709.5M915.7,703.3L915.7,711.3M920,710.4 922.6,714.3 923,718.3 921.1,722.2 917.2,725.5 911.9,727.6 906.1,727.8 900.6,726.2 896.2,723.1 893.7,719 893.3,714.5 895.2,710.3 899.1,707.1 904.3,705.4 910.1,705.5 915.7,707.3Z" fill="none" stroke="#3a7f9a" stroke-width="0.6"/><path clip-path="url(#c56)" d="M920,714.4 922.6,718.3 923,722.3 921.1,726.2 917.2,729.5 911.9,731.6 906.1,731.8 900.6,730.2 896.2,727.1 893.7,723 893.3,718.5 895.2,714.3 899.1,711.1 904.3,709.4 910.1,709.5 915.7,711.3Z" fill="#a9aeb5" stroke="#222" stroke-width="0.9"/><clipPath id="c57"><path d="M1003.8,712.2 1004.8,713.7 1004.8,715.4 1003.7,716.8 1001.8,717.7 999.4,717.9 997.1,717.4 995.2,716.3 994.2,714.7 994.2,713 995.3,711.6 997.2,710.7 999.6,710.5 1001.9,711Z"/></clipPath><path d="M1003.8,712.2 1004.8,713.7 1004.8,715.4 1003.7,716.8 1001.8,717.7 999.4,717.9 997.1,717.4 995.2,716.3 994.2,714.7 994.2,713 995.3,711.6 997.2,710.7 999.6,710.5 1001.9,711Z" fill="#80d4f0"/><path clip-path="url(#c57)" d="M1003.8,712.2L1003.8,720.2M1004.8,713.7L1004.8,721.7M1004.8,715.4L1004.8,723.4M1003.7,716.8L1003.7,724.8M1001.8,717.7L1001.8,725.7M999.4,717.9L999.4,725.9M997.1,717.4L997.1,725.4M995.2,716.3L995.2,724.3M994.2,714.7L994.2,722.7M994.2,713L994.2,721M995.3,711.6L995.3,719.6M997.2,710.7L997.2,718.7M999.6,710.5L999.6,718.5M1001.9,711L1001.9,719M1003.8,716.2 1004.8,717.7 1004.8,719.4 1003.7,720.8 1001.8,721.7 999.4,721.9 997.1,721.4 995.2,720.3 994.2,718.7 994.2,717 995.3,715.6 997.2,714.7 999.6,714.5 1001.9,715Z" fill="none" stroke="#3a7f9a" stroke-width="0.6"/><path clip-path="url(#c57)" d="M1003.8,720.2 1004.8,721.7 1004.8,723.4 1003.7,724.8 1001.8,725.7 999.4,725.9 997.1,725.4 995.2,724.3 994.2,722.7 994.2,721 995.3,719.6 997.2,718.7 999.6,718.5 1001.9,719Z" fill="#a9aeb5" stroke="#222" stroke-width="0.9"/><clipPath id="c58"><path d="M1005,728.5 1007.7,732 1008.5,735.8 1007.2,739.5 1003.9,742.7 999.1,744.8 993.3,745.6 987.3,744.9 981.7,743 977.3,740.1 974.6,736.8 973.8,733.3 975.1,729.9 978.4,726.9 983.2,724.7 988.9,723.7 995,724 1000.5,725.7Z"/></clipPath><path d="M1005,728.5 1007.7,732 1008.5,735.8 1007.2,739.5 1003.9,742.7 999.1,744.8 993.3,745.6 987.3,744.9 981.7,743 977.3,740.1 974.6,736.8 973.8,733.3 975.1,729.9 978.4,726.9 983.2,724.7 988.9,723.7 995,724 1000.5,725.7Z" fill="#80d4f0"/><path clip-path="url(#c58)" d="M1005,728.5L1005,736.5M1007.7,732L1007.7,740M1008.5,735.8L1008.5,743.8M1007.2,739.5L1007.2,747.5M1003.9,742.7L1003.9,750.7M999.1,744.8L999.1,752.8M993.3,745.6L993.3,753.6M987.3,744.9L987.3,752.9M981.7,743L981.7,751M977.3,740.1L977.3,748.1M974.6,736.8L974.6,744.8M973.8,733.3L973.8,741.3M975.1,729.9L975.1,737.9M978.4,726.9L978.4,734.9M983.2,724.7L983.2,732.7M988.9,723.7L988.9,731.7M995,724L995,732M1000.5,725.7L1000.5,733.7M1005,732.5 1007.7,736 1008.5,739.8 1007.2,743.5 1003.9,746.7 999.1,748.8 993.3,749.6 987.3,748.9 981.7,747 977.3,744.1 974.6,740.8 973.8,737.3 975.1,733.9 978.4,730.9 983.2,728.7 988.9,727.7 995,728 1000.5,729.7Z" fill="none" stroke="#3a7f9a" stroke-width="0.6"/><path clip-path="url(#c58)" d="M1005,736.5 1007.7,740 1008.5,743.8 1007.2,747.5 1003.9,750.7 999.1,752.8 993.3,753.6 987.3,752.9 981.7,751 977.3,748.1 974.6,744.8 973.8,741.3 975.1,737.9 978.4,734.9 983.2,732.7 988.9,731.7 995,732 1000.5,733.7Z" fill="#a9aeb5" stroke="#222" stroke-width="0.9"/><clipPath id="c59"><path d="M892.3,732.9 893.3,734.7 893.3,736.6 892.1,738.2 890.1,739.1 887.6,739.3 885.1,738.6 883.2,737.2 882.1,735.4 882.2,733.6 883.4,732 885.4,731 887.9,730.9 890.4,731.5Z"/></clipPath><path d="M892.3,732.9 893.3,734.7 893.3,736.6 892.1,738.2 890.1,739.1 887.6,739.3 885.1,738.6 883.2,737.2 882.1,735.4 882.2,733.6 883.4,732 885.4,731 887.9,730.9 890.4,731.5Z" fill="#80d4f0"/><path clip-path="url(#c59)" d="M892.3,732.9L892.3,740.9M893.3,734.7L893.3,742.7M893.3,736.6L893.3,744.6M892.1,738.2L892.1,746.2M890.1,739.1L890.1,747.1M887.6,739.3L887.6,747.3M885.1,738.6L885.1,746.6M883.2,737.2L883.2,745.2M882.1,735.4L882.1,743.4M882.2,733.6L882.2,741.6M883.4,732L883.4,740M885.4,731L885.4,739M887.9,730.9L887.9,738.9M890.4,731.5L890.4,739.5M892.3,736.9 893.3,738.7 893.3,740.6 892.1,742.2 890.1,743.1 887.6,743.3 885.1,742.6 883.2,741.2 882.1,739.4 882.2,737.6 883.4,736 885.4,735 887.9,734.9 890.4,735.5Z" fill="none" stroke="#3a7f9a" stroke-width="0.6"/><path clip-path="url(#c59)" d="M892.3,740.9 893.3,742.7 893.3,744.6 892.1,746.2 890.1,747.1 887.6,747.3 885.1,746.6 883.2,745.2 882.1,743.4 882.2,741.6 883.4,740 885.4,739 887.9,738.9 890.4,739.5Z" fill="#a9aeb5" stroke="#222" stroke-width="0.9"/><clipPath id="c60"><path d="M950.2,748 952.2,751.3 952.1,755.1 949.8,758.9 945.8,761.7 941,762.8 936.2,762.1 932.4,759.8 930.4,756.3 930.5,752.5 932.8,749 936.7,746.4 941.6,745.3 946.4,745.9Z"/></clipPath><path d="M950.2,748 952.2,751.3 952.1,755.1 949.8,758.9 945.8,761.7 941,762.8 936.2,762.1 932.4,759.8 930.4,756.3 930.5,752.5 932.8,749 936.7,746.4 941.6,745.3 946.4,745.9Z" fill="#80d4f0"/><path clip-path="url(#c60)" d="M950.2,748L950.2,756M952.2,751.3L952.2,759.3M952.1,755.1L952.1,763.1M949.8,758.9L949.8,766.9M945.8,761.7L945.8,769.7M941,762.8L941,770.8M936.2,762.1L936.2,770.1M932.4,759.8L932.4,767.8M930.4,756.3L930.4,764.3M930.5,752.5L930.5,760.5M932.8,749L932.8,757M936.7,746.4L936.7,754.4M941.6,745.3L941.6,753.3M946.4,745.9L946.4,753.9M950.2,752 952.2,755.3 952.1,759.1 949.8,762.9 945.8,765.7 941,766.8 936.2,766.1 932.4,763.8 930.4,760.3 930.5,756.5 932.8,753 936.7,750.4 941.6,749.3 946.4,749.9Z" fill="none" stroke="#3a7f9a" stroke-width="0.6"/><path clip-path="url(#c60)" d="M950.2,756 952.2,759.3 952.1,763.1 949.8,766.9 945.8,769.7 941,770.8 936.2,770.1 932.4,767.8 930.4,764.3 930.5,760.5 932.8,757 936.7,754.4 941.6,753.3 946.4,753.9Z" fill="#a9aeb5" stroke="#222" stroke-width="0.9"/><clipPath id="c61"><path d="M972.2,750.8 973.3,752.3 973.2,753.8 972,755.2 969.9,756.3 967.4,756.7 964.9,756.5 963,755.4 961.9,753.8 962,752 963.2,750.4 965.2,749.4 967.7,749.2 970.2,749.7Z"/></clipPath><path d="M972.2,750.8 973.3,752.3 973.2,753.8 972,755.2 969.9,756.3 967.4,756.7 964.9,756.5 963,755.4 961.9,753.8 962,752 963.2,750.4 965.2,749.4 967.7,749.2 970.2,749.7Z" fill="#80d4f0"/><path clip-path="url(#c61)" d="M972.2,750.8L972.2,758.8M973.3,752.3L973.3,760.3M973.2,753.8L973.2,761.8M972,755.2L972,763.2M969.9,756.3L969.9,764.3M967.4,756.7L967.4,764.7M964.9,756.5L964.9,764.5M963,755.4L963,763.4M961.9,753.8L961.9,761.8M962,752L962,760M963.2,750.4L963.2,758.4M965.2,749.4L965.2,757.4M967.7,749.2L967.7,757.2M970.2,749.7L970.2,757.7M972.2,754.8 973.3,756.3 973.2,757.8 972,759.2 969.9,760.3 967.4,760.7 964.9,760.5 963,759.4 961.9,757.8 962,756 963.2,754.4 965.2,753.4 967.7,753.2 970.2,753.7Z" fill="none" stroke="#3a7f9a" stroke-width="0.6"/><path clip-path="url(#c61)" d="M972.2,758.8 973.3,760.3 973.2,761.8 972,763.2 969.9,764.3 967.4,764.7 964.9,764.5 963,763.4 961.9,761.8 962,760 963.2,758.4 965.2,757.4 967.7,757.2 970.2,757.7Z" fill="#a9aeb5" stroke="#222" stroke-width="0.9"/><clipPath id="c62"><path d="M920.5,762.5 921.6,764.3 921.5,766.3 920.3,767.9 918.2,769 915.6,769.2 913,768.5 911,767.1 910,765.3 910,763.4 911.3,761.8 913.4,760.7 916,760.5 918.5,761.2Z"/></clipPath><path d="M920.5,762.5 921.6,764.3 921.5,766.3 920.3,767.9 918.2,769 915.6,769.2 913,768.5 911,767.1 910,765.3 910,763.4 911.3,761.8 913.4,760.7 916,760.5 918.5,761.2Z" fill="#80d4f0"/><path clip-path="url(#c62)" d="M920.5,762.5L920.5,770.5M921.6,764.3L921.6,772.3M921.5,766.3L921.5,774.3M920.3,767.9L920.3,775.9M918.2,769L918.2,777M915.6,769.2L915.6,777.2M913,768.5L913,776.5M911,767.1L911,775.1M910,765.3L910,773.3M910,763.4L910,771.4M911.3,761.8L911.3,769.8M913.4,760.7L913.4,768.7M916,760.5L916,768.5M918.5,761.2L918.5,769.2M920.5,766.5 921.6,768.3 921.5,770.3 920.3,771.9 918.2,773 915.6,773.2 913,772.5 911,771.1 910,769.3 910,767.4 911.3,765.8 913.4,764.7 916,764.5 918.5,765.2Z" fill="none" stroke="#3a7f9a" stroke-width="0.6"/><path clip-path="url(#c62)" d="M920.5,770.5 921.6,772.3 921.5,774.3 920.3,775.9 918.2,777 915.6,777.2 913,776.5 911,775.1 910,773.3 910,771.4 911.3,769.8 913.4,768.7 916,768.5 918.5,769.2Z" fill="#a9aeb5" stroke="#222" stroke-width="0.9"/><mask id="m48" maskUnits="userSpaceOnUse" x="0" y="0" width="1920" height="1029"><rect x="0" y="0" width="1920" height="1029" fill="#fff"/><path d="M869.3,681.4 872.2,684.8 874,688.7 874.6,692.8 873.8,696.9 871.8,700.7 868.6,704 864.4,706.6 859.5,708.3 854,709.2 848.3,709.2 842.6,708.2 837.2,706.4 832.4,703.8 828.5,700.6 825.5,696.9 823.8,693 823.3,689 824,685.2 826,681.8 829.2,678.8 833.3,676.5 838.2,674.8 843.7,674 849.4,674 855.1,674.7 860.5,676.2 865.3,678.5ZM897.8,668.8 899.7,671.4 899.6,673.9 897.5,675.8 893.8,676.8 889.2,676.8 884.7,675.7 881.2,673.7 879.3,671.1 879.4,668.6 881.5,666.6 885.2,665.7 889.7,665.8 894.2,666.9ZM913.9,658.7 915.9,661.7 915.8,665.3 913.5,668.7 909.5,670.8 904.5,671.2 899.7,670.2 895.8,668.1 893.8,665.4 893.9,662.6 896.3,660 900.3,657.8 905.2,656.6 910.1,656.8ZM934.3,649.7 936.3,653.5 937.2,657 936.9,659.9 935.4,661.6 933,662 930,660.9 926.8,658.6 923.8,655.4 921.4,651.7 919.9,648.1 919.6,645 920.5,642.9 922.5,641.9 925.2,642.2 928.4,643.7 931.6,646.3ZM984.3,663.6 985.6,665.8 985.5,668 984.2,669.9 981.9,671.1 978.9,671.2 976,670.4 973.7,668.8 972.5,666.7 972.5,664.4 973.8,662.6 976.2,661.4 979.1,661.2 982,662ZM957.4,672.1 960,676.3 960.1,681 957.9,685.1 953.5,688.2 947.8,689.6 941.8,689.1 936.6,686.7 932.9,683.1 931.5,678.7 932.6,674.2 935.9,670.3 941,667.9 947,667.4 952.8,668.9ZM987.5,703.2 988.8,707.5 988.8,711.7 987.4,715.8 984.7,719.5 980.8,722.7 975.9,725 970.3,726.4 964.2,726.5 958,725.5 952,723.7 946.4,721.2 941.6,718.1 937.8,714.7 935.1,711 933.8,707.4 933.8,703.8 935.2,700.5 937.9,697.3 941.8,694.3 946.7,691.6 952.2,689.6 958.3,688.6 964.5,688.8 970.5,690.1 976.1,692.4 980.9,695.5 984.8,699.2ZM920,706.4 922.6,710.3 923,714.3 921.1,718.2 917.2,721.5 911.9,723.6 906.1,723.8 900.6,722.2 896.2,719.1 893.7,715 893.3,710.5 895.2,706.3 899.1,703.1 904.3,701.4 910.1,701.5 915.7,703.3ZM1003.8,712.2 1004.8,713.7 1004.8,715.4 1003.7,716.8 1001.8,717.7 999.4,717.9 997.1,717.4 995.2,716.3 994.2,714.7 994.2,713 995.3,711.6 997.2,710.7 999.6,710.5 1001.9,711ZM1005,728.5 1007.7,732 1008.5,735.8 1007.2,739.5 1003.9,742.7 999.1,744.8 993.3,745.6 987.3,744.9 981.7,743 977.3,740.1 974.6,736.8 973.8,733.3 975.1,729.9 978.4,726.9 983.2,724.7 988.9,723.7 995,724 1000.5,725.7ZM892.3,732.9 893.3,734.7 893.3,736.6 892.1,738.2 890.1,739.1 887.6,739.3 885.1,738.6 883.2,737.2 882.1,735.4 882.2,733.6 883.4,732 885.4,731 887.9,730.9 890.4,731.5ZM950.2,748 952.2,751.3 952.1,755.1 949.8,758.9 945.8,761.7 941,762.8 936.2,762.1 932.4,759.8 930.4,756.3 930.5,752.5 932.8,749 936.7,746.4 941.6,745.3 946.4,745.9ZM972.2,750.8 973.3,752.3 973.2,753.8 972,755.2 969.9,756.3 967.4,756.7 964.9,756.5 963,755.4 961.9,753.8 962,752 963.2,750.4 965.2,749.4 967.7,749.2 970.2,749.7ZM920.5,762.5 921.6,764.3 921.5,766.3 920.3,767.9 918.2,769 915.6,769.2 913,768.5 911,767.1 910,765.3 910,763.4 911.3,761.8 913.4,760.7 916,760.5 918.5,761.2Z" fill="#000"/></mask><g mask="url(#m48)"><path d="M800.4,685.3 812.5,680.2 821.7,689.2 809.6,694.5ZM809.6,694.5 821.7,689.2 830.9,698.3 818.8,703.8ZM818.8,703.8 830.9,698.3 840.1,707.5 827.9,713.1ZM827.9,713.1 840.1,707.5 849.3,716.9 837.1,722.5ZM837.1,722.5 849.3,716.9 858.6,726.4 846.3,732ZM846.3,732 858.6,726.4 867.8,736 855.5,741.6ZM855.5,741.6 867.8,736 877,745.8 864.7,751.4ZM864.7,751.4 877,745.8 886.2,755.6 873.9,761.2ZM873.9,761.2 886.2,755.6 895.4,765.4 883.1,771.1ZM883.1,771.1 895.4,765.4 904.6,775.3 892.2,781.1ZM892.2,781.1 904.6,775.3 913.8,785.1 901.4,791.2ZM901.4,791.2 913.8,785.1 923.1,794.9 910.6,801.3ZM812.5,680.2 824.6,675 833.8,683.8 821.7,689.2ZM821.7,689.2 833.8,683.8 843.1,692.7 830.9,698.3ZM830.9,698.3 843.1,692.7 852.3,701.8 840.1,707.5ZM840.1,707.5 852.3,701.8 861.5,711.1 849.3,716.9ZM849.3,716.9 861.5,711.1 870.8,720.7 858.6,726.4ZM858.6,726.4 870.8,720.7 880,730.4 867.8,736ZM867.8,736 880,730.4 889.3,740.2 877,745.8ZM877,745.8 889.3,740.2 898.5,750 886.2,755.6ZM886.2,755.6 898.5,750 907.8,759.7 895.4,765.4ZM895.4,765.4 907.8,759.7 917,769.4 904.6,775.3ZM904.6,775.3 917,769.4 926.3,778.9 913.8,785.1ZM913.8,785.1 926.3,778.9 935.5,788.5 923.1,794.9ZM824.6,675 836.6,669.9 845.9,678.4 833.8,683.8ZM833.8,683.8 845.9,678.4 855.2,687.1 843.1,692.7ZM843.1,692.7 855.2,687.1 864.5,696 852.3,701.8ZM889.3,740.2 901.6,734.3 910.9,744 898.5,750ZM898.5,750 910.9,744 920.1,753.6 907.8,759.7ZM907.8,759.7 920.1,753.6 929.4,763.1 917,769.4ZM836.6,669.9 848.7,664.7 858,672.8 845.9,678.4ZM845.9,678.4 858,672.8 867.3,681.2 855.2,687.1ZM858,672.8 870.2,667.7 879.5,675.5 867.3,681.2ZM867.3,681.2 879.5,675.5 888.8,683.8 876.7,689.8ZM950.8,712.5 963.1,707 972.5,716.6 960.2,721.8ZM981.9,725.7 994.3,719.7 1003.7,728.2 991.3,734.2ZM984.8,710.4 997.1,704.5 1006.6,713.7 994.3,719.7ZM994.3,719.7 1006.6,713.7 1016.1,722.2 1003.7,728.2ZM1003.7,728.2 1016.1,722.2 1025.6,730 1013.2,736.1ZM921.2,631.8 933.3,626.1 942.8,633.2 930.7,639.1ZM930.7,639.1 942.8,633.2 952.4,640.7 940.2,646.7ZM997.1,704.5 1009.5,698.7 1019,707.9 1006.6,713.7ZM1006.6,713.7 1019,707.9 1028.5,716.2 1016.1,722.2ZM933.3,626.1 945.4,620.4 954.9,627.3 942.8,633.2ZM942.8,633.2 954.9,627.3 964.5,634.7 952.4,640.7ZM1009.5,698.7 1021.8,692.9 1031.3,702.1 1019,707.9ZM1019,707.9 1031.3,702.1 1040.9,710.3 1028.5,716.2Z" fill="#9a9ca1" stroke="#9a9ca1" stroke-width="0.8"/><path d="M852.3,701.8 864.5,696 873.8,705.3 861.5,711.1ZM861.5,711.1 873.8,705.3 883,714.8 870.8,720.7ZM870.8,720.7 883,714.8 892.3,724.5 880,730.4ZM880,730.4 892.3,724.5 901.6,734.3 889.3,740.2ZM917,769.4 929.4,763.1 938.7,772.4 926.3,778.9ZM941.4,703 953.6,697.1 963.1,707 950.8,712.5ZM972.5,716.6 984.8,710.4 994.3,719.7 981.9,725.7ZM909.1,638 921.2,631.8 930.7,639.1 918.6,645.4ZM987.7,694.6 1000,688.8 1009.5,698.7 997.1,704.5Z" fill="#a0a2a7" stroke="#a0a2a7" stroke-width="0.8"/><path d="M926.3,778.9 938.7,772.4 948,781.6 935.5,788.5ZM855.2,687.1 867.3,681.2 876.7,689.8 864.5,696ZM918.6,645.4 930.7,639.1 940.2,646.7 928.1,653.1ZM975.4,700.6 987.7,694.6 997.1,704.5 984.8,710.4ZM940.2,646.7 952.4,640.7 961.9,649 949.7,655.1ZM952.4,640.7 964.5,634.7 974,642.9 961.9,649ZM1000,688.8 1012.2,682.9 1021.8,692.9 1009.5,698.7Z" fill="#a6a8ad" stroke="#a6a8ad" stroke-width="0.8"/><path d="M864.5,696 876.7,689.8 886,698.8 873.8,705.3ZM876.7,689.8 888.8,683.8 898.2,692.5 886,698.8ZM932,693.5 944.2,687.3 953.6,697.1 941.4,703ZM963.1,707 975.4,700.6 984.8,710.4 972.5,716.6ZM928.1,653.1 940.2,646.7 949.7,655.1 937.5,661.5ZM965.9,690.5 978.2,684.3 987.7,694.6 975.4,700.6ZM949.7,655.1 961.9,649 971.4,658.1 959.2,664.2ZM978.2,684.3 990.4,678.4 1000,688.8 987.7,694.6ZM961.9,649 974,642.9 983.6,652.1 971.4,658.1ZM990.4,678.4 1002.7,672.5 1012.2,682.9 1000,688.8Z" fill="#acaeb3" stroke="#acaeb3" stroke-width="0.8"/><path d="M873.8,705.3 886,698.8 895.3,708.2 883,714.8ZM886,698.8 898.2,692.5 907.5,701.5 895.3,708.2ZM937.5,661.5 949.7,655.1 959.2,664.2 947,670.6ZM959.2,664.2 971.4,658.1 980.9,668.1 968.7,674.1ZM968.7,674.1 980.9,668.1 990.4,678.4 978.2,684.3ZM971.4,658.1 983.6,652.1 993.1,662.1 980.9,668.1ZM980.9,668.1 993.1,662.1 1002.7,672.5 990.4,678.4Z" fill="#b2b4b9" stroke="#b2b4b9" stroke-width="0.8"/><path d="M883,714.8 895.3,708.2 904.6,717.8 892.3,724.5ZM892.3,724.5 904.6,717.8 913.9,727.4 901.6,734.3ZM922.6,684.4 934.8,677.8 944.2,687.3 932,693.5ZM947,670.6 959.2,664.2 968.7,674.1 956.4,680.3ZM956.4,680.3 968.7,674.1 978.2,684.3 965.9,690.5Z" fill="#b8babf" stroke="#b8babf" stroke-width="0.8"/><path d="M901.6,734.3 913.9,727.4 923.2,737 910.9,744ZM910.9,744 923.2,737 932.5,746.3 920.1,753.6ZM895.3,708.2 907.5,701.5 916.8,710.9 904.6,717.8ZM894.4,660.2 906.5,653 915.9,660.7 903.8,667.7ZM903.8,667.7 915.9,660.7 925.3,668.9 913.2,675.7ZM913.2,675.7 925.3,668.9 934.8,677.8 922.6,684.4ZM953.6,697.1 965.9,690.5 975.4,700.6 963.1,707Z" fill="#bec0c5" stroke="#bec0c5" stroke-width="0.8"/><path d="M920.1,753.6 932.5,746.3 941.8,755.4 929.4,763.1ZM904.6,717.8 916.8,710.9 926.2,720.3 913.9,727.4ZM885,652.9 897.1,645.6 906.5,653 894.4,660.2Z" fill="#c4c6cb" stroke="#c4c6cb" stroke-width="0.8"/><path d="M929.4,763.1 941.8,755.4 951.1,764.3 938.7,772.4ZM913.9,727.4 926.2,720.3 935.5,729.6 923.2,737ZM923.2,737 935.5,729.6 944.8,738.5 932.5,746.3ZM944.2,687.3 956.4,680.3 965.9,690.5 953.6,697.1Z" fill="#caccd1" stroke="#caccd1" stroke-width="0.8"/><path d="M938.7,772.4 951.1,764.3 960.4,773 948,781.6ZM932.5,746.3 944.8,738.5 954.2,747.2 941.8,755.4Z" fill="#d6d8dd" stroke="#d6d8dd" stroke-width="0.8"/><path d="M848.7,664.7 860.8,660 870.2,667.7 858,672.8ZM963.5,755.5 975.9,750 985.3,757.7 972.8,763.7ZM960.2,721.8 972.5,716.6 981.9,725.7 969.6,730.6ZM991.3,734.2 1003.7,728.2 1013.2,736.1 1000.8,742.1ZM1000.8,742.1 1013.2,736.1 1022.6,743.7 1010.2,749.8ZM1013.2,736.1 1025.6,730 1035.1,737.4 1022.6,743.7ZM1016.1,722.2 1028.5,716.2 1038,723.8 1025.6,730ZM1025.6,730 1038,723.8 1047.5,731 1035.1,737.4ZM1028.5,716.2 1040.9,710.3 1050.5,717.7 1038,723.8ZM1038,723.8 1050.5,717.7 1060,724.6 1047.5,731Z" fill="#94969b" stroke="#94969b" stroke-width="0.8"/><path d="M941.8,755.4 954.2,747.2 963.5,755.5 951.1,764.3Z" fill="#dcdee3" stroke="#dcdee3" stroke-width="0.8"/><path d="M951.1,764.3 963.5,755.5 972.8,763.7 960.4,773Z" fill="#e8eaef" stroke="#e8eaef" stroke-width="0.8"/><path d="M860.8,660 872.9,656.8 882.3,664.1 870.2,667.7ZM938.5,715.7 950.8,712.5 960.2,721.8 947.8,724.9ZM947.8,724.9 960.2,721.8 969.6,730.6 957.2,733.7Z" fill="#828489" stroke="#828489" stroke-width="0.8"/><path d="M870.2,667.7 882.3,664.1 891.6,671.7 879.5,675.5ZM879.5,675.5 891.6,671.7 901,679.7 888.8,683.8ZM872.9,656.8 885,652.9 894.4,660.2 882.3,664.1ZM882.3,664.1 894.4,660.2 903.8,667.7 891.6,671.7ZM891.6,671.7 903.8,667.7 913.2,675.7 901,679.7ZM901,679.7 913.2,675.7 922.6,684.4 910.4,688.2ZM910.4,688.2 922.6,684.4 932,693.5 919.7,697.2ZM919.7,697.2 932,693.5 941.4,703 929.1,706.4ZM929.1,706.4 941.4,703 950.8,712.5 938.5,715.7ZM988.4,746.8 1000.8,742.1 1010.2,749.8 997.8,754.4Z" fill="#888a8f" stroke="#888a8f" stroke-width="0.8"/><path d="M888.8,683.8 901,679.7 910.4,688.2 898.2,692.5ZM898.2,692.5 910.4,688.2 919.7,697.2 907.5,701.5ZM907.5,701.5 919.7,697.2 929.1,706.4 916.8,710.9ZM916.8,710.9 929.1,706.4 938.5,715.7 926.2,720.3ZM926.2,720.3 938.5,715.7 947.8,724.9 935.5,729.6ZM935.5,729.6 947.8,724.9 957.2,733.7 944.8,738.5ZM944.8,738.5 957.2,733.7 966.6,742 954.2,747.2ZM954.2,747.2 966.6,742 975.9,750 963.5,755.5ZM969.6,730.6 981.9,725.7 991.3,734.2 979,739ZM979,739 991.3,734.2 1000.8,742.1 988.4,746.8Z" fill="#8e9095" stroke="#8e9095" stroke-width="0.8"/><path d="M957.2,733.7 969.6,730.6 979,739 966.6,742ZM966.6,742 979,739 988.4,746.8 975.9,750ZM975.9,750 988.4,746.8 997.8,754.4 985.3,757.7Z" fill="#7c7e83" stroke="#7c7e83" stroke-width="0.8"/><path d="M897.1,645.6 909.1,638 918.6,645.4 906.5,653ZM906.5,653 918.6,645.4 928.1,653.1 915.9,660.7ZM915.9,660.7 928.1,653.1 937.5,661.5 925.3,668.9ZM925.3,668.9 937.5,661.5 947,670.6 934.8,677.8ZM934.8,677.8 947,670.6 956.4,680.3 944.2,687.3Z" fill="#d0d2d7" stroke="#d0d2d7" stroke-width="0.8"/><path d="M800.4,685.3 811.4,696.4 822.4,707.5 833.5,718.8 844.5,730.1 855.5,741.6 866.5,753.3 877.5,765.2 888.6,777.1 899.6,789.2 910.6,801.3 M806.4,682.7 817.5,693.7 828.5,704.7 839.5,715.9 850.6,727.3 861.6,738.8 872.7,750.5 883.7,762.4 894.7,774.2 905.8,786.2 916.8,798.1 M812.4,680.2 823.5,691 834.5,702 845.6,713.1 856.6,724.5 867.7,736.1 878.7,747.8 889.8,759.6 900.9,771.4 911.9,783.2 923,794.9 M818.3,677.7 829.3,688.4 840.4,699.3 851.5,710.4 862.5,721.7 873.6,733.3 884.7,745.1 895.8,756.9 906.8,768.6 917.9,780.2 929,791.8 M823.9,675.3 835,685.9 846.1,696.7 857.2,707.7 868.3,719.1 879.4,730.7 890.5,742.4 901.6,754.2 912.7,765.8 923.8,777.4 934.8,788.8 M829.4,673 840.5,683.4 851.6,694.1 862.7,705.1 873.8,716.4 884.9,728.1 896,739.8 907.1,751.6 918.2,763.1 929.3,774.5 940.5,785.8 M834.6,670.8 845.7,681.1 856.8,691.6 867.9,702.6 879.1,713.9 890.2,725.5 901.3,737.3 912.4,749 923.5,760.5 934.7,771.7 945.8,782.8 M839.4,668.7 850.6,678.8 861.7,689.3 872.9,700.1 884,711.4 895.1,723 906.3,734.7 917.4,746.4 928.5,757.7 939.7,768.8 950.8,779.8 M844,666.7 855.1,676.7 866.3,687 877.4,697.7 888.6,709 899.7,720.5 910.9,732.2 922.1,743.7 933.2,755 944.4,765.9 955.5,776.6 M848.2,664.9 859.4,674.7 870.5,684.9 881.7,695.5 892.8,706.6 904,718.1 915.2,729.7 926.3,741.1 937.5,752.2 948.7,762.9 959.8,773.5 M852,663.3 863.2,673 874.4,682.9 885.6,693.4 896.7,704.4 907.9,715.8 919.1,727.3 930.3,738.6 941.5,749.5 952.6,760.1 963.8,770.4 M855.5,661.9 866.7,671.4 877.9,681.2 889.1,691.5 900.3,702.4 911.5,713.7 922.7,725.1 933.9,736.3 945,747.1 956.2,757.5 967.4,767.6 M858.7,660.7 869.9,670 881.1,679.7 892.3,689.9 903.5,700.7 914.7,712 925.9,723.3 937.1,734.4 948.3,745 959.5,755.2 970.7,765.2 M861.6,659.8 872.8,668.9 884,678.5 895.2,688.6 906.4,699.3 917.6,710.5 928.8,721.8 940,732.8 951.2,743.3 962.5,753.4 973.7,763.2 M864.2,659 875.4,668 886.6,677.5 897.8,687.5 909.1,698.2 920.3,709.3 931.5,720.5 942.7,731.5 953.9,741.9 965.1,751.9 976.3,761.5 M866.6,658.3 877.8,667.3 889,676.6 900.2,686.6 911.5,697.3 922.7,708.4 933.9,719.6 945.1,730.5 956.4,740.9 967.6,750.7 978.8,760.3 M868.8,657.7 880,666.6 891.2,675.9 902.5,685.9 913.7,696.5 924.9,707.6 936.2,718.8 947.4,729.7 958.6,740 969.8,749.8 981.1,759.2 M870.9,657.2 882.1,666.1 893.3,675.3 904.6,685.3 915.8,695.9 927,707 938.3,718.1 949.5,729 960.7,739.3 972,749 983.2,758.4 M872.9,656.8 884.1,665.6 895.4,674.8 906.6,684.7 917.9,695.3 929.1,706.4 940.3,717.6 951.6,728.5 962.8,738.7 974.1,748.4 985.3,757.7 M874.9,656.3 886.2,665.1 897.4,674.3 908.7,684.2 919.9,694.8 931.2,705.9 942.4,717.1 953.6,728 964.9,738.2 976.1,747.9 987.4,757.1 M877,655.8 888.3,664.5 899.5,673.7 910.8,683.6 922,694.3 933.3,705.4 944.5,716.6 955.8,727.5 967,737.7 978.3,747.3 989.5,756.6 M879.2,655.1 890.5,663.9 901.7,673 913,683 924.3,693.6 935.5,704.8 946.8,716.1 958,727 969.3,737.2 980.5,746.8 991.8,756 M881.6,654.3 892.9,663 904.1,672.2 915.4,682.2 926.7,692.9 937.9,704.1 949.2,715.4 960.5,726.4 971.7,736.6 983,746.2 994.3,755.4 M884.2,653.3 895.5,662 906.7,671.2 918,681.2 929.3,692 940.6,703.3 951.8,714.6 963.1,725.6 974.4,735.9 985.7,745.5 996.9,754.7 M887.1,651.9 898.4,660.6 909.6,669.9 920.9,679.9 932.2,690.8 943.5,702.2 954.8,713.6 966.1,724.7 977.3,735 988.6,744.6 999.9,753.8 M890.3,650.1 901.5,658.8 912.8,668.1 924.1,678.3 935.4,689.2 946.7,700.7 958,712.3 969.3,723.5 980.6,733.9 991.9,743.5 1003.2,752.7 M893.8,647.8 905.1,656.6 916.4,666 927.7,676.2 939,687.3 950.3,699 961.6,710.7 972.9,721.9 984.2,732.4 995.5,742.1 1006.8,751.3 M897.6,645.2 908.9,654.1 920.2,663.5 931.6,673.8 942.9,685 954.2,696.8 965.5,708.7 976.8,720 988.1,730.6 999.4,740.3 1010.8,749.5 M901.8,642.4 913.1,651.3 924.5,660.8 935.8,671.2 947.1,682.5 958.5,694.5 969.8,706.5 981.1,717.9 992.4,728.5 1003.8,738.3 1015.1,747.5 M906.4,639.6 917.7,648.5 929,658 940.4,668.5 951.7,679.9 963.1,692 974.4,704 985.8,715.6 997.1,726.3 1008.4,736 1019.8,745.2 M911.2,636.8 922.6,645.7 934,655.2 945.3,665.7 956.7,677.2 968,689.4 979.4,701.5 990.7,713.2 1002.1,723.8 1013.4,733.5 1024.8,742.7 M916.4,634.2 927.8,643 939.2,652.4 950.5,662.9 961.9,674.5 973.3,686.7 984.7,699 996,710.6 1007.4,721.3 1018.8,730.9 1030.1,739.9 M921.9,631.5 933.3,640.2 944.6,649.7 956,660.2 967.4,671.7 978.8,684 990.2,696.3 1001.6,708 1013,718.6 1024.4,728.1 1035.8,737 M927.5,628.8 939,637.5 950.4,646.8 961.8,657.3 973.2,668.9 984.6,681.2 996,693.6 1007.4,705.2 1018.8,715.8 1030.2,725.3 1041.6,734 M933.4,626.1 944.8,634.6 956.2,643.9 967.7,654.3 979.1,666 990.5,678.4 1001.9,690.8 1013.4,702.4 1024.8,713 1036.2,722.3 1047.6,730.9 M939.4,623.2 950.8,631.7 962.3,640.9 973.7,651.3 985.1,663 996.6,675.4 1008,687.9 1019.5,699.6 1030.9,710 1042.3,719.3 1053.8,727.8 M945.4,620.4 956.9,628.8 968.3,637.9 979.8,648.3 991.2,660 1002.7,672.5 1014.2,685 1025.6,696.7 1037.1,707.1 1048.5,716.2 1060,724.6 M800.4,685.3 814.9,679.1 829.4,673 843.9,666.7 858.4,660.8 872.9,656.8 887.4,651.7 901.9,642.4 916.4,634.2 930.9,627.2 945.4,620.4 M806.6,691.6 821.2,685.3 835.7,678.9 850.2,672.4 864.7,666.1 879.3,661.7 893.8,656.6 908.3,647.4 922.8,639.1 937.4,632.1 951.9,625.1 M812.8,697.8 827.3,691.3 841.9,684.7 856.4,678 871,671.3 885.5,666.7 900.1,661.6 914.6,652.4 929.2,644.1 943.7,636.9 958.3,629.8 M818.7,703.8 833.3,697.2 847.9,690.5 862.5,683.5 877,676.5 891.6,671.6 906.2,666.5 920.8,657.5 935.3,649.2 949.9,641.9 964.5,634.7 M824.4,709.5 839,702.8 853.6,696 868.2,688.9 882.8,681.6 897.4,676.5 912,671.4 926.6,662.6 941.2,654.3 955.8,646.9 970.4,639.7 M829.8,715 844.4,708.2 859,701.4 873.6,694.2 888.3,686.6 902.9,681.3 917.5,676.3 932.1,667.6 946.7,659.3 961.3,652 976,644.7 M834.8,720.1 849.4,713.3 864.1,706.4 878.7,699.1 893.3,691.4 908,686 922.6,681 937.3,672.5 951.9,664.3 966.5,656.9 981.2,649.7 M839.5,724.9 854.1,718.1 868.8,711.2 883.4,703.8 898.1,695.9 912.7,690.4 927.4,685.6 942,677.2 956.7,669.1 971.4,661.8 986,654.5 M843.8,729.4 858.5,722.6 873.1,715.7 887.8,708.3 902.5,700.2 917.2,694.7 931.8,689.9 946.5,681.8 961.2,673.8 975.8,666.5 990.5,659.2 M847.9,733.6 862.5,726.8 877.2,720 891.9,712.5 906.6,704.3 921.3,698.7 936,694.1 950.7,686.1 965.4,678.2 980.1,671 994.7,663.8 M851.7,737.7 866.4,730.9 881.1,724.1 895.8,716.6 910.5,708.3 925.3,702.6 940,698.1 954.7,690.3 969.4,682.5 984.1,675.3 998.8,668.2 M855.5,741.6 870.2,734.9 884.9,728.1 899.7,720.6 914.4,712.1 929.1,706.4 943.8,702 958.5,694.4 973.3,686.7 988,679.6 1002.7,672.5 M859.3,745.6 874,738.9 888.7,732.1 903.5,724.6 918.2,716 932.9,710.3 947.7,706 962.4,698.6 977.2,691 991.9,683.9 1006.6,676.8 M863.1,749.7 877.9,743 892.6,736.2 907.4,728.7 922.1,720 936.9,714.2 951.7,710 966.4,702.8 981.2,695.3 995.9,688.2 1010.7,681.2 M867.2,754.1 882,747.4 896.7,740.6 911.5,733 926.3,724.2 941,718.3 955.8,714.2 970.6,707.1 985.3,699.7 1000.1,692.7 1014.9,685.8 M871.5,758.7 886.3,752 901.1,745.2 915.9,737.5 930.7,728.6 945.5,722.6 960.3,718.6 975,711.7 989.8,704.4 1004.6,697.4 1019.4,690.5 M876.2,763.7 891,757 905.8,750.1 920.6,742.4 935.4,733.2 950.2,727.2 965,723.3 979.8,716.5 994.6,709.3 1009.4,702.3 1024.2,695.3 M881.2,769.1 896,762.3 910.9,755.4 925.7,747.6 940.5,738.2 955.3,731.9 970.2,728.1 985,721.5 999.8,714.3 1014.6,707.3 1029.4,700.3 M886.6,775 901.4,768.1 916.3,761.1 931.1,753 946,743.4 960.8,736.9 975.6,733.1 990.5,726.7 1005.3,719.4 1020.2,712.4 1035,705.3 M892.3,781.2 907.1,774.1 922,767 936.9,758.7 951.7,748.7 966.6,742 981.5,738.2 996.3,731.9 1011.2,724.6 1026.1,717.4 1040.9,710.3 M898.2,787.7 913.1,780.5 928,773.1 942.9,764.6 957.8,754.2 972.7,747.2 987.6,743.4 1002.4,737.1 1017.3,729.8 1032.2,722.5 1047.1,715.2 M904.4,794.4 919.3,787 934.2,779.4 949.1,770.6 964,759.8 978.9,752.5 993.8,748.5 1008.8,742.3 1023.7,734.9 1038.6,727.4 1053.5,719.9 M910.6,801.3 925.5,793.6 940.5,785.8 955.4,776.7 970.4,765.4 985.3,757.7 1000.2,753.7 1015.2,747.5 1030.1,739.9 1045.1,732.3 1060,724.6" fill="none" stroke="#141414" stroke-width="0.95"/></g><path d="M869.3,681.4 871.4,683.6 873,686.1 874,688.7 874.5,691.4 874.5,694.2 873.8,696.9 872.6,699.5 870.8,701.9 868.6,704 865.9,705.8 862.9,707.3 859.5,708.3 855.9,709 852.1,709.3 848.3,709.2 844.4,708.6 840.7,707.7 837.2,706.4 833.9,704.7 831,702.8 828.5,700.6 826.4,698.2 824.8,695.6 823.8,693 823.3,690.4 823.4,687.7 824,685.2 825.2,682.9 827,680.7 829.2,678.8 831.8,677.2 834.9,675.8 838.2,674.8 841.8,674.2 845.6,673.9 849.4,674 853.2,674.4 856.9,675.1 860.5,676.2 863.8,677.6 866.7,679.4 869.3,681.4 M899.1,670.3 899.8,671.8 899.8,673.3 899.1,674.6 897.7,675.7 895.8,676.5 893.4,676.9 890.8,676.9 888.1,676.6 885.4,676 883.1,675 881.2,673.7 879.8,672.2 879.2,670.7 879.2,669.2 879.9,667.8 881.3,666.8 883.2,666 885.6,665.7 888.2,665.7 890.9,666 893.5,666.6 M913.9,658.7 915.3,660.3 916.1,662.3 916,664.4 915.2,666.5 913.7,668.4 911.6,669.9 909.1,670.9 906.2,671.3 903.3,671.1 900.4,670.5 M894.4,666.6 893.7,665 893.7,663.3 894.5,661.7 896,660.2 898.1,658.8 900.7,657.7 903.5,656.8 906.4,656.5 909.3,656.7 911.8,657.4 913.9,658.7 M934.3,649.7 935.7,652.2 936.7,654.6 937.1,656.9 937.1,658.9 936.6,660.5 935.6,661.5 934.1,662 932.4,661.9 930.4,661.1 928.3,659.8 926.2,658.1 924.2,655.9 922.5,653.6 921.1,651.2 920.1,648.8 919.6,646.6 919.7,644.7 920.2,643.3 921.2,642.3 922.6,641.8 924.4,642 926.4,642.6 928.5,643.8 930.6,645.4 932.6,647.5 934.3,649.7 M984.3,663.6 985.2,664.8 985.7,666.1 985.7,667.5 985.2,668.7 984.4,669.8 983.1,670.6 981.6,671.1 979.9,671.3 978.2,671.1 976.5,670.6 975,669.8 973.7,668.8 972.9,667.6 972.4,666.3 972.4,665 972.8,663.8 973.7,662.7 974.9,661.9 976.4,661.4 978.1,661.2 979.9,661.3 981.5,661.8 983.1,662.6 984.3,663.6 M957.4,672.1 959.3,674.6 960.3,677.5 960.3,680.4 959.3,683.1 957.4,685.6 954.8,687.5 951.5,688.9 947.8,689.6 944.1,689.5 940.4,688.6 937.1,687.1 934.5,685.1 932.6,682.6 931.6,679.8 931.6,677 932.6,674.2 934.4,671.6 937.1,669.6 940.3,668.1 944,667.4 947.7,667.5 951.4,668.3 954.7,669.9 957.4,672.1 M987.5,703.2 988.5,705.9 989,708.5 988.9,711.2 988.3,713.8 987.2,716.2 985.5,718.6 983.4,720.7 980.9,722.6 977.9,724.2 974.7,725.4 971.2,726.2 967.5,726.6 963.7,726.4 959.8,725.9 956,725 952.2,723.8 948.7,722.3 945.4,720.6 942.4,718.7 939.8,716.6 937.6,714.5 935.8,712.2 934.6,709.9 933.9,707.6 933.7,705.4 934,703.2 934.9,701.2 936.2,699.1 938.1,697.2 940.4,695.3 943.1,693.4 946.2,691.8 949.6,690.4 953.2,689.3 956.9,688.7 960.7,688.5 964.6,688.8 968.4,689.5 972,690.6 975.5,692.1 978.7,693.9 981.5,695.9 983.9,698.2 985.9,700.7 987.5,703.2 M920,706.4 922,708.9 923,711.6 923,714.3 921.9,717 920,719.4 917.2,721.5 913.8,723.1 910,723.8 906.1,723.8 902.3,722.9 899,721.3 896.2,719.1 894.3,716.4 893.3,713.5 893.3,710.5 894.3,707.7 896.3,705.1 899.1,703.1 902.5,701.7 906.2,701.2 910.1,701.5 913.9,702.5 917.3,704.2 920,706.4 M1003.8,712.2 1004.5,713.1 1004.9,714 1004.9,715 1004.5,715.9 1003.8,716.7 1002.8,717.3 1001.6,717.7 1000.2,717.9 998.8,717.9 997.4,717.6 996.2,717 995.2,716.3 994.5,715.4 994.1,714.4 994.1,713.4 994.5,712.5 995.2,711.7 996.2,711 997.4,710.6 998.8,710.4 1000.2,710.5 1001.6,710.9 1002.8,711.4 1003.8,712.2 M1005,728.5 1007,730.7 1008.2,733.2 1008.5,735.8 1007.9,738.3 1006.3,740.7 1003.9,742.7 1000.8,744.3 997.2,745.3 993.3,745.6 989.3,745.3 985.4,744.4 981.7,743 978.6,741.1 976.2,739.1 974.6,736.8 973.8,734.5 974,732.2 975.1,729.9 977.1,727.9 979.8,726.1 983.2,724.7 986.9,723.8 990.9,723.6 995,724 998.8,725 1002.2,726.5 1005,728.5 M892.3,732.9 893,733.9 893.4,735 893.4,736.1 893,737.2 892.2,738 891.2,738.7 889.9,739.2 888.4,739.3 886.9,739.2 885.5,738.7 884.2,738.1 883.2,737.2 882.4,736.2 882.1,735.1 882.1,734 882.5,733 883.2,732.1 884.3,731.4 885.6,731 887,730.8 888.5,731 890,731.4 891.3,732 892.3,732.9 M950.2,748 951.6,749.8 952.4,751.9 952.3,754.1 951.6,756.4 950.1,758.6 948,760.5 945.5,761.9 942.6,762.7 939.7,762.8 936.9,762.4 934.4,761.3 932.4,759.8 930.9,757.8 930.2,755.7 930.3,753.5 931,751.3 932.5,749.3 934.6,747.5 937.1,746.2 939.9,745.5 942.9,745.3 945.7,745.7 948.2,746.6 950.2,748 M972.2,750.8 972.9,751.7 973.3,752.5 973.3,753.4 972.9,754.3 972.1,755.1 971.1,755.8 969.7,756.3 968.3,756.6 966.8,756.7 965.3,756.6 964,756.1 963,755.4 962.2,754.5 961.8,753.5 961.9,752.4 962.3,751.4 963,750.5 964.1,749.8 965.4,749.3 966.9,749.2 968.4,749.2 969.8,749.6 971.1,750.1 972.2,750.8 M920.5,762.5 921.3,763.5 921.7,764.7 921.6,765.8 921.2,766.9 920.4,767.8 919.3,768.5 918,769 916.5,769.2 914.9,769.1 913.4,768.7 912.1,768 911,767.1 910.3,766.1 909.9,765 909.9,763.8 910.3,762.8 911.1,761.9 912.2,761.2 913.6,760.7 915.1,760.5 916.6,760.6 918.1,761 919.4,761.7 920.5,762.5" fill="none" stroke="#111" stroke-width="1.1"/><path d="M800.4,685.3 804,683.8 807.6,682.2 811.3,680.7 814.9,679.1 818.5,677.6 822.1,676.1 825.8,674.5 829.4,673 833,671.4 836.6,669.9 840.3,668.3 843.9,666.7 847.5,665.2 851.1,663.7 854.8,662.2 858.4,660.8 862,659.6 865.7,658.5 869.3,657.6 872.9,656.8 876.5,655.9 880.1,654.8 883.8,653.4 887.4,651.7 891,649.6 894.6,647.2 898.3,644.8 901.9,642.4 905.5,640.1 909.1,638 912.8,636 916.4,634.2 920,632.4 923.6,630.7 927.3,628.9 930.9,627.2 934.5,625.5 938.1,623.8 941.8,622.1 945.4,620.4 948.3,622.5 951.1,624.5 954,626.6 956.9,628.8 959.7,630.9 962.6,633.2 965.5,635.5 968.3,637.9 971.2,640.4 974,642.9 976.9,645.6 979.8,648.3 982.6,651.1 985.5,654 988.4,657 991.2,660 994.1,663.1 997,666.2 999.8,669.3 1002.7,672.5 1005.6,675.7 1008.4,678.8 1011.3,681.9 1014.2,685 1017,688 1019.9,691 1022.8,693.9 1025.6,696.7 1028.5,699.4 1031.3,702.1 1034.2,704.6 1037.1,707.1 1039.9,709.5 1042.8,711.8 1045.7,714.1 1048.5,716.2 1051.4,718.4 1054.3,720.5 1057.1,722.5 1060,724.6 1056.3,726.5 1052.5,728.4 1048.8,730.4 1045.1,732.3 1041.3,734.2 1037.6,736.1 1033.9,738 1030.1,739.9 1026.4,741.8 1022.6,743.7 1018.9,745.6 1015.2,747.5 1011.4,749.2 1007.7,750.9 1004,752.4 1000.2,753.7 996.5,754.8 992.8,755.8 989,756.7 985.3,757.7 981.6,759 977.8,760.7 974.1,762.9 970.4,765.4 966.6,768.2 962.9,771.1 959.2,774 955.4,776.7 951.7,779.2 948,781.6 944.2,783.7 940.5,785.8 936.7,787.8 933,789.8 929.3,791.7 925.5,793.6 921.8,795.5 918.1,797.5 914.3,799.4 910.6,801.3 907.8,798.3 905.1,795.2 902.3,792.2 899.6,789.2 896.8,786.2 894.1,783.2 891.3,780.1 888.6,777.1 885.8,774.1 883.1,771.1 880.3,768.1 877.5,765.2 874.8,762.2 872,759.2 869.3,756.3 866.5,753.3 863.8,750.4 861,747.5 858.3,744.6 855.5,741.6 852.7,738.8 850,735.9 847.2,733 844.5,730.1 841.7,727.3 839,724.4 836.2,721.6 833.5,718.8 830.7,715.9 827.9,713.1 825.2,710.3 822.4,707.5 819.7,704.7 816.9,702 814.2,699.2 811.4,696.4 808.7,693.6 805.9,690.8 803.2,688.1Z" fill="none" stroke="#111" stroke-width="1.6"/><style>.dt{fill:#575757;stroke:#0c0c0c;stroke-width:.65}.dw{fill:#626262;stroke:#0c0c0c;stroke-width:.65}.di{fill:#4a4a4a;stroke:#0c0c0c;stroke-width:.5}.dc{fill:#c4c4c4;stroke:#0c0c0c;stroke-width:1.2}.rr{fill:none;stroke:#0a0a0a;stroke-width:1.7}.lt{fill:#c6c6c6;stroke:#0a0a0a;stroke-width:1.9;stroke-linejoin:round}.lw{fill:#222;stroke:#0a0a0a;stroke-width:1}.li{fill:#b0b0b0;stroke:#0a0a0a;stroke-width:1.2}</style><path class="dt" d="M284.8,591.2 279.5,591.4 281,606.2 283.5,606Z"/><path class="dt" d="M279.5,591.4 274.3,591.9 278.6,606.5 281,606.2Z"/><path class="dt" d="M290,591.3 284.8,591.2 283.5,606 285.9,605.9Z"/><path class="dt" d="M274.3,591.9 269.1,592.6 276.1,606.9 278.6,606.5Z"/><path class="dt" d="M295.2,591.6 290,591.3 285.9,605.9 288.3,606Z"/><path class="dt" d="M269.1,592.6 264.1,593.6 273.8,607.5 276.1,606.9Z"/><path class="dt" d="M300.3,592.2 295.2,591.6 288.3,606 290.7,606.1Z"/><path class="dt" d="M264.1,593.6 259.2,594.9 271.5,608.2 273.8,607.5Z"/><path class="dt" d="M305.1,593.1 300.3,592.2 290.7,606.1 292.9,606.4Z"/><path class="dt" d="M259.2,594.9 254.6,596.3 269.4,609 271.5,608.2Z"/><path class="dt" d="M309.8,594.1 305.1,593.1 292.9,606.4 295.1,606.8Z"/><path class="dt" d="M254.6,596.3 250.2,598 267.3,609.9 269.4,609Z"/><path class="dt" d="M314.2,595.4 309.8,594.1 295.1,606.8 297.1,607.3Z"/><path class="dt" d="M250.2,598 246.1,600 265.4,610.9 267.3,609.9Z"/><path class="dt" d="M283.4,578.8 278.1,579 279.9,593.7 282.4,593.5Z"/><path class="dt" d="M278.1,579 272.9,579.5 277.5,594.1 279.9,593.7Z"/><path class="dt" d="M288.6,578.8 283.4,578.8 282.4,593.5 284.8,593.4Z"/><path class="dt" d="M318.2,597 314.2,595.4 297.1,607.3 299,607.9Z"/><path class="dt" d="M272.9,579.5 267.7,580.3 275.1,594.5 277.5,594.1Z"/><path class="dt" d="M293.8,579.1 288.6,578.8 284.8,593.4 287.2,593.4Z"/><path class="dt" d="M246.1,600 242.4,602.1 263.7,612 265.4,610.9Z"/><path class="dt" d="M267.7,580.3 262.7,581.3 272.7,595.1 275.1,594.5Z"/><path class="dt" d="M298.8,579.6 293.8,579.1 287.2,593.4 289.6,593.6Z"/><path class="dt" d="M262.7,581.3 257.8,582.5 270.5,595.8 272.7,595.1Z"/><path class="dt" d="M322,598.7 318.2,597 299,607.9 300.8,608.6Z"/><path class="dt" d="M303.7,580.4 298.8,579.6 289.6,593.6 291.9,593.9Z"/><path class="dt" d="M242.4,602.1 239.1,604.4 262.2,613.2 263.7,612Z"/><path class="dt" d="M257.8,582.5 253.2,584 268.3,596.6 270.5,595.8Z"/><path class="di" d="M281,606.2 278.6,606.5 278.6,612.8 281,612.7Z"/><path class="rr" d="M281,606.2 278.6,606.5"/><path class="di" d="M283.5,606 281,606.2 281,612.7 283.5,612.7Z"/><path class="rr" d="M283.5,606 281,606.2"/><path class="di" d="M278.6,606.5 276.1,606.9 276.1,613 278.6,612.8Z"/><path class="rr" d="M278.6,606.5 276.1,606.9"/><path class="di" d="M285.9,605.9 283.5,606 283.5,612.7 285.9,612.8Z"/><path class="rr" d="M285.9,605.9 283.5,606"/><path class="dt" d="M308.4,581.5 303.7,580.4 291.9,593.9 294,594.3Z"/><path class="di" d="M276.1,606.9 273.8,607.5 273.8,613.4 276.1,613Z"/><path class="rr" d="M276.1,606.9 273.8,607.5"/><path class="di" d="M288.3,606 285.9,605.9 285.9,612.8 288.3,613Z"/><path class="rr" d="M288.3,606 285.9,605.9"/><path class="di" d="M273.8,607.5 271.5,608.2 271.5,613.9 273.8,613.4Z"/><path class="rr" d="M273.8,607.5 271.5,608.2"/><path class="di" d="M290.7,606.1 288.3,606 288.3,613 290.7,613.4Z"/><path class="rr" d="M290.7,606.1 288.3,606"/><path class="dt" d="M253.2,584 248.9,585.8 266.3,597.5 268.3,596.6Z"/><path class="dt" d="M325.3,600.6 322,598.7 300.8,608.6 302.3,609.4Z"/><path class="di" d="M271.5,608.2 269.4,609 269.4,614.5 271.5,613.9Z"/><path class="rr" d="M271.5,608.2 269.4,609"/><path class="dt" d="M239.1,604.4 236.2,606.8 260.8,614.4 262.2,613.2Z"/><path class="dc" d="M295.1,582.2 311.5,570.1 311.5,582.6 295.1,594.7Z"/><path class="di" d="M292.9,606.4 290.7,606.1 290.7,613.4 292.9,613.9Z"/><path class="rr" d="M292.9,606.4 290.7,606.1"/><path class="dt" d="M312.8,582.8 308.4,581.5 294,594.3 296.1,594.8Z"/><path class="di" d="M269.4,609 267.3,609.9 267.3,615.2 269.4,614.5Z"/><path class="rr" d="M269.4,609 267.3,609.9"/><path class="di" d="M295.1,606.8 292.9,606.4 292.9,613.9 295.1,614.5Z"/><path class="rr" d="M295.1,606.8 292.9,606.4"/><path class="dt" d="M248.9,585.8 244.9,587.7 264.4,598.5 266.3,597.5Z"/><path class="di" d="M267.3,609.9 265.4,610.9 265.4,616 267.3,615.2Z"/><path class="rr" d="M267.3,609.9 265.4,610.9"/><path class="dt" d="M281.9,566.3 276.6,566.5 278.8,581.2 281.3,581Z"/><path class="dt" d="M276.6,566.5 271.4,567.1 276.4,581.6 278.8,581.2Z"/><path class="dt" d="M328.3,602.6 325.3,600.6 302.3,609.4 303.7,610.3Z"/><path class="di" d="M297.1,607.3 295.1,606.8 295.1,614.5 297.1,615.2Z"/><path class="rr" d="M297.1,607.3 295.1,606.8"/><path class="dt" d="M287.2,566.3 281.9,566.3 281.3,581 283.7,580.9Z"/><path class="dt" d="M317,584.3 312.8,582.8 296.1,594.8 298,595.4Z"/><path class="dt" d="M236.2,606.8 233.7,609.4 259.6,615.7 260.8,614.4Z"/><path class="dt" d="M271.4,567.1 266.3,567.9 274,582.1 276.4,581.6Z"/><path class="dt" d="M292.4,566.5 287.2,566.3 283.7,580.9 286.1,580.9Z"/><path class="di" d="M265.4,610.9 263.7,612 263.7,616.9 265.4,616Z"/><path class="rr" d="M265.4,610.9 263.7,612"/><path class="dt" d="M244.9,587.7 241.2,589.9 262.7,599.6 264.4,598.5Z"/><path class="dt" d="M266.3,567.9 261.3,568.9 271.6,582.7 274,582.1Z"/><path class="di" d="M299,607.9 297.1,607.3 297.1,615.2 299,616Z"/><path class="rr" d="M299,607.9 297.1,607.3"/><path class="dt" d="M297.4,567.1 292.4,566.5 286.1,580.9 288.5,581.1Z"/><path class="dt" d="M261.3,568.9 256.5,570.2 269.4,583.4 271.6,582.7Z"/><path class="dt" d="M320.7,586 317,584.3 298,595.4 299.8,596Z"/><path class="di" d="M263.7,612 262.2,613.2 262.2,617.9 263.7,616.9Z"/><path class="rr" d="M263.7,612 262.2,613.2"/><path class="dt" d="M302.4,567.8 297.4,567.1 288.5,581.1 290.8,581.3Z"/><path class="di" d="M300.8,608.6 299,607.9 299,616 300.8,616.9Z"/><path class="rr" d="M300.8,608.6 299,607.9"/><path class="dt" d="M330.8,604.8 328.3,602.6 303.7,610.3 304.9,611.2Z"/><path class="dt" d="M233.7,609.4 231.7,612.1 258.7,617.1 259.6,615.7Z"/><path class="dt" d="M241.2,589.9 237.9,592.2 261.2,600.8 262.7,599.6Z"/><path class="dt" d="M256.5,570.2 251.9,571.7 267.3,584.2 269.4,583.4Z"/><path class="di" d="M282.4,593.5 279.9,593.7 279.9,612.7 282.4,612.7Z"/><path class="rr" d="M282.4,593.5 279.9,593.7"/><path class="di" d="M279.9,593.7 277.5,594.1 277.5,612.8 279.9,612.7Z"/><path class="rr" d="M279.9,593.7 277.5,594.1"/><path class="di" d="M284.8,593.4 282.4,593.5 282.4,612.7 284.8,612.8Z"/><path class="rr" d="M284.8,593.4 282.4,593.5"/><path class="di" d="M277.5,594.1 275.1,594.5 275.1,613.1 277.5,612.8Z"/><path class="rr" d="M277.5,594.1 275.1,594.5"/><path class="di" d="M262.2,613.2 260.8,614.4 260.8,618.9 262.2,617.9Z"/><path class="rr" d="M262.2,613.2 260.8,614.4"/><path class="dt" d="M307.1,568.9 302.4,567.8 290.8,581.3 293,581.7Z"/><path class="di" d="M287.2,593.4 284.8,593.4 284.8,612.8 287.2,613Z"/><path class="rr" d="M287.2,593.4 284.8,593.4"/><path class="di" d="M275.1,594.5 272.7,595.1 272.7,613.5 275.1,613.1Z"/><path class="rr" d="M275.1,594.5 272.7,595.1"/><path class="di" d="M302.3,609.4 300.8,608.6 300.8,616.9 302.3,617.8Z"/><path class="rr" d="M302.3,609.4 300.8,608.6"/><path class="di" d="M289.6,593.6 287.2,593.4 287.2,613 289.6,613.3Z"/><path class="rr" d="M289.6,593.6 287.2,593.4"/><path class="dt" d="M324.1,587.8 320.7,586 299.8,596 301.4,596.8Z"/><path class="di" d="M272.7,595.1 270.5,595.8 270.5,614 272.7,613.5Z"/><path class="rr" d="M272.7,595.1 270.5,595.8"/><path class="dt" d="M251.9,571.7 247.6,573.5 265.3,585.1 267.3,584.2Z"/><path class="di" d="M260.8,614.4 259.6,615.7 259.6,620.1 260.8,618.9Z"/><path class="rr" d="M260.8,614.4 259.6,615.7"/><path class="di" d="M291.9,593.9 289.6,593.6 289.6,613.3 291.9,613.8Z"/><path class="rr" d="M291.9,593.9 289.6,593.6"/><path class="di" d="M270.5,595.8 268.3,596.6 268.3,614.6 270.5,614Z"/><path class="rr" d="M270.5,595.8 268.3,596.6"/><path class="dt" d="M311.5,570.1 307.1,568.9 293,581.7 295.1,582.2Z"/><path class="dt" d="M237.9,592.2 235,594.6 259.8,602.1 261.2,600.8Z"/><path class="dt" d="M332.8,607.1 330.8,604.8 304.9,611.2 305.8,612.2Z"/><path class="dt" d="M231.7,612.1 230.2,614.9 258,618.5 258.7,617.1Z"/><path class="di" d="M303.7,610.3 302.3,609.4 302.3,617.8 303.7,618.9Z"/><path class="rr" d="M303.7,610.3 302.3,609.4"/><path class="di" d="M294,594.3 291.9,593.9 291.9,613.8 294,614.4Z"/><path class="rr" d="M294,594.3 291.9,593.9"/><path class="di" d="M268.3,596.6 266.3,597.5 266.3,615.3 268.3,614.6Z"/><path class="rr" d="M268.3,596.6 266.3,597.5"/><path class="dt" d="M247.6,573.5 243.6,575.5 263.4,586.1 265.3,585.1Z"/><path class="di" d="M259.6,615.7 258.7,617.1 258.7,621.2 259.6,620.1Z"/><path class="rr" d="M259.6,615.7 258.7,617.1"/><path class="dt" d="M327.1,589.9 324.1,587.8 301.4,596.8 302.8,597.7Z"/><path class="di" d="M266.3,597.5 264.4,598.5 264.4,616.1 266.3,615.3Z"/><path class="rr" d="M266.3,597.5 264.4,598.5"/><path class="di" d="M296.1,594.8 294,594.3 294,614.4 296.1,615.1Z"/><path class="rr" d="M296.1,594.8 294,594.3"/><path class="di" d="M304.9,611.2 303.7,610.3 303.7,618.9 304.9,620Z"/><path class="rr" d="M304.9,611.2 303.7,610.3"/><path class="dt" d="M235,594.6 232.6,597.2 258.7,603.4 259.8,602.1Z"/><path class="di" d="M264.4,598.5 262.7,599.6 262.7,617 264.4,616.1Z"/><path class="rr" d="M264.4,598.5 262.7,599.6"/><path class="di" d="M298,595.4 296.1,594.8 296.1,615.1 298,615.9Z"/><path class="rr" d="M298,595.4 296.1,594.8"/><path class="dt" d="M230.2,614.9 229.1,617.8 257.5,619.9 258,618.5Z"/><path class="dt" d="M334.3,609.5 332.8,607.1 305.8,612.2 306.5,613.2Z"/><path class="dt" d="M243.6,575.5 240,577.6 261.7,587.3 263.4,586.1Z"/><path class="di" d="M258.7,617.1 258,618.5 258,622.4 258.7,621.2Z"/><path class="rr" d="M258.7,617.1 258,618.5"/><path class="di" d="M305.8,612.2 304.9,611.2 304.9,620 305.8,621.2Z"/><path class="rr" d="M305.8,612.2 304.9,611.2"/><path class="dt" d="M329.7,592.1 327.1,589.9 302.8,597.7 303.9,598.6Z"/><path class="di" d="M262.7,599.6 261.2,600.8 261.2,618 262.7,617Z"/><path class="rr" d="M262.7,599.6 261.2,600.8"/><path class="di" d="M299.8,596 298,595.4 298,615.9 299.8,616.8Z"/><path class="rr" d="M299.8,596 298,595.4"/><path class="di" d="M258,618.5 257.5,619.9 257.5,623.7 258,622.4Z"/><path class="rr" d="M258,618.5 257.5,619.9"/><path class="dt" d="M232.6,597.2 230.7,600 257.8,604.8 258.7,603.4Z"/><path class="dw" d="M229.1,617.8 228.6,620.7 228.6,624.2 229.1,621.5Z"/><path class="rr" d="M229.1,617.8 228.6,620.7"/><path class="rr" d="M229.1,621.5 228.6,624.2"/><path class="di" d="M281.3,581 278.8,581.2 278.8,612.7 281.3,612.7Z"/><path class="rr" d="M281.3,581 278.8,581.2"/><path class="dt" d="M240,577.6 236.7,580 260.2,588.5 261.7,587.3Z"/><path class="di" d="M278.8,581.2 276.4,581.6 276.4,612.8 278.8,612.7Z"/><path class="rr" d="M278.8,581.2 276.4,581.6"/><path class="di" d="M283.7,580.9 281.3,581 281.3,612.7 283.7,612.7Z"/><path class="rr" d="M283.7,580.9 281.3,581"/><path class="di" d="M276.4,581.6 274,582.1 274,613.1 276.4,612.8Z"/><path class="rr" d="M276.4,581.6 274,582.1"/><path class="di" d="M261.2,600.8 259.8,602.1 259.8,619.1 261.2,618Z"/><path class="rr" d="M261.2,600.8 259.8,602.1"/><path class="di" d="M286.1,580.9 283.7,580.9 283.7,612.7 286.1,613Z"/><path class="rr" d="M286.1,580.9 283.7,580.9"/><path class="di" d="M274,582.1 271.6,582.7 271.6,613.5 274,613.1Z"/><path class="rr" d="M274,582.1 271.6,582.7"/><path class="di" d="M301.4,596.8 299.8,596 299.8,616.8 301.4,617.7Z"/><path class="rr" d="M301.4,596.8 299.8,596"/><path class="dt" d="M229.1,617.8 228.6,620.7 257.3,621.4 257.5,619.9Z"/><path class="di" d="M306.5,613.2 305.8,612.2 305.8,621.2 306.5,622.4Z"/><path class="rr" d="M306.5,613.2 305.8,612.2"/><path class="dt" d="M335.4,612 334.3,609.5 306.5,613.2 307,614.2Z"/><path class="di" d="M288.5,581.1 286.1,580.9 286.1,613 288.5,613.3Z"/><path class="rr" d="M288.5,581.1 286.1,580.9"/><path class="di" d="M271.6,582.7 269.4,583.4 269.4,614 271.6,613.5Z"/><path class="rr" d="M271.6,582.7 269.4,583.4"/><path class="di" d="M257.5,619.9 257.3,621.4 257.3,625 257.5,623.7Z"/><path class="rr" d="M257.5,619.9 257.3,621.4"/><path class="di" d="M290.8,581.3 288.5,581.1 288.5,613.3 290.8,613.7Z"/><path class="rr" d="M290.8,581.3 288.5,581.1"/><path class="dt" d="M331.8,594.3 329.7,592.1 303.9,598.6 304.9,599.5Z"/><path class="di" d="M269.4,583.4 267.3,584.2 267.3,614.7 269.4,614Z"/><path class="rr" d="M269.4,583.4 267.3,584.2"/><path class="di" d="M259.8,602.1 258.7,603.4 258.7,620.2 259.8,619.1Z"/><path class="rr" d="M259.8,602.1 258.7,603.4"/><path class="di" d="M302.8,597.7 301.4,596.8 301.4,617.7 302.8,618.8Z"/><path class="rr" d="M302.8,597.7 301.4,596.8"/><path class="dt" d="M236.7,580 233.9,582.4 258.9,589.7 260.2,588.5Z"/><path class="di" d="M293,581.7 290.8,581.3 290.8,613.7 293,614.3Z"/><path class="rr" d="M293,581.7 290.8,581.3"/><path class="dt" d="M230.7,600 229.2,602.8 257.1,606.2 257.8,604.8Z"/><path class="di" d="M307,614.2 306.5,613.2 306.5,622.4 307,623.6Z"/><path class="rr" d="M307,614.2 306.5,613.2"/><path class="di" d="M267.3,584.2 265.3,585.1 265.3,615.4 267.3,614.7Z"/><path class="rr" d="M267.3,584.2 265.3,585.1"/><path class="di" d="M257.3,621.4 257.3,622.9 257.3,626.2 257.3,625Z"/><path class="rr" d="M257.3,621.4 257.3,622.9"/><path class="dt" d="M228.6,620.7 228.6,623.6 257.3,622.9 257.3,621.4Z"/><path class="di" d="M258.7,603.4 257.8,604.8 257.8,621.4 258.7,620.2Z"/><path class="rr" d="M258.7,603.4 257.8,604.8"/><path class="di" d="M295.1,582.2 293,581.7 293,614.3 295.1,615Z"/><path class="rr" d="M295.1,582.2 293,581.7"/><path class="di" d="M265.3,585.1 263.4,586.1 263.4,616.2 265.3,615.4Z"/><path class="rr" d="M265.3,585.1 263.4,586.1"/><path class="dw" d="M228.6,620.7 228.6,623.6 228.6,626.9 228.6,624.2Z"/><path class="rr" d="M228.6,620.7 228.6,623.6"/><path class="rr" d="M228.6,624.2 228.6,626.9"/><path class="dt" d="M335.9,614.5 335.4,612 307,614.2 307.2,615.3Z"/><path class="di" d="M303.9,598.6 302.8,597.7 302.8,618.8 303.9,619.9Z"/><path class="rr" d="M303.9,598.6 302.8,597.7"/><path class="di" d="M307.2,615.3 307,614.2 307,623.6 307.2,624.9Z"/><path class="rr" d="M307.2,615.3 307,614.2"/><path class="dt" d="M333.4,596.7 331.8,594.3 304.9,599.5 305.7,600.6Z"/><path class="dt" d="M233.9,582.4 231.6,585.1 257.8,591.1 258.9,589.7Z"/><path class="di" d="M257.3,622.9 257.6,624.3 257.6,627.5 257.3,626.2Z"/><path class="rr" d="M257.3,622.9 257.6,624.3"/><path class="di" d="M263.4,586.1 261.7,587.3 261.7,617.1 263.4,616.2Z"/><path class="rr" d="M263.4,586.1 261.7,587.3"/><path class="di" d="M257.8,604.8 257.1,606.2 257.1,622.6 257.8,621.4Z"/><path class="rr" d="M257.8,604.8 257.1,606.2"/><path class="dt" d="M229.2,602.8 228.3,605.6 256.7,607.6 257.1,606.2Z"/><path class="di" d="M304.9,599.5 303.9,598.6 303.9,619.9 304.9,621Z"/><path class="rr" d="M304.9,599.5 303.9,598.6"/><path class="dt" d="M228.6,623.6 229.2,626.5 257.6,624.3 257.3,622.9Z"/><path class="di" d="M261.7,587.3 260.2,588.5 260.2,618.1 261.7,617.1Z"/><path class="rr" d="M261.7,587.3 260.2,588.5"/><path class="di" d="M307.2,616.4 307.2,615.3 307.2,624.9 307.2,626.2Z"/><path class="rr" d="M307.2,616.4 307.2,615.3"/><path class="dt" d="M335.9,617 335.9,614.5 307.2,615.3 307.2,616.4Z"/><path class="di" d="M257.1,606.2 256.7,607.6 256.7,623.8 257.1,622.6Z"/><path class="rr" d="M257.1,606.2 256.7,607.6"/><path class="dw" d="M335.9,617 335.9,614.5 335.9,624.1 335.9,626.8Z"/><path class="rr" d="M335.9,617 335.9,614.5"/><path class="rr" d="M335.9,626.8 335.9,624.1"/><path class="dt" d="M231.6,585.1 229.7,587.8 256.9,592.4 257.8,591.1Z"/><path class="dw" d="M228.3,605.6 227.8,608.5 227.8,621 228.3,618.1Z"/><path class="rr" d="M228.3,605.6 227.8,608.5"/><path class="dw" d="M228.3,618.1 227.8,621 227.8,624.6 228.3,621.8Z"/><path class="rr" d="M228.3,618.1 227.8,621"/><path class="rr" d="M228.3,621.8 227.8,624.6"/><path class="dt" d="M334.5,599.2 333.4,596.7 305.7,600.6 306.2,601.6Z"/><path class="di" d="M305.7,600.6 304.9,599.5 304.9,621 305.7,622.2Z"/><path class="rr" d="M305.7,600.6 304.9,599.5"/><path class="dw" d="M228.6,623.6 229.2,626.5 229.2,629.6 228.6,626.9Z"/><path class="rr" d="M228.6,623.6 229.2,626.5"/><path class="rr" d="M228.6,626.9 229.2,629.6"/><path class="di" d="M260.2,588.5 258.9,589.7 258.9,619.2 260.2,618.1Z"/><path class="rr" d="M260.2,588.5 258.9,589.7"/><path class="dt" d="M228.3,605.6 227.8,608.5 256.5,609.1 256.7,607.6Z"/><path class="di" d="M307,617.4 307.2,616.4 307.2,626.2 307,627.4Z"/><path class="rr" d="M307,617.4 307.2,616.4"/><path class="di" d="M256.7,607.6 256.5,609.1 256.5,625.1 256.7,623.8Z"/><path class="rr" d="M256.7,607.6 256.5,609.1"/><path class="dt" d="M229.2,626.5 230.2,629.3 258.1,625.8 257.6,624.3Z"/><path class="di" d="M258.9,589.7 257.8,591.1 257.8,620.3 258.9,619.2Z"/><path class="rr" d="M258.9,589.7 257.8,591.1"/><path class="di" d="M306.2,601.6 305.7,600.6 305.7,622.2 306.2,623.5Z"/><path class="rr" d="M306.2,601.6 305.7,600.6"/><path class="dt" d="M335.4,619.5 335.9,617 307.2,616.4 307,617.4Z"/><path class="dt" d="M229.7,587.8 228.3,590.6 256.3,593.8 256.9,592.4Z"/><path class="di" d="M256.5,609.1 256.5,610.5 256.5,626.4 256.5,625.1Z"/><path class="rr" d="M256.5,609.1 256.5,610.5"/><path class="dt" d="M335.1,601.7 334.5,599.2 306.2,601.6 306.4,602.7Z"/><path class="di" d="M257.8,591.1 256.9,592.4 256.9,621.5 257.8,620.3Z"/><path class="rr" d="M257.8,591.1 256.9,592.4"/><path class="dt" d="M227.8,608.5 227.9,611.4 256.5,610.5 256.5,609.1Z"/><path class="dw" d="M335.4,619.5 335.9,617 335.9,626.8 335.4,629.5Z"/><path class="rr" d="M335.4,619.5 335.9,617"/><path class="rr" d="M335.4,629.5 335.9,626.8"/><path class="dw" d="M227.8,608.5 227.9,611.4 227.9,623.9 227.8,621Z"/><path class="rr" d="M227.8,608.5 227.9,611.4"/><path class="dw" d="M227.8,621 227.9,623.9 227.9,627.3 227.8,624.6Z"/><path class="rr" d="M227.8,621 227.9,623.9"/><path class="rr" d="M227.8,624.6 227.9,627.3"/><path class="di" d="M306.4,602.7 306.2,601.6 306.2,623.5 306.4,624.7Z"/><path class="rr" d="M306.4,602.7 306.2,601.6"/><path class="dw" d="M229.2,626.5 230.2,629.3 230.2,632.3 229.2,629.6Z"/><path class="rr" d="M229.2,626.5 230.2,629.3"/><path class="rr" d="M229.2,629.6 230.2,632.3"/><path class="dt" d="M230.2,629.3 231.7,632.1 258.8,627.2 258.1,625.8Z"/><path class="di" d="M256.9,592.4 256.3,593.8 256.3,622.7 256.9,621.5Z"/><path class="rr" d="M256.9,592.4 256.3,593.8"/><path class="dt" d="M228.3,590.6 227.4,593.5 255.9,595.3 256.3,593.8Z"/><path class="dt" d="M334.4,622 335.4,619.5 307,617.4 306.5,618.5Z"/><path class="di" d="M306.5,603.7 306.4,602.7 306.4,624.7 306.5,626Z"/><path class="rr" d="M306.5,603.7 306.4,602.7"/><path class="dt" d="M335.1,604.2 335.1,601.7 306.4,602.7 306.5,603.7Z"/><path class="dt" d="M227.9,611.4 228.5,614.3 256.8,612 256.5,610.5Z"/><path class="dw" d="M335.1,604.2 335.1,601.7 335.1,614.2 335.1,616.7Z"/><path class="rr" d="M335.1,604.2 335.1,601.7"/><path class="dw" d="M335.1,616.7 335.1,614.2 335.1,623.8 335.1,626.5Z"/><path class="rr" d="M335.1,616.7 335.1,614.2"/><path class="rr" d="M335.1,626.5 335.1,623.8"/><path class="di" d="M256.3,593.8 255.9,595.3 255.9,624 256.3,622.7Z"/><path class="rr" d="M256.3,593.8 255.9,595.3"/><path class="dt" d="M231.7,632.1 233.8,634.8 259.7,628.5 258.8,627.2Z"/><path class="dw" d="M227.4,593.5 227,596.4 227,608.9 227.4,606Z"/><path class="rr" d="M227.4,593.5 227,596.4"/><path class="dw" d="M227.4,606 227,608.9 227,621.4 227.4,618.5Z"/><path class="rr" d="M227.4,606 227,608.9"/><path class="dw" d="M227.4,618.5 227,621.4 227,624.9 227.4,622.2Z"/><path class="rr" d="M227.4,618.5 227,621.4"/><path class="rr" d="M227.4,622.2 227,624.9"/><path class="dw" d="M227.9,611.4 228.5,614.3 228.5,626.8 227.9,623.9Z"/><path class="rr" d="M227.9,611.4 228.5,614.3"/><path class="dw" d="M227.9,623.9 228.5,626.8 228.5,630 227.9,627.3Z"/><path class="rr" d="M227.9,623.9 228.5,626.8"/><path class="rr" d="M227.9,627.3 228.5,630"/><path class="dw" d="M230.2,629.3 231.7,632.1 231.7,634.9 230.2,632.3Z"/><path class="rr" d="M230.2,629.3 231.7,632.1"/><path class="rr" d="M230.2,632.3 231.7,634.9"/><path class="dw" d="M334.4,622 335.4,619.5 335.4,629.5 334.4,632.2Z"/><path class="rr" d="M334.4,622 335.4,619.5"/><path class="rr" d="M334.4,632.2 335.4,629.5"/><path class="di" d="M306.2,604.8 306.5,603.7 306.5,626 306.2,627.3Z"/><path class="rr" d="M306.2,604.8 306.5,603.7"/><path class="dt" d="M227.4,593.5 227,596.4 255.7,596.8 255.9,595.3Z"/><path class="dt" d="M332.9,624.4 334.4,622 306.5,618.5 305.8,619.5Z"/><path class="di" d="M255.9,595.3 255.7,596.8 255.7,625.3 255.9,624Z"/><path class="rr" d="M255.9,595.3 255.7,596.8"/><path class="dt" d="M228.5,614.3 229.6,617.2 257.3,613.4 256.8,612Z"/><path class="dt" d="M334.7,606.7 335.1,604.2 306.5,603.7 306.2,604.8Z"/><path class="dt" d="M233.8,634.8 236.3,637.4 260.9,629.8 259.7,628.5Z"/><path class="di" d="M255.7,596.8 255.8,598.2 255.8,626.5 255.7,625.3Z"/><path class="rr" d="M255.7,596.8 255.8,598.2"/><path class="dw" d="M334.7,606.7 335.1,604.2 335.1,616.7 334.7,619.2Z"/><path class="rr" d="M334.7,606.7 335.1,604.2"/><path class="dw" d="M334.7,619.2 335.1,616.7 335.1,626.5 334.7,629.2Z"/><path class="rr" d="M334.7,619.2 335.1,616.7"/><path class="rr" d="M334.7,629.2 335.1,626.5"/><path class="dt" d="M227,596.4 227.1,599.3 255.8,598.2 255.7,596.8Z"/><path class="dt" d="M330.9,626.7 332.9,624.4 305.8,619.5 304.9,620.5Z"/><path class="dw" d="M227,596.4 227.1,599.3 227.1,611.8 227,608.9Z"/><path class="rr" d="M227,596.4 227.1,599.3"/><path class="dw" d="M227,608.9 227.1,611.8 227.1,624.3 227,621.4Z"/><path class="rr" d="M227,608.9 227.1,611.8"/><path class="dw" d="M227,621.4 227.1,624.3 227.1,627.6 227,624.9Z"/><path class="rr" d="M227,621.4 227.1,624.3"/><path class="rr" d="M227,624.9 227.1,627.6"/><path class="dw" d="M231.7,632.1 233.8,634.8 233.8,637.4 231.7,634.9Z"/><path class="rr" d="M231.7,632.1 233.8,634.8"/><path class="rr" d="M231.7,634.9 233.8,637.4"/><path class="dw" d="M228.5,614.3 229.6,617.2 229.6,629.7 228.5,626.8Z"/><path class="rr" d="M228.5,614.3 229.6,617.2"/><path class="dw" d="M228.5,626.8 229.6,629.7 229.6,632.6 228.5,630Z"/><path class="rr" d="M228.5,626.8 229.6,629.7"/><path class="rr" d="M228.5,630 229.6,632.6"/><path class="dt" d="M229.6,617.2 231.2,619.9 258.1,614.8 257.3,613.4Z"/><path class="dw" d="M332.9,624.4 334.4,622 334.4,632.2 332.9,634.8Z"/><path class="rr" d="M332.9,624.4 334.4,622"/><path class="rr" d="M332.9,634.8 334.4,632.2"/><path class="dt" d="M236.3,637.4 239.2,639.9 262.3,631.1 260.9,629.8Z"/><path class="dt" d="M333.8,609.2 334.7,606.7 306.2,604.8 305.8,605.9Z"/><path class="dt" d="M227.1,599.3 227.8,602.2 256.1,599.7 255.8,598.2Z"/><path class="dt" d="M328.4,628.9 330.9,626.7 304.9,620.5 303.7,621.4Z"/><path class="dt" d="M239.2,639.9 242.6,642.2 263.9,632.3 262.3,631.1Z"/><path class="dt" d="M231.2,619.9 233.2,622.6 259.1,616.2 258.1,614.8Z"/><path class="dw" d="M333.8,609.2 334.7,606.7 334.7,619.2 333.8,621.7Z"/><path class="rr" d="M333.8,609.2 334.7,606.7"/><path class="dw" d="M333.8,621.7 334.7,619.2 334.7,629.2 333.8,631.9Z"/><path class="rr" d="M333.8,621.7 334.7,619.2"/><path class="rr" d="M333.8,631.9 334.7,629.2"/><path class="dw" d="M233.8,634.8 236.3,637.4 236.3,639.8 233.8,637.4Z"/><path class="rr" d="M233.8,634.8 236.3,637.4"/><path class="rr" d="M233.8,637.4 236.3,639.8"/><path class="dt" d="M332.3,611.6 333.8,609.2 305.8,605.9 305.1,606.9Z"/><path class="dw" d="M227.1,599.3 227.8,602.2 227.8,614.7 227.1,611.8Z"/><path class="rr" d="M227.1,599.3 227.8,602.2"/><path class="dw" d="M227.1,611.8 227.8,614.7 227.8,627.2 227.1,624.3Z"/><path class="rr" d="M227.1,611.8 227.8,614.7"/><path class="dw" d="M227.1,624.3 227.8,627.2 227.8,630.3 227.1,627.6Z"/><path class="rr" d="M227.1,624.3 227.8,627.2"/><path class="rr" d="M227.1,627.6 227.8,630.3"/><path class="dw" d="M229.6,617.2 231.2,619.9 231.2,632.4 229.6,629.7Z"/><path class="rr" d="M229.6,617.2 231.2,619.9"/><path class="dw" d="M229.6,629.7 231.2,632.4 231.2,635.2 229.6,632.6Z"/><path class="rr" d="M229.6,629.7 231.2,632.4"/><path class="rr" d="M229.6,632.6 231.2,635.2"/><path class="dw" d="M330.9,626.7 332.9,624.4 332.9,634.8 330.9,637.3Z"/><path class="rr" d="M330.9,626.7 332.9,624.4"/><path class="rr" d="M330.9,637.3 332.9,634.8"/><path class="dt" d="M242.6,642.2 246.3,644.3 265.6,633.4 263.9,632.3Z"/><path class="dt" d="M227.8,602.2 228.9,605 256.6,601.1 256.1,599.7Z"/><path class="dt" d="M325.5,631 328.4,628.9 303.7,621.4 302.3,622.3Z"/><path class="dt" d="M233.2,622.6 235.8,625.2 260.3,617.5 259.1,616.2Z"/><path class="dt" d="M330.4,613.9 332.3,611.6 305.1,606.9 304.2,607.9Z"/><path class="dt" d="M246.3,644.3 250.4,646.2 267.5,634.4 265.6,633.4Z"/><path class="dw" d="M236.3,637.4 239.2,639.9 239.2,642.1 236.3,639.8Z"/><path class="rr" d="M236.3,637.4 239.2,639.9"/><path class="rr" d="M236.3,639.8 239.2,642.1"/><path class="dw" d="M332.3,611.6 333.8,609.2 333.8,621.7 332.3,624.1Z"/><path class="rr" d="M332.3,611.6 333.8,609.2"/><path class="dw" d="M332.3,624.1 333.8,621.7 333.8,631.9 332.3,634.5Z"/><path class="rr" d="M332.3,624.1 333.8,621.7"/><path class="rr" d="M332.3,634.5 333.8,631.9"/><path class="dw" d="M231.2,619.9 233.2,622.6 233.2,635.1 231.2,632.4Z"/><path class="rr" d="M231.2,619.9 233.2,622.6"/><path class="dw" d="M231.2,632.4 233.2,635.1 233.2,637.7 231.2,635.2Z"/><path class="rr" d="M231.2,632.4 233.2,635.1"/><path class="rr" d="M231.2,635.2 233.2,637.7"/><path class="dt" d="M322.2,632.9 325.5,631 302.3,622.3 300.8,623.1Z"/><path class="dt" d="M228.9,605 230.6,607.8 257.4,602.5 256.6,601.1Z"/><path class="dw" d="M227.8,602.2 228.9,605 228.9,617.5 227.8,614.7Z"/><path class="rr" d="M227.8,602.2 228.9,605"/><path class="dw" d="M227.8,614.7 228.9,617.5 228.9,630 227.8,627.2Z"/><path class="rr" d="M227.8,614.7 228.9,617.5"/><path class="dw" d="M227.8,627.2 228.9,630 228.9,632.9 227.8,630.3Z"/><path class="rr" d="M227.8,627.2 228.9,630"/><path class="rr" d="M227.8,630.3 228.9,632.9"/><path class="dt" d="M235.8,625.2 238.8,627.7 261.7,618.7 260.3,617.5Z"/><path class="dw" d="M328.4,628.9 330.9,626.7 330.9,637.3 328.4,639.7Z"/><path class="rr" d="M328.4,628.9 330.9,626.7"/><path class="rr" d="M328.4,639.7 330.9,637.3"/><path class="dt" d="M250.4,646.2 254.8,647.9 269.6,635.3 267.5,634.4Z"/><path class="dt" d="M327.9,616.2 330.4,613.9 304.2,607.9 303.1,608.8Z"/><path class="dt" d="M254.8,647.9 259.4,649.4 271.8,636.1 269.6,635.3Z"/><path class="dw" d="M239.2,639.9 242.6,642.2 242.6,644.2 239.2,642.1Z"/><path class="rr" d="M239.2,639.9 242.6,642.2"/><path class="rr" d="M239.2,642.1 242.6,644.2"/><path class="dt" d="M318.4,634.6 322.2,632.9 300.8,623.1 299,623.8Z"/><path class="dt" d="M238.8,627.7 242.2,629.9 263.3,619.9 261.7,618.7Z"/><path class="dt" d="M230.6,607.8 232.7,610.5 258.4,603.9 257.4,602.5Z"/><path class="dt" d="M259.4,649.4 264.3,650.6 274.1,636.8 271.8,636.1Z"/><path class="dw" d="M330.4,613.9 332.3,611.6 332.3,624.1 330.4,626.4Z"/><path class="rr" d="M330.4,613.9 332.3,611.6"/><path class="dw" d="M330.4,626.4 332.3,624.1 332.3,634.5 330.4,637Z"/><path class="rr" d="M330.4,626.4 332.3,624.1"/><path class="rr" d="M330.4,637 332.3,634.5"/><path class="dw" d="M233.2,622.6 235.8,625.2 235.8,637.7 233.2,635.1Z"/><path class="rr" d="M233.2,622.6 235.8,625.2"/><path class="dw" d="M233.2,635.1 235.8,637.7 235.8,640.1 233.2,637.7Z"/><path class="rr" d="M233.2,635.1 235.8,637.7"/><path class="rr" d="M233.2,637.7 235.8,640.1"/><path class="dw" d="M228.9,605 230.6,607.8 230.6,620.3 228.9,617.5Z"/><path class="rr" d="M228.9,605 230.6,607.8"/><path class="dw" d="M228.9,617.5 230.6,620.3 230.6,632.8 228.9,630Z"/><path class="rr" d="M228.9,617.5 230.6,620.3"/><path class="dw" d="M228.9,630 230.6,632.8 230.6,635.5 228.9,632.9Z"/><path class="rr" d="M228.9,630 230.6,632.8"/><path class="rr" d="M228.9,632.9 230.6,635.5"/><path class="dw" d="M325.5,631 328.4,628.9 328.4,639.7 325.5,642Z"/><path class="rr" d="M325.5,631 328.4,628.9"/><path class="rr" d="M325.5,642 328.4,639.7"/><path class="dt" d="M264.3,650.6 269.4,651.6 276.4,637.3 274.1,636.8Z"/><path class="dt" d="M325.1,618.3 327.9,616.2 303.1,608.8 301.7,609.7Z"/><path class="dt" d="M314.4,636.2 318.4,634.6 299,623.8 297.1,624.4Z"/><path class="dt" d="M242.2,629.9 246,632 265,621 263.3,619.9Z"/><path class="dt" d="M269.4,651.6 274.6,652.4 278.9,637.8 276.4,637.3Z"/><path class="dt" d="M285.1,653 290.4,653 286.3,638.4 283.8,638.3Z"/><path class="dt" d="M274.6,652.4 279.8,652.8 281.3,638.1 278.9,637.8Z"/><path class="dt" d="M279.8,652.8 285.1,653 283.8,638.3 281.3,638.1Z"/><path class="dw" d="M242.6,642.2 246.3,644.3 246.3,646.1 242.6,644.2Z"/><path class="rr" d="M242.6,642.2 246.3,644.3"/><path class="rr" d="M242.6,644.2 246.3,646.1"/><path class="dt" d="M232.7,610.5 235.3,613 259.6,605.2 258.4,603.9Z"/><path class="dt" d="M246,632 250.1,633.9 267,622 265,621Z"/><path class="dt" d="M310,637.5 314.4,636.2 297.1,624.4 295.1,624.9Z"/><path class="dw" d="M235.8,625.2 238.8,627.7 238.8,640.2 235.8,637.7Z"/><path class="rr" d="M235.8,625.2 238.8,627.7"/><path class="dw" d="M235.8,637.7 238.8,640.2 238.8,642.3 235.8,640.1Z"/><path class="rr" d="M235.8,637.7 238.8,640.2"/><path class="rr" d="M235.8,640.1 238.8,642.3"/><path class="dt" d="M321.8,620.2 325.1,618.3 301.7,609.7 300.2,610.5Z"/><path class="dw" d="M327.9,616.2 330.4,613.9 330.4,626.4 327.9,628.7Z"/><path class="rr" d="M327.9,616.2 330.4,613.9"/><path class="dw" d="M327.9,628.7 330.4,626.4 330.4,637 327.9,639.4Z"/><path class="rr" d="M327.9,628.7 330.4,626.4"/><path class="rr" d="M327.9,639.4 330.4,637"/><path class="dw" d="M322.2,632.9 325.5,631 325.5,642 322.2,644.1Z"/><path class="rr" d="M322.2,632.9 325.5,631"/><path class="rr" d="M322.2,644.1 325.5,642"/><path class="dw" d="M230.6,607.8 232.7,610.5 232.7,623 230.6,620.3Z"/><path class="rr" d="M230.6,607.8 232.7,610.5"/><path class="dw" d="M230.6,620.3 232.7,623 232.7,635.5 230.6,632.8Z"/><path class="rr" d="M230.6,620.3 232.7,623"/><path class="dw" d="M230.6,632.8 232.7,635.5 232.7,638 230.6,635.5Z"/><path class="rr" d="M230.6,632.8 232.7,635.5"/><path class="rr" d="M230.6,635.5 232.7,638"/><path class="dt" d="M235.3,613 238.4,615.4 261.1,606.4 259.6,605.2Z"/><path class="dw" d="M246.3,644.3 250.4,646.2 250.4,647.8 246.3,646.1Z"/><path class="rr" d="M246.3,644.3 250.4,646.2"/><path class="rr" d="M246.3,646.1 250.4,647.8"/><path class="dt" d="M250.1,633.9 254.5,635.6 269.1,622.9 267,622Z"/><path class="dt" d="M305.3,638.6 310,637.5 295.1,624.9 292.9,625.3Z"/><path class="dt" d="M318.1,621.9 321.8,620.2 300.2,610.5 298.4,611.2Z"/><path class="dt" d="M254.5,635.6 259.2,637.1 271.3,623.7 269.1,622.9Z"/><path class="dt" d="M300.5,639.5 305.3,638.6 292.9,625.3 290.6,625.6Z"/><path class="dw" d="M238.8,627.7 242.2,629.9 242.2,642.4 238.8,640.2Z"/><path class="rr" d="M238.8,627.7 242.2,629.9"/><path class="dw" d="M238.8,640.2 242.2,642.4 242.2,644.4 238.8,642.3Z"/><path class="rr" d="M238.8,640.2 242.2,642.4"/><path class="rr" d="M238.8,642.3 242.2,644.4"/><path class="dt" d="M238.4,615.4 241.8,617.7 262.7,607.6 261.1,606.4Z"/><path class="dw" d="M250.4,646.2 254.8,647.9 254.8,649.3 250.4,647.8Z"/><path class="rr" d="M250.4,646.2 254.8,647.9"/><path class="rr" d="M250.4,647.8 254.8,649.3"/><path class="dw" d="M318.4,634.6 322.2,632.9 322.2,644.1 318.4,646Z"/><path class="rr" d="M318.4,634.6 322.2,632.9"/><path class="rr" d="M318.4,646 322.2,644.1"/><path class="dt" d="M259.2,637.1 264.1,638.3 273.6,624.3 271.3,623.7Z"/><path class="dt" d="M295.4,640.1 300.5,639.5 290.6,625.6 288.2,625.8Z"/><path class="dw" d="M325.1,618.3 327.9,616.2 327.9,628.7 325.1,630.8Z"/><path class="rr" d="M325.1,618.3 327.9,616.2"/><path class="dw" d="M325.1,630.8 327.9,628.7 327.9,639.4 325.1,641.7Z"/><path class="rr" d="M325.1,630.8 327.9,628.7"/><path class="rr" d="M325.1,641.7 327.9,639.4"/><path class="dw" d="M232.7,610.5 235.3,613 235.3,625.5 232.7,623Z"/><path class="rr" d="M232.7,610.5 235.3,613"/><path class="dw" d="M232.7,623 235.3,625.5 235.3,638 232.7,635.5Z"/><path class="rr" d="M232.7,623 235.3,625.5"/><path class="dw" d="M232.7,635.5 235.3,638 235.3,640.4 232.7,638Z"/><path class="rr" d="M232.7,635.5 235.3,638"/><path class="rr" d="M232.7,638 235.3,640.4"/><path class="dt" d="M264.1,638.3 269.2,639.2 275.9,624.9 273.6,624.3Z"/><path class="dt" d="M314.1,623.5 318.1,621.9 298.4,611.2 296.6,611.8Z"/><path class="dt" d="M290.2,640.4 295.4,640.1 288.2,625.8 285.8,625.9Z"/><path class="dt" d="M241.8,617.7 245.7,619.8 264.5,608.6 262.7,607.6Z"/><path class="dt" d="M269.2,639.2 274.4,639.9 278.4,625.3 275.9,624.9Z"/><path class="dt" d="M285,640.5 290.2,640.4 285.8,625.9 283.3,625.8Z"/><path class="dw" d="M254.8,647.9 259.4,649.4 259.4,650.6 254.8,649.3Z"/><path class="rr" d="M254.8,647.9 259.4,649.4"/><path class="rr" d="M254.8,649.3 259.4,650.6"/><path class="dt" d="M274.4,639.9 279.7,640.4 280.8,625.6 278.4,625.3Z"/><path class="dt" d="M279.7,640.4 285,640.5 283.3,625.8 280.8,625.6Z"/><path class="dw" d="M242.2,629.9 246,632 246,644.5 242.2,642.4Z"/><path class="rr" d="M242.2,629.9 246,632"/><path class="dw" d="M242.2,642.4 246,644.5 246,646.3 242.2,644.4Z"/><path class="rr" d="M242.2,642.4 246,644.5"/><path class="rr" d="M242.2,644.4 246,646.3"/><path class="dw" d="M314.4,636.2 318.4,634.6 318.4,646 314.4,647.7Z"/><path class="rr" d="M314.4,636.2 318.4,634.6"/><path class="rr" d="M314.4,647.7 318.4,646"/><path class="dt" d="M309.7,624.9 314.1,623.5 296.6,611.8 294.5,612.4Z"/><path class="dw" d="M259.4,649.4 264.3,650.6 264.3,651.7 259.4,650.6Z"/><path class="rr" d="M259.4,649.4 264.3,650.6"/><path class="rr" d="M259.4,650.6 264.3,651.7"/><path class="dt" d="M245.7,619.8 249.8,621.6 266.4,609.6 264.5,608.6Z"/><path class="dw" d="M321.8,620.2 325.1,618.3 325.1,630.8 321.8,632.7Z"/><path class="rr" d="M321.8,620.2 325.1,618.3"/><path class="dw" d="M321.8,632.7 325.1,630.8 325.1,641.7 321.8,643.8Z"/><path class="rr" d="M321.8,632.7 325.1,630.8"/><path class="rr" d="M321.8,643.8 325.1,641.7"/><path class="dw" d="M235.3,613 238.4,615.4 238.4,627.9 235.3,625.5Z"/><path class="rr" d="M235.3,613 238.4,615.4"/><path class="dw" d="M235.3,625.5 238.4,627.9 238.4,640.4 235.3,638Z"/><path class="rr" d="M235.3,625.5 238.4,627.9"/><path class="dw" d="M235.3,638 238.4,640.4 238.4,642.6 235.3,640.4Z"/><path class="rr" d="M235.3,638 238.4,640.4"/><path class="rr" d="M235.3,640.4 238.4,642.6"/><path class="dw" d="M264.3,650.6 269.4,651.6 269.4,652.5 264.3,651.7Z"/><path class="rr" d="M264.3,650.6 269.4,651.6"/><path class="rr" d="M264.3,651.7 269.4,652.5"/><path class="dt" d="M305.1,626 309.7,624.9 294.5,612.4 292.3,612.8Z"/><path class="dw" d="M246,632 250.1,633.9 250.1,646.4 246,644.5Z"/><path class="rr" d="M246,632 250.1,633.9"/><path class="dw" d="M246,644.5 250.1,646.4 250.1,648 246,646.3Z"/><path class="rr" d="M246,644.5 250.1,646.4"/><path class="rr" d="M246,646.3 250.1,648"/><path class="dt" d="M249.8,621.6 254.3,623.3 268.5,610.5 266.4,609.6Z"/><path class="dw" d="M310,637.5 314.4,636.2 314.4,647.7 310,649.3Z"/><path class="rr" d="M310,637.5 314.4,636.2"/><path class="rr" d="M310,649.3 314.4,647.7"/><path class="dw" d="M269.4,651.6 274.6,652.4 274.6,653 269.4,652.5Z"/><path class="rr" d="M269.4,651.6 274.6,652.4"/><path class="rr" d="M269.4,652.5 274.6,653"/><path class="dw" d="M285.1,653 290.4,653 290.4,653 285.1,653.3Z"/><path class="rr" d="M285.1,653 290.4,653"/><path class="rr" d="M285.1,653.3 290.4,653"/><path class="dw" d="M274.6,652.4 279.8,652.8 279.8,653.3 274.6,653Z"/><path class="rr" d="M274.6,652.4 279.8,652.8"/><path class="rr" d="M274.6,653 279.8,653.3"/><path class="dt" d="M300.3,626.9 305.1,626 292.3,612.8 290.1,613.1Z"/><path class="dw" d="M279.8,652.8 285.1,653 285.1,653.3 279.8,653.3Z"/><path class="rr" d="M279.8,652.8 285.1,653"/><path class="rr" d="M279.8,653.3 285.1,653.3"/><path class="dt" d="M254.3,623.3 259,624.7 270.7,611.3 268.5,610.5Z"/><path class="dw" d="M318.1,621.9 321.8,620.2 321.8,632.7 318.1,634.4Z"/><path class="rr" d="M318.1,621.9 321.8,620.2"/><path class="dw" d="M318.1,634.4 321.8,632.7 321.8,643.8 318.1,645.8Z"/><path class="rr" d="M318.1,634.4 321.8,632.7"/><path class="rr" d="M318.1,645.8 321.8,643.8"/><path class="dw" d="M238.4,615.4 241.8,617.7 241.8,630.2 238.4,627.9Z"/><path class="rr" d="M238.4,615.4 241.8,617.7"/><path class="dw" d="M238.4,627.9 241.8,630.2 241.8,642.7 238.4,640.4Z"/><path class="rr" d="M238.4,627.9 241.8,630.2"/><path class="dw" d="M238.4,640.4 241.8,642.7 241.8,644.6 238.4,642.6Z"/><path class="rr" d="M238.4,640.4 241.8,642.7"/><path class="rr" d="M238.4,642.6 241.8,644.6"/><path class="dw" d="M250.1,633.9 254.5,635.6 254.5,648.1 250.1,646.4Z"/><path class="rr" d="M250.1,633.9 254.5,635.6"/><path class="dw" d="M250.1,646.4 254.5,648.1 254.5,649.5 250.1,648Z"/><path class="rr" d="M250.1,646.4 254.5,648.1"/><path class="rr" d="M250.1,648 254.5,649.5"/><path class="dt" d="M295.2,627.5 300.3,626.9 290.1,613.1 287.7,613.3Z"/><path class="dt" d="M259,624.7 263.9,625.9 273,611.9 270.7,611.3Z"/><path class="dw" d="M305.3,638.6 310,637.5 310,649.3 305.3,650.6Z"/><path class="rr" d="M305.3,638.6 310,637.5"/><path class="rr" d="M305.3,650.6 310,649.3"/><path class="dt" d="M290.1,627.9 295.2,627.5 287.7,613.3 285.3,613.4Z"/><path class="dt" d="M263.9,625.9 269,626.8 275.4,612.4 273,611.9Z"/><path class="dt" d="M284.8,628 290.1,627.9 285.3,613.4 282.8,613.3Z"/><path class="dt" d="M269,626.8 274.2,627.5 277.9,612.9 275.4,612.4Z"/><path class="dt" d="M279.5,627.9 284.8,628 282.8,613.3 280.3,613.2Z"/><path class="dt" d="M274.2,627.5 279.5,627.9 280.3,613.2 277.9,612.9Z"/><path class="dw" d="M254.5,635.6 259.2,637.1 259.2,649.6 254.5,648.1Z"/><path class="rr" d="M254.5,635.6 259.2,637.1"/><path class="dw" d="M254.5,648.1 259.2,649.6 259.2,650.7 254.5,649.5Z"/><path class="rr" d="M254.5,648.1 259.2,649.6"/><path class="rr" d="M254.5,649.5 259.2,650.7"/><path class="dw" d="M300.5,639.5 305.3,638.6 305.3,650.6 300.5,651.6Z"/><path class="rr" d="M300.5,639.5 305.3,638.6"/><path class="rr" d="M300.5,651.6 305.3,650.6"/><path class="dw" d="M314.1,623.5 318.1,621.9 318.1,634.4 314.1,636Z"/><path class="rr" d="M314.1,623.5 318.1,621.9"/><path class="dw" d="M314.1,636 318.1,634.4 318.1,645.8 314.1,647.5Z"/><path class="rr" d="M314.1,636 318.1,634.4"/><path class="rr" d="M314.1,647.5 318.1,645.8"/><path class="dw" d="M241.8,617.7 245.7,619.8 245.7,632.3 241.8,630.2Z"/><path class="rr" d="M241.8,617.7 245.7,619.8"/><path class="dw" d="M241.8,630.2 245.7,632.3 245.7,644.8 241.8,642.7Z"/><path class="rr" d="M241.8,630.2 245.7,632.3"/><path class="dw" d="M241.8,642.7 245.7,644.8 245.7,646.5 241.8,644.6Z"/><path class="rr" d="M241.8,642.7 245.7,644.8"/><path class="rr" d="M241.8,644.6 245.7,646.5"/><path class="dw" d="M259.2,637.1 264.1,638.3 264.1,650.8 259.2,649.6Z"/><path class="rr" d="M259.2,637.1 264.1,638.3"/><path class="dw" d="M259.2,649.6 264.1,650.8 264.1,651.8 259.2,650.7Z"/><path class="rr" d="M259.2,649.6 264.1,650.8"/><path class="rr" d="M259.2,650.7 264.1,651.8"/><path class="dw" d="M295.4,640.1 300.5,639.5 300.5,651.6 295.4,652.4Z"/><path class="rr" d="M295.4,640.1 300.5,639.5"/><path class="rr" d="M295.4,652.4 300.5,651.6"/><path class="dw" d="M264.1,638.3 269.2,639.2 269.2,651.7 264.1,650.8Z"/><path class="rr" d="M264.1,638.3 269.2,639.2"/><path class="dw" d="M264.1,650.8 269.2,651.7 269.2,652.5 264.1,651.8Z"/><path class="rr" d="M264.1,650.8 269.2,651.7"/><path class="rr" d="M264.1,651.8 269.2,652.5"/><path class="dw" d="M290.2,640.4 295.4,640.1 295.4,652.4 290.2,652.9Z"/><path class="rr" d="M290.2,640.4 295.4,640.1"/><path class="rr" d="M290.2,652.9 295.4,652.4"/><path class="dw" d="M309.7,624.9 314.1,623.5 314.1,636 309.7,637.4Z"/><path class="rr" d="M309.7,624.9 314.1,623.5"/><path class="dw" d="M309.7,637.4 314.1,636 314.1,647.5 309.7,649.1Z"/><path class="rr" d="M309.7,637.4 314.1,636"/><path class="rr" d="M309.7,649.1 314.1,647.5"/><path class="dw" d="M245.7,619.8 249.8,621.6 249.8,634.1 245.7,632.3Z"/><path class="rr" d="M245.7,619.8 249.8,621.6"/><path class="dw" d="M245.7,632.3 249.8,634.1 249.8,646.6 245.7,644.8Z"/><path class="rr" d="M245.7,632.3 249.8,634.1"/><path class="dw" d="M245.7,644.8 249.8,646.6 249.8,648.2 245.7,646.5Z"/><path class="rr" d="M245.7,644.8 249.8,646.6"/><path class="rr" d="M245.7,646.5 249.8,648.2"/><path class="dw" d="M269.2,639.2 274.4,639.9 274.4,652.4 269.2,651.7Z"/><path class="rr" d="M269.2,639.2 274.4,639.9"/><path class="dw" d="M269.2,651.7 274.4,652.4 274.4,653 269.2,652.5Z"/><path class="rr" d="M269.2,651.7 274.4,652.4"/><path class="rr" d="M269.2,652.5 274.4,653"/><path class="dw" d="M285,640.5 290.2,640.4 290.2,652.9 285,653Z"/><path class="rr" d="M285,640.5 290.2,640.4"/><path class="dw" d="M285,653 290.2,652.9 290.2,653 285,653.3Z"/><path class="rr" d="M285,653 290.2,652.9"/><path class="rr" d="M285,653.3 290.2,653"/><path class="dw" d="M274.4,639.9 279.7,640.4 279.7,652.9 274.4,652.4Z"/><path class="rr" d="M274.4,639.9 279.7,640.4"/><path class="dw" d="M274.4,652.4 279.7,652.9 279.7,653.3 274.4,653Z"/><path class="rr" d="M274.4,652.4 279.7,652.9"/><path class="rr" d="M274.4,653 279.7,653.3"/><path class="dw" d="M279.7,640.4 285,640.5 285,653 279.7,652.9Z"/><path class="rr" d="M279.7,640.4 285,640.5"/><path class="dw" d="M279.7,652.9 285,653 285,653.3 279.7,653.3Z"/><path class="rr" d="M279.7,652.9 285,653"/><path class="rr" d="M279.7,653.3 285,653.3"/><path class="dw" d="M305.1,626 309.7,624.9 309.7,637.4 305.1,638.5Z"/><path class="rr" d="M305.1,626 309.7,624.9"/><path class="dw" d="M305.1,638.5 309.7,637.4 309.7,649.1 305.1,650.4Z"/><path class="rr" d="M305.1,638.5 309.7,637.4"/><path class="rr" d="M305.1,650.4 309.7,649.1"/><path class="dw" d="M249.8,621.6 254.3,623.3 254.3,635.8 249.8,634.1Z"/><path class="rr" d="M249.8,621.6 254.3,623.3"/><path class="dw" d="M249.8,634.1 254.3,635.8 254.3,648.3 249.8,646.6Z"/><path class="rr" d="M249.8,634.1 254.3,635.8"/><path class="dw" d="M249.8,646.6 254.3,648.3 254.3,649.7 249.8,648.2Z"/><path class="rr" d="M249.8,646.6 254.3,648.3"/><path class="rr" d="M249.8,648.2 254.3,649.7"/><path class="dw" d="M254.3,623.3 259,624.7 259,637.2 254.3,635.8Z"/><path class="rr" d="M254.3,623.3 259,624.7"/><path class="dw" d="M254.3,635.8 259,637.2 259,649.7 254.3,648.3Z"/><path class="rr" d="M254.3,635.8 259,637.2"/><path class="dw" d="M254.3,648.3 259,649.7 259,650.9 254.3,649.7Z"/><path class="rr" d="M254.3,648.3 259,649.7"/><path class="rr" d="M254.3,649.7 259,650.9"/><path class="dw" d="M300.3,626.9 305.1,626 305.1,638.5 300.3,639.4Z"/><path class="rr" d="M300.3,626.9 305.1,626"/><path class="dw" d="M300.3,639.4 305.1,638.5 305.1,650.4 300.3,651.5Z"/><path class="rr" d="M300.3,639.4 305.1,638.5"/><path class="rr" d="M300.3,651.5 305.1,650.4"/><path class="dw" d="M259,624.7 263.9,625.9 263.9,638.4 259,637.2Z"/><path class="rr" d="M259,624.7 263.9,625.9"/><path class="dw" d="M259,637.2 263.9,638.4 263.9,650.9 259,649.7Z"/><path class="rr" d="M259,637.2 263.9,638.4"/><path class="dw" d="M259,649.7 263.9,650.9 263.9,651.9 259,650.9Z"/><path class="rr" d="M259,649.7 263.9,650.9"/><path class="rr" d="M259,650.9 263.9,651.9"/><path class="dw" d="M295.2,627.5 300.3,626.9 300.3,639.4 295.2,640Z"/><path class="rr" d="M295.2,627.5 300.3,626.9"/><path class="dw" d="M295.2,640 300.3,639.4 300.3,651.5 295.2,652.3Z"/><path class="rr" d="M295.2,640 300.3,639.4"/><path class="rr" d="M295.2,652.3 300.3,651.5"/><path class="dw" d="M263.9,625.9 269,626.8 269,639.3 263.9,638.4Z"/><path class="rr" d="M263.9,625.9 269,626.8"/><path class="dw" d="M263.9,638.4 269,639.3 269,651.8 263.9,650.9Z"/><path class="rr" d="M263.9,638.4 269,639.3"/><path class="dw" d="M263.9,650.9 269,651.8 269,652.6 263.9,651.9Z"/><path class="rr" d="M263.9,650.9 269,651.8"/><path class="rr" d="M263.9,651.9 269,652.6"/><path class="dw" d="M290.1,627.9 295.2,627.5 295.2,640 290.1,640.4Z"/><path class="rr" d="M290.1,627.9 295.2,627.5"/><path class="dw" d="M290.1,640.4 295.2,640 295.2,652.3 290.1,652.9Z"/><path class="rr" d="M290.1,640.4 295.2,640"/><path class="rr" d="M290.1,652.9 295.2,652.3"/><path class="dw" d="M269,626.8 274.2,627.5 274.2,640 269,639.3Z"/><path class="rr" d="M269,626.8 274.2,627.5"/><path class="dw" d="M269,639.3 274.2,640 274.2,652.5 269,651.8Z"/><path class="rr" d="M269,639.3 274.2,640"/><path class="dw" d="M269,651.8 274.2,652.5 274.2,653.1 269,652.6Z"/><path class="rr" d="M269,651.8 274.2,652.5"/><path class="rr" d="M269,652.6 274.2,653.1"/><path class="dw" d="M284.8,628 290.1,627.9 290.1,640.4 284.8,640.5Z"/><path class="rr" d="M284.8,628 290.1,627.9"/><path class="dw" d="M284.8,640.5 290.1,640.4 290.1,652.9 284.8,653Z"/><path class="rr" d="M284.8,640.5 290.1,640.4"/><path class="rr" d="M284.8,653 290.1,652.9"/><path class="dw" d="M284.8,653 290.1,652.9 290.1,652.9 284.8,653.2Z"/><path class="rr" d="M284.8,653 290.1,652.9"/><path class="rr" d="M284.8,653.2 290.1,652.9"/><path class="dw" d="M274.2,627.5 279.5,627.9 279.5,640.4 274.2,640Z"/><path class="rr" d="M274.2,627.5 279.5,627.9"/><path class="dw" d="M274.2,640 279.5,640.4 279.5,652.9 274.2,652.5Z"/><path class="rr" d="M274.2,640 279.5,640.4"/><path class="dw" d="M274.2,652.5 279.5,652.9 279.5,653.3 274.2,653.1Z"/><path class="rr" d="M274.2,652.5 279.5,652.9"/><path class="rr" d="M274.2,653.1 279.5,653.3"/><path class="dw" d="M279.5,627.9 284.8,628 284.8,640.5 279.5,640.4Z"/><path class="rr" d="M279.5,627.9 284.8,628"/><path class="dw" d="M279.5,640.4 284.8,640.5 284.8,653 279.5,652.9Z"/><path class="rr" d="M279.5,640.4 284.8,640.5"/><path class="dw" d="M279.5,652.9 284.8,653 284.8,653.2 279.5,653.3Z"/><path class="rr" d="M279.5,652.9 284.8,653"/><path class="rr" d="M279.5,653.3 284.8,653.2"/><path class="lt" d="M436.4,538.5 432.2,538.3 428,538.2 423.8,538.3 419.5,538.6 422.2,551.4 424.3,551.2 426.3,551.1 428.4,551 430.4,551Z"/><path class="lt" d="M419.5,538.6 415.3,539.1 411.2,539.7 407.1,540.5 403.2,541.5 414.2,553.2 416.1,552.6 418.1,552.1 420.1,551.8 422.2,551.4Z"/><path class="lt" d="M452,541 448.3,540.2 444.5,539.5 440.5,538.9 436.4,538.5 430.4,551 432.4,551.2 434.4,551.3 436.3,551.6 438.1,552Z"/><path class="lt" d="M403.2,541.5 399.4,542.6 395.8,543.8 392.4,545.3 389.2,546.8 407.4,556.1 408.9,555.3 410.6,554.5 412.4,553.8 414.2,553.2Z"/><path class="lt" d="M435.8,526 431.6,525.8 427.4,525.7 423.2,525.8 418.9,526.1 421.6,538.9 423.7,538.7 425.7,538.6 427.8,538.5 429.8,538.5Z"/><path class="lt" d="M418.9,526.1 414.7,526.6 410.6,527.2 406.5,528 402.6,529 413.6,540.7 415.5,540.1 417.5,539.6 419.5,539.3 421.6,538.9Z"/><path class="lt" d="M464.7,545.9 461.9,544.5 458.8,543.2 455.5,542.1 452,541 438.1,552 439.8,552.4 441.4,552.9 442.9,553.4 444.2,554Z"/><path class="li" d="M430.4,551 428.4,551 426.3,551.1 424.3,551.2 422.2,551.4 422.2,553.4 424.3,553.2 426.3,553.1 428.4,553 430.4,553Z"/><path class="lt" d="M451.4,528.5 447.7,527.7 443.9,527 439.9,526.4 435.8,526 429.8,538.5 431.8,538.7 433.8,538.8 435.7,539.1 437.5,539.5Z"/><path class="li" d="M422.2,551.4 420.1,551.8 418.1,552.1 416.1,552.6 414.2,553.2 414.2,555.2 416.1,554.6 418.1,554.1 420.1,553.8 422.2,553.4Z"/><path class="lt" d="M389.2,546.8 386.3,548.5 383.6,550.2 381.2,552.1 379.1,554.1 402.4,560 403.5,559 404.6,558 405.9,557 407.4,556.1Z"/><path class="lt" d="M402.6,529 398.8,530.1 395.2,531.3 391.8,532.8 388.6,534.3 406.8,543.6 408.3,542.8 410,542 411.8,541.3 413.6,540.7Z"/><path class="li" d="M438.1,552 436.3,551.6 434.4,551.3 432.4,551.2 430.4,551 430.4,553 432.4,553.2 434.4,553.3 436.3,553.6 438.1,554Z"/><path class="li" d="M414.2,553.2 412.4,553.8 410.6,554.5 408.9,555.3 407.4,556.1 407.4,558.1 408.9,557.3 410.6,556.5 412.4,555.8 414.2,555.2Z"/><path class="lt" d="M435.2,513.5 431,513.3 426.8,513.2 422.6,513.3 418.3,513.6 421,526.4 423.1,526.2 425.1,526.1 427.2,526 429.2,526Z"/><path class="lt" d="M418.3,513.6 414.1,514.1 410,514.7 405.9,515.5 402,516.5 413,528.2 414.9,527.6 416.9,527.1 418.9,526.8 421,526.4Z"/><path class="li" d="M444.2,554 442.9,553.4 441.4,552.9 439.8,552.4 438.1,552 438.1,554 439.8,554.4 441.4,554.9 442.9,555.4 444.2,556Z"/><path class="lt" d="M464.1,533.4 461.3,532 458.2,530.7 454.9,529.6 451.4,528.5 437.5,539.5 439.2,539.9 440.8,540.4 442.3,540.9 443.6,541.5Z"/><path class="lt" d="M473,552.5 471.4,550.7 469.5,549 467.2,547.4 464.7,545.9 444.2,554 445.5,554.7 446.6,555.4 447.5,556.1 448.3,556.9Z"/><path class="li" d="M407.4,556.1 405.9,557 404.6,558 403.5,559 402.4,560 402.4,562 403.5,561 404.6,560 405.9,559 407.4,558.1Z"/><path class="li" d="M429.8,538.5 427.8,538.5 425.7,538.6 423.7,538.7 421.6,538.9 421.6,540.9 423.7,540.7 425.7,540.6 427.8,540.5 429.8,540.5Z"/><path class="lt" d="M450.8,516 447.1,515.2 443.3,514.5 439.3,513.9 435.2,513.5 429.2,526 431.2,526.2 433.2,526.3 435.1,526.6 436.9,527Z"/><path class="li" d="M421.6,538.9 419.5,539.3 417.5,539.6 415.5,540.1 413.6,540.7 413.6,542.7 415.5,542.1 417.5,541.6 419.5,541.3 421.6,540.9Z"/><path class="lt" d="M388.6,534.3 385.7,536 383,537.7 380.6,539.6 378.5,541.6 401.8,547.5 402.9,546.5 404,545.5 405.3,544.5 406.8,543.6Z"/><path class="lt" d="M476.7,572.5 476.4,570.6 475.8,568.7 474.9,566.8 473.6,565 448.9,569.4 449.5,570.2 450,571 450.2,571.9 450.4,572.7Z"/><path class="lt" d="M402,516.5 398.2,517.6 394.6,518.8 391.2,520.3 388,521.8 406.2,531.1 407.7,530.3 409.4,529.5 411.2,528.8 413,528.2Z"/><path class="li" d="M437.5,539.5 435.7,539.1 433.8,538.8 431.8,538.7 429.8,538.5 429.8,540.5 431.8,540.7 433.8,540.8 435.7,541.1 437.5,541.5Z"/><path class="lt" d="M379.1,554.1 377.3,556.2 375.8,558.3 374.7,560.5 373.9,562.7 399.9,564.6 400.3,563.4 400.9,562.2 401.6,561.1 402.4,560Z"/><path class="li" d="M413.6,540.7 411.8,541.3 410,542 408.3,542.8 406.8,543.6 406.8,545.6 408.3,544.8 410,544 411.8,543.3 413.6,542.7Z"/><path class="li" d="M450.4,572.7 450.2,571.9 450,571 449.5,570.2 448.9,569.4 448.9,571.4 449.5,572.2 450,573 450.2,573.9 450.4,574.7Z"/><path class="li" d="M448.3,556.9 447.5,556.1 446.6,555.4 445.5,554.7 444.2,554 444.2,556 445.5,556.7 446.6,557.4 447.5,558.1 448.3,558.9Z"/><path class="li" d="M402.4,560 401.6,561.1 400.9,562.2 400.3,563.4 399.9,564.6 399.9,566.6 400.3,565.4 400.9,564.2 401.6,563.1 402.4,562Z"/><path class="li" d="M443.6,541.5 442.3,540.9 440.8,540.4 439.2,539.9 437.5,539.5 437.5,541.5 439.2,541.9 440.8,542.4 442.3,542.9 443.6,543.5Z"/><path class="lt" d="M463.5,520.9 460.7,519.5 457.6,518.2 454.3,517.1 450.8,516 436.9,527 438.6,527.4 440.2,527.9 441.7,528.4 443,529Z"/><path class="lt" d="M472.4,540 470.8,538.2 468.9,536.5 466.6,534.9 464.1,533.4 443.6,541.5 444.9,542.2 446,542.9 446.9,543.6 447.7,544.4Z"/><path class="li" d="M406.8,543.6 405.3,544.5 404,545.5 402.9,546.5 401.8,547.5 401.8,549.5 402.9,548.5 404,547.5 405.3,546.5 406.8,545.6Z"/><path class="li" d="M429.2,526 427.2,526 425.1,526.1 423.1,526.2 421,526.4 421,528.4 423.1,528.2 425.1,528.1 427.2,528 429.2,528Z"/><path class="li" d="M421,526.4 418.9,526.8 416.9,527.1 414.9,527.6 413,528.2 413,530.2 414.9,529.6 416.9,529.1 418.9,528.8 421,528.4Z"/><path class="lt" d="M388,521.8 385.1,523.5 382.4,525.2 380,527.1 377.9,529.1 401.2,535 402.3,534 403.4,533 404.7,532 406.2,531.1Z"/><path class="lt" d="M476.1,560 475.8,558.1 475.2,556.2 474.3,554.3 473,552.5 448.3,556.9 448.9,557.7 449.4,558.5 449.6,559.4 449.8,560.2Z"/><path class="li" d="M436.9,527 435.1,526.6 433.2,526.3 431.2,526.2 429.2,526 429.2,528 431.2,528.2 433.2,528.3 435.1,528.6 436.9,529Z"/><path class="lt" d="M378.5,541.6 376.7,543.7 375.2,545.8 374.1,548 373.3,550.2 399.3,552.1 399.7,550.9 400.3,549.7 401,548.6 401.8,547.5Z"/><path class="li" d="M413,528.2 411.2,528.8 409.4,529.5 407.7,530.3 406.2,531.1 406.2,533.1 407.7,532.3 409.4,531.5 411.2,530.8 413,530.2Z"/><path class="li" d="M449.8,560.2 449.6,559.4 449.4,558.5 448.9,557.7 448.3,556.9 448.3,558.9 448.9,559.7 449.4,560.5 449.6,561.4 449.8,562.2Z"/><path class="li" d="M399.9,564.6 399.7,565.7 399.7,566.9 399.8,568.1 400.1,569.3 400.1,571.3 399.8,570.1 399.7,568.9 399.7,567.7 399.9,566.6Z"/><path class="li" d="M447.7,544.4 446.9,543.6 446,542.9 444.9,542.2 443.6,541.5 443.6,543.5 444.9,544.2 446,544.9 446.9,545.6 447.7,546.4Z"/><path class="lt" d="M373.9,562.7 373.5,564.9 373.4,567.2 373.6,569.4 374.3,571.6 400.1,569.3 399.8,568.1 399.7,566.9 399.7,565.7 399.9,564.6Z"/><path class="lt" d="M474.1,580 475.3,578.2 476.1,576.3 476.6,574.4 476.7,572.5 450.4,572.7 450.3,573.6 450.1,574.4 449.7,575.3 449.1,576.1Z"/><path class="lw" d="M373.9,562.7 373.5,564.9 373.4,567.2 373.6,569.4 374.3,571.6 374.3,573.6 373.6,571.4 373.4,569.2 373.5,566.9 373.9,564.7Z"/><path class="li" d="M401.8,547.5 401,548.6 400.3,549.7 399.7,550.9 399.3,552.1 399.3,554.1 399.7,552.9 400.3,551.7 401,550.6 401.8,549.5Z"/><path class="li" d="M443,529 441.7,528.4 440.2,527.9 438.6,527.4 436.9,527 436.9,529 438.6,529.4 440.2,529.9 441.7,530.4 443,531Z"/><path class="lw" d="M474.1,580 475.3,578.2 476.1,576.3 476.6,574.4 476.7,572.5 476.7,574.5 476.6,576.4 476.1,578.3 475.3,580.2 474.1,582Z"/><path class="lt" d="M471.8,527.5 470.2,525.7 468.3,524 466,522.4 463.5,520.9 443,529 444.3,529.7 445.4,530.4 446.3,531.1 447.1,531.9Z"/><path class="li" d="M406.2,531.1 404.7,532 403.4,533 402.3,534 401.2,535 401.2,537 402.3,536 403.4,535 404.7,534 406.2,533.1Z"/><path class="lt" d="M475.5,547.5 475.2,545.6 474.6,543.7 473.7,541.8 472.4,540 447.7,544.4 448.3,545.2 448.8,546 449,546.9 449.2,547.7Z"/><path class="lt" d="M377.9,529.1 376.1,531.2 374.6,533.3 373.5,535.5 372.7,537.7 398.7,539.6 399.1,538.4 399.7,537.2 400.4,536.1 401.2,535Z"/><path class="li" d="M449.2,547.7 449,546.9 448.8,546 448.3,545.2 447.7,544.4 447.7,546.4 448.3,547.2 448.8,548 449,548.9 449.2,549.7Z"/><path class="li" d="M399.3,552.1 399.1,553.2 399.1,554.4 399.2,555.6 399.5,556.8 399.5,558.8 399.2,557.6 399.1,556.4 399.1,555.2 399.3,554.1Z"/><path class="li" d="M447.1,531.9 446.3,531.1 445.4,530.4 444.3,529.7 443,529 443,531 444.3,531.7 445.4,532.4 446.3,533.1 447.1,533.9Z"/><path class="lt" d="M373.3,550.2 372.9,552.4 372.8,554.7 373,556.9 373.7,559.1 399.5,556.8 399.2,555.6 399.1,554.4 399.1,553.2 399.3,552.1Z"/><path class="lt" d="M473.5,567.5 474.7,565.7 475.5,563.8 476,561.9 476.1,560 449.8,560.2 449.7,561.1 449.5,561.9 449.1,562.8 448.5,563.6Z"/><path class="lw" d="M373.3,550.2 372.9,552.4 372.8,554.7 373,556.9 373.7,559.1 373.7,561.1 373,558.9 372.8,556.7 372.9,554.4 373.3,552.2Z"/><path class="li" d="M401.2,535 400.4,536.1 399.7,537.2 399.1,538.4 398.7,539.6 398.7,541.6 399.1,540.4 399.7,539.2 400.4,538.1 401.2,537Z"/><path class="lt" d="M374.3,571.6 375.2,573.8 376.5,576 378.1,578.1 380.1,580.1 403,573.8 402,572.7 401.2,571.6 400.6,570.4 400.1,569.3Z"/><path class="lw" d="M473.5,567.5 474.7,565.7 475.5,563.8 476,561.9 476.1,560 476.1,562 476,563.9 475.5,565.8 474.7,567.7 473.5,569.5Z"/><path class="lt" d="M466.3,586.8 468.7,585.2 470.9,583.6 472.7,581.8 474.1,580 449.1,576.1 448.4,576.9 447.5,577.6 446.5,578.4 445.3,579Z"/><path class="lw" d="M374.3,571.6 375.2,573.8 376.5,576 378.1,578.1 380.1,580.1 380.1,582.1 378.1,580.1 376.5,578 375.2,575.8 374.3,573.6Z"/><path class="li" d="M398.7,539.6 398.5,540.7 398.5,541.9 398.6,543.1 398.9,544.3 398.9,546.3 398.6,545.1 398.5,543.9 398.5,542.7 398.7,541.6Z"/><path class="lt" d="M372.7,537.7 372.3,539.9 372.2,542.2 372.4,544.4 373.1,546.6 398.9,544.3 398.6,543.1 398.5,541.9 398.5,540.7 398.7,539.6Z"/><path class="lt" d="M472.9,555 474.1,553.2 474.9,551.3 475.4,549.4 475.5,547.5 449.2,547.7 449.1,548.6 448.9,549.4 448.5,550.3 447.9,551.1Z"/><path class="lw" d="M372.7,537.7 372.3,539.9 372.2,542.2 372.4,544.4 373.1,546.6 373.1,548.6 372.4,546.4 372.2,544.2 372.3,541.9 372.7,539.7Z"/><path class="lw" d="M466.3,586.8 468.7,585.2 470.9,583.6 472.7,581.8 474.1,580 474.1,582 472.7,583.8 470.9,585.6 468.7,587.2 466.3,588.8Z"/><path class="lt" d="M373.7,559.1 374.6,561.3 375.9,563.5 377.5,565.6 379.5,567.6 402.4,561.3 401.4,560.2 400.6,559.1 400,557.9 399.5,556.8Z"/><path class="lw" d="M472.9,555 474.1,553.2 474.9,551.3 475.4,549.4 475.5,547.5 475.5,549.5 475.4,551.4 474.9,553.3 474.1,555.2 472.9,557Z"/><path class="lt" d="M465.7,574.3 468.1,572.7 470.3,571.1 472.1,569.3 473.5,567.5 448.5,563.6 447.8,564.4 446.9,565.1 445.9,565.9 444.7,566.5Z"/><path class="lt" d="M380.1,580.1 382.3,582 384.9,583.9 387.7,585.6 390.8,587.2 408.2,577.6 406.7,576.7 405.3,575.8 404.1,574.8 403,573.8Z"/><path class="lt" d="M454,591.8 457.5,590.8 460.7,589.5 463.6,588.2 466.3,586.8 445.3,579 443.9,579.7 442.5,580.2 440.9,580.7 439.2,581.2Z"/><path class="lw" d="M373.7,559.1 374.6,561.3 375.9,563.5 377.5,565.6 379.5,567.6 379.5,569.6 377.5,567.6 375.9,565.5 374.6,563.3 373.7,561.1Z"/><path class="lw" d="M465.7,574.3 468.1,572.7 470.3,571.1 472.1,569.3 473.5,567.5 473.5,569.5 472.1,571.3 470.3,573.1 468.1,574.7 465.7,576.3Z"/><path class="lt" d="M390.8,587.2 394.1,588.7 397.6,590 401.3,591.2 405.2,592.3 415.3,580.4 413.4,579.8 411.6,579.1 409.8,578.4 408.2,577.6Z"/><path class="lt" d="M373.1,546.6 374,548.8 375.3,551 376.9,553.1 378.9,555.1 401.8,548.8 400.8,547.7 400,546.6 399.4,545.4 398.9,544.3Z"/><path class="lt" d="M438.6,594.7 442.7,594.2 446.6,593.6 450.4,592.8 454,591.8 439.2,581.2 437.5,581.6 435.6,581.9 433.7,582.1 431.7,582.2Z"/><path class="lw" d="M380.1,580.1 382.3,582 384.9,583.9 387.7,585.6 390.8,587.2 390.8,589.2 387.7,587.6 384.9,585.9 382.3,584 380.1,582.1Z"/><path class="lt" d="M465.1,561.8 467.5,560.2 469.7,558.6 471.5,556.8 472.9,555 447.9,551.1 447.2,551.9 446.3,552.6 445.3,553.4 444.1,554Z"/><path class="lt" d="M379.5,567.6 381.7,569.5 384.3,571.4 387.1,573.1 390.2,574.7 407.6,565.1 406.1,564.2 404.7,563.3 403.5,562.3 402.4,561.3Z"/><path class="lt" d="M453.4,579.3 456.9,578.3 460.1,577 463,575.7 465.7,574.3 444.7,566.5 443.3,567.2 441.9,567.7 440.3,568.2 438.6,568.7Z"/><path class="lw" d="M454,591.8 457.5,590.8 460.7,589.5 463.6,588.2 466.3,586.8 466.3,588.8 463.6,590.2 460.7,591.5 457.5,592.8 454,593.8Z"/><path class="lt" d="M405.2,592.3 409.2,593.2 413.3,593.9 417.5,594.5 421.7,594.8 423.4,582 421.3,581.7 419.3,581.3 417.2,580.9 415.3,580.4Z"/><path class="lt" d="M421.7,594.8 426,595 430.2,595.1 434.4,595 438.6,594.7 431.7,582.2 429.6,582.3 427.6,582.3 425.5,582.2 423.4,582Z"/><path class="lw" d="M373.1,546.6 374,548.8 375.3,551 376.9,553.1 378.9,555.1 378.9,557.1 376.9,555.1 375.3,553 374,550.8 373.1,548.6Z"/><path class="lw" d="M465.1,561.8 467.5,560.2 469.7,558.6 471.5,556.8 472.9,555 472.9,557 471.5,558.8 469.7,560.6 467.5,562.2 465.1,563.8Z"/><path class="lt" d="M390.2,574.7 393.5,576.2 397,577.5 400.7,578.7 404.6,579.8 414.7,567.9 412.8,567.3 411,566.6 409.2,565.9 407.6,565.1Z"/><path class="lt" d="M438,582.2 442.1,581.7 446,581.1 449.8,580.3 453.4,579.3 438.6,568.7 436.9,569.1 435,569.4 433.1,569.6 431.1,569.7Z"/><path class="lw" d="M379.5,567.6 381.7,569.5 384.3,571.4 387.1,573.1 390.2,574.7 390.2,576.7 387.1,575.1 384.3,573.4 381.7,571.5 379.5,569.6Z"/><path class="lt" d="M378.9,555.1 381.1,557 383.7,558.9 386.5,560.6 389.6,562.2 407,552.6 405.5,551.7 404.1,550.8 402.9,549.8 401.8,548.8Z"/><path class="lw" d="M390.8,587.2 394.1,588.7 397.6,590 401.3,591.2 405.2,592.3 405.2,594.3 401.3,593.2 397.6,592 394.1,590.7 390.8,589.2Z"/><path class="lt" d="M452.8,566.8 456.3,565.8 459.5,564.5 462.4,563.2 465.1,561.8 444.1,554 442.7,554.7 441.3,555.2 439.7,555.7 438,556.2Z"/><path class="lw" d="M453.4,579.3 456.9,578.3 460.1,577 463,575.7 465.7,574.3 465.7,576.3 463,577.7 460.1,579 456.9,580.3 453.4,581.3Z"/><path class="lw" d="M438.6,594.7 442.7,594.2 446.6,593.6 450.4,592.8 454,591.8 454,593.8 450.4,594.8 446.6,595.6 442.7,596.2 438.6,596.7Z"/><path class="lt" d="M404.6,579.8 408.6,580.7 412.7,581.4 416.9,582 421.1,582.3 422.8,569.5 420.7,569.2 418.7,568.8 416.6,568.4 414.7,567.9Z"/><path class="lt" d="M421.1,582.3 425.4,582.5 429.6,582.6 433.8,582.5 438,582.2 431.1,569.7 429,569.8 427,569.8 424.9,569.7 422.8,569.5Z"/><path class="lw" d="M405.2,592.3 409.2,593.2 413.3,593.9 417.5,594.5 421.7,594.8 421.7,596.8 417.5,596.5 413.3,595.9 409.2,595.2 405.2,594.3Z"/><path class="lw" d="M421.7,594.8 426,595 430.2,595.1 434.4,595 438.6,594.7 438.6,596.7 434.4,597 430.2,597.1 426,597 421.7,596.8Z"/><path class="lt" d="M389.6,562.2 392.9,563.7 396.4,565 400.1,566.2 404,567.3 414.1,555.4 412.2,554.8 410.4,554.1 408.6,553.4 407,552.6Z"/><path class="lt" d="M437.4,569.7 441.5,569.2 445.4,568.6 449.2,567.8 452.8,566.8 438,556.2 436.3,556.6 434.4,556.9 432.5,557.1 430.5,557.2Z"/><path class="lw" d="M378.9,555.1 381.1,557 383.7,558.9 386.5,560.6 389.6,562.2 389.6,564.2 386.5,562.6 383.7,560.9 381.1,559 378.9,557.1Z"/><path class="lw" d="M390.2,574.7 393.5,576.2 397,577.5 400.7,578.7 404.6,579.8 404.6,581.8 400.7,580.7 397,579.5 393.5,578.2 390.2,576.7Z"/><path class="lw" d="M452.8,566.8 456.3,565.8 459.5,564.5 462.4,563.2 465.1,561.8 465.1,563.8 462.4,565.2 459.5,566.5 456.3,567.8 452.8,568.8Z"/><path class="lw" d="M438,582.2 442.1,581.7 446,581.1 449.8,580.3 453.4,579.3 453.4,581.3 449.8,582.3 446,583.1 442.1,583.7 438,584.2Z"/><path class="lt" d="M404,567.3 408,568.2 412.1,568.9 416.3,569.5 420.5,569.8 422.2,557 420.1,556.7 418.1,556.3 416,555.9 414.1,555.4Z"/><path class="lt" d="M420.5,569.8 424.8,570 429,570.1 433.2,570 437.4,569.7 430.5,557.2 428.4,557.3 426.4,557.3 424.3,557.2 422.2,557Z"/><path class="lw" d="M404.6,579.8 408.6,580.7 412.7,581.4 416.9,582 421.1,582.3 421.1,584.3 416.9,584 412.7,583.4 408.6,582.7 404.6,581.8Z"/><path class="lw" d="M421.1,582.3 425.4,582.5 429.6,582.6 433.8,582.5 438,582.2 438,584.2 433.8,584.5 429.6,584.6 425.4,584.5 421.1,584.3Z"/><path class="lw" d="M389.6,562.2 392.9,563.7 396.4,565 400.1,566.2 404,567.3 404,569.3 400.1,568.2 396.4,567 392.9,565.7 389.6,564.2Z"/><path class="lw" d="M437.4,569.7 441.5,569.2 445.4,568.6 449.2,567.8 452.8,566.8 452.8,568.8 449.2,569.8 445.4,570.6 441.5,571.2 437.4,571.7Z"/><path class="lw" d="M404,567.3 408,568.2 412.1,568.9 416.3,569.5 420.5,569.8 420.5,571.8 416.3,571.5 412.1,570.9 408,570.2 404,569.3Z"/><path class="lw" d="M420.5,569.8 424.8,570 429,570.1 433.2,570 437.4,569.7 437.4,571.7 433.2,572 429,572.1 424.8,572 420.5,571.8Z"/><g opacity="0.99"><text transform="matrix(0.9400,-0.3410,0.4165,0.6354,179.00,579.90)" font-family="Liberation Sans" font-weight="bold" font-size="16" textLength="102.5" lengthAdjust="spacingAndGlyphs" fill="#0a0a0a" stroke="#0a0a0a" stroke-width="0.4">Practice 1</text><text transform="matrix(0.9400,-0.3400,0.6210,0.6507,509.00,461.50)" font-family="Liberation Sans" font-weight="bold" font-size="14" textLength="88.8" lengthAdjust="spacingAndGlyphs" fill="#0a0a0a" stroke="#0a0a0a" stroke-width="0.4">Practice 2</text></g><path d="M77.5,969.5L96,961M77.5,969.5L77.5,952.5M77.5,969.5L65.5,959.5" stroke="#6e737a" stroke-width="1" fill="none"/><text x="97" y="964" font-family="Liberation Sans" font-size="9" fill="#6e737a">x</text><text x="79" y="952" font-family="Liberation Sans" font-size="9" fill="#6e737a">z</text><text x="65" y="959" font-family="Liberation Sans" font-size="9" fill="#6e737a">y</text></svg>
</div>
<div class="a" style="left:50px;top:119px;width:69px;height:14px;background:#0a5ae6"></div>
<div class="t" style="left:55px;top:120px;color:#fff;font-size:9.6px">Perspective</div>
<div class="a" style="left:110px;top:121px;width:1px;height:10px;background:#cfe"></div>
<svg class="a" style="left:111px;top:119px" width="8" height="14"><path d="M1.5,6L4,8.5L6.5,6Z" fill="#fff"/></svg>
<div class="a" style="left:49px;top:998px;width:1514px;height:15px;background:#3a3a3a"></div>
<div class="a" style="left:50px;top:998px;width:58px;height:15px;background:#2a2a2a;border:1px solid #4e4e4e;border-top:none"></div>
<div class="t pl" style="left:57px;top:999px;color:#f0f0f0">Perspective</div>
<div class="t" style="left:113px;top:999px;color:#6e6e6e">Top</div>
<div class="t" style="left:140px;top:999px;color:#6e6e6e">Front</div>
<div class="t" style="left:172px;top:999px;color:#6e6e6e">Right</div>
<div class="t" style="left:204px;top:998px;color:#fff;font-weight:bold;font-size:12px">+</div>
<div class="a" style="left:0;top:1013px;width:1920px;height:16px;background:#2e2e2e"></div>
<div class="a" style="left:5px;top:1016px;width:8px;height:10px;border:1px solid #ccc"></div>
<div class="a" style="left:7px;top:1017px;width:3px;height:8px;background:#ccc"></div>
<div class="st" style="left:30px">CPlane</div>
<div class="st" style="left:80px">x 43706.955</div>
<div class="st" style="left:144px">y 27093.980</div>
<div class="st" style="left:226px">z 0</div>
<div class="st" style="left:280px">Millimeters</div>
<div class="st" style="left:359px">Default</div>
<div class="st" style="left:491px">Grid Snap</div>
<div class="st" style="left:547px">Ortho</div>
<div class="st" style="left:585px">Planar</div>
<div class="st" style="left:827px">Auto CPlane (Object)</div>
<div class="st" style="left:930px">Record History</div>
<div class="st" style="left:1007px">Filter</div>
<div class="st" style="left:1044px">CPU use: 0.7 %</div>
<div class="a" style="left:342px;top:1014px;width:13px;height:13px;background:#000;border:1px solid #bbb;border-radius:2px"></div>
<div class="a" style="left:620px;top:1014px;width:37.8px;height:15px;background:#3e5090"></div>
<div class="st" style="left:620px;width:37.8px;text-align:center;color:#f4f4f4;font-weight:bold">Osnap</div>
<div class="a" style="left:660px;top:1014px;width:58.8px;height:15px;background:#3e5090"></div>
<div class="st" style="left:660px;width:58.8px;text-align:center;color:#f4f4f4;font-weight:bold">SmartTrack</div>
<div class="a" style="left:722px;top:1014px;width:83.0px;height:15px;background:#3e5090"></div>
<div class="st" style="left:722px;width:83.0px;text-align:center;color:#f4f4f4;font-weight:bold">Gumball (World)</div>
<div class="a" style="left:813px;top:1019px;width:7px;height:6px;background:#ddd"></div>
<div class="a" style="left:814px;top:1015px;width:5px;height:6px;border:1px solid #ddd;border-radius:2px 2px 0 0"></div>
<div class="a" style="left:1906px;top:1016px;width:11px;height:11px;border:1.5px solid #ccc"></div>
<div class="a" style="left:1908px;top:1018px;width:3px;height:7px;background:#ccc"></div>
<svg width="1920" height="1029" style="position:absolute;left:0;top:0;pointer-events:none"><defs><radialGradient id="gs" cx="0.35" cy="0.35" r="0.7"><stop offset="0" stop-color="#fff"/><stop offset="1" stop-color="#888"/></radialGradient><radialGradient id="bs" cx="0.35" cy="0.3" r="0.75"><stop offset="0" stop-color="#9cf"/><stop offset="0.5" stop-color="#1a4fd0"/><stop offset="1" stop-color="#0a1a60"/></radialGradient><radialGradient id="grs" cx="0.4" cy="0.4" r="0.7"><stop offset="0" stop-color="#cfe"/><stop offset="0.5" stop-color="#3a3"/><stop offset="1" stop-color="#060"/></radialGradient><radialGradient id="hs" cx="0.35" cy="0.3" r="0.75"><stop offset="0" stop-color="#acf"/><stop offset="0.6" stop-color="#2a4fd8"/><stop offset="1" stop-color="#1a2a80"/></radialGradient></defs><path d="M14,94h6l3,3v13h-9Z" fill="#eee" stroke="#999" stroke-width="0.6"/><path d="M31.5,98h5l1,1.5h7v2h-11l-2,6Z" fill="#d9a81a"/><path d="M33.5,101h12l-2,6h-12Z" fill="#f5cf4a"/><rect x="53.5" y="95" width="13" height="14" fill="#b9ad6a" stroke="#6b6540" stroke-width="0.8"/><rect x="56" y="95" width="8" height="5" fill="#ddd5a0"/><rect x="56" y="103.5" width="8" height="5" fill="#8d844f"/><path d="M71,111L71,107L67,111Z" fill="#aaa"/><rect x="74" y="100" width="14" height="7" rx="1" fill="#bbb"/><rect x="77" y="95" width="8" height="5" fill="#eee"/><rect x="76" y="107" width="10" height="2" fill="#ddd"/><rect x="96" y="97" width="9" height="12" fill="#ddd"/><rect x="100" y="94" width="8" height="10" fill="#eee"/><path d="M105,94h3v3Z" fill="#111"/><path d="M120,95L127,107M128,95L121,107" stroke="#4a78d8" stroke-width="1.6"/><circle cx="120.5" cy="108" r="1.8" fill="none" stroke="#2a50c0"/><circle cx="127.5" cy="108" r="1.8" fill="none" stroke="#2a50c0"/><rect x="138" y="95" width="8" height="10" fill="#ddd" stroke="#777" stroke-width="0.6"/><rect x="142" y="99" width="8" height="10" fill="#f2f2f2" stroke="#777" stroke-width="0.6"/><rect x="161" y="96" width="10" height="13" rx="1" fill="#f0d060" stroke="#9a7a20" stroke-width="0.6"/><rect x="164" y="94" width="4" height="3" fill="#fff"/><path d="M193.5,105C192.5,98 185.5,97 182.5,102" stroke="#eee" stroke-width="2.4" fill="none"/><path d="M179.5,99L183.5,105L186.5,100Z" fill="#eee"/><path d="M197.5,110L197.5,106L193.5,110Z" fill="#aaa"/><path d="M203,103v-5a1,1 0 0 1 2,0v3v-6a1,1 0 0 1 2,0v6v-7a1,1 0 0 1 2,0v7v-6a1,1 0 0 1 2,0v6v-4a1,1 0 0 1 2,0v7c0,4 -3,6 -5,6c-3,0 -4,-2 -6,-5l-2,-3a1,1 0 0 1 2,-1Z" fill="#f4f4f4"/><ellipse cx="229" cy="102" rx="7" ry="3" fill="none" stroke="#ccc" stroke-width="0.9"/><ellipse cx="229" cy="102" rx="2" ry="7" fill="none" stroke="#ccc" stroke-width="0.9"/><circle cx="229" cy="102" r="1.5" fill="#ddd"/><circle cx="251.5" cy="100" r="4.5" fill="none" stroke="#ddd" stroke-width="1.3"/><path d="M248.5,103.5L244,109" stroke="#ddd" stroke-width="2"/><circle cx="273.5" cy="100" r="4.5" fill="none" stroke="#ddd" stroke-width="1.3"/><path d="M270.5,103.5L266,109" stroke="#ddd" stroke-width="2"/><rect x="268" y="94" width="12" height="10" fill="none" stroke="#aaa" stroke-width="0.8" stroke-dasharray="1.5,1"/><circle cx="294.5" cy="100" r="4.5" fill="none" stroke="#ddd" stroke-width="1.3"/><path d="M291.5,103.5L287,109" stroke="#ddd" stroke-width="2"/><path d="M286,97v-3h3M300,97v-3h-3M286,107v3h3M300,107v3h-3" stroke="#eee" stroke-width="1.2" fill="none"/><circle cx="314.5" cy="100" r="4.5" fill="#f2e000" stroke="#ddd" stroke-width="1.3"/><path d="M311.5,103.5L307,109" stroke="#ddd" stroke-width="2"/><circle cx="336.5" cy="100" r="4.5" fill="none" stroke="#ddd" stroke-width="1.3"/><path d="M333.5,103.5L329,109" stroke="#ddd" stroke-width="2"/><path d="M345,110L345,106L341,110Z" fill="#aaa"/><rect x="347.5" y="95" width="6.5" height="6.5" fill="#eee"/><rect x="355.0" y="95" width="6.5" height="6.5" fill="#eee"/><rect x="347.5" y="102.5" width="6.5" height="6.5" fill="#eee"/><rect x="355.0" y="102.5" width="6.5" height="6.5" fill="#eee"/><path d="M368,104c0,-3 3,-3 5,-4c2,-2 6,-2 8,0c2,1 3,1 3,4Z" fill="#d22"/><rect x="368" y="104" width="16" height="2" fill="#445"/><path d="M386,110L386,106L382,110Z" fill="#aaa"/><path d="M389,103L397,97L405,103L397,109Z" fill="#666" stroke="#aaa" stroke-width="0.6"/><rect x="395" y="100" width="3" height="4" fill="#eee"/><rect x="399" y="101" width="2" height="4" fill="#c22"/><path d="M407,110L407,106L403,110Z" fill="#aaa"/><circle cx="418" cy="102" r="6.5" fill="none" stroke="#aaa" stroke-width="1"/><circle cx="418" cy="102" r="1.8" fill="none" stroke="#eee"/><path d="M420,102h6" stroke="#eee"/><path d="M428,110L428,106L424,110Z" fill="#aaa"/><circle cx="435" cy="99" r="2.6" fill="#ff0"/><rect x="440" y="98" width="5" height="5" fill="#ff0"/><path d="M444,93h3v3M431,107v3h3" stroke="#ddd" fill="none"/><path d="M449,110L449,106L445,110Z" fill="#aaa"/><ellipse cx="460" cy="100" rx="5" ry="6" fill="#ccc"/><rect x="458" y="105" width="4" height="4" fill="#aaa"/><path d="M470,110L470,106L466,110Z" fill="#aaa"/><path d="M478,100v-3a3,3 0 0 1 6,0v3" stroke="#ccc" stroke-width="1.5" fill="none"/><rect x="476" y="100" width="10" height="9" fill="#ccc"/><path d="M491,110L491,106L487,110Z" fill="#aaa"/><path d="M494.5,104L502.5,108L510.5,102L502.5,99Z" fill="#2a3f9a"/><path d="M494.5,102L502.5,106L510.5,100L502.5,97Z" fill="#eee"/><path d="M494.5,100L502.5,104L510.5,98L501.5,94Z" fill="#e85020"/><path d="M512.5,110L512.5,106L508.5,110Z" fill="#aaa"/><circle cx="523.5" cy="102" r="5.5" fill="none" stroke="url(#cw)" stroke-width="3"/><circle cx="523.5" cy="102" r="5.5" fill="none" stroke="#f0f" stroke-width="3" stroke-dasharray="6,30"/><circle cx="523.5" cy="102" r="5.5" fill="none" stroke="#0c0" stroke-width="3" stroke-dasharray="0,11,6,30"/><circle cx="523.5" cy="102" r="5.5" fill="none" stroke="#f80" stroke-width="3" stroke-dasharray="0,22,6,30"/><circle cx="523.5" cy="102" r="5.5" fill="none" stroke="#08f" stroke-width="3" stroke-dasharray="0,28,7,30"/><path d="M533.5,110L533.5,106L529.5,110Z" fill="#aaa"/><circle cx="544.5" cy="102" r="6.5" fill="url(#gs)"/><path d="M544.5,95.5v13M538.0,102h13" stroke="#555" stroke-width="0.8"/><rect x="557" y="94" width="16" height="16" fill="none" stroke="#ccc" stroke-width="0.8" stroke-dasharray="1,1.5"/><circle cx="565" cy="101" r="5.5" fill="url(#gs)"/><circle cx="586" cy="102" r="7" fill="url(#bs)"/><path d="M596,110L596,106L592,110Z" fill="#aaa"/><circle cx="606.5" cy="103" r="6" fill="url(#gs)"/><path d="M608.5,99L614.5,94L612.5,101Z" fill="#f0a020"/><path d="M617.5,110L617.5,106L613.5,110Z" fill="#aaa"/><circle cx="628.5" cy="102" r="5" fill="none" stroke="#e8b820" stroke-width="3.5" stroke-dasharray="2,1.6"/><circle cx="628.5" cy="102" r="3" fill="#e8c840"/><path d="M638.5,110L638.5,106L634.5,110Z" fill="#aaa"/><path d="M644,95v8h6M644,95h7M651,103v5h6M647,108h8" stroke="#ddd" stroke-width="1" fill="none"/><path d="M660,110L660,106L656,110Z" fill="#aaa"/><circle cx="671" cy="102" r="7" fill="url(#grs)"/><path d="M681,110L681,106L677,110Z" fill="#aaa"/><circle cx="692" cy="102" r="7" fill="url(#hs)"/><text x="689" y="106" font-family="Liberation Sans" font-weight="bold" font-size="11" fill="#fff">?</text><path d="M702,110L702,106L698,110Z" fill="#aaa"/><polygon points="1917.5,83.0 1917.2,84.7 1916.0,84.2 1915.3,85.3 1916.2,86.2 1914.7,87.2 1914.2,86.0 1913.0,86.2 1913.0,87.5 1911.3,87.2 1911.8,86.0 1910.7,85.3 1909.8,86.2 1908.8,84.7 1910.0,84.2 1909.8,83.0 1908.5,83.0 1908.8,81.3 1910.0,81.8 1910.7,80.7 1909.8,79.8 1911.3,78.8 1911.8,80.0 1913.0,79.8 1913.0,78.5 1914.7,78.8 1914.2,80.0 1915.3,80.7 1916.2,79.8 1917.2,81.3 1916.0,81.8 1916.2,83.0" fill="#d0d0d0"/><circle cx="1913" cy="83" r="1.3" fill="#333"/><polygon points="1917.5,125.0 1917.2,126.7 1916.0,126.2 1915.3,127.3 1916.2,128.2 1914.7,129.2 1914.2,128.0 1913.0,128.2 1913.0,129.5 1911.3,129.2 1911.8,128.0 1910.7,127.3 1909.8,128.2 1908.8,126.7 1910.0,126.2 1909.8,125.0 1908.5,125.0 1908.8,123.3 1910.0,123.8 1910.7,122.7 1909.8,121.8 1911.3,120.8 1911.8,122.0 1913.0,121.8 1913.0,120.5 1914.7,120.8 1914.2,122.0 1915.3,122.7 1916.2,121.8 1917.2,123.3 1916.0,123.8 1916.2,125.0" fill="#d0d0d0"/><circle cx="1913" cy="125" r="1.3" fill="#333"/><path d="M1911,64L1914,61L1917,64ZM1911,69L1914,72L1917,69Z" fill="#ddd"/><rect x="1909.5" y="60.5" width="9" height="13" fill="none" stroke="#777" stroke-width="0.8"/><rect x="1905" y="131" width="15" height="54" rx="3" fill="#3f3f3f"/><rect x="1905" y="213" width="15" height="800" rx="3" fill="#3f3f3f"/><path d="M1908,143l5,-3l4,3l-4,4Z" fill="#e04040"/><path d="M1908,146l5,3l4,-3" stroke="#fff" fill="none"/><circle cx="1913" cy="172" r="4" fill="none" stroke="#f0c" stroke-width="2.5"/><path d="M1913,168a4,4 0 0 1 4,4" stroke="#0c0" stroke-width="2.5" fill="none"/><path d="M1913,176a4,4 0 0 1 -4,-4" stroke="#fa0" stroke-width="2.5" fill="none"/><rect x="1908" y="195" width="10" height="6" fill="#ccc"/><rect x="1908" y="201" width="10" height="1.5" fill="#111"/><circle cx="1913" cy="226" r="4" fill="#e04020"/><path d="M1909,226h8" stroke="#fc0" stroke-width="1.5"/><rect x="1908" y="251" width="10" height="7" rx="1" fill="none" stroke="#aaa" stroke-width="1.2"/><circle cx="1913" cy="254.5" r="2" fill="none" stroke="#aaa"/><rect x="1908" y="276" width="10" height="8" fill="#aaa"/><path d="M1908,280h10M1913,276v8" stroke="#3f3f3f"/><circle cx="1911" cy="306" r="3" fill="#ddd"/><path d="M1913,310l3,-6l3,6Z" fill="#ddd"/><path d="M7.5,128.6L7.5,138.6L10.5,135.6L13.5,140.6L14.5,139.6L12.5,134.6L15.5,134.6Z" fill="#eee"/><circle cx="32.4" cy="134.6" r="1.6" fill="#eee"/><path d="M40.4,142.6L40.4,138.6L36.4,142.6Z" fill="#888"/><path d="M4.5,162L9.5,152L15.5,160" stroke="#d8d8d8" fill="none"/><rect x="3.5" y="160" width="3" height="3" fill="none" stroke="#d8d8d8" stroke-width="0.8"/><rect x="14.5" y="159" width="3" height="3" fill="none" stroke="#d8d8d8" stroke-width="0.8"/><path d="M27.4,153C24.4,163 40.4,163 37.4,153" stroke="#d8d8d8" fill="none"/><rect x="25.4" y="151" width="3" height="3" fill="none" stroke="#d8d8d8" stroke-width="0.8"/><rect x="36.4" y="151" width="3" height="3" fill="none" stroke="#d8d8d8" stroke-width="0.8"/><path d="M18.5,165L18.5,161L14.5,165Z" fill="#888"/><path d="M40.4,165L40.4,161L36.4,165Z" fill="#888"/><circle cx="10.5" cy="177" r="6" fill="none" stroke="#d8d8d8"/><rect x="9.5" y="176" width="2" height="2" fill="#d8d8d8"/><ellipse cx="32.4" cy="177" rx="6.5" ry="4.5" fill="none" stroke="#d8d8d8"/><rect x="31.4" y="176" width="2" height="2" fill="#d8d8d8"/><path d="M18.5,185L18.5,181L14.5,185Z" fill="#888"/><path d="M40.4,185L40.4,181L36.4,185Z" fill="#888"/><path d="M5.5,194.4L15.5,199.4L5.5,205.4Z" fill="none" stroke="#d8d8d8"/><rect x="26.4" y="195.4" width="12" height="8" fill="none" stroke="#d8d8d8"/><path d="M18.5,207.4L18.5,203.4L14.5,207.4Z" fill="#888"/><path d="M40.4,207.4L40.4,203.4L36.4,207.4Z" fill="#888"/><path d="M4.5,219.5L7.5,214.5L13.5,214.5L16.5,219.5L13.5,224.5L7.5,224.5Z" fill="none" stroke="#d8d8d8"/><path d="M27.4,214.5C36.4,214.5 37.4,217.5 37.4,224.5" stroke="#d8d8d8" fill="none"/><path d="M18.5,227.5L18.5,223.5L14.5,227.5Z" fill="#888"/><path d="M40.4,227.5L40.4,223.5L36.4,227.5Z" fill="#888"/><path d="M4.5,238.7L10.5,234.7L16.5,238.7L16.5,244.7L10.5,246.7L4.5,243.7Z" fill="#7b8fe8" stroke="#223" stroke-width="0.6"/><path d="M4.5,238.7L10.5,241.7L16.5,238.7M10.5,241.7v5" stroke="#c8d0ff" fill="none" stroke-width="0.8"/><path d="M18.5,248.7L18.5,244.7L14.5,248.7Z" fill="#888"/><path d="M26.4,238.7L32.4,234.7L38.4,238.7L38.4,244.7L32.4,246.7L26.4,243.7Z" fill="#7b8fe8" stroke="#223" stroke-width="0.6"/><path d="M26.4,238.7L32.4,241.7L38.4,238.7M32.4,241.7v5" stroke="#c8d0ff" fill="none" stroke-width="0.8"/><path d="M40.4,248.7L40.4,244.7L36.4,248.7Z" fill="#888"/><circle cx="4.5" cy="244.7" r="1" fill="#fff"/><circle cx="15.5" cy="234.7" r="1" fill="#fff"/><path d="M4.5,260L10.5,256L16.5,260L16.5,266L10.5,269L4.5,266Z" fill="#5f70e0" stroke="#223" stroke-width="0.6"/><path d="M4.5,260L10.5,263L16.5,260M10.5,263v6" stroke="#b8c4ff" fill="none" stroke-width="0.8"/><path d="M18.5,270L18.5,266L14.5,270Z" fill="#888"/><circle cx="29.4" cy="264" r="4" fill="#6a7ae0" stroke="#223" stroke-width="0.5"/><circle cx="35.4" cy="260" r="4" fill="#7f8ef0" stroke="#223" stroke-width="0.5"/><path d="M40.4,270L40.4,266L36.4,270Z" fill="#888"/><ellipse cx="10.5" cy="286" rx="7" ry="3" fill="#eee"/><path d="M3.5,281v5a7,3 0 0 0 14,0v-5" fill="#6a7ae0"/><ellipse cx="10.5" cy="285" rx="4" ry="1.6" fill="#2a3a90"/><ellipse cx="10.5" cy="278" rx="4" ry="1.6" fill="none" stroke="#555"/><path d="M18.5,291L18.5,287L14.5,291Z" fill="#888"/><path d="M26.4,286L31.4,277L38.4,280L34.4,289Z" fill="#6a7ae0" stroke="#ccd" stroke-width="0.6"/><path d="M29.4,282l6,2M31.4,279l-2,7" stroke="#ccd" stroke-width="0.5"/><path d="M40.4,291L40.4,287L36.4,291Z" fill="#888"/><path d="M4.5,301l5,-4l4,2l-3,5Z" fill="#fc3"/><path d="M26.4,309l4,-10l3,5l5,-3l-3,8Z" fill="#f80"/><rect x="4.5" y="325.6" width="7" height="3" fill="#eee"/><rect x="11.5" y="319.6" width="3" height="8" fill="#2a3ab0"/><rect x="26.4" y="325.6" width="12" height="3" fill="#eee"/><rect x="32.4" y="319.6" width="3" height="8" fill="#2a3ab0"/><circle cx="8.5" cy="342.6" r="3.2" fill="#6a7ae0"/><circle cx="13.5" cy="347.6" r="3.2" fill="#2a3a90"/><circle cx="7.5" cy="347.6" r="3.2" fill="#fff"/><circle cx="32.4" cy="342.6" r="2.6" fill="#6a7ae0"/><circle cx="36.4" cy="347.6" r="2.6" fill="#2a3a90"/><circle cx="28.4" cy="347.6" r="2.6" fill="#fff"/><path d="M40.4,353.6L40.4,349.6L36.4,353.6Z" fill="#888"/><path d="M4.5,366C8.5,362 14.5,364 15.5,373" stroke="#ddd" stroke-width="1.2" fill="none"/><path d="M26.4,364C32.4,360 38.4,366 38.4,374" stroke="#ddd" stroke-width="1.2" fill="none"/><rect x="35.4" y="369" width="3" height="3" fill="none" stroke="#ddd" stroke-width="0.7"/><path d="M40.4,376L40.4,372L36.4,376Z" fill="#888"/><path d="M4.5,381h12v3h-4.5v10h-3v-10h-4.5Z" fill="#5a6ee0" stroke="#223" stroke-width="0.5"/><rect x="26.4" y="389" width="4" height="4" fill="#eee"/><rect x="31.4" y="385" width="3" height="3" fill="#7a8ae0"/><rect x="35.4" y="381" width="4" height="4" fill="#7a8ae0" stroke="#ccd" stroke-width="0.5"/><path d="M40.4,395L40.4,391L36.4,395Z" fill="#888"/><rect x="3.5" y="402" width="4" height="4" fill="#7a8ae0"/><rect x="9.5" y="405" width="4" height="4" fill="#7a8ae0"/><rect x="13.5" y="410" width="4" height="4" fill="#7a8ae0"/><rect x="3.5" y="410" width="4" height="4" fill="#eee"/><rect x="26.4" y="402" width="3" height="10" fill="#eee"/><path d="M30.4,412L38.4,406L36.4,403L29.4,409Z" fill="#6a7ae0"/><path d="M40.4,416L40.4,412L36.4,416Z" fill="#888"/><path d="M4.5,426.4L10.5,422.4L16.5,426.4L16.5,433.4L10.5,436.4L4.5,433.4Z" fill="#6a7ae0" stroke="#223" stroke-width="0.5"/><path d="M7.5,430.4h5v4h-5Z" fill="#eee"/><path d="M27.4,434.4v-9M32.4,434.4v-9M37.4,434.4v-9" stroke="#eee" stroke-width="1.6"/><path d="M25.4,426.4l2,-3l2,3M30.4,426.4l2,-3l2,3M35.4,426.4l2,-3l2,3" fill="#eee"/><rect x="25.4" y="433.4" width="14" height="2" fill="#6a7ae0"/><path d="M40.4,437.4L40.4,433.4L36.4,437.4Z" fill="#888"/><rect x="4.0" y="444.1" width="3" height="3" fill="#dde" stroke="#55a" stroke-width="0.5"/><rect x="4.0" y="449.1" width="3" height="3" fill="#dde" stroke="#55a" stroke-width="0.5"/><rect x="4.0" y="454.1" width="3" height="3" fill="#dde" stroke="#55a" stroke-width="0.5"/><rect x="9.0" y="444.1" width="3" height="3" fill="#dde" stroke="#55a" stroke-width="0.5"/><rect x="9.0" y="449.1" width="3" height="3" fill="#dde" stroke="#55a" stroke-width="0.5"/><rect x="9.0" y="454.1" width="3" height="3" fill="#dde" stroke="#55a" stroke-width="0.5"/><rect x="14.0" y="444.1" width="3" height="3" fill="#dde" stroke="#55a" stroke-width="0.5"/><rect x="14.0" y="449.1" width="3" height="3" fill="#dde" stroke="#55a" stroke-width="0.5"/><rect x="14.0" y="454.1" width="3" height="3" fill="#dde" stroke="#55a" stroke-width="0.5"/><rect x="29.4" y="443.6" width="6" height="14" fill="#b82020"/><path d="M31.4,445.6v2M31.4,449.6v2M31.4,453.6v2M33.4,445.6v2M33.4,449.6v2M33.4,453.6v2" stroke="#fff" stroke-width="1"/><path d="M40.4,458.6L40.4,454.6L36.4,458.6Z" fill="#888"/><path d="M4.5,476.9L7.5,465.9L11.5,465.9L8.5,476.9Z" fill="#eee"/><path d="M10.5,476.9L13.5,465.9L16.5,465.9L13.5,476.9Z" fill="#6a7ae0"/><path d="M30.4,464.9v14M27.4,469.9c4,-4 8,0 4,4c-3,3 3,6 6,3" stroke="#3a4aa0" stroke-width="2.2" fill="none"/><path d="M40.4,479.9L40.4,475.9L36.4,479.9Z" fill="#888"/><path d="M4.5,493L8.5,498L16.5,487" stroke="#eee" stroke-width="2" fill="none"/><rect x="26.4" y="490" width="6" height="6" fill="#ccc"/><path d="M33.4,497l3,-7l3,7Z" fill="#ccc"/><path d="M40.4,501L40.4,497L36.4,501Z" fill="#888"/><path d="M4.5,516.4L10.5,511.4L16.5,516.4L10.5,520.4Z" fill="#e8c840"/><path d="M9.5,507.4h6" stroke="#fff" stroke-width="2"/><path d="M18.5,523.4L18.5,519.4L14.5,523.4Z" fill="#888"/><circle cx="14" cy="589" r="4.5" fill="none" stroke="#ccc"/><path d="M14,589h6" stroke="#ccc"/><circle cx="14" cy="589" r="1.3" fill="#ccc"/><path d="M33,594l4,-4M37,587l3,-2" stroke="#ddd" stroke-width="1.2"/><polygon points="44.0,574.0 43.7,575.5 42.7,575.1 42.0,576.0 42.8,576.8 41.5,577.7 41.1,576.7 40.0,576.9 40.0,578.0 38.5,577.7 38.9,576.7 38.0,576.0 37.2,576.8 36.3,575.5 37.3,575.1 37.1,574.0 36.0,574.0 36.3,572.5 37.3,572.9 38.0,572.0 37.2,571.2 38.5,570.3 38.9,571.3 40.0,571.1 40.0,570.0 41.5,570.3 41.1,571.3 42.0,572.0 42.8,571.2 43.7,572.5 42.7,572.9 42.9,574.0" fill="#c8c8c8"/><circle cx="40" cy="574" r="1.2" fill="#333"/><path d="M38,600l2,2l-2,2M41,600l2,2l-2,2" stroke="#ddd" fill="none"/><path d="M5,605L7.5,608L12,602" stroke="#fff" stroke-width="1.6" fill="none"/><path d="M5,641L7.5,644L12,638" stroke="#fff" stroke-width="1.6" fill="none"/><path d="M5,653L7.5,656L12,650" stroke="#fff" stroke-width="1.6" fill="none"/><path d="M5,665L7.5,668L12,662" stroke="#fff" stroke-width="1.6" fill="none"/><path d="M5,677L7.5,680L12,674" stroke="#fff" stroke-width="1.6" fill="none"/></svg>
</body></html>
